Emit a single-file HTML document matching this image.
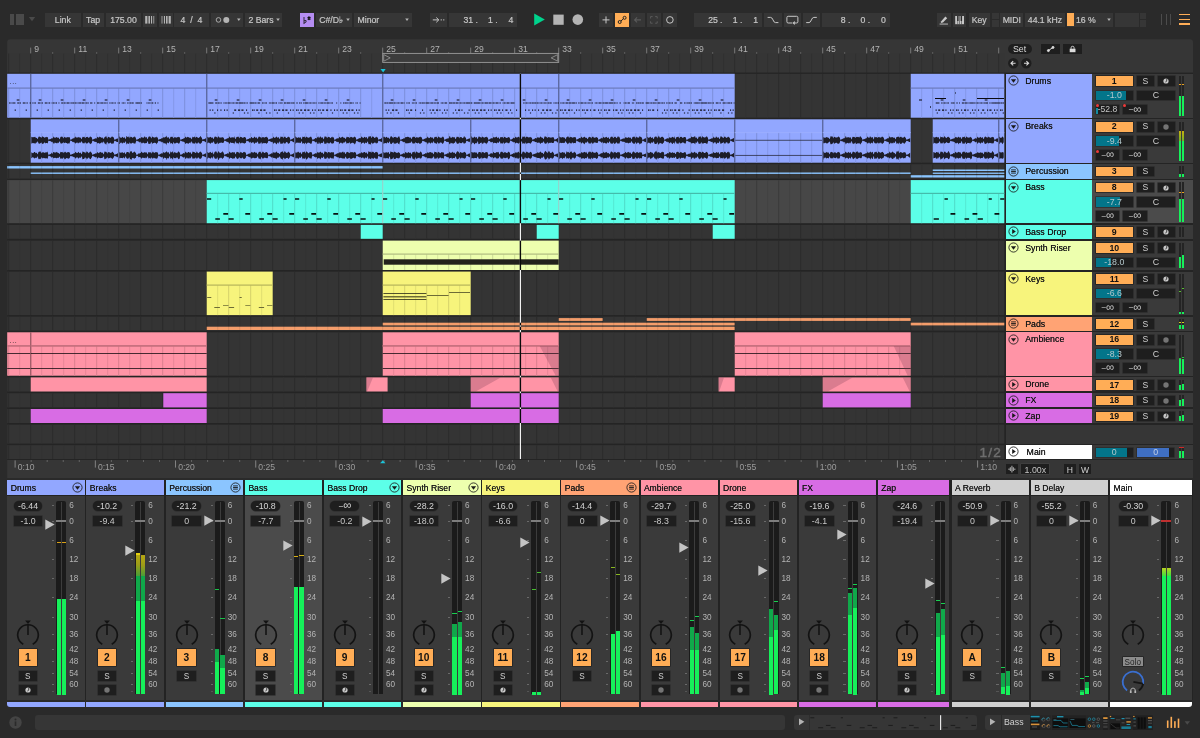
<!DOCTYPE html><html lang="en"><head><meta charset="utf-8"><title>Arrangement</title><style>
html,body{margin:0;padding:0;background:#2a2a2a;}
body{width:1200px;height:738px;position:relative;overflow:hidden;will-change:transform;font-family:"Liberation Sans",sans-serif;font-size:8.7px;color:#c8c8c8;-webkit-font-smoothing:antialiased;}
.a{position:absolute;box-sizing:border-box;}
.t{text-align:center;color:#c8c8c8;white-space:nowrap;overflow:hidden;-webkit-text-stroke:0.2px #c8c8c8;}
.t .s{top:1.2px;}
.num{font-family:"Liberation Sans",sans-serif;letter-spacing:0.3px;}
.s{position:relative;top:0.7px;}
svg{overflow:visible;display:block;}
svg text{font-family:"Liberation Sans",sans-serif;}
</style></head><body>
<div class="a" style="left:10px;top:14px;width:4px;height:10.75px;background:#4a4a4a;"></div>
<div class="a" style="left:16px;top:14px;width:8px;height:10.75px;background:#4a4a4a;"></div>
<svg class="a" style="left:28px;top:16px" width="8" height="6" viewBox="0 0 8 6"><path d="M0.8 1 L7.2 1 L4 5.2 Z" fill="#4a4a4a"/></svg>
<div class="a t" style="left:45px;top:12.75px;width:35.6px;height:13.75px;background:#363636;line-height:13.75px;"><span class="s">Link</span></div>
<div class="a t" style="left:82.5px;top:12.75px;width:21.25px;height:13.75px;background:#363636;line-height:13.75px;"><span class="s">Tap</span></div>
<div class="a t" style="left:106px;top:12.75px;width:35px;height:13.75px;background:#363636;line-height:13.75px;"><span class="s">175.00</span></div>
<div class="a t" style="left:142.75px;top:12.75px;width:13.85px;height:13.75px;background:#363636;line-height:13.75px;"></div>
<svg class="a" style="left:142.75px;top:12.75px" width="14" height="13.75" viewBox="0 0 14 13.75"><g fill="#b4b4b4"><rect x="2.2" y="3" width="2.2" height="7.6"/><rect x="5.4" y="3" width="1.6" height="7.6"/><rect x="8" y="3" width="1.1" height="7.6"/><rect x="10.4" y="3" width="0.8" height="7.6"/></g></svg>
<div class="a t" style="left:158.5px;top:12.75px;width:14px;height:13.75px;background:#363636;line-height:13.75px;"></div>
<svg class="a" style="left:158.5px;top:12.75px" width="14" height="13.75" viewBox="0 0 14 13.75"><g fill="#b4b4b4"><rect x="2.6" y="3" width="0.8" height="7.6"/><rect x="4.9" y="3" width="1.1" height="7.6"/><rect x="7" y="3" width="1.6" height="7.6"/><rect x="9.6" y="3" width="2.2" height="7.6"/></g></svg>
<div class="a t" style="left:174px;top:12.75px;width:34.75px;height:13.75px;background:#363636;line-height:13.75px;"><span class="s">4&nbsp; /&nbsp; 4</span></div>
<div class="a t" style="left:211px;top:12.75px;width:32px;height:13.75px;background:#363636;line-height:13.75px;"></div>
<svg class="a" style="left:211px;top:12.75px" width="32" height="13.75" viewBox="0 0 32 13.75"><circle cx="7.5" cy="6.9" r="2.3" fill="none" stroke="#b4b4b4" stroke-width="0.9"/><circle cx="15.3" cy="6.9" r="3" fill="#b4b4b4"/><path d="M26 5.5 L29.6 5.5 L27.8 8.1 Z" fill="#b4b4b4"/></svg>
<div class="a t" style="left:245px;top:12.75px;width:37.25px;height:13.75px;background:#363636;line-height:13.75px;text-align:left;padding-left:3.5px;box-sizing:border-box;"><span class="s">2 Bars</span></div>
<svg class="a" style="left:274px;top:12.75px" width="8" height="13.75" viewBox="0 0 8 13.75"><path d="M2.2 5.5 L5.8 5.5 L4 8.1 Z" fill="#b4b4b4"/></svg>
<div class="a" style="left:300px;top:12.5px;width:14px;height:14.25px;background:#b58df2;"></div>
<svg class="a" style="left:300px;top:12.5px" width="14" height="14.25" viewBox="0 0 14 14.25"><g fill="#111"><path d="M3.6 4 L3.6 11.2 L6.4 9 Q7.2 7.4 5.6 7 L4.4 7.4 L4.4 4 Z M4.4 8.2 L5.4 7.8 Q6 8.2 5.4 9 L4.4 9.8 Z"/><rect x="7.4" y="4" width="3.2" height="0.9"/><rect x="7.4" y="5.6" width="3.2" height="0.9"/><rect x="8" y="3.4" width="0.8" height="3.7"/><rect x="9.3" y="3.4" width="0.8" height="3.7"/></g></svg>
<div class="a t" style="left:316.25px;top:12.75px;width:35.75px;height:13.75px;background:#363636;line-height:13.75px;text-align:left;padding-left:3px;box-sizing:border-box;"><span class="s">C#/D&#9837;</span></div>
<svg class="a" style="left:344px;top:12.75px" width="8" height="13.75" viewBox="0 0 8 13.75"><path d="M2.2 5.5 L5.8 5.5 L4 8.1 Z" fill="#b4b4b4"/></svg>
<div class="a t" style="left:354px;top:12.75px;width:58.25px;height:13.75px;background:#363636;line-height:13.75px;text-align:left;padding-left:3.5px;box-sizing:border-box;"><span class="s">Minor</span></div>
<svg class="a" style="left:402.5px;top:12.75px" width="8" height="13.75" viewBox="0 0 8 13.75"><path d="M2.2 5.5 L5.8 5.5 L4 8.1 Z" fill="#b4b4b4"/></svg>
<div class="a t" style="left:430px;top:12.75px;width:17.2px;height:13.75px;background:#363636;line-height:13.75px;"></div>
<svg class="a" style="left:430px;top:12.75px" width="17.2" height="13.75" viewBox="0 0 17.2 13.75"><g stroke="#c8c8c8" stroke-width="1" fill="none"><path d="M2.8 6.9 L8.6 6.9 M6.3 4.5 L8.8 6.9 L6.3 9.3"/><path d="M10.6 6.9 L12 6.9 M13 6.9 L14.4 6.9" stroke-width="0.9"/></g></svg>
<div class="a t" style="left:449px;top:12.75px;width:68.3px;height:13.75px;background:#363636;line-height:13.75px;"></div>
<div class="a" style="left:453.1px;top:13.25px;width:20px;height:13.75px;line-height:13.75px;text-align:right;color:#c8c8c8;-webkit-text-stroke:0.2px #c8c8c8;"><span class="s">31</span></div>
<div class="a" style="left:472.9px;top:13.25px;width:20px;height:13.75px;line-height:13.75px;text-align:right;color:#c8c8c8;-webkit-text-stroke:0.2px #c8c8c8;"><span class="s">1</span></div>
<div class="a" style="left:493.3px;top:13.25px;width:20px;height:13.75px;line-height:13.75px;text-align:right;color:#c8c8c8;-webkit-text-stroke:0.2px #c8c8c8;"><span class="s">4</span></div>
<div class="a" style="left:475.4px;top:13.25px;width:4px;height:13.75px;line-height:13.75px;text-align:left;color:#c8c8c8;-webkit-text-stroke:0.2px #c8c8c8;"><span class="s">.</span></div>
<div class="a" style="left:495.2px;top:13.25px;width:4px;height:13.75px;line-height:13.75px;text-align:left;color:#c8c8c8;-webkit-text-stroke:0.2px #c8c8c8;"><span class="s">.</span></div>
<svg class="a" style="left:532px;top:12px" width="50" height="16" viewBox="0 0 50 16"><path d="M2.2 1.6 L12.8 7.6 L2.2 13.6 Z" fill="#00d38d"/><rect x="21.3" y="2.6" width="10.4" height="10.2" fill="#b4b4b4"/><circle cx="45.8" cy="7.6" r="5.3" fill="#b4b4b4"/></svg>
<div class="a t" style="left:599px;top:12.75px;width:14px;height:13.75px;background:#363636;line-height:13.75px;"></div>
<svg class="a" style="left:599px;top:12.75px" width="14" height="13.75" viewBox="0 0 14 13.75"><path d="M7 3.4 L7 10.4 M3.5 6.9 L10.5 6.9" stroke="#c8c8c8" stroke-width="1" fill="none"/></svg>
<div class="a t" style="left:615px;top:12.75px;width:14px;height:13.75px;background:#ffad56;line-height:13.75px;"></div>
<svg class="a" style="left:615px;top:12.75px" width="14" height="13.75" viewBox="0 0 14 13.75"><g stroke="#222" stroke-width="1" fill="none"><circle cx="4.7" cy="9" r="1.5"/><circle cx="9.6" cy="4.8" r="1.5"/><path d="M5.9 8 L8.4 5.8"/></g></svg>
<div class="a t" style="left:631.3px;top:12.75px;width:13.7px;height:13.75px;background:#363636;line-height:13.75px;"></div>
<svg class="a" style="left:631.3px;top:12.75px" width="13.7" height="13.75" viewBox="0 0 13.7 13.75"><path d="M3.6 6.9 L10 6.9 M6.1 4.4 L3.6 6.9 L6.1 9.4" stroke="#5a5a5a" stroke-width="1.1" fill="none"/></svg>
<div class="a t" style="left:646.9px;top:12.75px;width:13.8px;height:13.75px;background:#363636;line-height:13.75px;"></div>
<svg class="a" style="left:646.9px;top:12.75px" width="13.8" height="13.75" viewBox="0 0 13.8 13.75"><path d="M3.6 5.5 L3.6 3.6 L5.6 3.6 M8.2 3.6 L10.2 3.6 L10.2 5.5 M10.2 8.3 L10.2 10.2 L8.2 10.2 M5.6 10.2 L3.6 10.2 L3.6 8.3" stroke="#5a5a5a" stroke-width="1" fill="none"/></svg>
<div class="a t" style="left:662.9px;top:12.75px;width:13.9px;height:13.75px;background:#363636;line-height:13.75px;"></div>
<svg class="a" style="left:662.9px;top:12.75px" width="13.9" height="13.75" viewBox="0 0 13.9 13.75"><circle cx="6.9" cy="6.9" r="3.3" fill="none" stroke="#c8c8c8" stroke-width="1"/></svg>
<div class="a t" style="left:694px;top:12.75px;width:68px;height:13.75px;background:#363636;line-height:13.75px;"></div>
<div class="a" style="left:697.8px;top:13.25px;width:20px;height:13.75px;line-height:13.75px;text-align:right;color:#c8c8c8;-webkit-text-stroke:0.2px #c8c8c8;"><span class="s">25</span></div>
<div class="a" style="left:717.6px;top:13.25px;width:20px;height:13.75px;line-height:13.75px;text-align:right;color:#c8c8c8;-webkit-text-stroke:0.2px #c8c8c8;"><span class="s">1</span></div>
<div class="a" style="left:738px;top:13.25px;width:20px;height:13.75px;line-height:13.75px;text-align:right;color:#c8c8c8;-webkit-text-stroke:0.2px #c8c8c8;"><span class="s">1</span></div>
<div class="a" style="left:720.1px;top:13.25px;width:4px;height:13.75px;line-height:13.75px;text-align:left;color:#c8c8c8;-webkit-text-stroke:0.2px #c8c8c8;"><span class="s">.</span></div>
<div class="a" style="left:739.9px;top:13.25px;width:4px;height:13.75px;line-height:13.75px;text-align:left;color:#c8c8c8;-webkit-text-stroke:0.2px #c8c8c8;"><span class="s">.</span></div>
<div class="a t" style="left:764px;top:12.75px;width:17.9px;height:13.75px;background:#363636;line-height:13.75px;"></div>
<svg class="a" style="left:764px;top:12.75px" width="18" height="13.75" viewBox="0 0 18 13.75"><path d="M3.6 4.4 L6.6 4.4 Q8 4.4 9 6.9 Q10 9.6 11.4 9.6 L14.4 9.6" stroke="#c8c8c8" stroke-width="1" fill="none"/></svg>
<div class="a t" style="left:783.8px;top:12.75px;width:17.2px;height:13.75px;background:#363636;line-height:13.75px;"></div>
<svg class="a" style="left:783.8px;top:12.75px" width="17.2" height="13.75" viewBox="0 0 17.2 13.75"><path d="M8.2 10 L4.2 10 Q2.9 10 2.9 8.7 L2.9 4.6 Q2.9 3.3 4.2 3.3 L12.6 3.3 Q13.9 3.3 13.9 4.6 L13.9 8.7 Q13.9 10 12.6 10 L10.5 10" stroke="#c8c8c8" stroke-width="1" fill="none"/><path d="M10.8 8 L8.4 10 L10.8 12 Z" fill="#c8c8c8"/></svg>
<div class="a t" style="left:802.7px;top:12.75px;width:17.1px;height:13.75px;background:#363636;line-height:13.75px;"></div>
<svg class="a" style="left:802.7px;top:12.75px" width="17.1" height="13.75" viewBox="0 0 17.1 13.75"><path d="M3.2 9.6 L6 9.6 Q7.4 9.6 8.4 6.9 Q9.4 4.4 10.8 4.4 L13.8 4.4" stroke="#c8c8c8" stroke-width="1" fill="none"/></svg>
<div class="a t" style="left:821.7px;top:12.75px;width:68.1px;height:13.75px;background:#363636;line-height:13.75px;"></div>
<div class="a" style="left:825.6px;top:13.25px;width:20px;height:13.75px;line-height:13.75px;text-align:right;color:#c8c8c8;-webkit-text-stroke:0.2px #c8c8c8;"><span class="s">8</span></div>
<div class="a" style="left:845.4px;top:13.25px;width:20px;height:13.75px;line-height:13.75px;text-align:right;color:#c8c8c8;-webkit-text-stroke:0.2px #c8c8c8;"><span class="s">0</span></div>
<div class="a" style="left:865.8px;top:13.25px;width:20px;height:13.75px;line-height:13.75px;text-align:right;color:#c8c8c8;-webkit-text-stroke:0.2px #c8c8c8;"><span class="s">0</span></div>
<div class="a" style="left:847.9px;top:13.25px;width:4px;height:13.75px;line-height:13.75px;text-align:left;color:#c8c8c8;-webkit-text-stroke:0.2px #c8c8c8;"><span class="s">.</span></div>
<div class="a" style="left:867.7px;top:13.25px;width:4px;height:13.75px;line-height:13.75px;text-align:left;color:#c8c8c8;-webkit-text-stroke:0.2px #c8c8c8;"><span class="s">.</span></div>
<div class="a t" style="left:937px;top:12.75px;width:13.7px;height:13.75px;background:#363636;line-height:13.75px;"></div>
<svg class="a" style="left:937px;top:12.75px" width="13.7" height="13.75" viewBox="0 0 13.7 13.75"><path d="M4.2 8.2 L8.4 3.6 L10.2 5.2 L6 9.6 L3.8 9.9 Z" fill="#c8c8c8"/><rect x="2.6" y="10.6" width="8.4" height="0.9" fill="#c8c8c8"/></svg>
<div class="a t" style="left:953px;top:12.75px;width:13.2px;height:13.75px;background:#363636;line-height:13.75px;"></div>
<svg class="a" style="left:953px;top:12.75px" width="13.2" height="13.75" viewBox="0 0 13.2 13.75"><rect x="2.2" y="3" width="8.8" height="8.2" fill="#c8c8c8"/><g fill="#2a2a2a"><rect x="4.1" y="3" width="1.5" height="5"/><rect x="7.6" y="3" width="1.5" height="5"/><rect x="4.6" y="8" width="0.5" height="3.2"/><rect x="6.4" y="3" width="0.5" height="8.2"/><rect x="8.1" y="8" width="0.5" height="3.2"/></g></svg>
<div class="a t" style="left:968.6px;top:12.75px;width:21.2px;height:13.75px;background:#363636;line-height:13.75px;"><span class="s">Key</span></div>
<div class="a" style="left:991.5px;top:12.75px;width:7px;height:6.5px;background:#363636;"></div>
<div class="a" style="left:991.5px;top:20px;width:7px;height:6.5px;background:#363636;"></div>
<div class="a t" style="left:1000.3px;top:12.75px;width:23px;height:13.75px;background:#363636;line-height:13.75px;"><span class="s">MIDI</span></div>
<div class="a t" style="left:1025px;top:12.75px;width:39.9px;height:13.75px;background:#363636;line-height:13.75px;"><span class="s">44.1 kHz</span></div>
<div class="a t" style="left:1066.9px;top:12.75px;width:46.5px;height:13.75px;background:#363636;line-height:13.75px;text-align:left;padding-left:9px;box-sizing:border-box;"><span class="s">16 %</span></div>
<div class="a" style="left:1067.3px;top:13.2px;width:6.4px;height:12.8px;background:#ffad56;"></div>
<svg class="a" style="left:1104.5px;top:12.75px" width="8" height="13.75" viewBox="0 0 8 13.75"><path d="M2.2 5.5 L5.8 5.5 L4 8.1 Z" fill="#b4b4b4"/></svg>
<div class="a t" style="left:1115px;top:12.75px;width:23.5px;height:13.75px;background:#363636;line-height:13.75px;"></div>
<div class="a" style="left:1140px;top:12.75px;width:6.3px;height:6.5px;background:#363636;"></div>
<div class="a" style="left:1140px;top:20px;width:6.3px;height:6.5px;background:#363636;"></div>
<div class="a" style="left:1160.8px;top:13.75px;width:1px;height:11px;background:#4c4c4c;"></div>
<div class="a" style="left:1165.7px;top:13.75px;width:1px;height:11px;background:#4c4c4c;"></div>
<div class="a" style="left:1170.2px;top:13.75px;width:1px;height:11px;background:#4c4c4c;"></div>
<div class="a" style="left:1179px;top:13.7px;width:11px;height:1.6px;background:#ffad56;"></div>
<div class="a" style="left:1179px;top:18.6px;width:11px;height:1.6px;background:#ffad56;"></div>
<div class="a" style="left:1179px;top:23.4px;width:11px;height:1.6px;background:#ffad56;"></div>
<svg class="a" style="left:0;top:0" width="1200" height="738" viewBox="0 0 1200 738" shape-rendering="auto"><path d="M7.2 478 V42.2 Q7.2 39.2 10.2 39.2 H1190 Q1193 39.2 1193 42.2 V478 Z" fill="#363636"/><rect x="7.2" y="53.5" width="997.1" height="20" fill="#353535"/><path d="M8.7 53.6V73.8M30.7 53.6V73.8M52.7 53.6V73.8M74.7 53.6V73.8M96.7 53.6V73.8M118.7 53.6V73.8M140.7 53.6V73.8M162.7 53.6V73.8M184.7 53.6V73.8M206.7 53.6V73.8M228.7 53.6V73.8M250.7 53.6V73.8M272.7 53.6V73.8M294.7 53.6V73.8M316.7 53.6V73.8M338.7 53.6V73.8M360.7 53.6V73.8M382.7 53.6V73.8M404.7 53.6V73.8M426.7 53.6V73.8M448.7 53.6V73.8M470.7 53.6V73.8M492.7 53.6V73.8M514.7 53.6V73.8M536.7 53.6V73.8M558.7 53.6V73.8M580.7 53.6V73.8M602.7 53.6V73.8M624.7 53.6V73.8M646.7 53.6V73.8M668.7 53.6V73.8M690.7 53.6V73.8M712.7 53.6V73.8M734.7 53.6V73.8M756.7 53.6V73.8M778.7 53.6V73.8M800.7 53.6V73.8M822.7 53.6V73.8M844.7 53.6V73.8M866.7 53.6V73.8M888.7 53.6V73.8M910.7 53.6V73.8M932.7 53.6V73.8M954.7 53.6V73.8M976.7 53.6V73.8M998.7 53.6V73.8" stroke="#2c2c2c" stroke-width="1" fill="none"/><path d="M19.7 53.6V73.8M41.7 53.6V73.8M63.7 53.6V73.8M85.7 53.6V73.8M107.7 53.6V73.8M129.7 53.6V73.8M151.7 53.6V73.8M173.7 53.6V73.8M195.7 53.6V73.8M217.7 53.6V73.8M239.7 53.6V73.8M261.7 53.6V73.8M283.7 53.6V73.8M305.7 53.6V73.8M327.7 53.6V73.8M349.7 53.6V73.8M371.7 53.6V73.8M393.7 53.6V73.8M415.7 53.6V73.8M437.7 53.6V73.8M459.7 53.6V73.8M481.7 53.6V73.8M503.7 53.6V73.8M525.7 53.6V73.8M547.7 53.6V73.8M569.7 53.6V73.8M591.7 53.6V73.8M613.7 53.6V73.8M635.7 53.6V73.8M657.7 53.6V73.8M679.7 53.6V73.8M701.7 53.6V73.8M723.7 53.6V73.8M745.7 53.6V73.8M767.7 53.6V73.8M789.7 53.6V73.8M811.7 53.6V73.8M833.7 53.6V73.8M855.7 53.6V73.8M877.7 53.6V73.8M899.7 53.6V73.8M921.7 53.6V73.8M943.7 53.6V73.8M965.7 53.6V73.8M987.7 53.6V73.8" stroke="#303030" stroke-width="0.9" fill="none"/><rect x="7.2" y="72.6" width="1185.8" height="387.4" fill="#242424"/><rect x="7.2" y="73.8" width="997.1" height="43.9" fill="#343434"/><path d="M8.7 73.8V117.7M30.7 73.8V117.7M52.7 73.8V117.7M74.7 73.8V117.7M96.7 73.8V117.7M118.7 73.8V117.7M140.7 73.8V117.7M162.7 73.8V117.7M184.7 73.8V117.7M206.7 73.8V117.7M228.7 73.8V117.7M250.7 73.8V117.7M272.7 73.8V117.7M294.7 73.8V117.7M316.7 73.8V117.7M338.7 73.8V117.7M360.7 73.8V117.7M382.7 73.8V117.7M404.7 73.8V117.7M426.7 73.8V117.7M448.7 73.8V117.7M470.7 73.8V117.7M492.7 73.8V117.7M514.7 73.8V117.7M536.7 73.8V117.7M558.7 73.8V117.7M580.7 73.8V117.7M602.7 73.8V117.7M624.7 73.8V117.7M646.7 73.8V117.7M668.7 73.8V117.7M690.7 73.8V117.7M712.7 73.8V117.7M734.7 73.8V117.7M756.7 73.8V117.7M778.7 73.8V117.7M800.7 73.8V117.7M822.7 73.8V117.7M844.7 73.8V117.7M866.7 73.8V117.7M888.7 73.8V117.7M910.7 73.8V117.7M932.7 73.8V117.7M954.7 73.8V117.7M976.7 73.8V117.7M998.7 73.8V117.7" stroke="#2c2c2c" stroke-width="1" fill="none"/><path d="M19.7 73.8V117.7M41.7 73.8V117.7M63.7 73.8V117.7M85.7 73.8V117.7M107.7 73.8V117.7M129.7 73.8V117.7M151.7 73.8V117.7M173.7 73.8V117.7M195.7 73.8V117.7M217.7 73.8V117.7M239.7 73.8V117.7M261.7 73.8V117.7M283.7 73.8V117.7M305.7 73.8V117.7M327.7 73.8V117.7M349.7 73.8V117.7M371.7 73.8V117.7M393.7 73.8V117.7M415.7 73.8V117.7M437.7 73.8V117.7M459.7 73.8V117.7M481.7 73.8V117.7M503.7 73.8V117.7M525.7 73.8V117.7M547.7 73.8V117.7M569.7 73.8V117.7M591.7 73.8V117.7M613.7 73.8V117.7M635.7 73.8V117.7M657.7 73.8V117.7M679.7 73.8V117.7M701.7 73.8V117.7M723.7 73.8V117.7M745.7 73.8V117.7M767.7 73.8V117.7M789.7 73.8V117.7M811.7 73.8V117.7M833.7 73.8V117.7M855.7 73.8V117.7M877.7 73.8V117.7M899.7 73.8V117.7M921.7 73.8V117.7M943.7 73.8V117.7M965.7 73.8V117.7M987.7 73.8V117.7" stroke="#323232" stroke-width="0.9" fill="none"/><rect x="7.2" y="119.3" width="997.1" height="43.4" fill="#343434"/><path d="M8.7 119.3V162.7M30.7 119.3V162.7M52.7 119.3V162.7M74.7 119.3V162.7M96.7 119.3V162.7M118.7 119.3V162.7M140.7 119.3V162.7M162.7 119.3V162.7M184.7 119.3V162.7M206.7 119.3V162.7M228.7 119.3V162.7M250.7 119.3V162.7M272.7 119.3V162.7M294.7 119.3V162.7M316.7 119.3V162.7M338.7 119.3V162.7M360.7 119.3V162.7M382.7 119.3V162.7M404.7 119.3V162.7M426.7 119.3V162.7M448.7 119.3V162.7M470.7 119.3V162.7M492.7 119.3V162.7M514.7 119.3V162.7M536.7 119.3V162.7M558.7 119.3V162.7M580.7 119.3V162.7M602.7 119.3V162.7M624.7 119.3V162.7M646.7 119.3V162.7M668.7 119.3V162.7M690.7 119.3V162.7M712.7 119.3V162.7M734.7 119.3V162.7M756.7 119.3V162.7M778.7 119.3V162.7M800.7 119.3V162.7M822.7 119.3V162.7M844.7 119.3V162.7M866.7 119.3V162.7M888.7 119.3V162.7M910.7 119.3V162.7M932.7 119.3V162.7M954.7 119.3V162.7M976.7 119.3V162.7M998.7 119.3V162.7" stroke="#2c2c2c" stroke-width="1" fill="none"/><path d="M19.7 119.3V162.7M41.7 119.3V162.7M63.7 119.3V162.7M85.7 119.3V162.7M107.7 119.3V162.7M129.7 119.3V162.7M151.7 119.3V162.7M173.7 119.3V162.7M195.7 119.3V162.7M217.7 119.3V162.7M239.7 119.3V162.7M261.7 119.3V162.7M283.7 119.3V162.7M305.7 119.3V162.7M327.7 119.3V162.7M349.7 119.3V162.7M371.7 119.3V162.7M393.7 119.3V162.7M415.7 119.3V162.7M437.7 119.3V162.7M459.7 119.3V162.7M481.7 119.3V162.7M503.7 119.3V162.7M525.7 119.3V162.7M547.7 119.3V162.7M569.7 119.3V162.7M591.7 119.3V162.7M613.7 119.3V162.7M635.7 119.3V162.7M657.7 119.3V162.7M679.7 119.3V162.7M701.7 119.3V162.7M723.7 119.3V162.7M745.7 119.3V162.7M767.7 119.3V162.7M789.7 119.3V162.7M811.7 119.3V162.7M833.7 119.3V162.7M855.7 119.3V162.7M877.7 119.3V162.7M899.7 119.3V162.7M921.7 119.3V162.7M943.7 119.3V162.7M965.7 119.3V162.7M987.7 119.3V162.7" stroke="#323232" stroke-width="0.9" fill="none"/><rect x="7.2" y="164.2" width="997.1" height="14.4" fill="#343434"/><path d="M8.7 164.2V178.6M30.7 164.2V178.6M52.7 164.2V178.6M74.7 164.2V178.6M96.7 164.2V178.6M118.7 164.2V178.6M140.7 164.2V178.6M162.7 164.2V178.6M184.7 164.2V178.6M206.7 164.2V178.6M228.7 164.2V178.6M250.7 164.2V178.6M272.7 164.2V178.6M294.7 164.2V178.6M316.7 164.2V178.6M338.7 164.2V178.6M360.7 164.2V178.6M382.7 164.2V178.6M404.7 164.2V178.6M426.7 164.2V178.6M448.7 164.2V178.6M470.7 164.2V178.6M492.7 164.2V178.6M514.7 164.2V178.6M536.7 164.2V178.6M558.7 164.2V178.6M580.7 164.2V178.6M602.7 164.2V178.6M624.7 164.2V178.6M646.7 164.2V178.6M668.7 164.2V178.6M690.7 164.2V178.6M712.7 164.2V178.6M734.7 164.2V178.6M756.7 164.2V178.6M778.7 164.2V178.6M800.7 164.2V178.6M822.7 164.2V178.6M844.7 164.2V178.6M866.7 164.2V178.6M888.7 164.2V178.6M910.7 164.2V178.6M932.7 164.2V178.6M954.7 164.2V178.6M976.7 164.2V178.6M998.7 164.2V178.6" stroke="#2c2c2c" stroke-width="1" fill="none"/><path d="M19.7 164.2V178.6M41.7 164.2V178.6M63.7 164.2V178.6M85.7 164.2V178.6M107.7 164.2V178.6M129.7 164.2V178.6M151.7 164.2V178.6M173.7 164.2V178.6M195.7 164.2V178.6M217.7 164.2V178.6M239.7 164.2V178.6M261.7 164.2V178.6M283.7 164.2V178.6M305.7 164.2V178.6M327.7 164.2V178.6M349.7 164.2V178.6M371.7 164.2V178.6M393.7 164.2V178.6M415.7 164.2V178.6M437.7 164.2V178.6M459.7 164.2V178.6M481.7 164.2V178.6M503.7 164.2V178.6M525.7 164.2V178.6M547.7 164.2V178.6M569.7 164.2V178.6M591.7 164.2V178.6M613.7 164.2V178.6M635.7 164.2V178.6M657.7 164.2V178.6M679.7 164.2V178.6M701.7 164.2V178.6M723.7 164.2V178.6M745.7 164.2V178.6M767.7 164.2V178.6M789.7 164.2V178.6M811.7 164.2V178.6M833.7 164.2V178.6M855.7 164.2V178.6M877.7 164.2V178.6M899.7 164.2V178.6M921.7 164.2V178.6M943.7 164.2V178.6M965.7 164.2V178.6M987.7 164.2V178.6" stroke="#323232" stroke-width="0.9" fill="none"/><rect x="7.2" y="180.1" width="997.1" height="43.1" fill="#474747"/><path d="M8.7 180.1V223.2M30.7 180.1V223.2M52.7 180.1V223.2M74.7 180.1V223.2M96.7 180.1V223.2M118.7 180.1V223.2M140.7 180.1V223.2M162.7 180.1V223.2M184.7 180.1V223.2M206.7 180.1V223.2M228.7 180.1V223.2M250.7 180.1V223.2M272.7 180.1V223.2M294.7 180.1V223.2M316.7 180.1V223.2M338.7 180.1V223.2M360.7 180.1V223.2M382.7 180.1V223.2M404.7 180.1V223.2M426.7 180.1V223.2M448.7 180.1V223.2M470.7 180.1V223.2M492.7 180.1V223.2M514.7 180.1V223.2M536.7 180.1V223.2M558.7 180.1V223.2M580.7 180.1V223.2M602.7 180.1V223.2M624.7 180.1V223.2M646.7 180.1V223.2M668.7 180.1V223.2M690.7 180.1V223.2M712.7 180.1V223.2M734.7 180.1V223.2M756.7 180.1V223.2M778.7 180.1V223.2M800.7 180.1V223.2M822.7 180.1V223.2M844.7 180.1V223.2M866.7 180.1V223.2M888.7 180.1V223.2M910.7 180.1V223.2M932.7 180.1V223.2M954.7 180.1V223.2M976.7 180.1V223.2M998.7 180.1V223.2" stroke="#3b3b3b" stroke-width="1" fill="none"/><path d="M19.7 180.1V223.2M41.7 180.1V223.2M63.7 180.1V223.2M85.7 180.1V223.2M107.7 180.1V223.2M129.7 180.1V223.2M151.7 180.1V223.2M173.7 180.1V223.2M195.7 180.1V223.2M217.7 180.1V223.2M239.7 180.1V223.2M261.7 180.1V223.2M283.7 180.1V223.2M305.7 180.1V223.2M327.7 180.1V223.2M349.7 180.1V223.2M371.7 180.1V223.2M393.7 180.1V223.2M415.7 180.1V223.2M437.7 180.1V223.2M459.7 180.1V223.2M481.7 180.1V223.2M503.7 180.1V223.2M525.7 180.1V223.2M547.7 180.1V223.2M569.7 180.1V223.2M591.7 180.1V223.2M613.7 180.1V223.2M635.7 180.1V223.2M657.7 180.1V223.2M679.7 180.1V223.2M701.7 180.1V223.2M723.7 180.1V223.2M745.7 180.1V223.2M767.7 180.1V223.2M789.7 180.1V223.2M811.7 180.1V223.2M833.7 180.1V223.2M855.7 180.1V223.2M877.7 180.1V223.2M899.7 180.1V223.2M921.7 180.1V223.2M943.7 180.1V223.2M965.7 180.1V223.2M987.7 180.1V223.2" stroke="#414141" stroke-width="0.9" fill="none"/><rect x="7.2" y="224.9" width="997.1" height="13.9" fill="#343434"/><path d="M8.7 224.9V238.8M30.7 224.9V238.8M52.7 224.9V238.8M74.7 224.9V238.8M96.7 224.9V238.8M118.7 224.9V238.8M140.7 224.9V238.8M162.7 224.9V238.8M184.7 224.9V238.8M206.7 224.9V238.8M228.7 224.9V238.8M250.7 224.9V238.8M272.7 224.9V238.8M294.7 224.9V238.8M316.7 224.9V238.8M338.7 224.9V238.8M360.7 224.9V238.8M382.7 224.9V238.8M404.7 224.9V238.8M426.7 224.9V238.8M448.7 224.9V238.8M470.7 224.9V238.8M492.7 224.9V238.8M514.7 224.9V238.8M536.7 224.9V238.8M558.7 224.9V238.8M580.7 224.9V238.8M602.7 224.9V238.8M624.7 224.9V238.8M646.7 224.9V238.8M668.7 224.9V238.8M690.7 224.9V238.8M712.7 224.9V238.8M734.7 224.9V238.8M756.7 224.9V238.8M778.7 224.9V238.8M800.7 224.9V238.8M822.7 224.9V238.8M844.7 224.9V238.8M866.7 224.9V238.8M888.7 224.9V238.8M910.7 224.9V238.8M932.7 224.9V238.8M954.7 224.9V238.8M976.7 224.9V238.8M998.7 224.9V238.8" stroke="#2c2c2c" stroke-width="1" fill="none"/><path d="M19.7 224.9V238.8M41.7 224.9V238.8M63.7 224.9V238.8M85.7 224.9V238.8M107.7 224.9V238.8M129.7 224.9V238.8M151.7 224.9V238.8M173.7 224.9V238.8M195.7 224.9V238.8M217.7 224.9V238.8M239.7 224.9V238.8M261.7 224.9V238.8M283.7 224.9V238.8M305.7 224.9V238.8M327.7 224.9V238.8M349.7 224.9V238.8M371.7 224.9V238.8M393.7 224.9V238.8M415.7 224.9V238.8M437.7 224.9V238.8M459.7 224.9V238.8M481.7 224.9V238.8M503.7 224.9V238.8M525.7 224.9V238.8M547.7 224.9V238.8M569.7 224.9V238.8M591.7 224.9V238.8M613.7 224.9V238.8M635.7 224.9V238.8M657.7 224.9V238.8M679.7 224.9V238.8M701.7 224.9V238.8M723.7 224.9V238.8M745.7 224.9V238.8M767.7 224.9V238.8M789.7 224.9V238.8M811.7 224.9V238.8M833.7 224.9V238.8M855.7 224.9V238.8M877.7 224.9V238.8M899.7 224.9V238.8M921.7 224.9V238.8M943.7 224.9V238.8M965.7 224.9V238.8M987.7 224.9V238.8" stroke="#323232" stroke-width="0.9" fill="none"/><rect x="7.2" y="240.6" width="997.1" height="29.4" fill="#343434"/><path d="M8.7 240.6V270M30.7 240.6V270M52.7 240.6V270M74.7 240.6V270M96.7 240.6V270M118.7 240.6V270M140.7 240.6V270M162.7 240.6V270M184.7 240.6V270M206.7 240.6V270M228.7 240.6V270M250.7 240.6V270M272.7 240.6V270M294.7 240.6V270M316.7 240.6V270M338.7 240.6V270M360.7 240.6V270M382.7 240.6V270M404.7 240.6V270M426.7 240.6V270M448.7 240.6V270M470.7 240.6V270M492.7 240.6V270M514.7 240.6V270M536.7 240.6V270M558.7 240.6V270M580.7 240.6V270M602.7 240.6V270M624.7 240.6V270M646.7 240.6V270M668.7 240.6V270M690.7 240.6V270M712.7 240.6V270M734.7 240.6V270M756.7 240.6V270M778.7 240.6V270M800.7 240.6V270M822.7 240.6V270M844.7 240.6V270M866.7 240.6V270M888.7 240.6V270M910.7 240.6V270M932.7 240.6V270M954.7 240.6V270M976.7 240.6V270M998.7 240.6V270" stroke="#2c2c2c" stroke-width="1" fill="none"/><path d="M19.7 240.6V270M41.7 240.6V270M63.7 240.6V270M85.7 240.6V270M107.7 240.6V270M129.7 240.6V270M151.7 240.6V270M173.7 240.6V270M195.7 240.6V270M217.7 240.6V270M239.7 240.6V270M261.7 240.6V270M283.7 240.6V270M305.7 240.6V270M327.7 240.6V270M349.7 240.6V270M371.7 240.6V270M393.7 240.6V270M415.7 240.6V270M437.7 240.6V270M459.7 240.6V270M481.7 240.6V270M503.7 240.6V270M525.7 240.6V270M547.7 240.6V270M569.7 240.6V270M591.7 240.6V270M613.7 240.6V270M635.7 240.6V270M657.7 240.6V270M679.7 240.6V270M701.7 240.6V270M723.7 240.6V270M745.7 240.6V270M767.7 240.6V270M789.7 240.6V270M811.7 240.6V270M833.7 240.6V270M855.7 240.6V270M877.7 240.6V270M899.7 240.6V270M921.7 240.6V270M943.7 240.6V270M965.7 240.6V270M987.7 240.6V270" stroke="#323232" stroke-width="0.9" fill="none"/><rect x="7.2" y="271.6" width="997.1" height="43.5" fill="#343434"/><path d="M8.7 271.6V315.1M30.7 271.6V315.1M52.7 271.6V315.1M74.7 271.6V315.1M96.7 271.6V315.1M118.7 271.6V315.1M140.7 271.6V315.1M162.7 271.6V315.1M184.7 271.6V315.1M206.7 271.6V315.1M228.7 271.6V315.1M250.7 271.6V315.1M272.7 271.6V315.1M294.7 271.6V315.1M316.7 271.6V315.1M338.7 271.6V315.1M360.7 271.6V315.1M382.7 271.6V315.1M404.7 271.6V315.1M426.7 271.6V315.1M448.7 271.6V315.1M470.7 271.6V315.1M492.7 271.6V315.1M514.7 271.6V315.1M536.7 271.6V315.1M558.7 271.6V315.1M580.7 271.6V315.1M602.7 271.6V315.1M624.7 271.6V315.1M646.7 271.6V315.1M668.7 271.6V315.1M690.7 271.6V315.1M712.7 271.6V315.1M734.7 271.6V315.1M756.7 271.6V315.1M778.7 271.6V315.1M800.7 271.6V315.1M822.7 271.6V315.1M844.7 271.6V315.1M866.7 271.6V315.1M888.7 271.6V315.1M910.7 271.6V315.1M932.7 271.6V315.1M954.7 271.6V315.1M976.7 271.6V315.1M998.7 271.6V315.1" stroke="#2c2c2c" stroke-width="1" fill="none"/><path d="M19.7 271.6V315.1M41.7 271.6V315.1M63.7 271.6V315.1M85.7 271.6V315.1M107.7 271.6V315.1M129.7 271.6V315.1M151.7 271.6V315.1M173.7 271.6V315.1M195.7 271.6V315.1M217.7 271.6V315.1M239.7 271.6V315.1M261.7 271.6V315.1M283.7 271.6V315.1M305.7 271.6V315.1M327.7 271.6V315.1M349.7 271.6V315.1M371.7 271.6V315.1M393.7 271.6V315.1M415.7 271.6V315.1M437.7 271.6V315.1M459.7 271.6V315.1M481.7 271.6V315.1M503.7 271.6V315.1M525.7 271.6V315.1M547.7 271.6V315.1M569.7 271.6V315.1M591.7 271.6V315.1M613.7 271.6V315.1M635.7 271.6V315.1M657.7 271.6V315.1M679.7 271.6V315.1M701.7 271.6V315.1M723.7 271.6V315.1M745.7 271.6V315.1M767.7 271.6V315.1M789.7 271.6V315.1M811.7 271.6V315.1M833.7 271.6V315.1M855.7 271.6V315.1M877.7 271.6V315.1M899.7 271.6V315.1M921.7 271.6V315.1M943.7 271.6V315.1M965.7 271.6V315.1M987.7 271.6V315.1" stroke="#323232" stroke-width="0.9" fill="none"/><rect x="7.2" y="316.6" width="997.1" height="14" fill="#343434"/><path d="M8.7 316.6V330.6M30.7 316.6V330.6M52.7 316.6V330.6M74.7 316.6V330.6M96.7 316.6V330.6M118.7 316.6V330.6M140.7 316.6V330.6M162.7 316.6V330.6M184.7 316.6V330.6M206.7 316.6V330.6M228.7 316.6V330.6M250.7 316.6V330.6M272.7 316.6V330.6M294.7 316.6V330.6M316.7 316.6V330.6M338.7 316.6V330.6M360.7 316.6V330.6M382.7 316.6V330.6M404.7 316.6V330.6M426.7 316.6V330.6M448.7 316.6V330.6M470.7 316.6V330.6M492.7 316.6V330.6M514.7 316.6V330.6M536.7 316.6V330.6M558.7 316.6V330.6M580.7 316.6V330.6M602.7 316.6V330.6M624.7 316.6V330.6M646.7 316.6V330.6M668.7 316.6V330.6M690.7 316.6V330.6M712.7 316.6V330.6M734.7 316.6V330.6M756.7 316.6V330.6M778.7 316.6V330.6M800.7 316.6V330.6M822.7 316.6V330.6M844.7 316.6V330.6M866.7 316.6V330.6M888.7 316.6V330.6M910.7 316.6V330.6M932.7 316.6V330.6M954.7 316.6V330.6M976.7 316.6V330.6M998.7 316.6V330.6" stroke="#2c2c2c" stroke-width="1" fill="none"/><path d="M19.7 316.6V330.6M41.7 316.6V330.6M63.7 316.6V330.6M85.7 316.6V330.6M107.7 316.6V330.6M129.7 316.6V330.6M151.7 316.6V330.6M173.7 316.6V330.6M195.7 316.6V330.6M217.7 316.6V330.6M239.7 316.6V330.6M261.7 316.6V330.6M283.7 316.6V330.6M305.7 316.6V330.6M327.7 316.6V330.6M349.7 316.6V330.6M371.7 316.6V330.6M393.7 316.6V330.6M415.7 316.6V330.6M437.7 316.6V330.6M459.7 316.6V330.6M481.7 316.6V330.6M503.7 316.6V330.6M525.7 316.6V330.6M547.7 316.6V330.6M569.7 316.6V330.6M591.7 316.6V330.6M613.7 316.6V330.6M635.7 316.6V330.6M657.7 316.6V330.6M679.7 316.6V330.6M701.7 316.6V330.6M723.7 316.6V330.6M745.7 316.6V330.6M767.7 316.6V330.6M789.7 316.6V330.6M811.7 316.6V330.6M833.7 316.6V330.6M855.7 316.6V330.6M877.7 316.6V330.6M899.7 316.6V330.6M921.7 316.6V330.6M943.7 316.6V330.6M965.7 316.6V330.6M987.7 316.6V330.6" stroke="#323232" stroke-width="0.9" fill="none"/><rect x="7.2" y="332.3" width="997.1" height="43.4" fill="#343434"/><path d="M8.7 332.3V375.7M30.7 332.3V375.7M52.7 332.3V375.7M74.7 332.3V375.7M96.7 332.3V375.7M118.7 332.3V375.7M140.7 332.3V375.7M162.7 332.3V375.7M184.7 332.3V375.7M206.7 332.3V375.7M228.7 332.3V375.7M250.7 332.3V375.7M272.7 332.3V375.7M294.7 332.3V375.7M316.7 332.3V375.7M338.7 332.3V375.7M360.7 332.3V375.7M382.7 332.3V375.7M404.7 332.3V375.7M426.7 332.3V375.7M448.7 332.3V375.7M470.7 332.3V375.7M492.7 332.3V375.7M514.7 332.3V375.7M536.7 332.3V375.7M558.7 332.3V375.7M580.7 332.3V375.7M602.7 332.3V375.7M624.7 332.3V375.7M646.7 332.3V375.7M668.7 332.3V375.7M690.7 332.3V375.7M712.7 332.3V375.7M734.7 332.3V375.7M756.7 332.3V375.7M778.7 332.3V375.7M800.7 332.3V375.7M822.7 332.3V375.7M844.7 332.3V375.7M866.7 332.3V375.7M888.7 332.3V375.7M910.7 332.3V375.7M932.7 332.3V375.7M954.7 332.3V375.7M976.7 332.3V375.7M998.7 332.3V375.7" stroke="#2c2c2c" stroke-width="1" fill="none"/><path d="M19.7 332.3V375.7M41.7 332.3V375.7M63.7 332.3V375.7M85.7 332.3V375.7M107.7 332.3V375.7M129.7 332.3V375.7M151.7 332.3V375.7M173.7 332.3V375.7M195.7 332.3V375.7M217.7 332.3V375.7M239.7 332.3V375.7M261.7 332.3V375.7M283.7 332.3V375.7M305.7 332.3V375.7M327.7 332.3V375.7M349.7 332.3V375.7M371.7 332.3V375.7M393.7 332.3V375.7M415.7 332.3V375.7M437.7 332.3V375.7M459.7 332.3V375.7M481.7 332.3V375.7M503.7 332.3V375.7M525.7 332.3V375.7M547.7 332.3V375.7M569.7 332.3V375.7M591.7 332.3V375.7M613.7 332.3V375.7M635.7 332.3V375.7M657.7 332.3V375.7M679.7 332.3V375.7M701.7 332.3V375.7M723.7 332.3V375.7M745.7 332.3V375.7M767.7 332.3V375.7M789.7 332.3V375.7M811.7 332.3V375.7M833.7 332.3V375.7M855.7 332.3V375.7M877.7 332.3V375.7M899.7 332.3V375.7M921.7 332.3V375.7M943.7 332.3V375.7M965.7 332.3V375.7M987.7 332.3V375.7" stroke="#323232" stroke-width="0.9" fill="none"/><rect x="7.2" y="377.4" width="997.1" height="14.1" fill="#343434"/><path d="M8.7 377.4V391.5M30.7 377.4V391.5M52.7 377.4V391.5M74.7 377.4V391.5M96.7 377.4V391.5M118.7 377.4V391.5M140.7 377.4V391.5M162.7 377.4V391.5M184.7 377.4V391.5M206.7 377.4V391.5M228.7 377.4V391.5M250.7 377.4V391.5M272.7 377.4V391.5M294.7 377.4V391.5M316.7 377.4V391.5M338.7 377.4V391.5M360.7 377.4V391.5M382.7 377.4V391.5M404.7 377.4V391.5M426.7 377.4V391.5M448.7 377.4V391.5M470.7 377.4V391.5M492.7 377.4V391.5M514.7 377.4V391.5M536.7 377.4V391.5M558.7 377.4V391.5M580.7 377.4V391.5M602.7 377.4V391.5M624.7 377.4V391.5M646.7 377.4V391.5M668.7 377.4V391.5M690.7 377.4V391.5M712.7 377.4V391.5M734.7 377.4V391.5M756.7 377.4V391.5M778.7 377.4V391.5M800.7 377.4V391.5M822.7 377.4V391.5M844.7 377.4V391.5M866.7 377.4V391.5M888.7 377.4V391.5M910.7 377.4V391.5M932.7 377.4V391.5M954.7 377.4V391.5M976.7 377.4V391.5M998.7 377.4V391.5" stroke="#2c2c2c" stroke-width="1" fill="none"/><path d="M19.7 377.4V391.5M41.7 377.4V391.5M63.7 377.4V391.5M85.7 377.4V391.5M107.7 377.4V391.5M129.7 377.4V391.5M151.7 377.4V391.5M173.7 377.4V391.5M195.7 377.4V391.5M217.7 377.4V391.5M239.7 377.4V391.5M261.7 377.4V391.5M283.7 377.4V391.5M305.7 377.4V391.5M327.7 377.4V391.5M349.7 377.4V391.5M371.7 377.4V391.5M393.7 377.4V391.5M415.7 377.4V391.5M437.7 377.4V391.5M459.7 377.4V391.5M481.7 377.4V391.5M503.7 377.4V391.5M525.7 377.4V391.5M547.7 377.4V391.5M569.7 377.4V391.5M591.7 377.4V391.5M613.7 377.4V391.5M635.7 377.4V391.5M657.7 377.4V391.5M679.7 377.4V391.5M701.7 377.4V391.5M723.7 377.4V391.5M745.7 377.4V391.5M767.7 377.4V391.5M789.7 377.4V391.5M811.7 377.4V391.5M833.7 377.4V391.5M855.7 377.4V391.5M877.7 377.4V391.5M899.7 377.4V391.5M921.7 377.4V391.5M943.7 377.4V391.5M965.7 377.4V391.5M987.7 377.4V391.5" stroke="#323232" stroke-width="0.9" fill="none"/><rect x="7.2" y="393.2" width="997.1" height="14.2" fill="#343434"/><path d="M8.7 393.2V407.4M30.7 393.2V407.4M52.7 393.2V407.4M74.7 393.2V407.4M96.7 393.2V407.4M118.7 393.2V407.4M140.7 393.2V407.4M162.7 393.2V407.4M184.7 393.2V407.4M206.7 393.2V407.4M228.7 393.2V407.4M250.7 393.2V407.4M272.7 393.2V407.4M294.7 393.2V407.4M316.7 393.2V407.4M338.7 393.2V407.4M360.7 393.2V407.4M382.7 393.2V407.4M404.7 393.2V407.4M426.7 393.2V407.4M448.7 393.2V407.4M470.7 393.2V407.4M492.7 393.2V407.4M514.7 393.2V407.4M536.7 393.2V407.4M558.7 393.2V407.4M580.7 393.2V407.4M602.7 393.2V407.4M624.7 393.2V407.4M646.7 393.2V407.4M668.7 393.2V407.4M690.7 393.2V407.4M712.7 393.2V407.4M734.7 393.2V407.4M756.7 393.2V407.4M778.7 393.2V407.4M800.7 393.2V407.4M822.7 393.2V407.4M844.7 393.2V407.4M866.7 393.2V407.4M888.7 393.2V407.4M910.7 393.2V407.4M932.7 393.2V407.4M954.7 393.2V407.4M976.7 393.2V407.4M998.7 393.2V407.4" stroke="#2c2c2c" stroke-width="1" fill="none"/><path d="M19.7 393.2V407.4M41.7 393.2V407.4M63.7 393.2V407.4M85.7 393.2V407.4M107.7 393.2V407.4M129.7 393.2V407.4M151.7 393.2V407.4M173.7 393.2V407.4M195.7 393.2V407.4M217.7 393.2V407.4M239.7 393.2V407.4M261.7 393.2V407.4M283.7 393.2V407.4M305.7 393.2V407.4M327.7 393.2V407.4M349.7 393.2V407.4M371.7 393.2V407.4M393.7 393.2V407.4M415.7 393.2V407.4M437.7 393.2V407.4M459.7 393.2V407.4M481.7 393.2V407.4M503.7 393.2V407.4M525.7 393.2V407.4M547.7 393.2V407.4M569.7 393.2V407.4M591.7 393.2V407.4M613.7 393.2V407.4M635.7 393.2V407.4M657.7 393.2V407.4M679.7 393.2V407.4M701.7 393.2V407.4M723.7 393.2V407.4M745.7 393.2V407.4M767.7 393.2V407.4M789.7 393.2V407.4M811.7 393.2V407.4M833.7 393.2V407.4M855.7 393.2V407.4M877.7 393.2V407.4M899.7 393.2V407.4M921.7 393.2V407.4M943.7 393.2V407.4M965.7 393.2V407.4M987.7 393.2V407.4" stroke="#323232" stroke-width="0.9" fill="none"/><rect x="7.2" y="409" width="997.1" height="14" fill="#343434"/><path d="M8.7 409V423M30.7 409V423M52.7 409V423M74.7 409V423M96.7 409V423M118.7 409V423M140.7 409V423M162.7 409V423M184.7 409V423M206.7 409V423M228.7 409V423M250.7 409V423M272.7 409V423M294.7 409V423M316.7 409V423M338.7 409V423M360.7 409V423M382.7 409V423M404.7 409V423M426.7 409V423M448.7 409V423M470.7 409V423M492.7 409V423M514.7 409V423M536.7 409V423M558.7 409V423M580.7 409V423M602.7 409V423M624.7 409V423M646.7 409V423M668.7 409V423M690.7 409V423M712.7 409V423M734.7 409V423M756.7 409V423M778.7 409V423M800.7 409V423M822.7 409V423M844.7 409V423M866.7 409V423M888.7 409V423M910.7 409V423M932.7 409V423M954.7 409V423M976.7 409V423M998.7 409V423" stroke="#2c2c2c" stroke-width="1" fill="none"/><path d="M19.7 409V423M41.7 409V423M63.7 409V423M85.7 409V423M107.7 409V423M129.7 409V423M151.7 409V423M173.7 409V423M195.7 409V423M217.7 409V423M239.7 409V423M261.7 409V423M283.7 409V423M305.7 409V423M327.7 409V423M349.7 409V423M371.7 409V423M393.7 409V423M415.7 409V423M437.7 409V423M459.7 409V423M481.7 409V423M503.7 409V423M525.7 409V423M547.7 409V423M569.7 409V423M591.7 409V423M613.7 409V423M635.7 409V423M657.7 409V423M679.7 409V423M701.7 409V423M723.7 409V423M745.7 409V423M767.7 409V423M789.7 409V423M811.7 409V423M833.7 409V423M855.7 409V423M877.7 409V423M899.7 409V423M921.7 409V423M943.7 409V423M965.7 409V423M987.7 409V423" stroke="#323232" stroke-width="0.9" fill="none"/><rect x="7.2" y="424.6" width="997.1" height="19" fill="#343434"/><path d="M8.7 424.6V443.6M30.7 424.6V443.6M52.7 424.6V443.6M74.7 424.6V443.6M96.7 424.6V443.6M118.7 424.6V443.6M140.7 424.6V443.6M162.7 424.6V443.6M184.7 424.6V443.6M206.7 424.6V443.6M228.7 424.6V443.6M250.7 424.6V443.6M272.7 424.6V443.6M294.7 424.6V443.6M316.7 424.6V443.6M338.7 424.6V443.6M360.7 424.6V443.6M382.7 424.6V443.6M404.7 424.6V443.6M426.7 424.6V443.6M448.7 424.6V443.6M470.7 424.6V443.6M492.7 424.6V443.6M514.7 424.6V443.6M536.7 424.6V443.6M558.7 424.6V443.6M580.7 424.6V443.6M602.7 424.6V443.6M624.7 424.6V443.6M646.7 424.6V443.6M668.7 424.6V443.6M690.7 424.6V443.6M712.7 424.6V443.6M734.7 424.6V443.6M756.7 424.6V443.6M778.7 424.6V443.6M800.7 424.6V443.6M822.7 424.6V443.6M844.7 424.6V443.6M866.7 424.6V443.6M888.7 424.6V443.6M910.7 424.6V443.6M932.7 424.6V443.6M954.7 424.6V443.6M976.7 424.6V443.6M998.7 424.6V443.6" stroke="#2c2c2c" stroke-width="1" fill="none"/><path d="M19.7 424.6V443.6M41.7 424.6V443.6M63.7 424.6V443.6M85.7 424.6V443.6M107.7 424.6V443.6M129.7 424.6V443.6M151.7 424.6V443.6M173.7 424.6V443.6M195.7 424.6V443.6M217.7 424.6V443.6M239.7 424.6V443.6M261.7 424.6V443.6M283.7 424.6V443.6M305.7 424.6V443.6M327.7 424.6V443.6M349.7 424.6V443.6M371.7 424.6V443.6M393.7 424.6V443.6M415.7 424.6V443.6M437.7 424.6V443.6M459.7 424.6V443.6M481.7 424.6V443.6M503.7 424.6V443.6M525.7 424.6V443.6M547.7 424.6V443.6M569.7 424.6V443.6M591.7 424.6V443.6M613.7 424.6V443.6M635.7 424.6V443.6M657.7 424.6V443.6M679.7 424.6V443.6M701.7 424.6V443.6M723.7 424.6V443.6M745.7 424.6V443.6M767.7 424.6V443.6M789.7 424.6V443.6M811.7 424.6V443.6M833.7 424.6V443.6M855.7 424.6V443.6M877.7 424.6V443.6M899.7 424.6V443.6M921.7 424.6V443.6M943.7 424.6V443.6M965.7 424.6V443.6M987.7 424.6V443.6" stroke="#323232" stroke-width="0.9" fill="none"/><rect x="7.2" y="445.1" width="997.1" height="13.9" fill="#343434"/><path d="M8.7 445.1V459M30.7 445.1V459M52.7 445.1V459M74.7 445.1V459M96.7 445.1V459M118.7 445.1V459M140.7 445.1V459M162.7 445.1V459M184.7 445.1V459M206.7 445.1V459M228.7 445.1V459M250.7 445.1V459M272.7 445.1V459M294.7 445.1V459M316.7 445.1V459M338.7 445.1V459M360.7 445.1V459M382.7 445.1V459M404.7 445.1V459M426.7 445.1V459M448.7 445.1V459M470.7 445.1V459M492.7 445.1V459M514.7 445.1V459M536.7 445.1V459M558.7 445.1V459M580.7 445.1V459M602.7 445.1V459M624.7 445.1V459M646.7 445.1V459M668.7 445.1V459M690.7 445.1V459M712.7 445.1V459M734.7 445.1V459M756.7 445.1V459M778.7 445.1V459M800.7 445.1V459M822.7 445.1V459M844.7 445.1V459M866.7 445.1V459M888.7 445.1V459M910.7 445.1V459M932.7 445.1V459M954.7 445.1V459M976.7 445.1V459M998.7 445.1V459" stroke="#2c2c2c" stroke-width="1" fill="none"/><path d="M19.7 445.1V459M41.7 445.1V459M63.7 445.1V459M85.7 445.1V459M107.7 445.1V459M129.7 445.1V459M151.7 445.1V459M173.7 445.1V459M195.7 445.1V459M217.7 445.1V459M239.7 445.1V459M261.7 445.1V459M283.7 445.1V459M305.7 445.1V459M327.7 445.1V459M349.7 445.1V459M371.7 445.1V459M393.7 445.1V459M415.7 445.1V459M437.7 445.1V459M459.7 445.1V459M481.7 445.1V459M503.7 445.1V459M525.7 445.1V459M547.7 445.1V459M569.7 445.1V459M591.7 445.1V459M613.7 445.1V459M635.7 445.1V459M657.7 445.1V459M679.7 445.1V459M701.7 445.1V459M723.7 445.1V459M745.7 445.1V459M767.7 445.1V459M789.7 445.1V459M811.7 445.1V459M833.7 445.1V459M855.7 445.1V459M877.7 445.1V459M899.7 445.1V459M921.7 445.1V459M943.7 445.1V459M965.7 445.1V459M987.7 445.1V459" stroke="#323232" stroke-width="0.9" fill="none"/><path d="M30.7 47.6V53.4M52.7 52.4V53.6M74.7 47.6V53.4M96.7 52.4V53.6M118.7 47.6V53.4M140.7 52.4V53.6M162.7 47.6V53.4M184.7 52.4V53.6M206.7 47.6V53.4M228.7 52.4V53.6M250.7 47.6V53.4M272.7 52.4V53.6M294.7 47.6V53.4M316.7 52.4V53.6M338.7 47.6V53.4M360.7 52.4V53.6M382.7 47.6V53.4M404.7 52.4V53.6M426.7 47.6V53.4M448.7 52.4V53.6M470.7 47.6V53.4M492.7 52.4V53.6M514.7 47.6V53.4M536.7 52.4V53.6M558.7 47.6V53.4M580.7 52.4V53.6M602.7 47.6V53.4M624.7 52.4V53.6M646.7 47.6V53.4M668.7 52.4V53.6M690.7 47.6V53.4M712.7 52.4V53.6M734.7 47.6V53.4M756.7 52.4V53.6M778.7 47.6V53.4M800.7 52.4V53.6M822.7 47.6V53.4M844.7 52.4V53.6M866.7 47.6V53.4M888.7 52.4V53.6M910.7 47.6V53.4M932.7 52.4V53.6M954.7 47.6V53.4M976.7 52.4V53.6M998.7 47.6V53.4" stroke="#808080" stroke-width="0.9" fill="none"/><g font-size="8.6" fill="#b2b2b2"><text x="34.3" y="51.8">9</text><text x="78.3" y="51.8">11</text><text x="122.3" y="51.8">13</text><text x="166.3" y="51.8">15</text><text x="210.3" y="51.8">17</text><text x="254.3" y="51.8">19</text><text x="298.3" y="51.8">21</text><text x="342.3" y="51.8">23</text><text x="386.3" y="51.8">25</text><text x="430.3" y="51.8">27</text><text x="474.3" y="51.8">29</text><text x="518.3" y="51.8">31</text><text x="562.3" y="51.8">33</text><text x="606.3" y="51.8">35</text><text x="650.3" y="51.8">37</text><text x="694.3" y="51.8">39</text><text x="738.3" y="51.8">41</text><text x="782.3" y="51.8">43</text><text x="826.3" y="51.8">45</text><text x="870.3" y="51.8">47</text><text x="914.3" y="51.8">49</text><text x="958.3" y="51.8">51</text></g><rect x="382.7" y="53.4" width="176" height="9" fill="#3c3c3c" stroke="#9a9a9a" stroke-width="0.9"/><path d="M383.7 54.6 L390.2 57.9 L383.7 61.2 Z" fill="none" stroke="#9a9a9a" stroke-width="0.8"/><path d="M557.7 54.6 L551.2 57.9 L557.7 61.2 Z" fill="none" stroke="#9a9a9a" stroke-width="0.8"/><path d="M380.5 69 L385.7 69 L383.1 72.4 Z" fill="#19c5dc"/><path d="M380.1 463.2 L385.5 463.2 L382.8 460.2 Z" fill="#19c5dc"/><rect x="7.2" y="73.8" width="23.5" height="43.9" fill="#92a7ff"/><path d="M8.7 88.2V117.7" stroke="#7d8fdb" stroke-width="1" fill="none"/><path d="M19.7 88.2V117.7" stroke="#8396e5" stroke-width="0.9" fill="none"/><rect x="7.2" y="87.5" width="23.5" height="1.2" fill="#6c7bbc"/><rect x="30.7" y="73.8" width="176" height="43.9" fill="#92a7ff"/><path d="M52.7 88.2V117.7M74.7 88.2V117.7M96.7 88.2V117.7M118.7 88.2V117.7M140.7 88.2V117.7M162.7 88.2V117.7M184.7 88.2V117.7" stroke="#7d8fdb" stroke-width="1" fill="none"/><path d="M41.7 88.2V117.7M63.7 88.2V117.7M85.7 88.2V117.7M107.7 88.2V117.7M129.7 88.2V117.7M151.7 88.2V117.7M173.7 88.2V117.7M195.7 88.2V117.7" stroke="#8396e5" stroke-width="0.9" fill="none"/><rect x="30.7" y="87.5" width="176" height="1.2" fill="#6c7bbc"/><rect x="30.1" y="73.8" width="1.3" height="43.9" fill="#5a679e"/><rect x="206.7" y="73.8" width="176" height="43.9" fill="#92a7ff"/><path d="M228.7 88.2V117.7M250.7 88.2V117.7M272.7 88.2V117.7M294.7 88.2V117.7M316.7 88.2V117.7M338.7 88.2V117.7M360.7 88.2V117.7" stroke="#7d8fdb" stroke-width="1" fill="none"/><path d="M217.7 88.2V117.7M239.7 88.2V117.7M261.7 88.2V117.7M283.7 88.2V117.7M305.7 88.2V117.7M327.7 88.2V117.7M349.7 88.2V117.7M371.7 88.2V117.7" stroke="#8396e5" stroke-width="0.9" fill="none"/><rect x="206.7" y="87.5" width="176" height="1.2" fill="#6c7bbc"/><rect x="206.1" y="73.8" width="1.3" height="43.9" fill="#5a679e"/><rect x="382.7" y="73.8" width="176" height="43.9" fill="#92a7ff"/><path d="M404.7 88.2V117.7M426.7 88.2V117.7M448.7 88.2V117.7M470.7 88.2V117.7M492.7 88.2V117.7M514.7 88.2V117.7M536.7 88.2V117.7" stroke="#7d8fdb" stroke-width="1" fill="none"/><path d="M393.7 88.2V117.7M415.7 88.2V117.7M437.7 88.2V117.7M459.7 88.2V117.7M481.7 88.2V117.7M503.7 88.2V117.7M525.7 88.2V117.7M547.7 88.2V117.7" stroke="#8396e5" stroke-width="0.9" fill="none"/><rect x="382.7" y="87.5" width="176" height="1.2" fill="#6c7bbc"/><rect x="382.1" y="73.8" width="1.3" height="43.9" fill="#5a679e"/><rect x="558.7" y="73.8" width="176" height="43.9" fill="#92a7ff"/><path d="M580.7 88.2V117.7M602.7 88.2V117.7M624.7 88.2V117.7M646.7 88.2V117.7M668.7 88.2V117.7M690.7 88.2V117.7M712.7 88.2V117.7" stroke="#7d8fdb" stroke-width="1" fill="none"/><path d="M569.7 88.2V117.7M591.7 88.2V117.7M613.7 88.2V117.7M635.7 88.2V117.7M657.7 88.2V117.7M679.7 88.2V117.7M701.7 88.2V117.7M723.7 88.2V117.7" stroke="#8396e5" stroke-width="0.9" fill="none"/><rect x="558.7" y="87.5" width="176" height="1.2" fill="#6c7bbc"/><rect x="558.1" y="73.8" width="1.3" height="43.9" fill="#5a679e"/><rect x="910.7" y="73.8" width="93.6" height="43.9" fill="#92a7ff"/><path d="M932.7 88.2V117.7M954.7 88.2V117.7M976.7 88.2V117.7M998.7 88.2V117.7" stroke="#7d8fdb" stroke-width="1" fill="none"/><path d="M921.7 88.2V117.7M943.7 88.2V117.7M965.7 88.2V117.7M987.7 88.2V117.7" stroke="#8396e5" stroke-width="0.9" fill="none"/><rect x="910.7" y="87.5" width="93.6" height="1.2" fill="#6c7bbc"/><path d="M16.7 99.4h2.7v1.2h-2.7zM9 102.5h0.9v1h-0.9zM10.38 102.5h0.9v1h-0.9zM11.75 102.5h0.9v1h-0.9zM13.12 102.5h1.3v1h-1.3zM14.5 102.5h0.9v1h-0.9zM17.25 102.5h1.3v1h-1.3zM18.62 102.5h0.9v1h-0.9zM20 102.5h0.9v1h-0.9zM22.75 102.5h1.3v1h-1.3zM24.12 102.5h0.9v1h-0.9zM25.5 102.5h0.9v1h-0.9zM26.88 102.5h0.9v1h-0.9zM29.62 102.5h1.3v1h-1.3zM14.7 109.5h1.1v1.2h-1.1zM25.7 109.5h1.1v1.2h-1.1z" fill="#0b0b12"/><path d="M38.7 99.4h2.7v1.2h-2.7zM32.38 102.5h0.9v1h-0.9zM33.75 102.5h0.9v1h-0.9zM35.12 102.5h0.9v1h-0.9zM37.88 102.5h1.3v1h-1.3zM39.25 102.5h0.9v1h-0.9zM40.62 102.5h0.9v1h-0.9zM42 102.5h0.9v1h-0.9zM44.75 102.5h1.3v1h-1.3zM46.12 102.5h0.9v1h-0.9zM47.5 102.5h0.9v1h-0.9zM48.88 102.5h1.3v1h-1.3zM51.62 102.5h0.9v1h-0.9zM36.7 109.5h1.1v1.2h-1.1zM47.7 109.5h1.1v1.2h-1.1zM60.7 99.4h2.7v1.2h-2.7zM53 102.5h0.9v1h-0.9zM54.38 102.5h0.9v1h-0.9zM55.75 102.5h1.3v1h-1.3zM58.5 102.5h0.9v1h-0.9zM61.25 102.5h1.3v1h-1.3zM62.62 102.5h0.9v1h-0.9zM64 102.5h0.9v1h-0.9zM65.38 102.5h0.9v1h-0.9zM66.75 102.5h1.3v1h-1.3zM68.12 102.5h0.9v1h-0.9zM69.5 102.5h0.9v1h-0.9zM70.88 102.5h0.9v1h-0.9zM72.25 102.5h1.3v1h-1.3zM73.62 102.5h0.9v1h-0.9zM58.7 109.5h1.1v1.2h-1.1zM69.7 109.5h1.1v1.2h-1.1zM82.7 99.4h2.7v1.2h-2.7zM75 102.5h0.9v1h-0.9zM76.38 102.5h0.9v1h-0.9zM77.75 102.5h0.9v1h-0.9zM79.12 102.5h1.3v1h-1.3zM80.5 102.5h0.9v1h-0.9zM81.88 102.5h1.3v1h-1.3zM83.25 102.5h0.9v1h-0.9zM84.62 102.5h0.9v1h-0.9zM86 102.5h0.9v1h-0.9zM87.38 102.5h1.3v1h-1.3zM90.12 102.5h1.3v1h-1.3zM91.5 102.5h0.9v1h-0.9zM94.25 102.5h0.9v1h-0.9zM80.7 109.5h1.1v1.2h-1.1zM91.7 109.5h1.1v1.2h-1.1zM104.7 99.4h2.7v1.2h-2.7zM97 102.5h1.3v1h-1.3zM98.38 102.5h0.9v1h-0.9zM99.75 102.5h0.9v1h-0.9zM101.12 102.5h1.3v1h-1.3zM102.5 102.5h0.9v1h-0.9zM103.88 102.5h0.9v1h-0.9zM105.25 102.5h0.9v1h-0.9zM106.62 102.5h0.9v1h-0.9zM109.38 102.5h0.9v1h-0.9zM110.75 102.5h0.9v1h-0.9zM112.12 102.5h0.9v1h-0.9zM113.5 102.5h0.9v1h-0.9zM114.88 102.5h0.9v1h-0.9zM117.62 102.5h0.9v1h-0.9zM102.7 109.5h1.1v1.2h-1.1zM113.7 109.5h1.1v1.2h-1.1zM126.7 99.4h2.7v1.2h-2.7zM119 102.5h0.9v1h-0.9zM121.75 102.5h0.9v1h-0.9zM123.12 102.5h0.9v1h-0.9zM124.5 102.5h0.9v1h-0.9zM127.25 102.5h0.9v1h-0.9zM128.62 102.5h0.9v1h-0.9zM130 102.5h0.9v1h-0.9zM131.38 102.5h1.3v1h-1.3zM132.75 102.5h0.9v1h-0.9zM135.5 102.5h1.3v1h-1.3zM136.88 102.5h1.3v1h-1.3zM138.25 102.5h1.3v1h-1.3zM139.62 102.5h0.9v1h-0.9zM124.7 109.5h1.1v1.2h-1.1zM135.7 109.5h1.1v1.2h-1.1zM148.7 99.4h2.7v1.2h-2.7zM141 102.5h0.9v1h-0.9zM146.5 102.5h0.9v1h-0.9zM147.88 102.5h0.9v1h-0.9zM149.25 102.5h0.9v1h-0.9zM150.62 102.5h0.9v1h-0.9zM152 102.5h1.3v1h-1.3zM154.75 102.5h1.3v1h-1.3zM157.5 102.5h0.9v1h-0.9zM146.7 109.5h1.1v1.2h-1.1zM157.7 109.5h1.1v1.2h-1.1z" fill="#0b0b12"/><path d="M214.7 99.4h2.7v1.2h-2.7zM208.38 102.5h1.3v1h-1.3zM209.75 102.5h1.3v1h-1.3zM211.12 102.5h1.3v1h-1.3zM212.5 102.5h0.9v1h-0.9zM215.25 102.5h1.3v1h-1.3zM216.62 102.5h0.9v1h-0.9zM218 102.5h0.9v1h-0.9zM219.38 102.5h0.9v1h-0.9zM220.75 102.5h0.9v1h-0.9zM223.5 102.5h0.9v1h-0.9zM224.88 102.5h0.9v1h-0.9zM226.25 102.5h0.9v1h-0.9zM227.62 102.5h1.3v1h-1.3zM209.6 109.5h1.1v1.2h-1.1zM212.2 109.5h1.1v1.2h-1.1zM217 109.5h1.1v1.2h-1.1zM220.4 109.5h1.1v1.2h-1.1zM224 109.5h1.1v1.2h-1.1zM226.6 109.5h1.1v1.2h-1.1zM214.3 112.6h1.2v1h-1.2zM236.7 99.4h2.7v1.2h-2.7zM229 102.5h0.9v1h-0.9zM230.38 102.5h0.9v1h-0.9zM231.75 102.5h0.9v1h-0.9zM233.12 102.5h0.9v1h-0.9zM234.5 102.5h0.9v1h-0.9zM235.88 102.5h1.3v1h-1.3zM237.25 102.5h0.9v1h-0.9zM238.62 102.5h1.3v1h-1.3zM240 102.5h1.3v1h-1.3zM241.38 102.5h1.3v1h-1.3zM242.75 102.5h0.9v1h-0.9zM244.12 102.5h0.9v1h-0.9zM245.5 102.5h0.9v1h-0.9zM246.88 102.5h0.9v1h-0.9zM249.62 102.5h1.3v1h-1.3zM234.2 109.5h1.1v1.2h-1.1zM235.1 109.5h1.1v1.2h-1.1zM238 109.5h1.1v1.2h-1.1zM239 109.5h1.1v1.2h-1.1zM241.4 109.5h1.1v1.2h-1.1zM242.4 109.5h1.1v1.2h-1.1zM246 109.5h1.1v1.2h-1.1zM232.7 112.6h1.2v1h-1.2zM243.9 112.6h1.2v1h-1.2zM247.3 112.6h1.2v1h-1.2zM258.7 99.4h2.7v1.2h-2.7zM251 102.5h1.3v1h-1.3zM252.38 102.5h1.3v1h-1.3zM253.75 102.5h0.9v1h-0.9zM255.12 102.5h0.9v1h-0.9zM256.5 102.5h0.9v1h-0.9zM257.88 102.5h1.3v1h-1.3zM259.25 102.5h0.9v1h-0.9zM262 102.5h0.9v1h-0.9zM263.38 102.5h0.9v1h-0.9zM264.75 102.5h0.9v1h-0.9zM266.12 102.5h0.9v1h-0.9zM268.88 102.5h0.9v1h-0.9zM270.25 102.5h0.9v1h-0.9zM271.62 102.5h1.3v1h-1.3zM252 109.5h1.1v1.2h-1.1zM253.6 109.5h1.1v1.2h-1.1zM256.2 109.5h1.1v1.2h-1.1zM257.1 109.5h1.1v1.2h-1.1zM260 109.5h1.1v1.2h-1.1zM261 109.5h1.1v1.2h-1.1zM263.4 109.5h1.1v1.2h-1.1zM264.4 109.5h1.1v1.2h-1.1zM258.3 112.6h1.2v1h-1.2zM265.9 112.6h1.2v1h-1.2zM269.3 112.6h1.2v1h-1.2zM280.7 99.4h2.7v1.2h-2.7zM273 102.5h0.9v1h-0.9zM274.38 102.5h0.9v1h-0.9zM275.75 102.5h1.3v1h-1.3zM278.5 102.5h0.9v1h-0.9zM279.88 102.5h0.9v1h-0.9zM281.25 102.5h1.3v1h-1.3zM284 102.5h1.3v1h-1.3zM285.38 102.5h0.9v1h-0.9zM286.75 102.5h1.3v1h-1.3zM288.12 102.5h1.3v1h-1.3zM289.5 102.5h0.9v1h-0.9zM290.88 102.5h0.9v1h-0.9zM292.25 102.5h1.3v1h-1.3zM293.62 102.5h0.9v1h-0.9zM274 109.5h1.1v1.2h-1.1zM275.6 109.5h1.1v1.2h-1.1zM278.2 109.5h1.1v1.2h-1.1zM279.1 109.5h1.1v1.2h-1.1zM282 109.5h1.1v1.2h-1.1zM283 109.5h1.1v1.2h-1.1zM285.4 109.5h1.1v1.2h-1.1zM286.4 109.5h1.1v1.2h-1.1zM290 109.5h1.1v1.2h-1.1zM292.6 109.5h1.1v1.2h-1.1zM276.7 112.6h1.2v1h-1.2zM287.9 112.6h1.2v1h-1.2zM302.7 99.4h2.7v1.2h-2.7zM296.38 102.5h1.3v1h-1.3zM299.12 102.5h0.9v1h-0.9zM300.5 102.5h1.3v1h-1.3zM303.25 102.5h0.9v1h-0.9zM304.62 102.5h1.3v1h-1.3zM306 102.5h1.3v1h-1.3zM307.38 102.5h0.9v1h-0.9zM308.75 102.5h0.9v1h-0.9zM310.12 102.5h0.9v1h-0.9zM311.5 102.5h0.9v1h-0.9zM312.88 102.5h0.9v1h-0.9zM314.25 102.5h0.9v1h-0.9zM315.62 102.5h0.9v1h-0.9zM296 109.5h1.1v1.2h-1.1zM297.6 109.5h1.1v1.2h-1.1zM300.2 109.5h1.1v1.2h-1.1zM301.1 109.5h1.1v1.2h-1.1zM304 109.5h1.1v1.2h-1.1zM305 109.5h1.1v1.2h-1.1zM307.4 109.5h1.1v1.2h-1.1zM308.4 109.5h1.1v1.2h-1.1zM312 109.5h1.1v1.2h-1.1zM314.6 109.5h1.1v1.2h-1.1zM298.7 112.6h1.2v1h-1.2zM302.3 112.6h1.2v1h-1.2zM309.9 112.6h1.2v1h-1.2zM313.3 112.6h1.2v1h-1.2zM324.7 99.4h2.7v1.2h-2.7zM318.38 102.5h0.9v1h-0.9zM319.75 102.5h0.9v1h-0.9zM321.12 102.5h1.3v1h-1.3zM322.5 102.5h0.9v1h-0.9zM323.88 102.5h0.9v1h-0.9zM325.25 102.5h0.9v1h-0.9zM326.62 102.5h1.3v1h-1.3zM328 102.5h0.9v1h-0.9zM329.38 102.5h0.9v1h-0.9zM330.75 102.5h0.9v1h-0.9zM332.12 102.5h0.9v1h-0.9zM336.25 102.5h0.9v1h-0.9zM318 109.5h1.1v1.2h-1.1zM319.6 109.5h1.1v1.2h-1.1zM322.2 109.5h1.1v1.2h-1.1zM323.1 109.5h1.1v1.2h-1.1zM326 109.5h1.1v1.2h-1.1zM327 109.5h1.1v1.2h-1.1zM330.4 109.5h1.1v1.2h-1.1zM334 109.5h1.1v1.2h-1.1zM336.6 109.5h1.1v1.2h-1.1zM320.7 112.6h1.2v1h-1.2zM331.9 112.6h1.2v1h-1.2zM346.7 99.4h2.7v1.2h-2.7zM340.38 102.5h0.9v1h-0.9zM343.12 102.5h0.9v1h-0.9zM344.5 102.5h1.3v1h-1.3zM345.88 102.5h0.9v1h-0.9zM347.25 102.5h0.9v1h-0.9zM348.62 102.5h0.9v1h-0.9zM350 102.5h1.3v1h-1.3zM351.38 102.5h0.9v1h-0.9zM352.75 102.5h0.9v1h-0.9zM355.5 102.5h0.9v1h-0.9zM356.88 102.5h0.9v1h-0.9zM359.62 102.5h0.9v1h-0.9zM340 109.5h1.1v1.2h-1.1zM341.6 109.5h1.1v1.2h-1.1zM344.2 109.5h1.1v1.2h-1.1zM345.1 109.5h1.1v1.2h-1.1zM348 109.5h1.1v1.2h-1.1zM349 109.5h1.1v1.2h-1.1zM351.4 109.5h1.1v1.2h-1.1zM352.4 109.5h1.1v1.2h-1.1zM356 109.5h1.1v1.2h-1.1zM358.6 109.5h1.1v1.2h-1.1zM342.7 112.6h1.2v1h-1.2zM346.3 112.6h1.2v1h-1.2zM353.9 112.6h1.2v1h-1.2zM357.3 112.6h1.2v1h-1.2z" fill="#0b0b12"/><path d="M390.7 99.4h2.7v1.2h-2.7zM384.38 102.5h1.3v1h-1.3zM385.75 102.5h0.9v1h-0.9zM387.12 102.5h0.9v1h-0.9zM388.5 102.5h1.3v1h-1.3zM389.88 102.5h1.3v1h-1.3zM391.25 102.5h1.3v1h-1.3zM392.62 102.5h0.9v1h-0.9zM394 102.5h0.9v1h-0.9zM395.38 102.5h0.9v1h-0.9zM396.75 102.5h0.9v1h-0.9zM398.12 102.5h0.9v1h-0.9zM399.5 102.5h0.9v1h-0.9zM400.88 102.5h1.3v1h-1.3zM402.25 102.5h0.9v1h-0.9zM403.62 102.5h0.9v1h-0.9zM385.6 109.5h1.1v1.2h-1.1zM388.2 109.5h1.1v1.2h-1.1zM392 109.5h1.1v1.2h-1.1zM393 109.5h1.1v1.2h-1.1zM395.4 109.5h1.1v1.2h-1.1zM396.4 109.5h1.1v1.2h-1.1zM386.7 112.6h1.2v1h-1.2zM390.3 112.6h1.2v1h-1.2zM397.9 112.6h1.2v1h-1.2zM412.7 99.4h2.7v1.2h-2.7zM406.38 102.5h0.9v1h-0.9zM407.75 102.5h0.9v1h-0.9zM409.12 102.5h0.9v1h-0.9zM411.88 102.5h0.9v1h-0.9zM413.25 102.5h0.9v1h-0.9zM414.62 102.5h0.9v1h-0.9zM416 102.5h0.9v1h-0.9zM418.75 102.5h0.9v1h-0.9zM420.12 102.5h0.9v1h-0.9zM421.5 102.5h1.3v1h-1.3zM422.88 102.5h0.9v1h-0.9zM424.25 102.5h0.9v1h-0.9zM425.62 102.5h1.3v1h-1.3zM406 109.5h1.1v1.2h-1.1zM407.6 109.5h1.1v1.2h-1.1zM410.2 109.5h1.1v1.2h-1.1zM411.1 109.5h1.1v1.2h-1.1zM415 109.5h1.1v1.2h-1.1zM422 109.5h1.1v1.2h-1.1zM408.7 112.6h1.2v1h-1.2zM419.9 112.6h1.2v1h-1.2zM423.3 112.6h1.2v1h-1.2zM434.7 99.4h2.7v1.2h-2.7zM427 102.5h1.3v1h-1.3zM428.38 102.5h0.9v1h-0.9zM429.75 102.5h0.9v1h-0.9zM431.12 102.5h1.3v1h-1.3zM432.5 102.5h0.9v1h-0.9zM433.88 102.5h0.9v1h-0.9zM435.25 102.5h0.9v1h-0.9zM436.62 102.5h1.3v1h-1.3zM438 102.5h0.9v1h-0.9zM440.75 102.5h0.9v1h-0.9zM442.12 102.5h0.9v1h-0.9zM443.5 102.5h0.9v1h-0.9zM444.88 102.5h1.3v1h-1.3zM446.25 102.5h0.9v1h-0.9zM429.6 109.5h1.1v1.2h-1.1zM432.2 109.5h1.1v1.2h-1.1zM433.1 109.5h1.1v1.2h-1.1zM436 109.5h1.1v1.2h-1.1zM437 109.5h1.1v1.2h-1.1zM439.4 109.5h1.1v1.2h-1.1zM444 109.5h1.1v1.2h-1.1zM446.6 109.5h1.1v1.2h-1.1zM430.7 112.6h1.2v1h-1.2zM434.3 112.6h1.2v1h-1.2zM441.9 112.6h1.2v1h-1.2zM445.3 112.6h1.2v1h-1.2zM456.7 99.4h2.7v1.2h-2.7zM449 102.5h1.3v1h-1.3zM450.38 102.5h1.3v1h-1.3zM451.75 102.5h0.9v1h-0.9zM453.12 102.5h1.3v1h-1.3zM454.5 102.5h0.9v1h-0.9zM455.88 102.5h1.3v1h-1.3zM457.25 102.5h0.9v1h-0.9zM458.62 102.5h0.9v1h-0.9zM460 102.5h0.9v1h-0.9zM461.38 102.5h0.9v1h-0.9zM462.75 102.5h0.9v1h-0.9zM464.12 102.5h0.9v1h-0.9zM465.5 102.5h1.3v1h-1.3zM466.88 102.5h1.3v1h-1.3zM468.25 102.5h1.3v1h-1.3zM469.62 102.5h0.9v1h-0.9zM455.1 109.5h1.1v1.2h-1.1zM458 109.5h1.1v1.2h-1.1zM459 109.5h1.1v1.2h-1.1zM461.4 109.5h1.1v1.2h-1.1zM468.6 109.5h1.1v1.2h-1.1zM452.7 112.6h1.2v1h-1.2zM456.3 112.6h1.2v1h-1.2zM463.9 112.6h1.2v1h-1.2zM467.3 112.6h1.2v1h-1.2zM478.7 99.4h2.7v1.2h-2.7zM471 102.5h1.3v1h-1.3zM473.75 102.5h1.3v1h-1.3zM475.12 102.5h1.3v1h-1.3zM476.5 102.5h1.3v1h-1.3zM477.88 102.5h1.3v1h-1.3zM479.25 102.5h0.9v1h-0.9zM480.62 102.5h0.9v1h-0.9zM482 102.5h0.9v1h-0.9zM483.38 102.5h0.9v1h-0.9zM484.75 102.5h1.3v1h-1.3zM486.12 102.5h1.3v1h-1.3zM487.5 102.5h0.9v1h-0.9zM488.88 102.5h1.3v1h-1.3zM490.25 102.5h0.9v1h-0.9zM491.62 102.5h0.9v1h-0.9zM472 109.5h1.1v1.2h-1.1zM473.6 109.5h1.1v1.2h-1.1zM476.2 109.5h1.1v1.2h-1.1zM477.1 109.5h1.1v1.2h-1.1zM480 109.5h1.1v1.2h-1.1zM481 109.5h1.1v1.2h-1.1zM483.4 109.5h1.1v1.2h-1.1zM484.4 109.5h1.1v1.2h-1.1zM488 109.5h1.1v1.2h-1.1zM490.6 109.5h1.1v1.2h-1.1zM474.7 112.6h1.2v1h-1.2zM478.3 112.6h1.2v1h-1.2zM485.9 112.6h1.2v1h-1.2zM500.7 99.4h2.7v1.2h-2.7zM493 102.5h0.9v1h-0.9zM494.38 102.5h0.9v1h-0.9zM495.75 102.5h1.3v1h-1.3zM497.12 102.5h0.9v1h-0.9zM498.5 102.5h0.9v1h-0.9zM499.88 102.5h0.9v1h-0.9zM502.62 102.5h0.9v1h-0.9zM504 102.5h0.9v1h-0.9zM505.38 102.5h0.9v1h-0.9zM506.75 102.5h1.3v1h-1.3zM508.12 102.5h0.9v1h-0.9zM509.5 102.5h0.9v1h-0.9zM510.88 102.5h1.3v1h-1.3zM512.25 102.5h1.3v1h-1.3zM513.62 102.5h0.9v1h-0.9zM494 109.5h1.1v1.2h-1.1zM495.6 109.5h1.1v1.2h-1.1zM498.2 109.5h1.1v1.2h-1.1zM499.1 109.5h1.1v1.2h-1.1zM502 109.5h1.1v1.2h-1.1zM505.4 109.5h1.1v1.2h-1.1zM506.4 109.5h1.1v1.2h-1.1zM510 109.5h1.1v1.2h-1.1zM496.7 112.6h1.2v1h-1.2zM500.3 112.6h1.2v1h-1.2zM507.9 112.6h1.2v1h-1.2zM511.3 112.6h1.2v1h-1.2zM516 109.5h1.1v1.2h-1.1z" fill="#0b0b12"/><path d="M522.7 99.4h2.7v1.2h-2.7zM523.25 102.5h0.9v1h-0.9zM524.62 102.5h0.9v1h-0.9zM526 102.5h0.9v1h-0.9zM527.38 102.5h0.9v1h-0.9zM528.75 102.5h0.9v1h-0.9zM530.12 102.5h0.9v1h-0.9zM531.5 102.5h1.3v1h-1.3zM532.88 102.5h0.9v1h-0.9zM534.25 102.5h1.3v1h-1.3zM535.62 102.5h0.9v1h-0.9zM525 109.5h1.1v1.2h-1.1zM528.4 109.5h1.1v1.2h-1.1zM532 109.5h1.1v1.2h-1.1zM534.6 109.5h1.1v1.2h-1.1zM529.9 112.6h1.2v1h-1.2zM544.7 99.4h2.7v1.2h-2.7zM537 102.5h0.9v1h-0.9zM538.38 102.5h0.9v1h-0.9zM539.75 102.5h0.9v1h-0.9zM541.12 102.5h0.9v1h-0.9zM542.5 102.5h0.9v1h-0.9zM543.88 102.5h0.9v1h-0.9zM545.25 102.5h0.9v1h-0.9zM546.62 102.5h0.9v1h-0.9zM548 102.5h0.9v1h-0.9zM549.38 102.5h1.3v1h-1.3zM550.75 102.5h0.9v1h-0.9zM553.5 102.5h0.9v1h-0.9zM554.88 102.5h0.9v1h-0.9zM556.25 102.5h0.9v1h-0.9zM557.62 102.5h1.3v1h-1.3zM538 109.5h1.1v1.2h-1.1zM542.2 109.5h1.1v1.2h-1.1zM543.1 109.5h1.1v1.2h-1.1zM546 109.5h1.1v1.2h-1.1zM547 109.5h1.1v1.2h-1.1zM549.4 109.5h1.1v1.2h-1.1zM550.4 109.5h1.1v1.2h-1.1zM556.6 109.5h1.1v1.2h-1.1zM540.7 112.6h1.2v1h-1.2zM544.3 112.6h1.2v1h-1.2zM551.9 112.6h1.2v1h-1.2zM555.3 112.6h1.2v1h-1.2zM566.7 99.4h2.7v1.2h-2.7zM560.38 102.5h0.9v1h-0.9zM561.75 102.5h0.9v1h-0.9zM563.12 102.5h0.9v1h-0.9zM564.5 102.5h0.9v1h-0.9zM565.88 102.5h1.3v1h-1.3zM567.25 102.5h0.9v1h-0.9zM568.62 102.5h1.3v1h-1.3zM570 102.5h0.9v1h-0.9zM571.38 102.5h1.3v1h-1.3zM572.75 102.5h1.3v1h-1.3zM574.12 102.5h0.9v1h-0.9zM575.5 102.5h1.3v1h-1.3zM578.25 102.5h0.9v1h-0.9zM579.62 102.5h0.9v1h-0.9zM560 109.5h1.1v1.2h-1.1zM561.6 109.5h1.1v1.2h-1.1zM564.2 109.5h1.1v1.2h-1.1zM565.1 109.5h1.1v1.2h-1.1zM568 109.5h1.1v1.2h-1.1zM569 109.5h1.1v1.2h-1.1zM571.4 109.5h1.1v1.2h-1.1zM576 109.5h1.1v1.2h-1.1zM578.6 109.5h1.1v1.2h-1.1zM562.7 112.6h1.2v1h-1.2zM566.3 112.6h1.2v1h-1.2zM573.9 112.6h1.2v1h-1.2zM588.7 99.4h2.7v1.2h-2.7zM581 102.5h1.3v1h-1.3zM582.38 102.5h0.9v1h-0.9zM583.75 102.5h0.9v1h-0.9zM585.12 102.5h0.9v1h-0.9zM586.5 102.5h0.9v1h-0.9zM587.88 102.5h0.9v1h-0.9zM589.25 102.5h0.9v1h-0.9zM590.62 102.5h0.9v1h-0.9zM592 102.5h0.9v1h-0.9zM594.75 102.5h0.9v1h-0.9zM596.12 102.5h0.9v1h-0.9zM597.5 102.5h0.9v1h-0.9zM598.88 102.5h1.3v1h-1.3zM600.25 102.5h0.9v1h-0.9zM601.62 102.5h0.9v1h-0.9zM582 109.5h1.1v1.2h-1.1zM583.6 109.5h1.1v1.2h-1.1zM586.2 109.5h1.1v1.2h-1.1zM587.1 109.5h1.1v1.2h-1.1zM590 109.5h1.1v1.2h-1.1zM593.4 109.5h1.1v1.2h-1.1zM594.4 109.5h1.1v1.2h-1.1zM598 109.5h1.1v1.2h-1.1zM600.6 109.5h1.1v1.2h-1.1zM584.7 112.6h1.2v1h-1.2zM599.3 112.6h1.2v1h-1.2zM610.7 99.4h2.7v1.2h-2.7zM603 102.5h0.9v1h-0.9zM604.38 102.5h1.3v1h-1.3zM605.75 102.5h1.3v1h-1.3zM607.12 102.5h0.9v1h-0.9zM608.5 102.5h1.3v1h-1.3zM609.88 102.5h1.3v1h-1.3zM611.25 102.5h1.3v1h-1.3zM612.62 102.5h0.9v1h-0.9zM614 102.5h0.9v1h-0.9zM615.38 102.5h0.9v1h-0.9zM616.75 102.5h0.9v1h-0.9zM619.5 102.5h1.3v1h-1.3zM623.62 102.5h0.9v1h-0.9zM604 109.5h1.1v1.2h-1.1zM605.6 109.5h1.1v1.2h-1.1zM608.2 109.5h1.1v1.2h-1.1zM609.1 109.5h1.1v1.2h-1.1zM613 109.5h1.1v1.2h-1.1zM615.4 109.5h1.1v1.2h-1.1zM616.4 109.5h1.1v1.2h-1.1zM620 109.5h1.1v1.2h-1.1zM622.6 109.5h1.1v1.2h-1.1zM606.7 112.6h1.2v1h-1.2zM617.9 112.6h1.2v1h-1.2zM621.3 112.6h1.2v1h-1.2zM632.7 99.4h2.7v1.2h-2.7zM625 102.5h0.9v1h-0.9zM626.38 102.5h0.9v1h-0.9zM627.75 102.5h1.3v1h-1.3zM629.12 102.5h0.9v1h-0.9zM631.88 102.5h0.9v1h-0.9zM633.25 102.5h0.9v1h-0.9zM636 102.5h0.9v1h-0.9zM637.38 102.5h1.3v1h-1.3zM638.75 102.5h0.9v1h-0.9zM640.12 102.5h0.9v1h-0.9zM641.5 102.5h1.3v1h-1.3zM642.88 102.5h0.9v1h-0.9zM645.62 102.5h1.3v1h-1.3zM626 109.5h1.1v1.2h-1.1zM627.6 109.5h1.1v1.2h-1.1zM630.2 109.5h1.1v1.2h-1.1zM631.1 109.5h1.1v1.2h-1.1zM634 109.5h1.1v1.2h-1.1zM635 109.5h1.1v1.2h-1.1zM637.4 109.5h1.1v1.2h-1.1zM638.4 109.5h1.1v1.2h-1.1zM642 109.5h1.1v1.2h-1.1zM628.7 112.6h1.2v1h-1.2zM632.3 112.6h1.2v1h-1.2zM639.9 112.6h1.2v1h-1.2zM654.7 99.4h2.7v1.2h-2.7zM647 102.5h1.3v1h-1.3zM648.38 102.5h0.9v1h-0.9zM649.75 102.5h0.9v1h-0.9zM651.12 102.5h0.9v1h-0.9zM652.5 102.5h1.3v1h-1.3zM653.88 102.5h0.9v1h-0.9zM655.25 102.5h0.9v1h-0.9zM656.62 102.5h0.9v1h-0.9zM658 102.5h1.3v1h-1.3zM659.38 102.5h0.9v1h-0.9zM660.75 102.5h0.9v1h-0.9zM662.12 102.5h0.9v1h-0.9zM663.5 102.5h1.3v1h-1.3zM666.25 102.5h0.9v1h-0.9zM667.62 102.5h0.9v1h-0.9zM648 109.5h1.1v1.2h-1.1zM649.6 109.5h1.1v1.2h-1.1zM652.2 109.5h1.1v1.2h-1.1zM653.1 109.5h1.1v1.2h-1.1zM657 109.5h1.1v1.2h-1.1zM664 109.5h1.1v1.2h-1.1zM666.6 109.5h1.1v1.2h-1.1zM661.9 112.6h1.2v1h-1.2zM665.3 112.6h1.2v1h-1.2zM676.7 99.4h2.7v1.2h-2.7zM669 102.5h0.9v1h-0.9zM670.38 102.5h0.9v1h-0.9zM671.75 102.5h1.3v1h-1.3zM674.5 102.5h1.3v1h-1.3zM675.88 102.5h0.9v1h-0.9zM680 102.5h1.3v1h-1.3zM681.38 102.5h0.9v1h-0.9zM684.12 102.5h0.9v1h-0.9zM685.5 102.5h0.9v1h-0.9zM686.88 102.5h0.9v1h-0.9zM688.25 102.5h1.3v1h-1.3zM689.62 102.5h0.9v1h-0.9zM670 109.5h1.1v1.2h-1.1zM671.6 109.5h1.1v1.2h-1.1zM674.2 109.5h1.1v1.2h-1.1zM675.1 109.5h1.1v1.2h-1.1zM678 109.5h1.1v1.2h-1.1zM679 109.5h1.1v1.2h-1.1zM682.4 109.5h1.1v1.2h-1.1zM688.6 109.5h1.1v1.2h-1.1zM672.7 112.6h1.2v1h-1.2zM676.3 112.6h1.2v1h-1.2zM683.9 112.6h1.2v1h-1.2zM687.3 112.6h1.2v1h-1.2zM698.7 99.4h2.7v1.2h-2.7zM691 102.5h0.9v1h-0.9zM693.75 102.5h0.9v1h-0.9zM695.12 102.5h1.3v1h-1.3zM696.5 102.5h1.3v1h-1.3zM697.88 102.5h0.9v1h-0.9zM699.25 102.5h0.9v1h-0.9zM700.62 102.5h1.3v1h-1.3zM702 102.5h1.3v1h-1.3zM703.38 102.5h1.3v1h-1.3zM704.75 102.5h1.3v1h-1.3zM706.12 102.5h0.9v1h-0.9zM707.5 102.5h1.3v1h-1.3zM708.88 102.5h0.9v1h-0.9zM710.25 102.5h0.9v1h-0.9zM711.62 102.5h0.9v1h-0.9zM692 109.5h1.1v1.2h-1.1zM693.6 109.5h1.1v1.2h-1.1zM696.2 109.5h1.1v1.2h-1.1zM697.1 109.5h1.1v1.2h-1.1zM700 109.5h1.1v1.2h-1.1zM701 109.5h1.1v1.2h-1.1zM703.4 109.5h1.1v1.2h-1.1zM704.4 109.5h1.1v1.2h-1.1zM708 109.5h1.1v1.2h-1.1zM710.6 109.5h1.1v1.2h-1.1zM694.7 112.6h1.2v1h-1.2zM698.3 112.6h1.2v1h-1.2zM705.9 112.6h1.2v1h-1.2zM709.3 112.6h1.2v1h-1.2zM720.7 99.4h2.7v1.2h-2.7zM713 102.5h0.9v1h-0.9zM715.75 102.5h1.3v1h-1.3zM717.12 102.5h0.9v1h-0.9zM718.5 102.5h0.9v1h-0.9zM719.88 102.5h0.9v1h-0.9zM722.62 102.5h1.3v1h-1.3zM724 102.5h0.9v1h-0.9zM725.38 102.5h0.9v1h-0.9zM726.75 102.5h0.9v1h-0.9zM728.12 102.5h1.3v1h-1.3zM729.5 102.5h0.9v1h-0.9zM730.88 102.5h1.3v1h-1.3zM733.62 102.5h0.9v1h-0.9zM714 109.5h1.1v1.2h-1.1zM715.6 109.5h1.1v1.2h-1.1zM718.2 109.5h1.1v1.2h-1.1zM719.1 109.5h1.1v1.2h-1.1zM722 109.5h1.1v1.2h-1.1zM723 109.5h1.1v1.2h-1.1zM730 109.5h1.1v1.2h-1.1zM732.6 109.5h1.1v1.2h-1.1zM720.3 112.6h1.2v1h-1.2zM727.9 112.6h1.2v1h-1.2zM731.3 112.6h1.2v1h-1.2z" fill="#0b0b12"/><path d="M940.7 99.4h2.7v1.2h-2.7zM935.75 102.5h1.3v1h-1.3zM937.12 102.5h1.3v1h-1.3zM938.5 102.5h0.9v1h-0.9zM941.25 102.5h0.9v1h-0.9zM942.62 102.5h0.9v1h-0.9zM944 102.5h0.9v1h-0.9zM945.38 102.5h0.9v1h-0.9zM946.75 102.5h0.9v1h-0.9zM948.12 102.5h0.9v1h-0.9zM950.88 102.5h0.9v1h-0.9zM952.25 102.5h1.3v1h-1.3zM953.62 102.5h0.9v1h-0.9zM935.6 109.5h1.1v1.2h-1.1zM938.2 109.5h1.1v1.2h-1.1zM939.1 109.5h1.1v1.2h-1.1zM942 109.5h1.1v1.2h-1.1zM943 109.5h1.1v1.2h-1.1zM945.4 109.5h1.1v1.2h-1.1zM950 109.5h1.1v1.2h-1.1zM952.6 109.5h1.1v1.2h-1.1zM936.7 112.6h1.2v1h-1.2zM947.9 112.6h1.2v1h-1.2zM951.3 112.6h1.2v1h-1.2zM962.7 99.4h2.7v1.2h-2.7zM956.38 102.5h1.3v1h-1.3zM959.12 102.5h0.9v1h-0.9zM961.88 102.5h1.3v1h-1.3zM963.25 102.5h0.9v1h-0.9zM964.62 102.5h1.3v1h-1.3zM966 102.5h0.9v1h-0.9zM967.38 102.5h0.9v1h-0.9zM968.75 102.5h0.9v1h-0.9zM970.12 102.5h1.3v1h-1.3zM971.5 102.5h1.3v1h-1.3zM972.88 102.5h0.9v1h-0.9zM974.25 102.5h0.9v1h-0.9zM975.62 102.5h0.9v1h-0.9zM956 109.5h1.1v1.2h-1.1zM957.6 109.5h1.1v1.2h-1.1zM961.1 109.5h1.1v1.2h-1.1zM964 109.5h1.1v1.2h-1.1zM965 109.5h1.1v1.2h-1.1zM967.4 109.5h1.1v1.2h-1.1zM972 109.5h1.1v1.2h-1.1zM974.6 109.5h1.1v1.2h-1.1zM958.7 112.6h1.2v1h-1.2zM962.3 112.6h1.2v1h-1.2zM969.9 112.6h1.2v1h-1.2zM973.3 112.6h1.2v1h-1.2zM984.7 99.4h2.7v1.2h-2.7zM977 102.5h0.9v1h-0.9zM978.38 102.5h0.9v1h-0.9zM979.75 102.5h0.9v1h-0.9zM981.12 102.5h0.9v1h-0.9zM982.5 102.5h0.9v1h-0.9zM983.88 102.5h0.9v1h-0.9zM985.25 102.5h1.3v1h-1.3zM986.62 102.5h1.3v1h-1.3zM989.38 102.5h0.9v1h-0.9zM990.75 102.5h0.9v1h-0.9zM992.12 102.5h1.3v1h-1.3zM993.5 102.5h1.3v1h-1.3zM994.88 102.5h1.3v1h-1.3zM996.25 102.5h1.3v1h-1.3zM997.62 102.5h1.3v1h-1.3zM978 109.5h1.1v1.2h-1.1zM982.2 109.5h1.1v1.2h-1.1zM983.1 109.5h1.1v1.2h-1.1zM987 109.5h1.1v1.2h-1.1zM989.4 109.5h1.1v1.2h-1.1zM990.4 109.5h1.1v1.2h-1.1zM994 109.5h1.1v1.2h-1.1zM996.6 109.5h1.1v1.2h-1.1zM980.7 112.6h1.2v1h-1.2zM984.3 112.6h1.2v1h-1.2zM991.9 112.6h1.2v1h-1.2zM995.3 112.6h1.2v1h-1.2zM999 102.5h0.9v1h-0.9zM1000.38 102.5h1.3v1h-1.3zM1001.75 102.5h0.9v1h-0.9zM1003.12 102.5h0.9v1h-0.9zM1000 109.5h1.1v1.2h-1.1zM1001.6 109.5h1.1v1.2h-1.1zM1002.7 112.6h1.2v1h-1.2z" fill="#0b0b12"/><path d="M935 98h11v0.9h-11zM977 98h27v0.9h-27zM955 92.6h1v1h-1zM919 99.5h3v1.1h-3zM930 106.3h0.9v1.4h-0.9z" fill="#0b0b12"/><text x="9.6" y="84.3" font-size="7" fill="#222" letter-spacing="0.6">...</text><rect x="30.7" y="119.3" width="88" height="43.4" fill="#92a7ff"/><path d="M52.7 132.5V162.7M74.7 132.5V162.7M96.7 132.5V162.7" stroke="#7d8fdb" stroke-width="1" fill="none"/><path d="M41.7 132.5V162.7M63.7 132.5V162.7M85.7 132.5V162.7M107.7 132.5V162.7" stroke="#8396e5" stroke-width="0.9" fill="none"/><rect x="30.7" y="132.2" width="88" height="0.9" fill="#9cafff"/><path d="M31.3 137.25L31.85 136.8L32.4 137.3L32.95 137.31L33.5 137.16L34.05 136.73L34.6 137.21L35.15 136.87L35.7 137.75L36.25 138.02L36.8 137.71L37.35 139L37.9 138.87L38.45 136.7L39 136.79L39.55 136.61L40.1 137.08L40.65 137.02L41.2 138.37L41.75 137.02L42.3 136.6L42.85 136.57L43.4 137.07L43.95 137.3L44.5 137.69L45.05 137.61L45.6 137.13L46.15 136.82L46.7 137.32L47.25 137.07L47.8 137.35L48.35 139.71L48.9 139.62L49.45 139.27L50 139.19L50.55 138.96L51.1 138.76L51.65 138.22L52.2 138L52.75 138.81L53.3 136.96L53.85 136.52L54.4 137.38L54.95 137.94L55.5 137.72L56.05 136.94L56.6 137.33L57.15 137.19L57.7 137.91L58.25 137.56L58.8 137.69L59.35 138.91L59.9 139.22L60.45 136.84L61 136.9L61.55 136.47L62.1 136.71L62.65 136.75L63.2 138.47L63.75 137.64L64.3 136.75L64.85 137.35L65.4 137.5L65.95 137.5L66.5 137.49L67.05 137.62L67.6 137.02L68.15 137.32L68.7 137.32L69.25 136.88L69.8 137.48L70.35 139.8L70.9 139.7L71.45 139.36L72 139.24L72.55 138.4L73.1 138.27L73.65 138.54L74.2 136.97L74.75 138.5L75.3 137.08L75.85 136.56L76.4 137.69L76.95 137.52L77.5 137.71L78.05 136.83L78.6 137.4L79.15 137.08L79.7 137.76L80.25 137.75L80.8 137.52L81.35 139.13L81.9 138.85L82.45 137.1L83 136.67L83.55 137.21L84.1 136.55L84.65 137.37L85.2 138.36L85.75 137.51L86.3 136.88L86.85 137.09L87.4 136.74L87.95 137.37L88.5 137.85L89.05 138.03L89.6 136.93L90.15 136.41L90.7 136.8L91.25 136.91L91.8 137.42L92.35 139.66L92.9 139.54L93.45 139.28L94 138.97L94.55 138.81L95.1 138.49L95.65 138.13L96.2 138.27L96.75 138.63L97.3 136.64L97.85 137.12L98.4 137.5L98.95 137.66L99.5 136.38L100.05 137.06L100.6 137.2L101.15 137.28L101.7 138.02L102.25 138.13L102.8 137.09L103.35 138.85L103.9 138.93L104.45 137.2L105 136.97L105.55 136.65L106.1 135.63L106.65 137.37L107.2 138.64L107.75 137.6L108.3 136.84L108.85 137L109.4 137.37L109.95 137.7L110.5 137.75L111.05 137.55L111.6 136.79L112.15 136.26L112.7 136.88L113.25 136.95L113.8 137.69L114.35 139.69L114.9 139.55L115.45 139.39L116 138.96L116.55 138.77L117.1 138.64L117.65 138.4L118.2 138.01L118.2 142.21L117.65 141.9L117.1 141.96L116.55 141.82L116 141.53L115.45 141.1L114.9 140.92L114.35 140.77L113.8 142.99L113.25 143.65L112.7 143.23L112.15 144.02L111.6 143.88L111.05 142.8L110.5 142.81L109.95 142.73L109.4 143.44L108.85 143.25L108.3 143.81L107.75 142.54L107.2 141.84L106.65 142.93L106.1 145.11L105.55 143.82L105 143.64L104.45 143.22L103.9 141.46L103.35 141.68L102.8 143.52L102.25 142.03L101.7 142.3L101.15 143.09L100.6 143.32L100.05 143.14L99.5 143.93L98.95 142.7L98.4 143.13L97.85 142.98L97.3 143.76L96.75 141.7L96.2 142.22L95.65 142.07L95.1 141.67L94.55 141.7L94 141.6L93.45 141.01L92.9 140.86L92.35 140.67L91.8 142.88L91.25 143.5L90.7 143.79L90.15 144.21L89.6 143.19L89.05 142.44L88.5 142.35L87.95 142.81L87.4 143.5L86.85 143.15L86.3 143.74L85.75 142.69L85.2 142.2L84.65 142.64L84.1 143.75L83.55 143.08L83 143.57L82.45 143L81.9 141.35L81.35 141.39L80.8 142.69L80.25 142.56L79.7 142.28L79.15 142.89L78.6 142.72L78.05 143.83L77.5 142.52L76.95 142.54L76.4 142.8L75.85 143.39L75.3 143.5L74.75 141.79L74.2 143.16L73.65 141.73L73.1 142.24L72.55 142.01L72 141.26L71.45 140.97L70.9 140.63L70.35 140.6L69.8 142.54L69.25 143.75L68.7 143.33L68.15 143.38L67.6 143.75L67.05 143.13L66.5 143.12L65.95 142.95L65.4 142.57L64.85 142.64L64.3 143.23L63.75 142.73L63.2 141.97L62.65 143.24L62.1 143.31L61.55 143.67L61 143.16L60.45 143.44L59.9 141.24L59.35 141.64L58.8 142.6L58.25 143.21L57.7 142.45L57.15 143.5L56.6 143.19L56.05 142.98L55.5 143.05L54.95 142.31L54.4 143.44L53.85 143.62L53.3 143.53L52.75 141.47L52.2 142.45L51.65 142.09L51.1 141.6L50.55 141.3L50 141.09L49.45 141L48.9 140.72L48.35 140.68L47.8 143.23L47.25 143.23L46.7 143.1L46.15 143.09L45.6 143.49L45.05 142.64L44.5 142.37L43.95 143.32L43.4 143.49L42.85 143.82L42.3 144.03L41.75 143.14L41.2 142.21L40.65 143.25L40.1 143.35L39.55 143.8L39 143.72L38.45 143.31L37.9 141.51L37.35 141.52L36.8 142.9L36.25 142.14L35.7 142.89L35.15 143.98L34.6 143.3L34.05 143.34L33.5 143.07L32.95 143.47L32.4 142.73L31.85 143.53L31.3 143.39 Z" fill="#1d1d28"/><path d="M31.3 152.46L31.85 152.49L32.4 153.08L32.95 153.32L33.5 152.91L34.05 151.9L34.6 152.04L35.15 152.28L35.7 153.18L36.25 152.94L36.8 152.59L37.35 154.01L37.9 154.23L38.45 151.74L39 151.98L39.55 151.53L40.1 151.51L40.65 151.59L41.2 153.55L41.75 152.45L42.3 152.57L42.85 152.13L43.4 152.11L43.95 153.1L44.5 152.77L45.05 152.44L45.6 152.4L46.15 152.22L46.7 152.53L47.25 151.5L47.8 152.55L48.35 154.72L48.9 154.74L49.45 154.55L50 154.2L50.55 154.12L51.1 153.79L51.65 152.6L52.2 153.27L52.75 153.92L53.3 152.02L53.85 151.9L54.4 152.54L54.95 152.61L55.5 152.39L56.05 152.56L56.6 151.78L57.15 152.52L57.7 152.54L58.25 153.17L58.8 152.76L59.35 153.95L59.9 153.66L60.45 151.72L61 152.04L61.55 152.23L62.1 151.64L62.65 152.13L63.2 153.36L63.75 152.31L64.3 152.49L64.85 151.72L65.4 151.87L65.95 152.45L66.5 152.63L67.05 152.72L67.6 151.88L68.15 152.37L68.7 151.89L69.25 152.14L69.8 152.8L70.35 154.76L70.9 154.71L71.45 154.41L72 154.11L72.55 154.09L73.1 153.81L73.65 153.56L74.2 152.94L74.75 153.61L75.3 151.8L75.85 152.21L76.4 152.78L76.95 152.98L77.5 153L78.05 152.15L78.6 151.81L79.15 152.72L79.7 153.13L80.25 152.66L80.8 152.43L81.35 153.95L81.9 154.25L82.45 151.48L83 151.4L83.55 151.91L84.1 151.91L84.65 152.26L85.2 153.39L85.75 152.23L86.3 152.56L86.85 150.94L87.4 151.95L87.95 152.32L88.5 153.32L89.05 153.12L89.6 152.04L90.15 151.8L90.7 151.51L91.25 152.38L91.8 152.97L92.35 154.85L92.9 154.66L93.45 154.32L94 153.99L94.55 154.06L95.1 153.51L95.65 153.49L96.2 152.83L96.75 153.89L97.3 151.75L97.85 152.6L98.4 153L98.95 153.25L99.5 152.34L100.05 152.27L100.6 151.74L101.15 152.82L101.7 152.5L102.25 152.78L102.8 152.61L103.35 153.96L103.9 154.29L104.45 151.57L105 151.84L105.55 151.75L106.1 151.79L106.65 152.34L107.2 153.7L107.75 152.62L108.3 152.2L108.85 152.01L109.4 152.36L109.95 152.76L110.5 152.99L111.05 152.41L111.6 152.8L112.15 151.68L112.7 151.69L113.25 152.8L113.8 152.98L114.35 154.86L114.9 154.49L115.45 154.46L116 154.08L116.55 153.95L117.1 153.76L117.65 153.22L118.2 152.91L118.2 157.4L117.65 157.37L117.1 156.68L116.55 156.77L116 156.47L115.45 156.21L114.9 156.09L114.35 155.74L113.8 157.86L113.25 157.62L112.7 158.65L112.15 158.98L111.6 157.64L111.05 158.4L110.5 157.33L109.95 157.88L109.4 158.03L108.85 158.6L108.3 158.32L107.75 157.92L107.2 156.85L106.65 158.15L106.1 158.41L105.55 158.83L105 159.27L104.45 159.15L103.9 156.36L103.35 156.78L102.8 157.73L102.25 157.79L101.7 158L101.15 158.05L100.6 158.37L100.05 157.91L99.5 157.99L98.95 157.32L98.4 157.52L97.85 158.3L97.3 158.81L96.75 156.57L96.2 157.55L95.65 157.35L95.1 157.28L94.55 156.67L94 156.48L93.45 156.27L92.9 155.9L92.35 155.73L91.8 157.55L91.25 157.91L90.7 159.3L90.15 159.04L89.6 158.78L89.05 157.55L88.5 157.46L87.95 158.28L87.4 158.53L86.85 159.79L86.3 157.9L85.75 158.34L85.2 156.93L84.65 158.02L84.1 159.06L83.55 159.07L83 159.12L82.45 159.49L81.9 156.26L81.35 156.74L80.8 157.87L80.25 157.64L79.7 157.51L79.15 157.63L78.6 158.54L78.05 158.57L77.5 157.37L76.95 157.33L76.4 157.61L75.85 158.6L75.3 158.62L74.75 157.12L74.2 157.42L73.65 157.01L73.1 156.83L72.55 156.43L72 156.33L71.45 156.17L70.9 155.96L70.35 155.89L69.8 157.78L69.25 158.24L68.7 159.07L68.15 158.27L67.6 158.54L67.05 158L66.5 157.9L65.95 158.42L65.4 158.93L64.85 159.38L64.3 158.48L63.75 157.96L63.2 157.3L62.65 158.73L62.1 158.78L61.55 158.36L61 158.65L60.45 158.73L59.9 157.05L59.35 156.6L58.8 158.17L58.25 157.39L57.7 157.94L57.15 157.68L56.6 158.44L56.05 157.97L55.5 157.8L54.95 157.94L54.4 157.68L53.85 158.35L53.3 158.33L52.75 156.65L52.2 157.55L51.65 157.69L51.1 156.63L50.55 156.55L50 156.27L49.45 155.96L48.9 155.87L48.35 155.84L47.8 158.29L47.25 158.69L46.7 158.46L46.15 157.96L45.6 158.57L45.05 158.17L44.5 158.19L43.95 157.82L43.4 158.11L42.85 158.72L42.3 157.72L41.75 158.29L41.2 156.79L40.65 159.25L40.1 158.93L39.55 159.32L39 158.41L38.45 159.38L37.9 156.4L37.35 156.6L36.8 158.24L36.25 157.38L35.7 157.65L35.15 158L34.6 158.54L34.05 158.3L33.5 157.54L32.95 157.25L32.4 157.3L31.85 157.92L31.3 158.32 Z" fill="#1d1d28"/><rect x="118.7" y="119.3" width="88" height="43.4" fill="#92a7ff"/><path d="M140.7 132.5V162.7M162.7 132.5V162.7M184.7 132.5V162.7" stroke="#7d8fdb" stroke-width="1" fill="none"/><path d="M129.7 132.5V162.7M151.7 132.5V162.7M173.7 132.5V162.7M195.7 132.5V162.7" stroke="#8396e5" stroke-width="0.9" fill="none"/><rect x="118.1" y="119.3" width="1.3" height="43.4" fill="#5a679e"/><rect x="118.7" y="132.2" width="88" height="0.9" fill="#9cafff"/><path d="M119.3 136.78L119.85 136.58L120.4 137.8L120.95 137.71L121.5 137.92L122.05 136.72L122.6 137.06L123.15 137.58L123.7 138.1L124.25 137.62L124.8 137.34L125.35 138.65L125.9 139.01L126.45 135.73L127 136.48L127.55 137.32L128.1 136.6L128.65 136.87L129.2 138.47L129.75 136.47L130.3 137.46L130.85 136.45L131.4 136.95L131.95 137.36L132.5 137.63L133.05 137.73L133.6 136.81L134.15 137.36L134.7 136.28L135.25 136.97L135.8 137.91L136.35 139.66L136.9 139.7L137.45 139.49L138 139.09L138.55 138.92L139.1 138.49L139.65 137.97L140.2 137.68L140.75 138.83L141.3 137.28L141.85 137.07L142.4 137.4L142.95 137.81L143.5 137.7L144.05 137.28L144.6 136.32L145.15 136.85L145.7 137.66L146.25 137.39L146.8 136.76L147.35 139.06L147.9 138.98L148.45 136.46L149 137.1L149.55 136.33L150.1 136.59L150.65 136.94L151.2 138.53L151.75 137.63L152.3 136.72L152.85 136.42L153.4 137.46L153.95 137.25L154.5 137.78L155.05 137.33L155.6 137.27L156.15 137.39L156.7 136.38L157.25 137.37L157.8 137.88L158.35 139.76L158.9 139.65L159.45 139.26L160 138.92L160.55 138.89L161.1 138.69L161.65 138.29L162.2 137.78L162.75 138.55L163.3 137.38L163.85 136.92L164.4 137.4L164.95 137.52L165.5 136.51L166.05 137.43L166.6 135.56L167.15 137.12L167.7 138.09L168.25 137.41L168.8 136.94L169.35 138.85L169.9 139.11L170.45 136.83L171 136.93L171.55 136.81L172.1 136.63L172.65 136.71L173.2 138.51L173.75 137.78L174.3 137.39L174.85 136.91L175.4 137.49L175.95 137.3L176.5 137.84L177.05 137.47L177.6 137.02L178.15 137.16L178.7 136.84L179.25 136.92L179.8 137.52L180.35 139.72L180.9 139.7L181.45 139.45L182 138.97L182.55 138.99L183.1 138.79L183.65 138.42L184.2 137.81L184.75 138.51L185.3 136.78L185.85 136.81L186.4 137.73L186.95 137.49L187.5 136.65L188.05 137.07L188.6 137.14L189.15 137.58L189.7 137.65L190.25 138.14L190.8 137.14L191.35 138.98L191.9 139.14L192.45 136.49L193 137.33L193.55 137.17L194.1 136.63L194.65 136.51L195.2 138.2L195.75 137.03L196.3 137.03L196.85 136.71L197.4 137.29L197.95 137.98L198.5 138L199.05 137.41L199.6 137.23L200.15 136.81L200.7 135.83L201.25 137.36L201.8 137.65L202.35 139.73L202.9 139.37L203.45 139.26L204 139.2L204.55 138.99L205.1 138.79L205.65 138.23L206.2 138.27L206.2 141.89L205.65 142.22L205.1 141.7L204.55 141.28L204 141.32L203.45 141.09L202.9 141L202.35 140.63L201.8 142.68L201.25 142.85L200.7 144.16L200.15 143.23L199.6 143.42L199.05 143.38L198.5 142.21L197.95 142.4L197.4 143.52L196.85 144.01L196.3 142.93L195.75 143.29L195.2 142.04L194.65 143.89L194.1 143.39L193.55 143.55L193 143.25L192.45 143.54L191.9 141.38L191.35 141.49L190.8 143.65L190.25 142.03L189.7 143.04L189.15 142.75L188.6 143.65L188.05 143.68L187.5 143.33L186.95 143.25L186.4 142.99L185.85 143.66L185.3 144.01L184.75 142.03L184.2 142.41L183.65 141.8L183.1 141.46L182.55 141.47L182 141.54L181.45 140.93L180.9 140.68L180.35 140.62L179.8 142.59L179.25 143.53L178.7 143.63L178.15 143.27L177.6 142.92L177.05 142.56L176.5 142.73L175.95 143.29L175.4 143.15L174.85 143.82L174.3 143.34L173.75 142.81L173.2 141.86L172.65 144.15L172.1 143.9L171.55 143.09L171 143.02L170.45 144L169.9 141.38L169.35 141.63L168.8 143.23L168.25 143.14L167.7 142.53L167.15 142.82L166.6 145.46L166.05 142.86L165.5 144.08L164.95 143.27L164.4 143.24L163.85 143.62L163.3 142.71L162.75 141.86L162.2 142.39L161.65 142.34L161.1 141.56L160.55 141.5L160 141.3L159.45 141.22L158.9 140.69L158.35 140.67L157.8 142.86L157.25 142.65L156.7 144.59L156.15 143.19L155.6 142.79L155.05 143.13L154.5 142.5L153.95 142.91L153.4 143.12L152.85 143.45L152.3 143.85L151.75 142.51L151.2 141.67L150.65 143.21L150.1 144.04L149.55 143.89L149 143.48L148.45 144.16L147.9 141.51L147.35 141.26L146.8 143.18L146.25 142.98L145.7 142.9L145.15 143.49L144.6 143.56L144.05 143.09L143.5 142.87L142.95 142.62L142.4 143.14L141.85 143.5L141.3 143L140.75 141.43L140.2 142.38L139.65 142.55L139.1 141.82L138.55 141.54L138 141.41L137.45 140.99L136.9 140.75L136.35 140.71L135.8 142.22L135.25 143.85L134.7 143.86L134.15 143.2L133.6 143.42L133.05 142.4L132.5 143.08L131.95 142.77L131.4 143.75L130.85 143.52L130.3 143.31L129.75 143.47L129.2 142.03L128.65 143.9L128.1 143.97L127.55 143.24L127 143.56L126.45 144.76L125.9 141.22L125.35 141.73L124.8 142.97L124.25 142.7L123.7 142.42L123.15 142.66L122.6 143.25L122.05 143.65L121.5 142.2L120.95 143.05L120.4 142.44L119.85 144L119.3 144.09 Z" fill="#1d1d28"/><path d="M119.3 152.44L119.85 152.34L120.4 152.68L120.95 152.67L121.5 152.59L122.05 152.4L122.6 152.19L123.15 152.71L123.7 153.26L124.25 152.73L124.8 152.07L125.35 154.21L125.9 154.11L126.45 152.29L127 152.03L127.55 152.04L128.1 151.94L128.65 152.14L129.2 153.64L129.75 152.49L130.3 151.22L130.85 151.55L131.4 150.93L131.95 152.07L132.5 152.95L133.05 152.91L133.6 151.92L134.15 151.65L134.7 151.59L135.25 152.85L135.8 152.43L136.35 154.68L136.9 154.79L137.45 154.53L138 154.14L138.55 153.29L139.1 153.61L139.65 153.42L140.2 152.97L140.75 153.29L141.3 151.59L141.85 152.08L142.4 152.68L142.95 152.66L143.5 152.99L144.05 151.93L144.6 152.41L145.15 151.93L145.7 152.85L146.25 153.01L146.8 151.7L147.35 154.22L147.9 154.05L148.45 152.02L149 152.1L149.55 152.43L150.1 152.43L150.65 151.95L151.2 153.66L151.75 152.72L152.3 152.47L152.85 151.51L153.4 152.08L153.95 152.93L154.5 152.63L155.05 152.62L155.6 151.97L156.15 152.41L156.7 151.89L157.25 152.18L157.8 152.67L158.35 154.76L158.9 154.79L159.45 154.43L160 154.17L160.55 153.75L161.1 153.64L161.65 153.32L162.2 152.82L162.75 154.01L163.3 152.16L163.85 152.04L164.4 152.95L164.95 152.58L165.5 152.34L166.05 152.32L166.6 150.94L167.15 152.11L167.7 152.63L168.25 152.56L168.8 151.89L169.35 153.94L169.9 154.29L170.45 151.11L171 152.47L171.55 152.26L172.1 151.95L172.65 150.94L173.2 153.74L173.75 152.61L174.3 152.16L174.85 152.23L175.4 152.64L175.95 152.41L176.5 153.12L177.05 153.17L177.6 152.61L178.15 151.53L178.7 151.49L179.25 152L179.8 152.82L180.35 154.83L180.9 154.75L181.45 154.39L182 154.31L182.55 153.72L183.1 153.4L183.65 152.94L184.2 152.81L184.75 153.92L185.3 151.74L185.85 151.85L186.4 152.59L186.95 153.2L187.5 152.63L188.05 152.11L188.6 152.07L189.15 152L189.7 152.93L190.25 152.8L190.8 152.04L191.35 154.03L191.9 154.18L192.45 151.66L193 151.62L193.55 152.04L194.1 151.88L194.65 152.25L195.2 152.99L195.75 152.9L196.3 152.57L196.85 151.34L197.4 152.36L197.95 153.03L198.5 153.33L199.05 152.84L199.6 151.93L200.15 151.77L200.7 151.47L201.25 152.52L201.8 152.8L202.35 154.82L202.9 154.82L203.45 154.46L204 154.23L204.55 153.99L205.1 153.54L205.65 153.48L206.2 153.2L206.2 157.66L205.65 156.86L205.1 157.17L204.55 156.6L204 156.29L203.45 156.26L202.9 155.84L202.35 155.71L201.8 157.56L201.25 158.19L200.7 159.11L200.15 158.59L199.6 158.89L199.05 157.82L198.5 157.47L197.95 157.38L197.4 158.3L196.85 159.21L196.3 157.72L195.75 157.64L195.2 157.44L194.65 158.14L194.1 158.98L193.55 158.27L193 158.83L192.45 158.45L191.9 156.58L191.35 156.59L190.8 158.73L190.25 157.82L189.7 157.4L189.15 159.05L188.6 158.1L188.05 158.64L187.5 158.3L186.95 157.18L186.4 158.23L185.85 158.41L185.3 159.33L184.75 156.49L184.2 157.52L183.65 157.57L183.1 157.44L182.55 157.05L182 156.38L181.45 156.28L180.9 155.89L180.35 155.83L179.8 158.01L179.25 158.88L178.7 159.25L178.15 158.71L177.6 157.77L177.05 157.28L176.5 157.46L175.95 158.42L175.4 158L174.85 158.34L174.3 158.04L173.75 158.16L173.2 156.65L172.65 159.77L172.1 158.87L171.55 158.1L171 158.36L170.45 159L169.9 156.23L169.35 156.59L168.8 158.43L168.25 158.35L167.7 158.11L167.15 158.57L166.6 160.3L166.05 157.87L165.5 158.14L164.95 157.83L164.4 157.51L163.85 158.76L163.3 158.69L162.75 156.49L162.2 157.54L161.65 157.36L161.1 157.16L160.55 156.66L160 156.5L159.45 156.26L158.9 155.83L158.35 155.78L157.8 157.55L157.25 158.6L156.7 158.87L156.15 158.42L155.6 158.42L155.05 158.15L154.5 158.26L153.95 157.57L153.4 158.34L152.85 158.53L152.3 158.47L151.75 157.95L151.2 157.08L150.65 159.13L150.1 157.8L149.55 158.08L149 158.38L148.45 158.61L147.9 156.62L147.35 156.32L146.8 158.57L146.25 157.4L145.7 157.39L145.15 158.39L144.6 157.85L144.05 158.25L143.5 157.75L142.95 157.85L142.4 157.54L141.85 158.72L141.3 158.6L140.75 157.06L140.2 157.84L139.65 157.1L139.1 157.02L138.55 157.56L138 156.37L137.45 156.11L136.9 155.84L136.35 155.94L135.8 158L135.25 158.01L134.7 158.47L134.15 158.77L133.6 158.33L133.05 157.63L132.5 157.91L131.95 158.26L131.4 159.97L130.85 159.36L130.3 159.22L129.75 158.17L129.2 157.09L128.65 158.31L128.1 158.75L127.55 159L127 158.09L126.45 158.5L125.9 156.62L125.35 156.42L124.8 158.7L124.25 157.9L123.7 157.08L123.15 158.02L122.6 158.19L122.05 157.93L121.5 158.04L120.95 157.64L120.4 157.88L119.85 158.43L119.3 157.73 Z" fill="#1d1d28"/><rect x="206.7" y="119.3" width="88" height="43.4" fill="#92a7ff"/><path d="M228.7 132.5V162.7M250.7 132.5V162.7M272.7 132.5V162.7" stroke="#7d8fdb" stroke-width="1" fill="none"/><path d="M217.7 132.5V162.7M239.7 132.5V162.7M261.7 132.5V162.7M283.7 132.5V162.7" stroke="#8396e5" stroke-width="0.9" fill="none"/><rect x="206.1" y="119.3" width="1.3" height="43.4" fill="#5a679e"/><rect x="206.7" y="132.2" width="88" height="0.9" fill="#9cafff"/><path d="M207.3 137.25L207.85 136.79L208.4 137.46L208.95 137.83L209.5 137.22L210.05 137.29L210.6 136.67L211.15 137.31L211.7 138.07L212.25 137.61L212.8 137.39L213.35 138.93L213.9 138.87L214.45 136.75L215 136.78L215.55 136.42L216.1 136.88L216.65 136.71L217.2 138.42L217.75 137L218.3 136.47L218.85 136.38L219.4 137.58L219.95 137.7L220.5 137.51L221.05 137.55L221.6 137.59L222.15 137.35L222.7 137.32L223.25 137.45L223.8 137.92L224.35 139.69L224.9 139.57L225.45 139.26L226 139.23L226.55 138.85L227.1 138.29L227.65 138.39L228.2 137.82L228.75 138.46L229.3 136.5L229.85 136.78L230.4 137.83L230.95 137.89L231.5 137.22L232.05 137.39L232.6 137.15L233.15 137.23L233.7 137.46L234.25 138.09L234.8 135.93L235.35 139L235.9 139.11L236.45 136.63L237 137.31L237.55 136.57L238.1 137.23L238.65 136.32L239.2 138.57L239.75 137.51L240.3 136.98L240.85 136.65L241.4 136.96L241.95 137.45L242.5 137.89L243.05 137.29L243.6 137.68L244.15 137.01L244.7 137.04L245.25 137.54L245.8 137.51L246.35 139.67L246.9 139.67L247.45 139.25L248 138.99L248.55 139.02L249.1 138.42L249.65 138.13L250.2 138.01L250.75 138.82L251.3 136.98L251.85 136.98L252.4 137.93L252.95 138.16L253.5 137.91L254.05 137.04L254.6 136.45L255.15 137.47L255.7 137.69L256.25 137.84L256.8 136.89L257.35 139.03L257.9 138.6L258.45 136.98L259 136.43L259.55 136.72L260.1 137.08L260.65 137.13L261.2 138.44L261.75 137.25L262.3 137.24L262.85 137.22L263.4 137.25L263.95 137.33L264.5 137.81L265.05 137.36L265.6 137.01L266.15 137.17L266.7 136.39L267.25 137.6L267.8 137.64L268.35 139.67L268.9 139.57L269.45 139.24L270 139L270.55 138.69L271.1 138.5L271.65 138.5L272.2 137.63L272.75 138.77L273.3 136.58L273.85 137.29L274.4 137.81L274.95 137.93L275.5 137.38L276.05 136.64L276.6 136.42L277.15 137.41L277.7 137.86L278.25 137.54L278.8 136.95L279.35 138.86L279.9 138.99L280.45 136.98L281 136.37L281.55 136.9L282.1 137.1L282.65 136.38L283.2 138.61L283.75 137.13L284.3 136.63L284.85 136.76L285.4 136.87L285.95 138.02L286.5 138.09L287.05 138.07L287.6 137.1L288.15 136.64L288.7 136.68L289.25 137.35L289.8 137.59L290.35 139.68L290.9 139.72L291.45 139.33L292 138.92L292.55 138.83L293.1 138.39L293.65 138.02L294.2 137.82L294.2 142.24L293.65 142.22L293.1 142.08L292.55 141.52L292 141.36L291.45 141.11L290.9 140.64L290.35 140.67L289.8 143.06L289.25 143.36L288.7 143.38L288.15 143.93L287.6 142.86L287.05 142.06L286.5 142.12L285.95 142.43L285.4 143.52L284.85 143.76L284.3 143.33L283.75 143.25L283.2 141.9L282.65 144.36L282.1 142.93L281.55 143.85L281 143.99L280.45 143.66L279.9 141.59L279.35 141.7L278.8 143.91L278.25 142.55L277.7 142.58L277.15 143.34L276.6 144.2L276.05 144.22L275.5 143.07L274.95 142.55L274.4 142.83L273.85 143.25L273.3 144.09L272.75 141.49L272.2 142.47L271.65 141.81L271.1 142.14L270.55 141.55L270 141.35L269.45 141.08L268.9 140.91L268.35 140.68L267.8 142.74L267.25 142.88L266.7 144.04L266.15 143.15L265.6 143.1L265.05 143.13L264.5 142.95L263.95 143.4L263.4 142.84L262.85 143.6L262.3 143.59L261.75 143.42L261.2 141.75L260.65 142.96L260.1 143.7L259.55 143.55L259 143.8L258.45 143.75L257.9 141.8L257.35 141.41L256.8 143.03L256.25 142.44L255.7 142.48L255.15 142.93L254.6 143.72L254.05 143.7L253.5 142.2L252.95 142.35L252.4 142.35L251.85 143.21L251.3 142.95L250.75 141.45L250.2 142.53L249.65 142.57L249.1 142.15L248.55 141.28L248 141.3L247.45 141.08L246.9 140.79L246.35 140.75L245.8 143.04L245.25 143.11L244.7 143.81L244.15 143.34L243.6 142.99L243.05 143.53L242.5 142.75L241.95 142.56L241.4 143.01L240.85 143.73L240.3 143.04L239.75 142.68L239.2 141.81L238.65 144.52L238.1 142.89L237.55 143.51L237 142.75L236.45 143.83L235.9 141.41L235.35 141.39L234.8 144.48L234.25 142.47L233.7 143.31L233.15 143.22L232.6 142.8L232.05 142.98L231.5 143.04L230.95 142.5L230.4 142.32L229.85 143.17L229.3 144.2L228.75 141.92L228.2 142.72L227.65 142.09L227.1 141.82L226.55 141.74L226 141.26L225.45 141.06L224.9 140.82L224.35 140.7L223.8 142.34L223.25 142.88L222.7 143.01L222.15 142.76L221.6 142.6L221.05 142.78L220.5 142.85L219.95 142.84L219.4 143.12L218.85 143.64L218.3 143.82L217.75 143.43L217.2 142.03L216.65 143.88L216.1 143.47L215.55 144.14L215 143.79L214.45 143.58L213.9 141.41L213.35 141.43L212.8 143.02L212.25 142.47L211.7 142.41L211.15 143.12L210.6 143.67L210.05 143.38L209.5 143.07L208.95 142.58L208.4 142.57L207.85 143.49L207.3 142.86 Z" fill="#1d1d28"/><path d="M207.3 151.68L207.85 152.43L208.4 152.72L208.95 152.93L209.5 152.55L210.05 151.72L210.6 152.01L211.15 152.85L211.7 152.91L212.25 153.21L212.8 151.26L213.35 154.25L213.9 154.27L214.45 152.28L215 151.78L215.55 151.55L216.1 151.31L216.65 152.07L217.2 153.55L217.75 152.62L218.3 151.14L218.85 151.45L219.4 152.64L219.95 152.4L220.5 153.1L221.05 153.09L221.6 152.05L222.15 152.16L222.7 151.04L223.25 152.32L223.8 153.16L224.35 154.71L224.9 154.7L225.45 154.25L226 154.08L226.55 154.02L227.1 153.57L227.65 153.27L228.2 153.42L228.75 153.72L229.3 151.76L229.85 151.73L230.4 152.77L230.95 152.87L231.5 152.69L232.05 152.36L232.6 152.19L233.15 151.98L233.7 152.65L234.25 152.27L234.8 152.28L235.35 153.94L235.9 154.23L236.45 151.8L237 152.28L237.55 151.73L238.1 152.18L238.65 152.34L239.2 153.74L239.75 152.57L240.3 152.54L240.85 151.77L241.4 152.2L241.95 152.91L242.5 153.02L243.05 152.44L243.6 152.01L244.15 151.77L244.7 152.17L245.25 152.36L245.8 152.94L246.35 154.88L246.9 154.75L247.45 154.43L248 154.09L248.55 153.69L249.1 153.39L249.65 153.64L250.2 152.53L250.75 154L251.3 151.65L251.85 152.24L252.4 152.25L252.95 152.65L253.5 152.78L254.05 152.09L254.6 151.82L255.15 152.74L255.7 152.61L256.25 152.81L256.8 152.52L257.35 154.19L257.9 154.24L258.45 152.43L259 151.92L259.55 151.81L260.1 151.65L260.65 151.66L261.2 153.73L261.75 152.88L262.3 152.35L262.85 151.57L263.4 151.92L263.95 152.81L264.5 153.01L265.05 152.85L265.6 152.29L266.15 152.28L266.7 152L267.25 152.54L267.8 153.01L268.35 154.88L268.9 154.77L269.45 154.41L270 154.14L270.55 154.07L271.1 153.43L271.65 153.39L272.2 152.26L272.75 154.02L273.3 152.35L273.85 152.14L274.4 152.68L274.95 152.62L275.5 152.68L276.05 151.73L276.6 151.61L277.15 152.86L277.7 152.72L278.25 153.17L278.8 152.75L279.35 154.07L279.9 154.1L280.45 152.38L281 151.94L281.55 151.86L282.1 151.92L282.65 150.77L283.2 153.36L283.75 152.47L284.3 152.28L284.85 150.83L285.4 151.91L285.95 152.61L286.5 152.94L287.05 152.83L287.6 152.73L288.15 151.5L288.7 151.9L289.25 152.6L289.8 152.92L290.35 154.81L290.9 154.75L291.45 154.38L292 154.32L292.55 153.98L293.1 153.78L293.65 153.17L294.2 153.01L294.2 157.43L293.65 157.29L293.1 156.96L292.55 156.73L292 156.39L291.45 156.35L290.9 155.83L290.35 155.74L289.8 157.62L289.25 157.76L288.7 158.91L288.15 158.87L287.6 157.8L287.05 157.88L286.5 158.01L285.95 157.98L285.4 158.93L284.85 159.23L284.3 158.23L283.75 158.04L283.2 157.45L282.65 160.24L282.1 158.4L281.55 159.12L281 158.87L280.45 158.05L279.9 156.57L279.35 156.49L278.8 158.04L278.25 157.26L277.7 157.93L277.15 157.51L276.6 158.9L276.05 159.22L275.5 158.27L274.95 157.87L274.4 158.24L273.85 158.09L273.3 158.08L272.75 156.54L272.2 158.5L271.65 157.35L271.1 157.37L270.55 156.38L270 156.38L269.45 156.21L268.9 155.84L268.35 155.67L267.8 157.93L267.25 158.17L266.7 158.28L266.15 158L265.6 158.07L265.05 157.38L264.5 157.65L263.95 157.64L263.4 158.43L262.85 159.07L262.3 157.91L261.75 157.48L261.2 156.83L260.65 159.33L260.1 159.37L259.55 158.4L259 158.66L258.45 158.25L257.9 156.22L257.35 156.56L256.8 157.77L256.25 157.91L255.7 158.26L255.15 157.95L254.6 158.27L254.05 158.21L253.5 157.83L252.95 157.61L252.4 158.22L251.85 158.09L251.3 159.17L250.75 156.59L250.2 158.45L249.65 157.01L249.1 157.02L248.55 156.77L248 156.59L247.45 156.09L246.9 155.92L246.35 155.75L245.8 157.74L245.25 158.34L244.7 158.83L244.15 158.88L243.6 158.94L243.05 157.97L242.5 157.48L241.95 157.81L241.4 158.58L240.85 158.6L240.3 157.95L239.75 157.69L239.2 156.98L238.65 158.17L238.1 158.86L237.55 159.21L237 158.27L236.45 158.48L235.9 156.43L235.35 156.69L234.8 158.18L234.25 158.41L233.7 157.88L233.15 158.99L232.6 158.73L232.05 158.35L231.5 157.95L230.95 157.93L230.4 157.6L229.85 158.86L229.3 158.71L228.75 157.06L228.2 157.43L227.65 157.36L227.1 157.01L226.55 156.57L226 156.62L225.45 156.36L224.9 155.85L224.35 155.83L223.8 157.73L223.25 157.85L222.7 159.05L222.15 158.41L221.6 158.08L221.05 157.55L220.5 157.79L219.95 158.6L219.4 157.69L218.85 159.71L218.3 160.03L217.75 158.36L217.2 157.08L216.65 158.6L216.1 158.92L215.55 158.76L215 158.6L214.45 158.15L213.9 156.42L213.35 156.23L212.8 159.05L212.25 157.62L211.7 157.52L211.15 157.57L210.6 158.79L210.05 158.48L209.5 158.07L208.95 157.67L208.4 157.52L207.85 158.58L207.3 158.82 Z" fill="#1d1d28"/><rect x="294.7" y="119.3" width="88" height="43.4" fill="#92a7ff"/><path d="M316.7 132.5V162.7M338.7 132.5V162.7M360.7 132.5V162.7" stroke="#7d8fdb" stroke-width="1" fill="none"/><path d="M305.7 132.5V162.7M327.7 132.5V162.7M349.7 132.5V162.7M371.7 132.5V162.7" stroke="#8396e5" stroke-width="0.9" fill="none"/><rect x="294.1" y="119.3" width="1.3" height="43.4" fill="#5a679e"/><rect x="294.7" y="132.2" width="88" height="0.9" fill="#9cafff"/><path d="M295.3 136.35L295.85 136.77L296.4 137.47L296.95 137.55L297.5 137.91L298.05 137.5L298.6 137.28L299.15 137.39L299.7 137.86L300.25 137.49L300.8 137.15L301.35 139.04L301.9 139.13L302.45 136.42L303 137.07L303.55 136.93L304.1 136.39L304.65 136.63L305.2 138.06L305.75 137.13L306.3 136.91L306.85 136.51L307.4 137.58L307.95 137.48L308.5 137.8L309.05 137.78L309.6 137.37L310.15 136.84L310.7 136.71L311.25 136.82L311.8 137.97L312.35 139.8L312.9 139.55L313.45 139.4L314 139.25L314.55 138.95L315.1 138.32L315.65 138.09L316.2 137.95L316.75 138.78L317.3 137.26L317.85 136.83L318.4 136.43L318.95 138.22L319.5 137.58L320.05 136.52L320.6 136.57L321.15 137.73L321.7 137.51L322.25 137.5L322.8 137.29L323.35 138.93L323.9 139.14L324.45 136.83L325 136.36L325.55 136.72L326.1 136.38L326.65 137.33L327.2 138.18L327.75 137.28L328.3 137.1L328.85 136.7L329.4 136.95L329.95 137.75L330.5 138.16L331.05 137.55L331.6 137.27L332.15 136.55L332.7 137.41L333.25 137.36L333.8 137.45L334.35 139.71L334.9 139.67L335.45 139.24L336 139.25L336.55 138.53L337.1 138.32L337.65 138.39L338.2 138.11L338.75 138.79L339.3 136.67L339.85 137.05L340.4 137.73L340.95 137.89L341.5 137.34L342.05 136.75L342.6 136.65L343.15 137.36L343.7 137.81L344.25 138.11L344.8 137.48L345.35 139.09L345.9 138.84L346.45 137.13L347 136.46L347.55 137.28L348.1 136.88L348.65 136.97L349.2 138.31L349.75 137.5L350.3 136.65L350.85 137.4L351.4 136.8L351.95 137.22L352.5 137.48L353.05 137.68L353.6 137.33L354.15 137.1L354.7 136.43L355.25 137.08L355.8 137.71L356.35 139.65L356.9 139.4L357.45 139.32L358 138.99L358.55 138.6L359.1 138.39L359.65 138.11L360.2 137.98L360.75 138.59L361.3 136.39L361.85 136.87L362.4 137.23L362.95 137.93L363.5 137.92L364.05 136.98L364.6 136.73L365.15 137.3L365.7 137.77L366.25 137.37L366.8 137.05L367.35 138.85L367.9 138.69L368.45 136.56L369 136.48L369.55 136.54L370.1 136.35L370.65 135.95L371.2 138.25L371.75 137.4L372.3 136.59L372.85 136.57L373.4 136.72L373.95 137.32L374.5 138.04L375.05 138.06L375.6 137.35L376.15 136.47L376.7 137.32L377.25 137.23L377.8 137.78L378.35 139.73L378.9 139.62L379.45 139.34L380 139.07L380.55 138.89L381.1 138.66L381.65 137.96L382.2 137.62L382.2 142.5L381.65 142.12L381.1 141.65L380.55 141.46L380 141.48L379.45 141.06L378.9 140.73L378.35 140.67L377.8 142.68L377.25 143.18L376.7 142.74L376.15 143.9L375.6 142.77L375.05 142.43L374.5 142.38L373.95 143.05L373.4 143.23L372.85 143.9L372.3 143.37L371.75 143.04L371.2 142.33L370.65 144.93L370.1 144.08L369.55 143.97L369 144.41L368.45 143.79L367.9 141.68L367.35 141.41L366.8 142.98L366.25 143.26L365.7 142.45L365.15 142.83L364.6 144.17L364.05 143.1L363.5 142.38L362.95 142.66L362.4 142.83L361.85 143.57L361.3 143.97L360.75 141.92L360.2 142.11L359.65 142.35L359.1 142.19L358.55 141.91L358 141.4L357.45 141.19L356.9 141.05L356.35 140.7L355.8 142.48L355.25 143.71L354.7 144.38L354.15 143.53L353.6 143.27L353.05 142.78L352.5 142.76L351.95 142.82L351.4 143.29L350.85 143.25L350.3 144L349.75 142.82L349.2 142.05L348.65 143.58L348.1 143.05L347.55 143L347 143.65L346.45 143.45L345.9 141.36L345.35 141.46L344.8 142.79L344.25 142.18L343.7 142.29L343.15 143.24L342.6 143.35L342.05 143.79L341.5 142.86L340.95 142.61L340.4 142.7L339.85 143.61L339.3 144.1L338.75 141.76L338.2 142.11L337.65 141.84L337.1 142.26L336.55 141.75L336 141.16L335.45 141.02L334.9 140.69L334.35 140.68L333.8 143.34L333.25 143.15L332.7 143.2L332.15 144.01L331.6 143.15L331.05 143.22L330.5 142L329.95 142.77L329.4 143.4L328.85 143.65L328.3 142.94L327.75 142.99L327.2 142.49L326.65 142.65L326.1 144.33L325.55 143.45L325 143.79L324.45 144.05L323.9 141.31L323.35 141.46L322.8 143.36L322.25 142.69L321.7 143.09L321.15 142.69L320.6 143.41L320.05 144.43L319.5 143.1L318.95 142.03L318.4 143.95L317.85 143.95L317.3 143.48L316.75 141.59L316.2 142.51L315.65 142.15L315.1 142.21L314.55 141.37L314 141.19L313.45 140.9L312.9 140.82L312.35 140.64L311.8 142.65L311.25 144L310.7 143.73L310.15 143.39L309.6 142.89L309.05 142.73L308.5 142.41L307.95 142.95L307.4 142.46L306.85 144.16L306.3 143.38L305.75 143.08L305.2 142.38L304.65 143.76L304.1 144.37L303.55 143.07L303 143L302.45 144.22L301.9 141.39L301.35 141.29L300.8 143.36L300.25 142.81L299.7 142.59L299.15 143.19L298.6 142.85L298.05 142.58L297.5 142.72L296.95 142.54L296.4 142.83L295.85 143.19L295.3 144.3 Z" fill="#1d1d28"/><path d="M295.3 152.41L295.85 152.41L296.4 152.38L296.95 152.74L297.5 152.3L298.05 151.59L298.6 152.1L299.15 152.6L299.7 153.08L300.25 152.58L300.8 152.35L301.35 154.07L301.9 154.15L302.45 151.46L303 152.44L303.55 151.63L304.1 152.2L304.65 151.1L305.2 153.5L305.75 152.5L306.3 151.59L306.85 151.43L307.4 152.17L307.95 152.8L308.5 153.32L309.05 153.19L309.6 151.99L310.15 152.3L310.7 151.95L311.25 151.93L311.8 152.79L312.35 154.82L312.9 154.8L313.45 154.47L314 153.88L314.55 153.7L315.1 153.69L315.65 153.09L316.2 153.3L316.75 153.69L317.3 151.81L317.85 152.52L318.4 152.54L318.95 152.73L319.5 152.58L320.05 151.65L320.6 151.75L321.15 152.23L321.7 153.03L322.25 152.96L322.8 152.37L323.35 154.14L323.9 153.97L324.45 151.61L325 151.5L325.55 151.79L326.1 152.03L326.65 152L327.2 153.59L327.75 152.48L328.3 152.12L328.85 151.91L329.4 151.89L329.95 153.01L330.5 152.58L331.05 152.58L331.6 151.98L332.15 152.41L332.7 152.27L333.25 151.97L333.8 152.49L334.35 154.88L334.9 154.72L335.45 154.5L336 154.02L336.55 153.69L337.1 153.5L337.65 153.23L338.2 152.74L338.75 153.57L339.3 152.31L339.85 152.55L340.4 152.25L340.95 152.87L341.5 152.57L342.05 152.24L342.6 151.66L343.15 151.6L343.7 152.63L344.25 152.56L344.8 151.91L345.35 153.94L345.9 154.02L346.45 152.12L347 152.21L347.55 151.78L348.1 152.15L348.65 152.47L349.2 153.16L349.75 152.86L350.3 152.48L350.85 151.69L351.4 151.89L351.95 152.43L352.5 152.02L353.05 152.6L353.6 152.73L354.15 151.69L354.7 152.21L355.25 152.18L355.8 152.71L356.35 154.78L356.9 154.72L357.45 154.45L358 154.32L358.55 153.87L359.1 153.65L359.65 153.19L360.2 152.83L360.75 153.72L361.3 152.23L361.85 152.23L362.4 152.82L362.95 153.27L363.5 152.31L364.05 151.99L364.6 152L365.15 152.14L365.7 153.24L366.25 152.64L366.8 152.34L367.35 154.02L367.9 154.3L368.45 151.05L369 151.86L369.55 151.76L370.1 152.14L370.65 151.48L371.2 153.26L371.75 151.44L372.3 152.22L372.85 151.44L373.4 152.05L373.95 152.54L374.5 153.24L375.05 152.59L375.6 151.93L376.15 152.21L376.7 151.71L377.25 152.15L377.8 152.77L378.35 154.82L378.9 154.72L379.45 154.22L380 154L380.55 153.8L381.1 153.5L381.65 153.48L382.2 152.77L382.2 157.52L381.65 156.97L381.1 157.24L380.55 156.89L380 156.76L379.45 156.5L378.9 155.93L378.35 155.74L377.8 158.15L377.25 158.92L376.7 159.14L376.15 158.24L375.6 158.73L375.05 158.34L374.5 157.49L373.95 157.93L373.4 158.93L372.85 158.69L372.3 158.03L371.75 158.66L371.2 157.39L370.65 159.2L370.1 158.88L369.55 158.32L369 158.41L368.45 159.47L367.9 156.26L367.35 156.53L366.8 158.53L366.25 157.66L365.7 157.14L365.15 158.09L364.6 158.54L364.05 158.68L363.5 157.92L362.95 157.05L362.4 157.71L361.85 158.22L361.3 158.04L360.75 156.71L360.2 157.44L359.65 157.53L359.1 156.96L358.55 156.93L358 156.22L357.45 156.17L356.9 155.94L356.35 155.77L355.8 158.14L355.25 158.24L354.7 158.34L354.15 158.43L353.6 157.57L353.05 157.88L352.5 158.35L351.95 158.19L351.4 159.09L350.85 159.16L350.3 158.49L349.75 157.66L349.2 157.71L348.65 158.41L348.1 157.99L347.55 159.24L347 158.14L346.45 158.83L345.9 156.67L345.35 156.74L344.8 158.67L344.25 158.43L343.7 158.04L343.15 158.96L342.6 158.49L342.05 157.91L341.5 158.25L340.95 157.48L340.4 157.98L339.85 158.15L339.3 158.15L338.75 156.99L338.2 157.7L337.65 157.34L337.1 157.28L336.55 156.7L336 156.56L335.45 156.18L334.9 155.86L334.35 155.69L333.8 157.74L333.25 159.04L332.7 158.78L332.15 157.8L331.6 158.8L331.05 157.72L330.5 157.66L329.95 157.54L329.4 159.11L328.85 158.55L328.3 158.56L327.75 157.93L327.2 156.76L326.65 158.37L326.1 158.79L325.55 158.74L325 158.83L324.45 158.82L323.9 156.78L323.35 156.57L322.8 157.91L322.25 157.94L321.7 157.26L321.15 158.07L320.6 159L320.05 159.46L319.5 157.99L318.95 157.81L318.4 158.14L317.85 158.14L317.3 159.26L316.75 156.97L316.2 157.05L315.65 157.68L315.1 156.72L314.55 157.04L314 156.54L313.45 156.11L312.9 155.82L312.35 155.81L311.8 157.6L311.25 159.12L310.7 158.3L310.15 158.46L309.6 158.28L309.05 157.59L308.5 157.28L307.95 157.75L307.4 158.75L306.85 159.39L306.3 159.48L305.75 158.48L305.2 157.17L304.65 159.1L304.1 158.65L303.55 158.66L303 157.8L302.45 159.41L301.9 156.39L301.35 156.44L300.8 157.87L300.25 158.11L299.7 157.2L299.15 158.08L298.6 158.74L298.05 158.74L297.5 158.35L296.95 157.55L296.4 158.42L295.85 158.27L295.3 158.27 Z" fill="#1d1d28"/><rect x="382.7" y="119.3" width="88" height="43.4" fill="#92a7ff"/><path d="M404.7 132.5V162.7M426.7 132.5V162.7M448.7 132.5V162.7" stroke="#7d8fdb" stroke-width="1" fill="none"/><path d="M393.7 132.5V162.7M415.7 132.5V162.7M437.7 132.5V162.7M459.7 132.5V162.7" stroke="#8396e5" stroke-width="0.9" fill="none"/><rect x="382.1" y="119.3" width="1.3" height="43.4" fill="#5a679e"/><rect x="382.7" y="132.2" width="88" height="0.9" fill="#9cafff"/><path d="M383.3 136.37L383.85 137.3L384.4 136.57L384.95 137.55L385.5 137.69L386.05 136.92L386.6 136.74L387.15 137.34L387.7 138.04L388.25 137.67L388.8 137.47L389.35 139.08L389.9 138.57L390.45 136.51L391 136.39L391.55 135.98L392.1 137.23L392.65 137.3L393.2 138.17L393.75 137.27L394.3 136.91L394.85 137.07L395.4 136.8L395.95 137.59L396.5 137.19L397.05 137.93L397.6 137.64L398.15 136.56L398.7 136.84L399.25 136.14L399.8 137.94L400.35 139.78L400.9 139.68L401.45 139.47L402 139.07L402.55 138.92L403.1 138.76L403.65 138.31L404.2 137.97L404.75 138.75L405.3 137.11L405.85 137.16L406.4 136.94L406.95 137.33L407.5 136.47L408.05 137.35L408.6 136.67L409.15 137.37L409.7 137.8L410.25 137.49L410.8 137.4L411.35 139.05L411.9 138.85L412.45 136.77L413 137.24L413.55 136.42L414.1 137.12L414.65 136.58L415.2 138.09L415.75 137.72L416.3 137.19L416.85 137.33L417.4 137.64L417.95 136.91L418.5 137.77L419.05 137.49L419.6 136.82L420.15 137.31L420.7 136.45L421.25 136.91L421.8 137.75L422.35 139.55L422.9 139.56L423.45 139.38L424 138.96L424.55 138.66L425.1 138.77L425.65 138.2L426.2 137.65L426.75 138.48L427.3 136.96L427.85 136.4L428.4 137.68L428.95 138.23L429.5 137.9L430.05 137.48L430.6 136.77L431.15 137.44L431.7 137.45L432.25 138L432.8 137.01L433.35 138.84L433.9 139.15L434.45 136.85L435 137.15L435.55 136.83L436.1 136.88L436.65 136.49L437.2 138.52L437.75 137.66L438.3 136.57L438.85 136.74L439.4 136.91L439.95 137.97L440.5 137.5L441.05 137.94L441.6 137.43L442.15 137.14L442.7 136.53L443.25 136.83L443.8 137.58L444.35 139.79L444.9 139.7L445.45 139.23L446 138.91L446.55 138.66L447.1 138.51L447.65 138.52L448.2 138.22L448.75 138.51L449.3 136.74L449.85 135.68L450.4 137.24L450.95 138.19L451.5 137.49L452.05 137.46L452.6 136.82L453.15 136.94L453.7 137.43L454.25 137.49L454.8 137.06L455.35 138.92L455.9 139.05L456.45 137.34L457 136.46L457.55 137.01L458.1 136.7L458.65 136.88L459.2 138.43L459.75 137.23L460.3 137.11L460.85 137.31L461.4 137.09L461.95 137.74L462.5 138.22L463.05 137.98L463.6 137.14L464.15 135.7L464.7 137.29L465.25 137.21L465.8 137.78L466.35 139.72L466.9 139.54L467.45 139.27L468 139.04L468.55 138.8L469.1 138.62L469.65 138.5L470.2 137.63L470.2 143L469.65 141.75L469.1 141.82L468.55 141.77L468 141.47L467.45 141.11L466.9 140.93L466.35 140.63L465.8 142.73L465.25 143.25L464.7 142.92L464.15 144.17L463.6 143.16L463.05 142.2L462.5 142.15L461.95 142.9L461.4 143.37L460.85 143.2L460.3 143.06L459.75 142.95L459.2 142.16L458.65 143.76L458.1 143.54L457.55 143.76L457 143.78L456.45 142.72L455.9 141.2L455.35 141.44L454.8 143.12L454.25 142.84L453.7 143.27L453.15 143.9L452.6 143.21L452.05 143.32L451.5 143.14L450.95 142.38L450.4 143.47L449.85 144.3L449.3 144.01L448.75 141.76L448.2 142.3L447.65 141.8L447.1 141.92L446.55 141.93L446 141.35L445.45 141.11L444.9 140.69L444.35 140.59L443.8 142.45L443.25 143.19L442.7 143.92L442.15 143.45L441.6 142.71L441.05 142.62L440.5 142.55L439.95 142.51L439.4 143.39L438.85 143.58L438.3 143.45L437.75 142.51L437.2 142.1L436.65 144L436.1 143.77L435.55 143.25L435 143.03L434.45 143.13L433.9 141.3L433.35 141.45L432.8 143.49L432.25 142.43L431.7 142.57L431.15 142.65L430.6 143.98L430.05 142.65L429.5 142.83L428.95 142.14L428.4 142.94L427.85 144.44L427.3 143.15L426.75 142.02L426.2 142.75L425.65 142.35L425.1 141.82L424.55 141.52L424 141.49L423.45 141.1L422.9 140.9L422.35 140.81L421.8 142.77L421.25 143.06L420.7 143.88L420.15 143.25L419.6 144.07L419.05 143.18L418.5 142.57L417.95 143.41L417.4 143.13L416.85 142.89L416.3 142.92L415.75 142.31L415.2 142.58L414.65 143.44L414.1 143.58L413.55 143.65L413 142.99L412.45 143.71L411.9 141.44L411.35 141.41L410.8 142.95L410.25 142.58L409.7 142.82L409.15 143.29L408.6 143.21L408.05 142.88L407.5 143.57L406.95 142.94L406.4 143.52L405.85 143.61L405.3 142.95L404.75 141.7L404.2 142.24L403.65 142.34L403.1 141.67L402.55 141.48L402 141.34L401.45 140.83L400.9 140.77L400.35 140.58L399.8 142.34L399.25 144.49L398.7 143.7L398.15 143.63L397.6 142.83L397.05 142.43L396.5 143.59L395.95 142.99L395.4 143.95L394.85 143.52L394.3 143.7L393.75 143.24L393.2 141.97L392.65 142.67L392.1 143.28L391.55 144.27L391 143.64L390.45 144.03L389.9 141.91L389.35 141.22L388.8 143.28L388.25 142.98L387.7 142.1L387.15 142.85L386.6 143.56L386.05 143.3L385.5 142.98L384.95 142.97L384.4 143.47L383.85 143.29L383.3 144.29 Z" fill="#1d1d28"/><path d="M383.3 152.08L383.85 152.5L384.4 152.49L384.95 153.28L385.5 152.23L386.05 152.47L386.6 152.26L387.15 152.52L387.7 152.63L388.25 152L388.8 152.26L389.35 153.97L389.9 153.95L390.45 151.48L391 151.56L391.55 151.94L392.1 152.06L392.65 152.05L393.2 153.29L393.75 152.07L394.3 151.85L394.85 151.83L395.4 152.02L395.95 152.82L396.5 152.77L397.05 152.89L397.6 152.66L398.15 152.36L398.7 152.36L399.25 152.75L399.8 152.98L400.35 154.76L400.9 154.78L401.45 154.37L402 154.22L402.55 153.73L403.1 153.76L403.65 153.1L404.2 153.42L404.75 153.67L405.3 152.03L405.85 152.26L406.4 152.51L406.95 153.21L407.5 152.93L408.05 152.12L408.6 152.34L409.15 152.45L409.7 152.89L410.25 152.94L410.8 152.22L411.35 154.29L411.9 154.16L412.45 152.1L413 152.17L413.55 151.99L414.1 151.4L414.65 151.69L415.2 153.72L415.75 152.33L416.3 151.74L416.85 151.52L417.4 152.25L417.95 152.66L418.5 152.63L419.05 153.11L419.6 152.64L420.15 151.85L420.7 151.59L421.25 151.98L421.8 152.9L422.35 154.87L422.9 154.64L423.45 154.43L424 154.08L424.55 153.97L425.1 153.76L425.65 153.04L426.2 152.88L426.75 153.68L427.3 152.35L427.85 152.42L428.4 152.66L428.95 152.78L429.5 152.23L430.05 151.91L430.6 152.13L431.15 151.99L431.7 152.88L432.25 153.24L432.8 152.3L433.35 154.15L433.9 153.97L434.45 151.51L435 151.91L435.55 152.03L436.1 152.34L436.65 152.36L437.2 153.65L437.75 152.28L438.3 151.82L438.85 152.28L439.4 152.38L439.95 152.93L440.5 153.21L441.05 152.6L441.6 152.05L442.15 152.51L442.7 152.18L443.25 152.13L443.8 152.73L444.35 154.78L444.9 154.73L445.45 154.37L446 154.2L446.55 153.88L447.1 153.54L447.65 153.48L448.2 152.87L448.75 153.9L449.3 151.53L449.85 152.61L450.4 152.69L450.95 152.83L451.5 152.95L452.05 151.59L452.6 152.32L453.15 152.36L453.7 152.96L454.25 152.72L454.8 152.55L455.35 154.08L455.9 154.06L456.45 152.32L457 151.71L457.55 150.96L458.1 151.89L458.65 151.6L459.2 153.66L459.75 152.75L460.3 151.97L460.85 152.19L461.4 152.39L461.95 153.09L462.5 152.68L463.05 152.46L463.6 152.49L464.15 151.82L464.7 151.95L465.25 152.52L465.8 152.8L466.35 154.83L466.9 154.78L467.45 154.54L468 154.25L468.55 153.76L469.1 153.38L469.65 153.39L470.2 153.38L470.2 157.46L469.65 157.15L469.1 157.06L468.55 156.8L468 156.29L467.45 156.06L466.9 155.81L466.35 155.71L465.8 157.67L465.25 158.35L464.7 158.68L464.15 158.53L463.6 158.11L463.05 158.5L462.5 157.89L461.95 157.23L461.4 158.29L460.85 158.05L460.3 159.08L459.75 157.73L459.2 157.09L458.65 159.35L458.1 158.41L457.55 159.44L457 158.92L456.45 158.54L455.9 156.53L455.35 156.38L454.8 158.12L454.25 158.22L453.7 157.95L453.15 158L452.6 158.34L452.05 159.37L451.5 157.56L450.95 157.97L450.4 157.94L449.85 157.93L449.3 159.29L448.75 156.68L448.2 157.76L447.65 156.97L447.1 157.27L446.55 156.63L446 156.56L445.45 156.09L444.9 155.83L444.35 155.82L443.8 158.25L443.25 158.82L442.7 158.07L442.15 158.26L441.6 158.61L441.05 157.66L440.5 157.59L439.95 157.39L439.4 158.1L438.85 158.66L438.3 158.48L437.75 158.34L437.2 156.71L436.65 158.47L436.1 158.43L435.55 158.62L435 158.64L434.45 158.74L433.9 156.61L433.35 156.49L432.8 158.41L432.25 157.58L431.7 158.07L431.15 158.97L430.6 158.23L430.05 158.19L429.5 158.15L428.95 158.02L428.4 158.32L427.85 158.57L427.3 158.28L426.75 157.11L426.2 157.57L425.65 157.52L425.1 156.94L424.55 156.55L424 156.66L423.45 156.1L422.9 155.94L422.35 155.75L421.8 157.57L421.25 158.16L420.7 158.5L420.15 158.41L419.6 158.15L419.05 157.25L418.5 158.23L417.95 157.87L417.4 158.38L416.85 158.73L416.3 158.85L415.75 158.35L415.2 156.75L414.65 159.4L414.1 159.76L413.55 159.09L413 158.62L412.45 158.86L411.9 156.33L411.35 156.35L410.8 158.63L410.25 157.67L409.7 157.42L409.15 158.17L408.6 157.9L408.05 158.69L407.5 157.64L406.95 157.62L406.4 158.24L405.85 158.37L405.3 158.92L404.75 157L404.2 157.06L403.65 157.81L403.1 156.82L402.55 156.75L402 156.54L401.45 156.26L400.9 155.79L400.35 155.88L399.8 157.56L399.25 158.22L398.7 158.59L398.15 158.3L397.6 158.15L397.05 157.9L396.5 157.85L395.95 158.15L395.4 159.04L394.85 158.96L394.3 158.98L393.75 158.6L393.2 157.05L392.65 158.93L392.1 158.41L391.55 159.14L391 159.23L390.45 159.44L389.9 156.63L389.35 156.6L388.8 158.25L388.25 159.04L387.7 157.99L387.15 158.33L386.6 158.16L386.05 157.96L385.5 158.67L384.95 157.43L384.4 158.5L383.85 157.96L383.3 158.6 Z" fill="#1d1d28"/><rect x="470.7" y="119.3" width="88" height="43.4" fill="#92a7ff"/><path d="M492.7 132.5V162.7M514.7 132.5V162.7M536.7 132.5V162.7" stroke="#7d8fdb" stroke-width="1" fill="none"/><path d="M481.7 132.5V162.7M503.7 132.5V162.7M525.7 132.5V162.7M547.7 132.5V162.7" stroke="#8396e5" stroke-width="0.9" fill="none"/><rect x="470.1" y="119.3" width="1.3" height="43.4" fill="#5a679e"/><rect x="470.7" y="132.2" width="88" height="0.9" fill="#9cafff"/><path d="M471.3 136.46L471.85 136.55L472.4 137.7L472.95 137.66L473.5 137.67L474.05 137.12L474.6 136.42L475.15 137.2L475.7 137.77L476.25 137.35L476.8 136.92L477.35 138.84L477.9 139.07L478.45 136.56L479 136.83L479.55 136.53L480.1 137.26L480.65 137.11L481.2 138.37L481.75 136.95L482.3 136.56L482.85 137.06L483.4 137.07L483.95 137.96L484.5 137.48L485.05 137.34L485.6 136.97L486.15 137.25L486.7 136.42L487.25 137.53L487.8 137.55L488.35 139.71L488.9 139.63L489.45 139.34L490 139.2L490.55 138.41L491.1 138.33L491.65 138.14L492.2 138.19L492.75 138.54L493.3 137.32L493.85 136.68L494.4 137.4L494.95 137.52L495.5 137.26L496.05 137.03L496.6 136.53L497.15 137.61L497.7 138.16L498.25 137.6L498.8 137.27L499.35 139.05L499.9 138.85L500.45 137.01L501 136.89L501.55 137.29L502.1 137.28L502.65 136.69L503.2 138.4L503.75 137.41L504.3 136.79L504.85 137.12L505.4 137.32L505.95 137.63L506.5 137.88L507.05 137.83L507.6 137.67L508.15 136.97L508.7 137.17L509.25 137.19L509.8 138.08L510.35 139.73L510.9 139.54L511.45 139.4L512 138.89L512.55 138.7L513.1 138.34L513.65 137.43L514.2 138L514.75 138.47L515.3 136.5L515.85 137.31L516.4 137.5L516.95 137.56L517.5 137.57L518.05 136.75L518.6 136.63L519.15 137.35L519.7 137.55L520.25 138.05L520.8 137.54L521.35 139.14L521.9 138.87L522.45 136.54L523 136.83L523.55 136.82L524.1 136.72L524.65 136.3L525.2 138.56L525.75 137.09L526.3 136.7L526.85 136.82L527.4 136.84L527.95 137.18L528.5 137.5L529.05 137.37L529.6 137.18L530.15 137.43L530.7 136.69L531.25 137.73L531.8 137.43L532.35 139.75L532.9 139.55L533.45 139.3L534 139.2L534.55 138.69L535.1 138.25L535.65 138.12L536.2 138.05L536.75 138.73L537.3 137.2L537.85 137.31L538.4 137.33L538.95 137.93L539.5 137.84L540.05 136.64L540.6 136.61L541.15 137.23L541.7 137.51L542.25 137.94L542.8 137.5L543.35 138.91L543.9 138.99L544.45 136.49L545 136.61L545.55 136.57L546.1 136.74L546.65 137.08L547.2 138.17L547.75 137.6L548.3 137L548.85 137.31L549.4 137.28L549.95 137.59L550.5 137.81L551.05 137.35L551.6 137.63L552.15 137.36L552.7 137.26L553.25 137.32L553.8 137.58L554.35 139.52L554.9 139.59L555.45 139.41L556 139.02L556.55 138.93L557.1 138.57L557.65 138.06L558.2 137.96L558.2 142.22L557.65 142.65L557.1 141.78L556.55 141.35L556 141.5L555.45 140.95L554.9 140.83L554.35 140.93L553.8 143.1L553.25 142.76L552.7 143.06L552.15 143.12L551.6 142.53L551.05 142.72L550.5 142.85L549.95 143.07L549.4 142.83L548.85 142.8L548.3 143.88L547.75 142.52L547.2 142.04L546.65 143.29L546.1 143.85L545.55 143.84L545 143.45L544.45 143.37L543.9 141.47L543.35 141.45L542.8 143.06L542.25 142.4L541.7 142.95L541.15 142.83L540.6 144.1L540.05 143.51L539.5 142.77L538.95 142.22L538.4 142.84L537.85 143.1L537.3 142.77L536.75 141.8L536.2 142.58L535.65 142.1L535.1 142.07L534.55 141.51L534 141.24L533.45 141.17L532.9 140.88L532.35 140.71L531.8 142.56L531.25 142.37L530.7 144.16L530.15 143.08L529.6 143.02L529.05 143.45L528.5 142.85L527.95 142.94L527.4 143.19L526.85 143.9L526.3 143.35L525.75 143.39L525.2 142.03L524.65 143.63L524.1 143.77L523.55 143.15L523 143.36L522.45 143.96L521.9 141.46L521.35 141.29L520.8 142.69L520.25 142.58L519.7 142.76L519.15 142.77L518.6 143.75L518.05 143.5L517.5 142.92L516.95 142.75L516.4 142.79L515.85 143.12L515.3 143.84L514.75 142.07L514.2 142.19L513.65 142.59L513.1 141.85L512.55 141.81L512 141.4L511.45 141.01L510.9 140.8L510.35 140.61L509.8 142.01L509.25 143.29L508.7 143.1L508.15 143.4L507.6 142.9L507.05 142.22L506.5 142.4L505.95 142.7L505.4 142.83L504.85 143.15L504.3 144.1L503.75 143L503.2 141.88L502.65 143.69L502.1 143.54L501.55 143.29L501 143.58L500.45 143.47L499.9 141.59L499.35 141.31L498.8 143.34L498.25 142.48L497.7 142.47L497.15 142.45L496.6 143.82L496.05 142.92L495.5 143.11L494.95 142.73L494.4 142.87L493.85 143.23L493.3 143.32L492.75 141.74L492.2 142.11L491.65 142.17L491.1 142.21L490.55 142.13L490 141.28L489.45 140.93L488.9 140.83L488.35 140.74L487.8 142.62L487.25 142.76L486.7 144.41L486.15 143.01L485.6 143.43L485.05 142.7L484.5 142.7L483.95 142.34L483.4 143.48L482.85 143.3L482.3 144.24L481.75 142.97L481.2 142.24L480.65 142.93L480.1 142.96L479.55 144.09L479 144.04L478.45 144.19L477.9 141.33L477.35 141.65L476.8 143.86L476.25 142.72L475.7 142.94L475.15 143.48L474.6 144.53L474.05 143.63L473.5 142.67L472.95 142.86L472.4 142.59L471.85 144.15L471.3 144.27 Z" fill="#1d1d28"/><path d="M471.3 152.04L471.85 152.12L472.4 152.25L472.95 152.77L473.5 152.49L474.05 152.29L474.6 152.19L475.15 152.56L475.7 152.62L476.25 152.82L476.8 152.29L477.35 154.04L477.9 154.2L478.45 152.27L479 151.94L479.55 152.1L480.1 151.93L480.65 152.23L481.2 153.7L481.75 152.17L482.3 152.08L482.85 152.23L483.4 152.35L483.95 152.4L484.5 153.16L485.05 152.52L485.6 152.19L486.15 152.25L486.7 152.11L487.25 152.12L487.8 153.06L488.35 154.82L488.9 154.74L489.45 154.45L490 154.01L490.55 153.36L491.1 153.69L491.65 153.09L492.2 153.13L492.75 153.89L493.3 151.68L493.85 152.14L494.4 153.03L494.95 153.03L495.5 152.98L496.05 152.33L496.6 152.15L497.15 152.06L497.7 152.51L498.25 151.85L498.8 152.47L499.35 154.19L499.9 154.18L500.45 152.29L501 151.78L501.55 151.65L502.1 151.85L502.65 151.98L503.2 153.31L503.75 152.74L504.3 152.51L504.85 152.05L505.4 152.05L505.95 152.92L506.5 152.7L507.05 153.15L507.6 152.8L508.15 151.47L508.7 152.09L509.25 152.23L509.8 152.56L510.35 154.89L510.9 154.67L511.45 154.42L512 154.05L512.55 153.91L513.1 153.44L513.65 153.21L514.2 152.75L514.75 153.87L515.3 152.44L515.85 152.37L516.4 152.25L516.95 153.16L517.5 152.33L518.05 151.99L518.6 151.57L519.15 152.77L519.7 152.72L520.25 152.93L520.8 151.94L521.35 153.94L521.9 154.2L522.45 152.04L523 151.55L523.55 151.66L524.1 151.72L524.65 152.39L525.2 153.45L525.75 152.66L526.3 152.02L526.85 151.62L527.4 151.89L527.95 152.45L528.5 152.71L529.05 152.76L529.6 152.74L530.15 151.83L530.7 152.12L531.25 152.18L531.8 153.01L532.35 154.76L532.9 154.78L533.45 154.24L534 153.86L534.55 153.94L535.1 153.75L535.65 153.57L536.2 152.92L536.75 153.59L537.3 152.24L537.85 152.41L538.4 152.86L538.95 152.73L539.5 152.44L540.05 151.73L540.6 151.57L541.15 152.58L541.7 152.78L542.25 153.05L542.8 152.72L543.35 154.27L543.9 153.64L544.45 152.01L545 151.51L545.55 150.65L546.1 151.77L546.65 151.92L547.2 153.25L547.75 152.61L548.3 151.9L548.85 150.67L549.4 151.4L549.95 152.54L550.5 152.88L551.05 152.92L551.6 152.67L552.15 151.47L552.7 152.06L553.25 152.44L553.8 153.19L554.35 154.89L554.9 154.64L555.45 154.37L556 154.2L556.55 153.87L557.1 153.56L557.65 153.65L558.2 153.02L558.2 157.82L557.65 157.18L557.1 157.1L556.55 156.6L556 156.45L555.45 156.35L554.9 155.96L554.35 155.67L553.8 157.24L553.25 158.05L552.7 158.26L552.15 159L551.6 158.26L551.05 157.45L550.5 158.03L549.95 158.21L549.4 159.08L548.85 159.78L548.3 158.34L547.75 157.81L547.2 157.32L546.65 158.93L546.1 159.23L545.55 159.46L545 159.4L544.45 158.22L543.9 156.73L543.35 156.31L542.8 157.91L542.25 157.42L541.7 157.5L541.15 158.09L540.6 158.64L540.05 158.92L539.5 158.11L538.95 158.02L538.4 157.89L537.85 157.97L537.3 157.92L536.75 157.16L536.2 157.67L535.65 157.19L535.1 156.76L534.55 156.84L534 156.94L533.45 156.21L532.9 155.87L532.35 155.87L531.8 157.4L531.25 158.27L530.7 158.33L530.15 159.25L529.6 158.19L529.05 158L528.5 157.58L527.95 157.91L527.4 158.45L526.85 158.53L526.3 158.11L525.75 158.31L525.2 157.06L524.65 157.8L524.1 159.35L523.55 159.14L523 159.2L522.45 159.04L521.9 156.47L521.35 156.84L520.8 158.49L520.25 157.95L519.7 157.64L519.15 157.64L518.6 158.61L518.05 158.95L517.5 158.38L516.95 157.16L516.4 158.44L515.85 157.93L515.3 158.4L514.75 156.59L514.2 158.08L513.65 157.47L513.1 157.03L512.55 156.89L512 156.54L511.45 156.15L510.9 155.95L510.35 155.65L509.8 158.15L509.25 158.47L508.7 158.89L508.15 159.39L507.6 157.45L507.05 157.49L506.5 157.66L505.95 157.99L505.4 158.31L504.85 158.2L504.3 157.68L503.75 157.91L503.2 157.23L502.65 158.86L502.1 158.84L501.55 158.47L501 158.79L500.45 158.05L499.9 156.47L499.35 156.41L498.8 158.26L498.25 158.27L497.7 158.46L497.15 158.59L496.6 158.47L496.05 158.23L495.5 157.37L494.95 157.37L494.4 157.55L493.85 158.09L493.3 158.6L492.75 156.72L492.2 157.53L491.65 157.65L491.1 156.7L490.55 157.36L490 156.49L489.45 156.05L488.9 155.83L488.35 155.84L487.8 157.37L487.25 158.77L486.7 158.77L486.15 158.26L485.6 158.13L485.05 157.67L484.5 157.75L483.95 157.88L483.4 158.14L482.85 158.26L482.3 158.49L481.75 158.51L481.2 157.03L480.65 158.51L480.1 158.51L479.55 158.79L479 159.11L478.45 158.01L477.9 156.55L477.35 156.74L476.8 158.29L476.25 158.15L475.7 158.12L475.15 158.12L474.6 158.2L474.05 157.86L473.5 158.5L472.95 158.19L472.4 157.98L471.85 158.22L471.3 158.59 Z" fill="#1d1d28"/><rect x="558.7" y="119.3" width="88" height="43.4" fill="#92a7ff"/><path d="M580.7 132.5V162.7M602.7 132.5V162.7M624.7 132.5V162.7" stroke="#7d8fdb" stroke-width="1" fill="none"/><path d="M569.7 132.5V162.7M591.7 132.5V162.7M613.7 132.5V162.7M635.7 132.5V162.7" stroke="#8396e5" stroke-width="0.9" fill="none"/><rect x="558.1" y="119.3" width="1.3" height="43.4" fill="#5a679e"/><rect x="558.7" y="132.2" width="88" height="0.9" fill="#9cafff"/><path d="M559.3 136.64L559.85 136.56L560.4 137.29L560.95 137.49L561.5 137.41L562.05 137.24L562.6 137.12L563.15 137.45L563.7 137.25L564.25 138.07L564.8 137.28L565.35 139.03L565.9 139.16L566.45 137.04L567 137.25L567.55 136.49L568.1 136.35L568.65 136.97L569.2 138.34L569.75 137.04L570.3 136.87L570.85 137.33L571.4 136.94L571.95 137.56L572.5 137.6L573.05 137.91L573.6 137.12L574.15 137.1L574.7 137.33L575.25 137.35L575.8 137.32L576.35 139.73L576.9 139.46L577.45 139.31L578 138.95L578.55 138.66L579.1 137.92L579.65 138.2L580.2 137.49L580.75 138.84L581.3 136.59L581.85 136.9L582.4 137.94L582.95 137.55L583.5 137.25L584.05 137.24L584.6 136.51L585.15 137.28L585.7 138.12L586.25 137.7L586.8 137.68L587.35 138.99L587.9 138.96L588.45 137.17L589 137.15L589.55 136.72L590.1 137.02L590.65 137.33L591.2 138.6L591.75 137.52L592.3 136.83L592.85 136.86L593.4 136.75L593.95 137.88L594.5 137.58L595.05 138L595.6 137.34L596.15 137.32L596.7 137.07L597.25 137.67L597.8 137.72L598.35 139.74L598.9 139.63L599.45 139.14L600 138.93L600.55 138.58L601.1 138.39L601.65 137.68L602.2 137.66L602.75 138.77L603.3 137.03L603.85 136.85L604.4 137.87L604.95 137.81L605.5 137.2L606.05 136.91L606.6 136.75L607.15 137.72L607.7 137.93L608.25 137.36L608.8 137.48L609.35 139.01L609.9 138.98L610.45 137.22L611 136.84L611.55 136.82L612.1 136.54L612.65 137.06L613.2 138.14L613.75 137.65L614.3 137.04L614.85 136.65L615.4 136.83L615.95 137.52L616.5 138.17L617.05 137.67L617.6 136.87L618.15 135.97L618.7 137.33L619.25 136.85L619.8 137.96L620.35 139.77L620.9 139.71L621.45 139.34L622 139.01L622.55 138.66L623.1 138.51L623.65 138.54L624.2 138.29L624.75 138.7L625.3 136.93L625.85 137.5L626.4 137.39L626.95 137.66L627.5 137.97L628.05 137.27L628.6 137.18L629.15 137.4L629.7 137.73L630.25 137.7L630.8 137.58L631.35 139.04L631.9 139.19L632.45 136.86L633 137.3L633.55 136.57L634.1 136.88L634.65 136.3L635.2 138.65L635.75 137.31L636.3 137.23L636.85 136.58L637.4 137.36L637.95 138L638.5 137.54L639.05 137.62L639.6 136.1L640.15 136.8L640.7 136.78L641.25 137.55L641.8 137.3L642.35 139.78L642.9 139.69L643.45 139.44L644 138.98L644.55 138.66L645.1 138.29L645.65 138.52L646.2 137.69L646.2 142.72L645.65 141.94L645.1 142.12L644.55 141.63L644 141.6L643.45 140.98L642.9 140.78L642.35 140.68L641.8 143.24L641.25 143.21L640.7 144.02L640.15 143.14L639.6 144.81L639.05 142.92L638.5 142.86L637.95 142.43L637.4 142.68L636.85 143.89L636.3 143.61L635.75 142.84L635.2 141.73L634.65 144.35L634.1 143.44L633.55 143.93L633 142.74L632.45 143.15L631.9 141.34L631.35 141.37L630.8 143.06L630.25 142.52L629.7 142.68L629.15 143.02L628.6 143.16L628.05 143.43L627.5 142.39L626.95 142.93L626.4 142.77L625.85 142.54L625.3 143.01L624.75 141.86L624.2 142L623.65 141.81L623.1 141.7L622.55 141.74L622 141.47L621.45 141.14L620.9 140.66L620.35 140.68L619.8 142.62L619.25 143.78L618.7 143.36L618.15 143.8L617.6 143.69L617.05 142.76L616.5 142.18L615.95 142.64L615.4 143.42L614.85 143.91L614.3 143.64L613.75 142.72L613.2 142.56L612.65 143.75L612.1 143.8L611.55 143.76L611 143.13L610.45 143.5L609.9 141.38L609.35 141.47L608.8 142.7L608.25 143.36L607.7 142.32L607.15 142.49L606.6 143.48L606.05 143.67L605.5 143.2L604.95 142.85L604.4 142.83L603.85 143.13L603.3 143.28L602.75 141.46L602.2 142.84L601.65 143.08L601.1 141.9L600.55 141.78L600 141.59L599.45 141.31L598.9 140.74L598.35 140.67L597.8 142.99L597.25 142.87L596.7 142.95L596.15 142.66L595.6 142.67L595.05 142.25L594.5 142.45L593.95 142.5L593.4 143.28L592.85 143.98L592.3 143.29L591.75 142.94L591.2 142L590.65 143.47L590.1 143.77L589.55 143.17L589 143.69L588.45 142.89L587.9 141.38L587.35 141.39L586.8 142.4L586.25 142.67L585.7 142.25L585.15 143L584.6 144.41L584.05 143.57L583.5 143.47L582.95 142.77L582.4 142.32L581.85 143.34L581.3 143.69L580.75 141.45L580.2 142.76L579.65 142.27L579.1 142.27L578.55 141.76L578 141.55L577.45 141.15L576.9 140.86L576.35 140.62L575.8 143.51L575.25 142.72L574.7 143.03L574.15 143.09L573.6 143.5L573.05 142.68L572.5 142.5L571.95 142.61L571.4 143.69L570.85 143.1L570.3 143.57L569.75 143.02L569.2 142.15L568.65 143.18L568.1 143.99L567.55 144.21L567 142.83L566.45 143.09L565.9 141.16L565.35 141.25L564.8 143.21L564.25 142.49L563.7 143.36L563.15 142.68L562.6 142.89L562.05 142.84L561.5 143.19L560.95 142.87L560.4 142.83L559.85 143.36L559.3 143.24 Z" fill="#1d1d28"/><path d="M559.3 152.5L559.85 151.76L560.4 152.93L560.95 152.84L561.5 152.84L562.05 152.31L562.6 151.92L563.15 152.55L563.7 152.54L564.25 152.84L564.8 152.27L565.35 154.28L565.9 154.26L566.45 151.6L567 151.55L567.55 152.43L568.1 151.77L568.65 152.3L569.2 152.63L569.75 152.91L570.3 151.81L570.85 151.66L571.4 151.37L571.95 152.57L572.5 153.03L573.05 153.16L573.6 152.56L574.15 151.53L574.7 152.17L575.25 152.47L575.8 152.95L576.35 154.76L576.9 154.81L577.45 154.19L578 154.31L578.55 153.82L579.1 153.64L579.65 153.14L580.2 153.28L580.75 153.78L581.3 152.13L581.85 151.91L582.4 152.67L582.95 152.7L583.5 152.41L584.05 151.77L584.6 151.97L585.15 152.2L585.7 152.61L586.25 153.11L586.8 151.43L587.35 154.04L587.9 154.04L588.45 151.42L589 152.44L589.55 151.6L590.1 151.49L590.65 151.88L591.2 152.74L591.75 152.4L592.3 151.69L592.85 151.65L593.4 152.49L593.95 152.74L594.5 152.78L595.05 152.82L595.6 152.64L596.15 151.82L596.7 152.12L597.25 152.81L597.8 152.57L598.35 154.83L598.9 154.74L599.45 154.45L600 154.1L600.55 153.68L601.1 152.97L601.65 153.48L602.2 152.71L602.75 153.58L603.3 151.56L603.85 152.57L604.4 152.63L604.95 152.69L605.5 152.25L606.05 152.46L606.6 151.67L607.15 152.78L607.7 153.24L608.25 153.13L608.8 152.66L609.35 154.02L609.9 154.14L610.45 152.41L611 151.61L611.55 151.48L612.1 152.01L612.65 152.15L613.2 153.6L613.75 152.49L614.3 151.84L614.85 152.43L615.4 151.84L615.95 152.93L616.5 153L617.05 152.42L617.6 152.34L618.15 151.66L618.7 152.52L619.25 152.12L619.8 152.8L620.35 154.78L620.9 154.7L621.45 154.45L622 154.34L622.55 154.06L623.1 153.69L623.65 153.48L624.2 153.1L624.75 153.14L625.3 151.68L625.85 152.26L626.4 152.94L626.95 152.86L627.5 152.35L628.05 152.33L628.6 151.78L629.15 152.78L629.7 152.52L630.25 152.49L630.8 152.76L631.35 154.03L631.9 154L632.45 152.24L633 151.67L633.55 151.57L634.1 151.82L634.65 152.39L635.2 153.29L635.75 152.91L636.3 152.31L636.85 152.18L637.4 151.83L637.95 152.77L638.5 152.83L639.05 153.07L639.6 151.94L640.15 152.39L640.7 152.24L641.25 152.48L641.8 152.4L642.35 154.66L642.9 154.76L643.45 154.58L644 154.24L644.55 153.9L645.1 153.88L645.65 153.51L646.2 153.3L646.2 157.24L645.65 157.12L645.1 156.8L644.55 156.9L644 156.32L643.45 155.92L642.9 155.89L642.35 155.9L641.8 158.56L641.25 158.34L640.7 158.37L640.15 157.93L639.6 159.06L639.05 157.61L638.5 157.73L637.95 158.03L637.4 158.69L636.85 158.54L636.3 158.4L635.75 157.43L635.2 157.11L634.65 158.5L634.1 159.07L633.55 158.72L633 159.11L632.45 158.79L631.9 156.61L631.35 156.66L630.8 157.96L630.25 157.93L629.7 158.34L629.15 157.79L628.6 158.7L628.05 157.88L627.5 158.49L626.95 157.52L626.4 157.34L625.85 158.04L625.3 159.18L624.75 157.62L624.2 157.47L623.65 156.94L623.1 156.69L622.55 156.62L622 156.39L621.45 156.03L620.9 155.87L620.35 155.84L619.8 157.66L619.25 158.84L618.7 158.24L618.15 159.32L617.6 158.08L617.05 158.44L616.5 157.3L615.95 157.5L615.4 159.21L614.85 158.54L614.3 159.01L613.75 158.15L613.2 156.95L612.65 158.55L612.1 158.45L611.55 159.63L611 158.73L610.45 158.43L609.9 156.44L609.35 156.48L608.8 158.05L608.25 157.31L607.7 157.06L607.15 157.91L606.6 158.52L606.05 157.73L605.5 157.97L604.95 158.01L604.4 158.15L603.85 157.93L603.3 159.01L602.75 156.78L602.2 158.01L601.65 157.09L601.1 157.69L600.55 156.7L600 156.32L599.45 156.23L598.9 155.93L598.35 155.71L597.8 158.34L597.25 158.15L596.7 158.63L596.15 158.93L595.6 157.64L595.05 158.01L594.5 157.93L593.95 157.56L593.4 157.94L592.85 158.88L592.3 158.6L591.75 158.29L591.2 157.53L590.65 158.96L590.1 159.58L589.55 158.47L589 158.23L588.45 159.33L587.9 156.45L587.35 156.66L586.8 158.63L586.25 157.75L585.7 158.18L585.15 157.98L584.6 158.68L584.05 158.94L583.5 157.9L582.95 158.27L582.4 158.28L581.85 159.11L581.3 158.57L580.75 156.89L580.2 157.54L579.65 157.68L579.1 156.73L578.55 156.92L578 156.19L577.45 156.41L576.9 155.85L576.35 155.82L575.8 157.4L575.25 157.94L574.7 158.43L574.15 158.73L573.6 157.83L573.05 157.41L572.5 157.67L571.95 158.09L571.4 159.53L570.85 159.41L570.3 159.15L569.75 157.66L569.2 157.66L568.65 158.73L568.1 158.53L567.55 158.02L567 158.62L566.45 158.63L565.9 156.4L565.35 156.19L564.8 158.78L564.25 157.4L563.7 158.2L563.15 157.72L562.6 159.13L562.05 158.46L561.5 157.86L560.95 157.94L560.4 157.69L559.85 159.34L559.3 158.3 Z" fill="#1d1d28"/><rect x="646.7" y="119.3" width="88" height="43.4" fill="#92a7ff"/><path d="M668.7 132.5V162.7M690.7 132.5V162.7M712.7 132.5V162.7" stroke="#7d8fdb" stroke-width="1" fill="none"/><path d="M657.7 132.5V162.7M679.7 132.5V162.7M701.7 132.5V162.7M723.7 132.5V162.7" stroke="#8396e5" stroke-width="0.9" fill="none"/><rect x="646.1" y="119.3" width="1.3" height="43.4" fill="#5a679e"/><rect x="646.7" y="132.2" width="88" height="0.9" fill="#9cafff"/><path d="M647.3 137.14L647.85 136.85L648.4 137.87L648.95 138.04L649.5 137.2L650.05 137.33L650.6 136.62L651.15 137.71L651.7 138.06L652.25 137.81L652.8 137.12L653.35 139.1L653.9 138.94L654.45 137.07L655 136.73L655.55 136.52L656.1 136.65L656.65 136.52L657.2 138.45L657.75 137.32L658.3 136.71L658.85 135.4L659.4 136.91L659.95 137.81L660.5 137.72L661.05 137.34L661.6 136.87L662.15 136.99L662.7 136.39L663.25 137.68L663.8 137.44L664.35 139.76L664.9 139.71L665.45 139.35L666 139.11L666.55 138.58L667.1 138.72L667.65 138.11L668.2 138.22L668.75 138.73L669.3 137.22L669.85 137.27L670.4 137.97L670.95 137.61L671.5 137.63L672.05 136.9L672.6 136.74L673.15 137.23L673.7 137.49L674.25 137.96L674.8 135.96L675.35 139.13L675.9 138.85L676.45 137.11L677 137.1L677.55 136.92L678.1 136.5L678.65 136.88L679.2 138.49L679.75 137.78L680.3 136.74L680.85 137.05L681.4 136.86L681.95 137.19L682.5 137.96L683.05 137.6L683.6 137.56L684.15 137.09L684.7 136.92L685.25 136.95L685.8 137.44L686.35 139.76L686.9 139.65L687.45 139.49L688 139.25L688.55 138.63L689.1 138.3L689.65 138.39L690.2 137.91L690.75 138.46L691.3 136.37L691.85 137.1L692.4 137.33L692.95 136.98L693.5 137.3L694.05 136.6L694.6 136.62L695.15 136.21L695.7 137.9L696.25 137.69L696.8 137.28L697.35 138.94L697.9 139.04L698.45 137.26L699 136.33L699.55 136.96L700.1 136.54L700.65 136.16L701.2 138.43L701.75 137.33L702.3 135.7L702.85 137.2L703.4 136.91L703.95 137.62L704.5 137.47L705.05 137.62L705.6 137.36L706.15 136.43L706.7 136.45L707.25 136.77L707.8 137.71L708.35 139.74L708.9 139.58L709.45 139.45L710 139.08L710.55 138.94L711.1 138.43L711.65 138.49L712.2 138.01L712.75 138.87L713.3 137.22L713.85 136.51L714.4 137.82L714.95 138.19L715.5 137.81L716.05 136.34L716.6 136.97L717.15 137.39L717.7 137.76L718.25 137.81L718.8 137.01L719.35 138.89L719.9 139.05L720.45 136.51L721 136.31L721.55 136.53L722.1 137.29L722.65 137.24L723.2 138.28L723.75 137.82L724.3 136.6L724.85 136.85L725.4 136.81L725.95 137.87L726.5 137.78L727.05 138.01L727.6 136.84L728.15 137.17L728.7 136.53L729.25 137.44L729.8 137.98L730.35 139.73L730.9 139.59L731.45 139.22L732 138.99L732.55 138.81L733.1 138.32L733.65 138.36L734.2 138.11L734.2 142.21L733.65 141.83L733.1 142.18L732.55 141.64L732 141.27L731.45 141.17L730.9 140.85L730.35 140.61L729.8 142.69L729.25 143.21L728.7 143.45L728.15 143.57L727.6 143.6L727.05 142.12L726.5 142.46L725.95 142.34L725.4 143.66L724.85 143.29L724.3 143.63L723.75 142.5L723.2 141.97L722.65 142.94L722.1 143.12L721.55 143.47L721 143.55L720.45 143.88L719.9 141.28L719.35 141.38L718.8 143.19L718.25 142.64L717.7 142.85L717.15 142.65L716.6 143.83L716.05 144.15L715.5 142.23L714.95 142.36L714.4 142.32L713.85 143.6L713.3 143.3L712.75 141.61L712.2 142.63L711.65 141.73L711.1 142.02L710.55 141.48L710 141.25L709.45 140.95L708.9 140.88L708.35 140.59L707.8 142.36L707.25 144.06L706.7 143.45L706.15 143.87L705.6 143.11L705.05 143.04L704.5 142.89L703.95 143.1L703.4 143.78L702.85 142.95L702.3 144.1L701.75 142.92L701.2 141.82L700.65 143.87L700.1 143.59L699.55 143.77L699 143.97L698.45 143.34L697.9 141.34L697.35 141.58L696.8 142.68L696.25 142.78L695.7 142.35L695.15 144.58L694.6 143.6L694.05 143.27L693.5 142.91L692.95 143.09L692.4 143.21L691.85 143.18L691.3 143.71L690.75 141.76L690.2 142.71L689.65 141.92L689.1 141.87L688.55 141.78L688 141.22L687.45 141L686.9 140.68L686.35 140.66L685.8 143.12L685.25 143.66L684.7 143.42L684.15 143.1L683.6 142.56L683.05 142.76L682.5 142.34L681.95 142.8L681.4 143.16L680.85 143.16L680.3 143.56L679.75 142.9L679.2 141.94L678.65 143.35L678.1 144.17L677.55 143.21L677 143.66L676.45 143.25L675.9 141.61L675.35 141.34L674.8 144.55L674.25 142.51L673.7 142.83L673.15 143.04L672.6 144.05L672.05 143.97L671.5 142.66L670.95 142.59L670.4 142.19L669.85 142.96L669.3 143.52L668.75 141.8L668.2 142.43L667.65 142.36L667.1 141.49L666.55 141.99L666 141.16L665.45 141.01L664.9 140.76L664.35 140.59L663.8 142.88L663.25 142.4L662.7 143.92L662.15 143.66L661.6 143.45L661.05 143.41L660.5 142.99L659.95 142.85L659.4 143.6L658.85 144.86L658.3 144.14L657.75 142.98L657.2 142.01L656.65 143.89L656.1 143.75L655.55 144.07L655 144.1L654.45 143.4L653.9 141.55L653.35 141.41L652.8 143.09L652.25 142.4L651.7 142.17L651.15 142.69L650.6 143.64L650.05 143.43L649.5 143.04L648.95 142.49L648.4 142.71L647.85 143.36L647.3 143.69 Z" fill="#1d1d28"/><path d="M647.3 151.96L647.85 152.4L648.4 152.79L648.95 153.29L649.5 152.8L650.05 152.22L650.6 151.68L651.15 152.23L651.7 152.56L652.25 153.14L652.8 152.37L653.35 154.18L653.9 154.05L654.45 152.24L655 152.18L655.55 151.49L656.1 150.56L656.65 151.78L657.2 153.17L657.75 152.07L658.3 152.01L658.85 152.43L659.4 152.52L659.95 152.8L660.5 153.33L661.05 152.38L661.6 152.28L662.15 151.6L662.7 152.21L663.25 151.93L663.8 152.13L664.35 154.88L664.9 154.73L665.45 154.39L666 154.29L666.55 154.11L667.1 153.4L667.65 153.12L668.2 152.96L668.75 153.68L669.3 151.76L669.85 152.18L670.4 152.32L670.95 153.12L671.5 153.07L672.05 152.25L672.6 152.2L673.15 152.88L673.7 152.73L674.25 152.78L674.8 152.71L675.35 154.05L675.9 153.95L676.45 152.06L677 152.05L677.55 151.78L678.1 151.73L678.65 152.28L679.2 153.22L679.75 152.67L680.3 151.82L680.85 152.5L681.4 152.27L681.95 152.75L682.5 152.93L683.05 152.95L683.6 152.72L684.15 152.52L684.7 151.95L685.25 151.95L685.8 152.91L686.35 154.86L686.9 154.53L687.45 154.47L688 154.33L688.55 153.76L689.1 153.67L689.65 153.64L690.2 153.11L690.75 153.92L691.3 151.57L691.85 152.41L692.4 152.42L692.95 153.1L693.5 152.72L694.05 152.13L694.6 151.77L695.15 151.98L695.7 153.26L696.25 153.24L696.8 152.49L697.35 154.25L697.9 154.04L698.45 151.81L699 152.17L699.55 151.44L700.1 151.99L700.65 151.78L701.2 152.97L701.75 152.62L702.3 151.87L702.85 151.74L703.4 151.89L703.95 152.88L704.5 152.89L705.05 152.99L705.6 152.56L706.15 151.91L706.7 151.86L707.25 152.47L707.8 152.7L708.35 154.79L708.9 154.79L709.45 154.57L710 154L710.55 153.91L711.1 153.86L711.65 153.51L712.2 153.3L712.75 153.8L713.3 151.75L713.85 152.55L714.4 152.89L714.95 152.85L715.5 152.98L716.05 152.39L716.6 151.97L717.15 152.59L717.7 152.76L718.25 152.68L718.8 151.82L719.35 154.18L719.9 154L720.45 152.05L721 152.42L721.55 152.11L722.1 152.07L722.65 152.12L723.2 153.3L723.75 152.19L724.3 152.32L724.85 151.61L725.4 151.92L725.95 152.74L726.5 153.29L727.05 152.51L727.6 151.64L728.15 152.49L728.7 151.58L729.25 151.95L729.8 153.15L730.35 154.76L730.9 154.69L731.45 154.49L732 154.04L732.55 154.11L733.1 153.49L733.65 153.08L734.2 152.84L734.2 157.42L733.65 157.29L733.1 157.17L732.55 156.61L732 156.64L731.45 156.05L730.9 155.95L730.35 155.77L729.8 157.62L729.25 158.74L728.7 158.89L728.15 157.74L727.6 159.45L727.05 158.31L726.5 157.12L725.95 157.63L725.4 158.34L724.85 158.71L724.3 158.54L723.75 158.34L723.2 157.24L722.65 158.19L722.1 158.45L721.55 158.05L721 158.25L720.45 158.41L719.9 156.57L719.35 156.46L718.8 158.33L718.25 157.81L717.7 158.03L717.15 158.08L716.6 158.51L716.05 157.95L715.5 157.82L714.95 157.44L714.4 157.45L713.85 158.22L713.3 158.32L712.75 156.79L712.2 157.49L711.65 157.11L711.1 156.56L710.55 156.75L710 156.71L709.45 156.08L708.9 155.8L708.35 155.74L707.8 157.77L707.25 158.42L706.7 158.92L706.15 158.36L705.6 158.12L705.05 157.78L704.5 157.51L703.95 157.51L703.4 158.74L702.85 159.02L702.3 158.46L701.75 157.61L701.2 157.52L700.65 158.46L700.1 158.8L699.55 159.43L699 158.23L698.45 158.53L697.9 156.38L697.35 156.4L696.8 157.93L696.25 157.42L695.7 157.51L695.15 158.45L694.6 158.38L694.05 158.93L693.5 157.54L692.95 157.61L692.4 157.83L691.85 158.42L691.3 159.57L690.75 156.51L690.2 157.36L689.65 157.03L689.1 156.71L688.55 157L688 156.27L687.45 156.22L686.9 156.09L686.35 155.78L685.8 157.39L685.25 158.82L684.7 158.9L684.15 157.93L683.6 157.51L683.05 157.96L682.5 157.96L681.95 157.58L681.4 158.11L680.85 158.16L680.3 158.95L679.75 158.16L679.2 157.26L678.65 158.3L678.1 159.05L677.55 159.09L677 158.98L676.45 158.85L675.9 156.73L675.35 156.69L674.8 157.71L674.25 158.07L673.7 157.49L673.15 157.4L672.6 158.04L672.05 157.92L671.5 157.42L670.95 157.29L670.4 157.87L669.85 158.37L669.3 158.92L668.75 156.72L668.2 157.98L667.65 157.65L667.1 157.42L666.55 156.63L666 156.19L665.45 156.09L664.9 155.82L664.35 155.77L663.8 158.85L663.25 158.5L662.7 158.13L662.15 158.88L661.6 158L661.05 158.04L660.5 157.47L659.95 157.91L659.4 157.99L658.85 157.76L658.3 158.95L657.75 158.71L657.2 157.43L656.65 159.14L656.1 159.73L655.55 158.76L655 158.24L654.45 158.59L653.9 156.7L653.35 156.38L652.8 158.12L652.25 157.37L651.7 158.17L651.15 158.61L650.6 159.24L650.05 158.06L649.5 157.58L648.95 157.12L648.4 158.07L647.85 158.35L647.3 158.99 Z" fill="#1d1d28"/><rect x="734.7" y="119.3" width="88" height="43.4" fill="#92a7ff"/><path d="M756.7 132.5V162.7M778.7 132.5V162.7M800.7 132.5V162.7" stroke="#7d8fdb" stroke-width="1" fill="none"/><path d="M745.7 132.5V162.7M767.7 132.5V162.7M789.7 132.5V162.7M811.7 132.5V162.7" stroke="#8396e5" stroke-width="0.9" fill="none"/><rect x="734.1" y="119.3" width="1.3" height="43.4" fill="#5a679e"/><rect x="734.7" y="132.2" width="88" height="0.9" fill="#9cafff"/><rect x="735.3" y="139.85" width="87.2" height="0.7" fill="#1d1d28"/><rect x="735.3" y="154.95" width="87.2" height="0.7" fill="#1d1d28"/><rect x="822.7" y="119.3" width="88" height="43.4" fill="#92a7ff"/><path d="M844.7 132.5V162.7M866.7 132.5V162.7M888.7 132.5V162.7" stroke="#7d8fdb" stroke-width="1" fill="none"/><path d="M833.7 132.5V162.7M855.7 132.5V162.7M877.7 132.5V162.7M899.7 132.5V162.7" stroke="#8396e5" stroke-width="0.9" fill="none"/><rect x="822.1" y="119.3" width="1.3" height="43.4" fill="#5a679e"/><rect x="822.7" y="132.2" width="88" height="0.9" fill="#9cafff"/><path d="M823.3 137.11L823.85 137.43L824.4 137.5L824.95 137.89L825.5 137.83L826.05 136.96L826.6 137.23L827.15 137.19L827.7 137.41L828.25 137.79L828.8 137.67L829.35 139.07L829.9 138.87L830.45 136.82L831 135.78L831.55 136.75L832.1 136.54L832.65 136.54L833.2 138.42L833.75 137.23L834.3 136.88L834.85 136.64L835.4 137.56L835.95 137.38L836.5 137.52L837.05 137.5L837.6 137.3L838.15 136.63L838.7 136.42L839.25 137.05L839.8 137.71L840.35 139.78L840.9 139.69L841.45 139.26L842 139.21L842.55 138.66L843.1 138.66L843.65 138.14L844.2 137.84L844.75 138.6L845.3 137.17L845.85 135.69L846.4 137.41L846.95 137.76L847.5 137.24L848.05 137.27L848.6 137.27L849.15 137.17L849.7 137.73L850.25 137.73L850.8 136.89L851.35 139.2L851.9 139.21L852.45 136.83L853 137.04L853.55 136.69L854.1 137.13L854.65 136.83L855.2 138.31L855.75 137.2L856.3 136.78L856.85 137.14L857.4 136.8L857.95 137.31L858.5 136.85L859.05 137.87L859.6 137.07L860.15 135.98L860.7 136.72L861.25 137.48L861.8 137.76L862.35 139.73L862.9 139.56L863.45 139.33L864 139.23L864.55 139L865.1 138.78L865.65 138.4L866.2 137.98L866.75 138.55L867.3 136.36L867.85 137.35L868.4 137.14L868.95 138.17L869.5 137.41L870.05 136.04L870.6 136.93L871.15 137.61L871.7 137.42L872.25 137.45L872.8 136.83L873.35 139.18L873.9 139.14L874.45 136.51L875 137.12L875.55 137.21L876.1 137.2L876.65 136.96L877.2 138.06L877.75 137.44L878.3 136.88L878.85 137.26L879.4 137.44L879.95 136.65L880.5 137.7L881.05 137.82L881.6 136.86L882.15 136.93L882.7 136.38L883.25 137.22L883.8 138L884.35 139.75L884.9 139.71L885.45 139.41L886 139.13L886.55 139.01L887.1 138.29L887.65 138.54L888.2 137.78L888.75 138.77L889.3 136.5L889.85 136.51L890.4 137.49L890.95 137.59L891.5 137.36L892.05 136.95L892.6 137.15L893.15 137.17L893.7 137.91L894.25 137.7L894.8 137.5L895.35 139.16L895.9 139.11L896.45 136.95L897 137.02L897.55 136.76L898.1 136.92L898.65 136.31L899.2 137.9L899.75 136.93L900.3 136.73L900.85 136.9L901.4 136.8L901.95 137.82L902.5 137.58L903.05 138.01L903.6 137.24L904.15 137.05L904.7 136.41L905.25 137.61L905.8 138L906.35 139.69L906.9 139.56L907.45 139.48L908 139.03L908.55 138.99L909.1 138.55L909.65 138.48L910.2 138.23L910.2 142.32L909.65 141.99L909.1 142.08L908.55 141.52L908 141.22L907.45 140.97L906.9 140.93L906.35 140.75L905.8 142.34L905.25 142.6L904.7 144.29L904.15 142.96L903.6 143.58L903.05 142.59L902.5 142.82L901.95 142.66L901.4 144.1L900.85 143.95L900.3 143.86L899.75 143.13L899.2 142.21L898.65 144.48L898.1 143.07L897.55 143.26L897 143.8L896.45 143.75L895.9 141.3L895.35 141.3L894.8 142.86L894.25 143.04L893.7 142.3L893.15 143.53L892.6 142.8L892.05 143.67L891.5 143.16L890.95 142.56L890.4 142.99L889.85 144.16L889.3 143.96L888.75 141.7L888.2 142.56L887.65 141.75L887.1 141.87L886.55 141.53L886 141.25L885.45 140.95L884.9 140.64L884.35 140.71L883.8 142.65L883.25 143.03L882.7 143.83L882.15 143.87L881.6 143.54L881.05 142.49L880.5 142.58L879.95 143.65L879.4 142.72L878.85 142.86L878.3 143.82L877.75 143.12L877.2 142.28L876.65 143.5L876.1 143.45L875.55 143.5L875 142.93L874.45 143.37L873.9 141.25L873.35 141.2L872.8 143.87L872.25 142.85L871.7 143.11L871.15 142.56L870.6 143.76L870.05 143.85L869.5 143.08L868.95 142.25L868.4 143.16L867.85 143.29L867.3 143.79L866.75 142.06L866.2 142.61L865.65 142.03L865.1 141.69L864.55 141.27L864 141.31L863.45 141.02L862.9 140.87L862.35 140.73L861.8 142.51L861.25 143.12L860.7 144.01L860.15 144.49L859.6 143.57L859.05 142.84L858.5 143.43L857.95 143.39L857.4 143.13L856.85 143.72L856.3 144.01L855.75 143.39L855.2 142.21L854.65 143.79L854.1 143.35L853.55 144.21L853 143.16L852.45 143.66L851.9 141.14L851.35 141.33L850.8 143.81L850.25 142.37L849.7 142.74L849.15 143.6L848.6 143.53L848.05 142.8L847.5 143.04L846.95 142.77L846.4 143.41L845.85 144.46L845.3 143.01L844.75 141.67L844.2 142.59L843.65 142.21L843.1 141.55L842.55 141.52L842 141.22L841.45 141.28L840.9 140.75L840.35 140.64L839.8 142.39L839.25 143.58L838.7 143.49L838.15 143.99L837.6 143.48L837.05 143.16L836.5 142.6L835.95 143.32L835.4 142.65L834.85 143.58L834.3 143.83L833.75 143.1L833.2 141.98L832.65 143.71L832.1 143.84L831.55 144.09L831 144.57L830.45 143.88L829.9 141.65L829.35 141.5L828.8 142.65L828.25 142.36L827.7 143.13L827.15 143.41L826.6 143.38L826.05 143.02L825.5 142.84L824.95 142.75L824.4 143.13L823.85 143.35L823.3 143.33 Z" fill="#1d1d28"/><path d="M823.3 151.06L823.85 152.34L824.4 152.77L824.95 153.09L825.5 152.65L826.05 152.49L826.6 151.81L827.15 152.76L827.7 152.2L828.25 152.64L828.8 152.14L829.35 154.31L829.9 154.06L830.45 152.12L831 152.35L831.55 151.86L832.1 152.2L832.65 152.28L833.2 153.51L833.75 152.49L834.3 152.55L834.85 152.32L835.4 152.31L835.95 152.97L836.5 153.25L837.05 153.06L837.6 151.97L838.15 152.28L838.7 151.81L839.25 152.38L839.8 152.43L840.35 154.87L840.9 154.81L841.45 154.43L842 154.09L842.55 153.88L843.1 153.47L843.65 153.38L844.2 153.1L844.75 153.76L845.3 151.81L845.85 151.85L846.4 152.61L846.95 152.94L847.5 152.84L848.05 152.38L848.6 151.73L849.15 152.5L849.7 153L850.25 152.48L850.8 152.11L851.35 153.96L851.9 153.96L852.45 152.33L853 151.48L853.55 151.87L854.1 152.35L854.65 152.04L855.2 153.5L855.75 152.34L856.3 151.76L856.85 151.7L857.4 151.08L857.95 152.49L858.5 152.59L859.05 152.72L859.6 152.56L860.15 152.43L860.7 152.05L861.25 152.46L861.8 152.76L862.35 154.82L862.9 154.67L863.45 154.37L864 154.12L864.55 154.1L865.1 153.49L865.65 153.47L866.2 152.98L866.75 153.56L867.3 152.39L867.85 151.59L868.4 152.87L868.95 153.05L869.5 152.35L870.05 152.3L870.6 151.47L871.15 151.98L871.7 153.07L872.25 151.77L872.8 152.05L873.35 154.03L873.9 154.21L874.45 151.92L875 152.3L875.55 151.94L876.1 151.54L876.65 152.02L877.2 153.23L877.75 152.88L878.3 151.7L878.85 151.44L879.4 152.22L879.95 152.47L880.5 152.7L881.05 152.66L881.6 151.88L882.15 151.99L882.7 151.84L883.25 152.83L883.8 153.11L884.35 154.81L884.9 154.7L885.45 154.4L886 154.07L886.55 154.06L887.1 153.47L887.65 153.24L888.2 152.9L888.75 153.73L889.3 151.22L889.85 152.48L890.4 152.6L890.95 153.07L891.5 152.52L892.05 151.89L892.6 151.6L893.15 152L893.7 152.85L894.25 153.2L894.8 152.76L895.35 154.29L895.9 154.23L896.45 151.58L897 151.51L897.55 151.66L898.1 150.46L898.65 151.58L899.2 153.34L899.75 152.49L900.3 152.37L900.85 152.05L901.4 152.59L901.95 152.45L902.5 153.01L903.05 152.68L903.6 152.26L904.15 152.2L904.7 152.3L905.25 152.25L905.8 153.19L906.35 154.79L906.9 154.69L907.45 154.4L908 154.15L908.55 153.98L909.1 153.56L909.65 153.06L910.2 152.7L910.2 157.8L909.65 157.82L909.1 156.98L908.55 156.67L908 156.29L907.45 156.07L906.9 155.95L906.35 155.74L905.8 157.22L905.25 158.25L904.7 158L904.15 158.21L903.6 158.62L903.05 157.99L902.5 157.61L901.95 157.83L901.4 158.08L900.85 158.83L900.3 158.28L899.75 158.14L899.2 157.06L898.65 159.01L898.1 160.15L897.55 158.46L897 159.15L896.45 159.24L895.9 156.4L895.35 156.46L894.8 157.98L894.25 157.51L893.7 157.73L893.15 158.96L892.6 158.91L892.05 158.64L891.5 158.17L890.95 157.32L890.4 157.75L889.85 157.7L889.3 158.8L888.75 157.03L888.2 157.86L887.65 157.41L887.1 157.23L886.55 156.45L886 156.66L885.45 156.18L884.9 155.93L884.35 155.79L883.8 157.35L883.25 157.98L882.7 158.33L882.15 158.21L881.6 159.17L881.05 158.28L880.5 157.99L879.95 158.39L879.4 158.74L878.85 159.2L878.3 158.42L877.75 157.44L877.2 157.27L876.65 158.39L876.1 158.78L875.55 158.39L875 158.58L874.45 159.14L873.9 156.23L873.35 156.62L872.8 158.99L872.25 159.08L871.7 157.35L871.15 158.59L870.6 159.68L870.05 158.02L869.5 158.59L868.95 157.46L868.4 157.92L867.85 158.5L867.3 158.44L866.75 157.19L866.2 157.65L865.65 156.97L865.1 157.36L864.55 156.35L864 156.62L863.45 156.14L862.9 156L862.35 155.76L861.8 157.58L861.25 158.22L860.7 158.14L860.15 158.02L859.6 157.63L859.05 157.64L858.5 158.24L857.95 158.36L857.4 159.26L856.85 158.71L856.3 158.73L855.75 158.08L855.2 156.94L854.65 158.13L854.1 158.18L853.55 158.89L853 159.34L852.45 158.11L851.9 156.79L851.35 156.77L850.8 158.69L850.25 158.31L849.7 157.77L849.15 157.81L848.6 159.29L848.05 158.39L847.5 158.12L846.95 157.59L846.4 157.92L845.85 158.29L845.3 158.85L844.75 156.96L844.2 157.27L843.65 156.99L843.1 157.32L842.55 156.52L842 156.59L841.45 156.06L840.9 155.81L840.35 155.68L839.8 158L839.25 158.42L838.7 158.6L838.15 158.42L837.6 158.66L837.05 157.5L836.5 157.17L835.95 157.96L835.4 158.37L834.85 158.09L834.3 157.86L833.75 157.87L833.2 157.26L832.65 158.24L832.1 158.46L831.55 158.56L831 157.84L830.45 158.53L829.9 156.69L829.35 156.22L828.8 158.67L828.25 157.88L827.7 158.03L827.15 157.92L826.6 158.56L826.05 158.24L825.5 157.57L824.95 157.22L824.4 158.15L823.85 157.98L823.3 160.13 Z" fill="#1d1d28"/><rect x="932.7" y="119.3" width="66" height="43.4" fill="#92a7ff"/><path d="M954.7 132.5V162.7M976.7 132.5V162.7" stroke="#7d8fdb" stroke-width="1" fill="none"/><path d="M943.7 132.5V162.7M965.7 132.5V162.7M987.7 132.5V162.7" stroke="#8396e5" stroke-width="0.9" fill="none"/><rect x="932.7" y="132.2" width="66" height="0.9" fill="#9cafff"/><path d="M933.3 136.4L933.85 137.28L934.4 137.52L934.95 137.44L935.5 137.19L936.05 136.98L936.6 136.7L937.15 137.3L937.7 137.57L938.25 137.36L938.8 137.31L939.35 138.89L939.9 139.15L940.45 136.35L941 137.1L941.55 137.17L942.1 136.7L942.65 137.34L943.2 138.13L943.75 136.93L944.3 136.48L944.85 136.37L945.4 137.5L945.95 137.56L946.5 138.19L947.05 137.62L947.6 136.87L948.15 137.28L948.7 136.53L949.25 137.69L949.8 137.75L950.35 139.71L950.9 139.54L951.45 139.24L952 138.99L952.55 138.85L953.1 138.74L953.65 138.48L954.2 137.82L954.75 138.7L955.3 136.75L955.85 137.35L956.4 137.26L956.95 137.54L957.5 137.78L958.05 137.32L958.6 136.48L959.15 137.4L959.7 137.51L960.25 137.38L960.8 136.98L961.35 139L961.9 138.85L962.45 137.04L963 136.72L963.55 137.33L964.1 136.8L964.65 136.41L965.2 138.31L965.75 137.63L966.3 136.77L966.85 136.51L967.4 137.27L967.95 137.64L968.5 137.6L969.05 137.77L969.6 137.42L970.15 136.8L970.7 137.37L971.25 137.42L971.8 137.88L972.35 139.73L972.9 139.65L973.45 139.4L974 139.1L974.55 138.92L975.1 137.8L975.65 138.54L976.2 138.22L976.75 138.91L977.3 136.51L977.85 137.14L978.4 137.45L978.95 138.12L979.5 137.55L980.05 137.2L980.6 136.74L981.15 137.75L981.7 137.82L982.25 137.68L982.8 136.79L983.35 138.98L983.9 138.91L984.45 136.91L985 136.76L985.55 136.57L986.1 136.94L986.65 137.31L987.2 138.18L987.75 136.96L988.3 136.58L988.85 137.28L989.4 137.28L989.95 137.38L990.5 137.65L991.05 137.7L991.6 137.05L992.15 137.32L992.7 136.76L993.25 137.32L993.8 137.36L994.35 139.73L994.9 139.58L995.45 139.41L996 139.12L996.55 138.6L997.1 138.39L997.65 138.52L998.2 137.68L998.2 143.04L997.65 141.63L997.1 141.89L996.55 141.76L996 141.15L995.45 141.04L994.9 140.75L994.35 140.66L993.8 142.81L993.25 143.48L992.7 143.34L992.15 143.39L991.6 143.49L991.05 142.86L990.5 143L989.95 143.35L989.4 142.79L988.85 143.35L988.3 143.5L987.75 143.06L987.2 142.33L986.65 143.5L986.1 143.42L985.55 144.08L985 143.68L984.45 143.53L983.9 141.35L983.35 141.6L982.8 143.12L982.25 142.81L981.7 142.29L981.15 142.97L980.6 143.91L980.05 142.81L979.5 142.99L978.95 142.03L978.4 142.65L977.85 143.43L977.3 143.78L976.75 141.31L976.2 142.27L975.65 142.04L975.1 142.51L974.55 141.33L974 141.27L973.45 141.02L972.9 140.71L972.35 140.71L971.8 142.31L971.25 142.6L970.7 142.64L970.15 143.63L969.6 143.31L969.05 142.63L968.5 143.07L967.95 143.05L967.4 142.77L966.85 143.98L966.3 143.99L965.75 142.76L965.2 142.02L964.65 143.45L964.1 143.94L963.55 143.43L963 143.5L962.45 143.7L961.9 141.35L961.35 141.32L960.8 143.55L960.25 142.75L959.7 142.98L959.15 143.34L958.6 144.38L958.05 143.2L957.5 142.82L956.95 142.86L956.4 143.38L955.85 143.32L955.3 143.19L954.75 141.9L954.2 142.34L953.65 141.69L953.1 141.45L952.55 141.42L952 141.3L951.45 141.2L950.9 140.94L950.35 140.66L949.8 142.82L949.25 142.68L948.7 143.33L948.15 142.97L947.6 143.09L947.05 142.43L946.5 142.06L945.95 142.68L945.4 142.98L944.85 143.6L944.3 143.49L943.75 143.14L943.2 142.01L942.65 142.99L942.1 143.7L941.55 143.18L941 143.27L940.45 143.47L939.9 141.35L939.35 141.44L938.8 143.04L938.25 142.78L937.7 143.15L937.15 143.47L936.6 143.56L936.05 143.51L935.5 143.33L934.95 143.22L934.4 142.81L933.85 142.93L933.3 144.37 Z" fill="#1d1d28"/><path d="M933.3 152.1L933.85 152.21L934.4 152.22L934.95 152.92L935.5 152.97L936.05 152.2L936.6 151.88L937.15 151.98L937.7 152.62L938.25 153.24L938.8 151.41L939.35 154.03L939.9 154.06L940.45 151.65L941 151.51L941.55 151.73L942.1 151.91L942.65 151.72L943.2 153.7L943.75 152.83L944.3 151.55L944.85 151.84L945.4 151.84L945.95 152.76L946.5 152.92L947.05 152.52L947.6 152.68L948.15 151.83L948.7 150.73L949.25 152.17L949.8 153.2L950.35 154.76L950.9 154.71L951.45 154.35L952 154.09L952.55 154.08L953.1 153.56L953.65 153.05L954.2 152.74L954.75 153.83L955.3 151.72L955.85 151.94L956.4 152.52L956.95 153.2L957.5 152.49L958.05 152.11L958.6 151.84L959.15 152.64L959.7 151.83L960.25 152.96L960.8 152.05L961.35 154.32L961.9 154.02L962.45 151.87L963 152.15L963.55 151.5L964.1 151.77L964.65 151.49L965.2 153.24L965.75 152.31L966.3 152.08L966.85 152.49L967.4 152.64L967.95 152.71L968.5 152.62L969.05 152.78L969.6 152.13L970.15 152.14L970.7 151.36L971.25 152.06L971.8 152.42L972.35 154.71L972.9 154.62L973.45 154.46L974 154.04L974.55 153.91L975.1 153.44L975.65 153.45L976.2 153.08L976.75 153.58L977.3 152.3L977.85 152.33L978.4 152.81L978.95 152.65L979.5 153.06L980.05 152.15L980.6 152.5L981.15 152.59L981.7 152.82L982.25 153.17L982.8 152.28L983.35 154.2L983.9 154.11L984.45 151.5L985 152.19L985.55 152L986.1 151.6L986.65 152.24L987.2 153.33L987.75 151.69L988.3 151.73L988.85 151.93L989.4 152.62L989.95 152.5L990.5 153.11L991.05 152.8L991.6 152.65L992.15 151.78L992.7 150.75L993.25 152.33L993.8 152.61L994.35 154.82L994.9 154.7L995.45 154.37L996 154.31L996.55 153.87L997.1 153.58L997.65 153.19L998.2 153.4L998.2 157.24L997.65 157.54L997.1 157.25L996.55 156.78L996 156.36L995.45 156.18L994.9 155.91L994.35 155.85L993.8 158.11L993.25 158.04L992.7 159.55L992.15 158.76L991.6 157.61L991.05 157.91L990.5 157.5L989.95 158.26L989.4 157.87L988.85 158.72L988.3 158.84L987.75 158.43L987.2 157.45L986.65 158.36L986.1 158.88L985.55 158.69L985 158.35L984.45 158.57L983.9 156.41L983.35 156.43L982.8 158.27L982.25 157.75L981.7 157.88L981.15 157.88L980.6 158.44L980.05 158.49L979.5 157.54L978.95 157.64L978.4 157.83L977.85 157.84L977.3 158.32L976.75 157.1L976.2 157.54L975.65 157.05L975.1 156.94L974.55 156.5L974 156.69L973.45 156.22L972.9 155.89L972.35 155.86L971.8 158.13L971.25 158.9L970.7 159.49L970.15 158.21L969.6 158.06L969.05 157.76L968.5 157.98L967.95 157.54L967.4 158.09L966.85 158.14L966.3 158.88L965.75 158.05L965.2 157.29L964.65 159.34L964.1 158.87L963.55 159.01L963 158.21L962.45 158.76L961.9 156.54L961.35 156.33L960.8 158.86L960.25 157.59L959.7 158.37L959.15 157.86L958.6 158.9L958.05 158.06L957.5 158.22L956.95 157.23L956.4 158.24L955.85 159.07L955.3 158.56L954.75 156.73L954.2 157.92L953.65 157.49L953.1 156.83L952.55 156.44L952 156.5L951.45 156.38L950.9 155.82L950.35 155.76L949.8 157.63L949.25 158.83L948.7 159.19L948.15 158.89L947.6 157.7L947.05 158.36L946.5 157.87L945.95 158.12L945.4 158.26L944.85 158.74L944.3 159.61L943.75 157.51L943.2 156.93L942.65 158.5L942.1 158.5L941.55 158.72L941 159.47L940.45 159.46L939.9 156.65L939.35 156.75L938.8 158.63L938.25 157.36L937.7 157.83L937.15 158.9L936.6 158.49L936.05 158.66L935.5 157.37L934.95 157.93L934.4 158.04L933.85 157.94L933.3 158.72 Z" fill="#1d1d28"/><rect x="998.7" y="119.3" width="5.6" height="43.4" fill="#92a7ff"/><rect x="998.1" y="119.3" width="1.3" height="43.4" fill="#5a679e"/><rect x="998.7" y="132.2" width="5.6" height="0.9" fill="#9cafff"/><path d="M999.3 136.52L999.85 137.02L1000.4 137.84L1000.95 138.06L1001.5 137.65L1002.05 136.78L1002.6 136.54L1003.15 137.55L1003.7 137.5L1003.7 142.58L1003.15 142.77L1002.6 144.14L1002.05 143.47L1001.5 142.54L1000.95 142.29L1000.4 142.5L999.85 143.49L999.3 144.37 Z" fill="#1d1d28"/><path d="M999.3 151.9L999.85 151.72L1000.4 152.36L1000.95 152.82L1001.5 152.56L1002.05 151.94L1002.6 152.32L1003.15 152.24L1003.7 152.86L1003.7 157.47L1003.15 158.55L1002.6 158.41L1002.05 159.09L1001.5 158.31L1000.95 157.94L1000.4 158.5L999.85 159.05L999.3 158.21 Z" fill="#1d1d28"/><rect x="7.2" y="166.1" width="375.5" height="2.4" fill="#8bc5ff"/><rect x="30.7" y="172.5" width="880" height="1.4" fill="#8bc5ff"/><rect x="910.7" y="175.2" width="93.6" height="2.3" fill="#8bc5ff"/><rect x="932.7" y="169.5" width="71.6" height="1.5" fill="#8bc5ff"/><rect x="932.7" y="172.6" width="71.6" height="1.3" fill="#8bc5ff"/><path d="M8.7 165.8V177.8M30.7 165.8V177.8M52.7 165.8V177.8M74.7 165.8V177.8M96.7 165.8V177.8M118.7 165.8V177.8M140.7 165.8V177.8M162.7 165.8V177.8M184.7 165.8V177.8M206.7 165.8V177.8M228.7 165.8V177.8M250.7 165.8V177.8M272.7 165.8V177.8M294.7 165.8V177.8M316.7 165.8V177.8M338.7 165.8V177.8M360.7 165.8V177.8M382.7 165.8V177.8M404.7 165.8V177.8M426.7 165.8V177.8M448.7 165.8V177.8M470.7 165.8V177.8M492.7 165.8V177.8M514.7 165.8V177.8M536.7 165.8V177.8M558.7 165.8V177.8M580.7 165.8V177.8M602.7 165.8V177.8M624.7 165.8V177.8M646.7 165.8V177.8M668.7 165.8V177.8M690.7 165.8V177.8M712.7 165.8V177.8M734.7 165.8V177.8M756.7 165.8V177.8M778.7 165.8V177.8M800.7 165.8V177.8M822.7 165.8V177.8M844.7 165.8V177.8M866.7 165.8V177.8M888.7 165.8V177.8M910.7 165.8V177.8M932.7 165.8V177.8M954.7 165.8V177.8M976.7 165.8V177.8M998.7 165.8V177.8" stroke="#2b2b2b" stroke-width="1" fill="none" opacity="0.16"/><path d="M19.7 165.8V177.8M41.7 165.8V177.8M63.7 165.8V177.8M85.7 165.8V177.8M107.7 165.8V177.8M129.7 165.8V177.8M151.7 165.8V177.8M173.7 165.8V177.8M195.7 165.8V177.8M217.7 165.8V177.8M239.7 165.8V177.8M261.7 165.8V177.8M283.7 165.8V177.8M305.7 165.8V177.8M327.7 165.8V177.8M349.7 165.8V177.8M371.7 165.8V177.8M393.7 165.8V177.8M415.7 165.8V177.8M437.7 165.8V177.8M459.7 165.8V177.8M481.7 165.8V177.8M503.7 165.8V177.8M525.7 165.8V177.8M547.7 165.8V177.8M569.7 165.8V177.8M591.7 165.8V177.8M613.7 165.8V177.8M635.7 165.8V177.8M657.7 165.8V177.8M679.7 165.8V177.8M701.7 165.8V177.8M723.7 165.8V177.8M745.7 165.8V177.8M767.7 165.8V177.8M789.7 165.8V177.8M811.7 165.8V177.8M833.7 165.8V177.8M855.7 165.8V177.8M877.7 165.8V177.8M899.7 165.8V177.8M921.7 165.8V177.8M943.7 165.8V177.8M965.7 165.8V177.8M987.7 165.8V177.8" stroke="#2f2f2f" stroke-width="0.9" fill="none" opacity="0.16"/><rect x="206.7" y="180.1" width="176" height="43.1" fill="#5cffe8"/><path d="M228.7 193.5V223.2M250.7 193.5V223.2M272.7 193.5V223.2M294.7 193.5V223.2M316.7 193.5V223.2M338.7 193.5V223.2M360.7 193.5V223.2" stroke="#4fdbc7" stroke-width="1" fill="none"/><path d="M217.7 193.5V223.2M239.7 193.5V223.2M261.7 193.5V223.2M283.7 193.5V223.2M305.7 193.5V223.2M327.7 193.5V223.2M349.7 193.5V223.2M371.7 193.5V223.2" stroke="#52e5d0" stroke-width="0.9" fill="none"/><rect x="206.7" y="192.8" width="176" height="1.2" fill="#44bcab"/><rect x="382.7" y="180.1" width="176" height="43.1" fill="#5cffe8"/><path d="M404.7 193.5V223.2M426.7 193.5V223.2M448.7 193.5V223.2M470.7 193.5V223.2M492.7 193.5V223.2M514.7 193.5V223.2M536.7 193.5V223.2" stroke="#4fdbc7" stroke-width="1" fill="none"/><path d="M393.7 193.5V223.2M415.7 193.5V223.2M437.7 193.5V223.2M459.7 193.5V223.2M481.7 193.5V223.2M503.7 193.5V223.2M525.7 193.5V223.2M547.7 193.5V223.2" stroke="#52e5d0" stroke-width="0.9" fill="none"/><rect x="382.7" y="192.8" width="176" height="1.2" fill="#44bcab"/><rect x="382.2" y="180.1" width="1.1" height="43.1" fill="#9ed6cf"/><rect x="558.7" y="180.1" width="176" height="43.1" fill="#5cffe8"/><path d="M580.7 193.5V223.2M602.7 193.5V223.2M624.7 193.5V223.2M646.7 193.5V223.2M668.7 193.5V223.2M690.7 193.5V223.2M712.7 193.5V223.2" stroke="#4fdbc7" stroke-width="1" fill="none"/><path d="M569.7 193.5V223.2M591.7 193.5V223.2M613.7 193.5V223.2M635.7 193.5V223.2M657.7 193.5V223.2M679.7 193.5V223.2M701.7 193.5V223.2M723.7 193.5V223.2" stroke="#52e5d0" stroke-width="0.9" fill="none"/><rect x="558.7" y="192.8" width="176" height="1.2" fill="#44bcab"/><rect x="558.2" y="180.1" width="1.1" height="43.1" fill="#9ed6cf"/><rect x="910.7" y="180.1" width="93.6" height="43.1" fill="#5cffe8"/><path d="M932.7 193.5V223.2M954.7 193.5V223.2M976.7 193.5V223.2M998.7 193.5V223.2" stroke="#4fdbc7" stroke-width="1" fill="none"/><path d="M921.7 193.5V223.2M943.7 193.5V223.2M965.7 193.5V223.2M987.7 193.5V223.2" stroke="#52e5d0" stroke-width="0.9" fill="none"/><rect x="910.7" y="192.8" width="93.6" height="1.2" fill="#44bcab"/><path d="M207 198.2h4.2v1.6h-4.2zM239.3 198.2h3.4v1.6h-3.4zM283.5 198.2h3.1v1.6h-3.1zM295 198.2h4.2v1.6h-4.2zM327.3 198.2h3.4v1.6h-3.4zM371.5 198.2h3.1v1.6h-3.1zM383 198.2h4.2v1.6h-4.2zM415.3 198.2h3.4v1.6h-3.4zM459.5 198.2h3.1v1.6h-3.1zM471 198.2h4.2v1.6h-4.2zM503.3 198.2h3.4v1.6h-3.4zM547.5 198.2h3.1v1.6h-3.1zM559 198.2h4.2v1.6h-4.2zM591.3 198.2h3.4v1.6h-3.4zM635.5 198.2h3.1v1.6h-3.1zM647 198.2h4.2v1.6h-4.2zM679.3 198.2h3.4v1.6h-3.4zM723.5 198.2h3.1v1.6h-3.1zM223.3 213.1h4.8v1.6h-4.8zM245.3 213.1h4.8v1.6h-4.8zM267.3 213.1h4.8v1.6h-4.8zM289.3 213.1h4.8v1.6h-4.8zM311.3 213.1h4.8v1.6h-4.8zM333.3 213.1h4.8v1.6h-4.8zM355.3 213.1h4.8v1.6h-4.8zM377.3 213.1h4.8v1.6h-4.8zM399.3 213.1h4.8v1.6h-4.8zM421.3 213.1h4.8v1.6h-4.8zM443.3 213.1h4.8v1.6h-4.8zM465.3 213.1h4.8v1.6h-4.8zM487.3 213.1h4.8v1.6h-4.8zM509.3 213.1h4.8v1.6h-4.8zM531.3 213.1h4.8v1.6h-4.8zM553.3 213.1h4.8v1.6h-4.8zM575.3 213.1h4.8v1.6h-4.8zM597.3 213.1h4.8v1.6h-4.8zM619.3 213.1h4.8v1.6h-4.8zM641.3 213.1h4.8v1.6h-4.8zM663.3 213.1h4.8v1.6h-4.8zM685.3 213.1h4.8v1.6h-4.8zM707.3 213.1h4.8v1.6h-4.8zM729.3 213.1h4.8v1.6h-4.8zM215.3 218.2h4.6v1.6h-4.6zM228.5 218.2h5.2v1.6h-5.2zM259.3 218.2h4.6v1.6h-4.6zM272.5 218.2h5.2v1.6h-5.2zM303.3 218.2h4.6v1.6h-4.6zM316.5 218.2h5.2v1.6h-5.2zM347.3 218.2h4.6v1.6h-4.6zM360.5 218.2h5.2v1.6h-5.2zM391.3 218.2h4.6v1.6h-4.6zM404.5 218.2h5.2v1.6h-5.2zM435.3 218.2h4.6v1.6h-4.6zM448.5 218.2h5.2v1.6h-5.2zM479.3 218.2h4.6v1.6h-4.6zM492.5 218.2h5.2v1.6h-5.2zM523.3 218.2h4.6v1.6h-4.6zM536.5 218.2h5.2v1.6h-5.2zM567.3 218.2h4.6v1.6h-4.6zM580.5 218.2h5.2v1.6h-5.2zM611.3 218.2h4.6v1.6h-4.6zM624.5 218.2h5.2v1.6h-5.2zM655.3 218.2h4.6v1.6h-4.6zM668.5 218.2h5.2v1.6h-5.2zM699.3 218.2h4.6v1.6h-4.6zM712.5 218.2h5.2v1.6h-5.2z" fill="#081210"/><path d="M944.5 198.2h3.4v1.6h-3.4zM988.7 198.2h3.1v1.6h-3.1zM1000.2 198.2h4.1v1.6h-4.1zM950.5 213.1h4.8v1.6h-4.8zM972.5 213.1h4.8v1.6h-4.8zM994.5 213.1h4.8v1.6h-4.8zM933.7 218.2h5.2v1.6h-5.2zM964.5 218.2h4.6v1.6h-4.6zM977.7 218.2h5.2v1.6h-5.2z" fill="#081210"/><rect x="360.7" y="224.9" width="22" height="13.9" fill="#5cffe8"/><rect x="536.7" y="224.9" width="22" height="13.9" fill="#5cffe8"/><rect x="712.7" y="224.9" width="22" height="13.9" fill="#5cffe8"/><rect x="382.7" y="240.6" width="176" height="29.4" fill="#edffae"/><path d="M404.7 254.2V270M426.7 254.2V270M448.7 254.2V270M470.7 254.2V270M492.7 254.2V270M514.7 254.2V270M536.7 254.2V270" stroke="#cbdb95" stroke-width="1" fill="none"/><path d="M393.7 254.2V270M415.7 254.2V270M437.7 254.2V270M459.7 254.2V270M481.7 254.2V270M503.7 254.2V270M525.7 254.2V270M547.7 254.2V270" stroke="#d5e59c" stroke-width="0.9" fill="none"/><rect x="382.7" y="253.5" width="176" height="1.2" fill="#afbc80"/><rect x="383.7" y="259.3" width="175" height="5.4" fill="#22221c"/><rect x="206.7" y="271.6" width="66" height="43.5" fill="#f7f47c"/><path d="M228.7 285.2V315.1M250.7 285.2V315.1" stroke="#d4d16a" stroke-width="1" fill="none"/><path d="M217.7 285.2V315.1M239.7 285.2V315.1M261.7 285.2V315.1" stroke="#dedb6f" stroke-width="0.9" fill="none"/><rect x="206.7" y="284.5" width="66" height="1.2" fill="#b6b45b"/><path d="M207.2 297.1h4.1v0.8h-4.1zM239.5 297.1h2.2v0.8h-2.2zM223 304.9h5.5v0.8h-5.5zM245.3 304.9h5.1v0.8h-5.1zM267 304.9h5.5v0.8h-5.5zM214.3 307.1h5.6v0.8h-5.6zM228.8 307.1h5.3v0.8h-5.3zM258.8 307.1h5.3v0.8h-5.3z" fill="#6e6c36"/><rect x="382.7" y="271.6" width="88" height="43.5" fill="#f7f47c"/><path d="M404.7 285.2V315.1M426.7 285.2V315.1M448.7 285.2V315.1" stroke="#d4d16a" stroke-width="1" fill="none"/><path d="M393.7 285.2V315.1M415.7 285.2V315.1M437.7 285.2V315.1M459.7 285.2V315.1" stroke="#dedb6f" stroke-width="0.9" fill="none"/><rect x="382.7" y="284.5" width="88" height="1.2" fill="#b6b45b"/><path d="M383.4 293h43v0.8h-43zM383.4 298.9h43v0.8h-43z" fill="#1c1c10"/><path d="M383.4 296h43v1.5h-43zM427 295.1h21.6v0.9h-21.6zM449 292.1h21v0.9h-21z" fill="#6e6c36"/><rect x="206.7" y="326.7" width="528" height="3.3" fill="#f49d6b"/><rect x="382.7" y="322.7" width="352" height="2.7" fill="#f49d6b"/><rect x="558.7" y="318.1" width="44" height="2.8" fill="#f49d6b"/><rect x="646.7" y="318.1" width="264" height="2.8" fill="#f49d6b"/><rect x="910.7" y="322.7" width="93.6" height="2.7" fill="#f49d6b"/><path d="M8.7 317.5V330.2M30.7 317.5V330.2M52.7 317.5V330.2M74.7 317.5V330.2M96.7 317.5V330.2M118.7 317.5V330.2M140.7 317.5V330.2M162.7 317.5V330.2M184.7 317.5V330.2M206.7 317.5V330.2M228.7 317.5V330.2M250.7 317.5V330.2M272.7 317.5V330.2M294.7 317.5V330.2M316.7 317.5V330.2M338.7 317.5V330.2M360.7 317.5V330.2M382.7 317.5V330.2M404.7 317.5V330.2M426.7 317.5V330.2M448.7 317.5V330.2M470.7 317.5V330.2M492.7 317.5V330.2M514.7 317.5V330.2M536.7 317.5V330.2M558.7 317.5V330.2M580.7 317.5V330.2M602.7 317.5V330.2M624.7 317.5V330.2M646.7 317.5V330.2M668.7 317.5V330.2M690.7 317.5V330.2M712.7 317.5V330.2M734.7 317.5V330.2M756.7 317.5V330.2M778.7 317.5V330.2M800.7 317.5V330.2M822.7 317.5V330.2M844.7 317.5V330.2M866.7 317.5V330.2M888.7 317.5V330.2M910.7 317.5V330.2M932.7 317.5V330.2M954.7 317.5V330.2M976.7 317.5V330.2M998.7 317.5V330.2" stroke="#2b2b2b" stroke-width="1" fill="none" opacity="0.13"/><path d="M19.7 317.5V330.2M41.7 317.5V330.2M63.7 317.5V330.2M85.7 317.5V330.2M107.7 317.5V330.2M129.7 317.5V330.2M151.7 317.5V330.2M173.7 317.5V330.2M195.7 317.5V330.2M217.7 317.5V330.2M239.7 317.5V330.2M261.7 317.5V330.2M283.7 317.5V330.2M305.7 317.5V330.2M327.7 317.5V330.2M349.7 317.5V330.2M371.7 317.5V330.2M393.7 317.5V330.2M415.7 317.5V330.2M437.7 317.5V330.2M459.7 317.5V330.2M481.7 317.5V330.2M503.7 317.5V330.2M525.7 317.5V330.2M547.7 317.5V330.2M569.7 317.5V330.2M591.7 317.5V330.2M613.7 317.5V330.2M635.7 317.5V330.2M657.7 317.5V330.2M679.7 317.5V330.2M701.7 317.5V330.2M723.7 317.5V330.2M745.7 317.5V330.2M767.7 317.5V330.2M789.7 317.5V330.2M811.7 317.5V330.2M833.7 317.5V330.2M855.7 317.5V330.2M877.7 317.5V330.2M899.7 317.5V330.2M921.7 317.5V330.2M943.7 317.5V330.2M965.7 317.5V330.2M987.7 317.5V330.2" stroke="#2f2f2f" stroke-width="0.9" fill="none" opacity="0.13"/><rect x="7.2" y="332.3" width="23.5" height="43.4" fill="#ff94a6"/><path d="M8.7 345.9V375.7" stroke="#db7f8e" stroke-width="1" fill="none"/><path d="M19.7 345.9V375.7" stroke="#e58595" stroke-width="0.9" fill="none"/><rect x="7.2" y="345.2" width="23.5" height="1.2" fill="#bc6d7a"/><rect x="7.2" y="345.2" width="23.5" height="1.4" fill="#c8707f"/><rect x="7.2" y="353.1" width="23.5" height="0.8" fill="#181014"/><rect x="7.2" y="368.1" width="23.5" height="0.8" fill="#181014"/><rect x="30.7" y="332.3" width="176" height="43.4" fill="#ff94a6"/><path d="M52.7 345.9V375.7M74.7 345.9V375.7M96.7 345.9V375.7M118.7 345.9V375.7M140.7 345.9V375.7M162.7 345.9V375.7M184.7 345.9V375.7" stroke="#db7f8e" stroke-width="1" fill="none"/><path d="M41.7 345.9V375.7M63.7 345.9V375.7M85.7 345.9V375.7M107.7 345.9V375.7M129.7 345.9V375.7M151.7 345.9V375.7M173.7 345.9V375.7M195.7 345.9V375.7" stroke="#e58595" stroke-width="0.9" fill="none"/><rect x="30.7" y="345.2" width="176" height="1.2" fill="#bc6d7a"/><rect x="30.1" y="332.3" width="1.3" height="43.4" fill="#9e5b66"/><rect x="30.7" y="345.2" width="176" height="1.4" fill="#c8707f"/><rect x="30.7" y="353.1" width="176" height="0.8" fill="#181014"/><rect x="30.7" y="368.1" width="176" height="0.8" fill="#181014"/><rect x="382.7" y="332.3" width="176" height="43.4" fill="#ff94a6"/><path d="M404.7 345.9V375.7M426.7 345.9V375.7M448.7 345.9V375.7M470.7 345.9V375.7M492.7 345.9V375.7M514.7 345.9V375.7M536.7 345.9V375.7" stroke="#db7f8e" stroke-width="1" fill="none"/><path d="M393.7 345.9V375.7M415.7 345.9V375.7M437.7 345.9V375.7M459.7 345.9V375.7M481.7 345.9V375.7M503.7 345.9V375.7M525.7 345.9V375.7M547.7 345.9V375.7" stroke="#e58595" stroke-width="0.9" fill="none"/><rect x="382.7" y="345.2" width="176" height="1.2" fill="#bc6d7a"/><rect x="382.7" y="345.2" width="176" height="1.4" fill="#c8707f"/><rect x="382.7" y="353.1" width="176" height="0.8" fill="#181014"/><rect x="382.7" y="368.1" width="176" height="0.8" fill="#181014"/><rect x="734.7" y="332.3" width="176" height="43.4" fill="#ff94a6"/><path d="M756.7 345.9V375.7M778.7 345.9V375.7M800.7 345.9V375.7M822.7 345.9V375.7M844.7 345.9V375.7M866.7 345.9V375.7M888.7 345.9V375.7" stroke="#db7f8e" stroke-width="1" fill="none"/><path d="M745.7 345.9V375.7M767.7 345.9V375.7M789.7 345.9V375.7M811.7 345.9V375.7M833.7 345.9V375.7M855.7 345.9V375.7M877.7 345.9V375.7M899.7 345.9V375.7" stroke="#e58595" stroke-width="0.9" fill="none"/><rect x="734.7" y="345.2" width="176" height="1.2" fill="#bc6d7a"/><rect x="734.7" y="345.2" width="176" height="1.4" fill="#c8707f"/><rect x="734.7" y="353.1" width="176" height="0.8" fill="#181014"/><rect x="734.7" y="368.1" width="176" height="0.8" fill="#181014"/><path d="M539.7 346L558.7 346L558.7 375.7L555.7 375.7 Z" fill="rgba(120,60,80,0.27)"/><path d="M893.7 346L910.7 346L910.7 375.7L907.7 375.7 Z" fill="rgba(120,60,80,0.27)"/><text x="9.6" y="342.8" font-size="7" fill="#222" letter-spacing="0.6">...</text><rect x="30.7" y="377.4" width="176" height="14.1" fill="#ff94a6"/><rect x="366.4" y="377.4" width="21.2" height="14.1" fill="#ff94a6"/><path d="M366.4 377.4L373 377.4L367.2 391.5L366.4 391.5 Z" fill="rgba(120,60,80,0.27)"/><rect x="470.7" y="377.4" width="88" height="14.1" fill="#ff94a6"/><path d="M470.7 377.4L500.7 377.4L475.7 391.5L470.7 391.5 Z" fill="rgba(120,60,80,0.27)"/><path d="M550.7 377.4L558.7 377.4L558.7 391.5L557.7 391.5 Z" fill="rgba(120,60,80,0.27)"/><rect x="718.6" y="377.4" width="16.1" height="14.1" fill="#ff94a6"/><path d="M718.6 377.4L724 377.4L719.2 391.5L718.6 391.5 Z" fill="rgba(120,60,80,0.27)"/><rect x="822.7" y="377.4" width="88" height="14.1" fill="#ff94a6"/><path d="M822.7 377.4L852.7 377.4L827.7 391.5L822.7 391.5 Z" fill="rgba(120,60,80,0.27)"/><path d="M902.7 377.4L910.7 377.4L910.7 391.5L909.7 391.5 Z" fill="rgba(120,60,80,0.27)"/><rect x="163.3" y="393.2" width="43.4" height="14.2" fill="#d86ce4"/><rect x="470.7" y="393.2" width="88" height="14.2" fill="#d86ce4"/><rect x="822.7" y="393.2" width="88" height="14.2" fill="#d86ce4"/><rect x="30.7" y="409" width="176" height="14" fill="#d86ce4"/><rect x="382.7" y="409" width="176" height="14" fill="#d86ce4"/><g font-size="8.6" fill="#9c9c9c"><text x="17.72" y="470.1">0:10</text><text x="97.92" y="470.1">0:15</text><text x="178.13" y="470.1">0:20</text><text x="258.34" y="470.1">0:25</text><text x="338.55" y="470.1">0:30</text><text x="418.76" y="470.1">0:35</text><text x="498.97" y="470.1">0:40</text><text x="579.18" y="470.1">0:45</text><text x="659.38" y="470.1">0:50</text><text x="739.59" y="470.1">0:55</text><text x="819.8" y="470.1">1:00</text><text x="900.01" y="470.1">1:05</text><text x="980.22" y="470.1">1:10</text></g><path d="M15.12 460.4V467.6M31.16 460.4V461.6M47.2 460.4V461.6M63.24 460.4V461.6M79.28 460.4V461.6M95.33 460.4V467.6M111.37 460.4V461.6M127.41 460.4V461.6M143.45 460.4V461.6M159.49 460.4V461.6M175.53 460.4V467.6M191.57 460.4V461.6M207.62 460.4V461.6M223.66 460.4V461.6M239.7 460.4V461.6M255.74 460.4V467.6M271.78 460.4V461.6M287.82 460.4V461.6M303.87 460.4V461.6M319.91 460.4V461.6M335.95 460.4V467.6M351.99 460.4V461.6M368.03 460.4V461.6M384.07 460.4V461.6M400.12 460.4V461.6M416.16 460.4V467.6M432.2 460.4V461.6M448.24 460.4V461.6M464.28 460.4V461.6M480.33 460.4V461.6M496.37 460.4V467.6M512.41 460.4V461.6M528.45 460.4V461.6M544.49 460.4V461.6M560.53 460.4V461.6M576.58 460.4V467.6M592.62 460.4V461.6M608.66 460.4V461.6M624.7 460.4V461.6M640.74 460.4V461.6M656.78 460.4V467.6M672.83 460.4V461.6M688.87 460.4V461.6M704.91 460.4V461.6M720.95 460.4V461.6M736.99 460.4V467.6M753.03 460.4V461.6M769.08 460.4V461.6M785.12 460.4V461.6M801.16 460.4V461.6M817.2 460.4V467.6M833.24 460.4V461.6M849.28 460.4V461.6M865.33 460.4V461.6M881.37 460.4V461.6M897.41 460.4V467.6M913.45 460.4V461.6M929.49 460.4V461.6M945.53 460.4V461.6M961.58 460.4V461.6M977.62 460.4V467.6M993.66 460.4V461.6" stroke="#8c8c8c" stroke-width="0.9" fill="none"/><text x="979.4" y="457" font-size="13.6" letter-spacing="1.3" fill="#6e6e6e" stroke="#6e6e6e" stroke-width="0.45">1/2</text><rect x="519.85" y="73.8" width="1.15" height="385.2" fill="#f2f2f2"/><rect x="519.7" y="73.8" width="1.4" height="43.9" fill="#0a0a0a"/><rect x="519.7" y="119.3" width="1.4" height="43.4" fill="#0a0a0a"/><rect x="519.7" y="172.5" width="1.4" height="1.4" fill="#0a0a0a"/><rect x="519.7" y="180.1" width="1.4" height="43.1" fill="#0a0a0a"/><rect x="519.7" y="240.6" width="1.4" height="29.4" fill="#0a0a0a"/><rect x="519.7" y="322.7" width="1.4" height="2.7" fill="#0a0a0a"/><rect x="519.7" y="326.7" width="1.4" height="3.3" fill="#0a0a0a"/><rect x="519.7" y="332.3" width="1.4" height="43.4" fill="#0a0a0a"/><rect x="519.7" y="377.4" width="1.4" height="14.1" fill="#0a0a0a"/><rect x="519.7" y="393.2" width="1.4" height="14.2" fill="#0a0a0a"/><rect x="519.7" y="409" width="1.4" height="14" fill="#0a0a0a"/></svg>
<div class="a" style="left:1005.8px;top:73.8px;width:187px;height:43.9px;background:#3a3a3a;"></div>
<div class="a" style="left:1005.8px;top:73.8px;width:85.9px;height:43.9px;background:#92a7ff;"></div>
<svg class="a" style="left:1008.2px;top:75.2px" width="11" height="11" viewBox="0 0 11 11"><circle cx="5.5" cy="5.5" r="4.6" fill="none" stroke="#1a1a1a" stroke-width="0.85"/><path d="M2.9 4.2 L8.1 4.2 L5.5 7.8 Z" fill="#1a1a1a"/></svg>
<div class="a" style="left:1025.2px;top:75.2px;width:64px;height:11px;line-height:11px;color:#1a1a1a;font-size:8.8px;white-space:nowrap;text-shadow:0 0 0.3px #1a1a1a;"><span class="s">Drums</span></div>
<div class="a" style="left:1095.8px;top:76.3px;width:37px;height:9.8px;background:#ffad56;line-height:9.8px;text-align:center;color:#111;font-weight:bold;font-size:8.8px;box-shadow:0 0 0 0.6px #1a1a1a;"><span class="s">1</span></div>
<div class="a" style="left:1137px;top:76.3px;width:16.7px;height:9.8px;background:#1e1e1e;line-height:9.8px;text-align:center;color:#d0d0d0;font-size:8.6px;box-shadow:0 0 0 0.6px #262626;"><span class="s">S</span></div>
<div class="a" style="left:1157.9px;top:76.3px;width:16.8px;height:9.8px;background:#1e1e1e;box-shadow:0 0 0 0.6px #262626;"></div>
<svg class="a" style="left:1162.3px;top:77.2px" width="8" height="8" viewBox="-4 -4 8 8"><circle cx="0" cy="0" r="2.6" fill="#c8c8c8"/><path d="M-0.5 1.3 Q1 0.4 0.9 -2.4" stroke="#1e1e1e" stroke-width="0.8" fill="none"/></svg>
<div class="a" style="left:1095.8px;top:90.7px;width:37px;height:9.6px;background:#1e1e1e;box-shadow:0 0 0 0.6px #262626;"></div>
<div class="a" style="left:1095.8px;top:90.7px;width:30.4px;height:9.6px;background:#03758a;"></div>
<div class="a" style="left:1095.8px;top:90.7px;width:37px;height:9.6px;line-height:9.6px;text-align:center;color:#b4c8cc;font-size:8.8px;"><span class="s">-1.0</span></div>
<div class="a" style="left:1137px;top:90.7px;width:37.7px;height:9.6px;background:#1e1e1e;line-height:9.6px;text-align:center;color:#d0d0d0;font-size:8.8px;box-shadow:0 0 0 0.6px #262626;"><span class="s">C</span></div>
<div class="a" style="left:1095.8px;top:104.7px;width:23.4px;height:9.6px;background:#1e1e1e;line-height:9.6px;text-align:center;color:#c4c4c4;font-size:8.6px;box-shadow:0 0 0 0.6px #262626;"><span class="s">-52.8</span></div>
<div class="a" style="left:1095.7px;top:104.3px;width:3.2px;height:3.2px;background:#ee3a3a;border-radius:50%;"></div>
<div class="a" style="left:1096.2px;top:108.3px;width:1.8px;height:6px;background:#148aa0;"></div>
<div class="a" style="left:1122.8px;top:104.7px;width:24.2px;height:9.6px;background:#1e1e1e;line-height:9.6px;text-align:center;color:#c4c4c4;font-size:8.6px;box-shadow:0 0 0 0.6px #262626;"><span class="s">−<span style="font-size:11.5px;line-height:0;position:relative;top:0.5px">∞</span></span></div>
<div class="a" style="left:1122.7px;top:104.3px;width:3.2px;height:3.2px;background:#ee3a3a;border-radius:50%;"></div>
<div class="a" style="left:1178.5px;top:76px;width:2.3px;height:40.1px;background:#242424;"></div>
<div class="a" style="left:1181.6px;top:76px;width:2.3px;height:40.1px;background:#242424;"></div>
<div class="a" style="left:1178.5px;top:96px;width:2.3px;height:20.1px;background:#16f05a;"></div>
<div class="a" style="left:1181.6px;top:96px;width:2.3px;height:20.1px;background:#16f05a;"></div>
<div class="a" style="left:1178.5px;top:84.4px;width:2.3px;height:0.9px;background:#e8a020;"></div>
<div class="a" style="left:1181.6px;top:84.4px;width:2.3px;height:0.9px;background:#e8a020;"></div>
<div class="a" style="left:1005.8px;top:119.3px;width:187px;height:43.4px;background:#3a3a3a;"></div>
<div class="a" style="left:1005.8px;top:119.3px;width:85.9px;height:43.4px;background:#92a7ff;"></div>
<svg class="a" style="left:1008.2px;top:120.7px" width="11" height="11" viewBox="0 0 11 11"><circle cx="5.5" cy="5.5" r="4.6" fill="none" stroke="#1a1a1a" stroke-width="0.85"/><path d="M2.9 4.2 L8.1 4.2 L5.5 7.8 Z" fill="#1a1a1a"/></svg>
<div class="a" style="left:1025.2px;top:120.7px;width:64px;height:11px;line-height:11px;color:#1a1a1a;font-size:8.8px;white-space:nowrap;text-shadow:0 0 0.3px #1a1a1a;"><span class="s">Breaks</span></div>
<div class="a" style="left:1095.8px;top:121.8px;width:37px;height:9.8px;background:#ffad56;line-height:9.8px;text-align:center;color:#111;font-weight:bold;font-size:8.8px;box-shadow:0 0 0 0.6px #1a1a1a;"><span class="s">2</span></div>
<div class="a" style="left:1137px;top:121.8px;width:16.7px;height:9.8px;background:#1e1e1e;line-height:9.8px;text-align:center;color:#d0d0d0;font-size:8.6px;box-shadow:0 0 0 0.6px #262626;"><span class="s">S</span></div>
<div class="a" style="left:1157.9px;top:121.8px;width:16.8px;height:9.8px;background:#1e1e1e;box-shadow:0 0 0 0.6px #262626;"></div>
<svg class="a" style="left:1162.3px;top:122.7px" width="8" height="8" viewBox="-4 -4 8 8"><circle cx="0" cy="0" r="2.7" fill="#747474"/></svg>
<div class="a" style="left:1095.8px;top:136.2px;width:37px;height:9.6px;background:#1e1e1e;box-shadow:0 0 0 0.6px #262626;"></div>
<div class="a" style="left:1095.8px;top:136.2px;width:23.5px;height:9.6px;background:#03758a;"></div>
<div class="a" style="left:1095.8px;top:136.2px;width:37px;height:9.6px;line-height:9.6px;text-align:center;color:#b4c8cc;font-size:8.8px;"><span class="s">-9.4</span></div>
<div class="a" style="left:1137px;top:136.2px;width:37.7px;height:9.6px;background:#1e1e1e;line-height:9.6px;text-align:center;color:#d0d0d0;font-size:8.8px;box-shadow:0 0 0 0.6px #262626;"><span class="s">C</span></div>
<div class="a" style="left:1095.8px;top:150.2px;width:23.4px;height:9.6px;background:#1e1e1e;line-height:9.6px;text-align:center;color:#c4c4c4;font-size:8.6px;box-shadow:0 0 0 0.6px #262626;"><span class="s">−<span style="font-size:11.5px;line-height:0;position:relative;top:0.5px">∞</span></span></div>
<div class="a" style="left:1095.7px;top:149.8px;width:3.2px;height:3.2px;background:#ee3a3a;border-radius:50%;"></div>
<div class="a" style="left:1122.8px;top:150.2px;width:24.2px;height:9.6px;background:#1e1e1e;line-height:9.6px;text-align:center;color:#c4c4c4;font-size:8.6px;box-shadow:0 0 0 0.6px #262626;"><span class="s">−<span style="font-size:11.5px;line-height:0;position:relative;top:0.5px">∞</span></span></div>
<div class="a" style="left:1178.5px;top:121.5px;width:2.3px;height:39.6px;background:#242424;"></div>
<div class="a" style="left:1181.6px;top:121.5px;width:2.3px;height:39.6px;background:#242424;"></div>
<div class="a" style="left:1178.5px;top:130.8px;width:2.3px;height:10.3px;background:linear-gradient(#c9b010,#6fb326);"></div>
<div class="a" style="left:1178.5px;top:141px;width:2.3px;height:20.1px;background:#16f05a;"></div>
<div class="a" style="left:1181.6px;top:130.8px;width:2.3px;height:10.3px;background:linear-gradient(#c9b010,#6fb326);"></div>
<div class="a" style="left:1181.6px;top:141px;width:2.3px;height:20.1px;background:#16f05a;"></div>
<div class="a" style="left:1005.8px;top:164.2px;width:187px;height:14.4px;background:#3a3a3a;"></div>
<div class="a" style="left:1005.8px;top:164.2px;width:85.9px;height:14.4px;background:#8bc5ff;"></div>
<svg class="a" style="left:1008.2px;top:165.6px" width="11" height="11" viewBox="0 0 11 11"><circle cx="5.5" cy="5.5" r="4.6" fill="none" stroke="#1a1a1a" stroke-width="0.85"/><path d="M3.1 3.9H7.9M3.1 5.5H7.9M3.1 7.1H7.9" stroke="#1a1a1a" stroke-width="0.9"/></svg>
<div class="a" style="left:1025.2px;top:165.6px;width:64px;height:11px;line-height:11px;color:#1a1a1a;font-size:8.8px;white-space:nowrap;text-shadow:0 0 0.3px #1a1a1a;"><span class="s">Percussion</span></div>
<div class="a" style="left:1095.8px;top:166.7px;width:37px;height:9.8px;background:#ffad56;line-height:9.8px;text-align:center;color:#111;font-weight:bold;font-size:8.8px;box-shadow:0 0 0 0.6px #1a1a1a;"><span class="s">3</span></div>
<div class="a" style="left:1137px;top:166.7px;width:16.7px;height:9.8px;background:#1e1e1e;line-height:9.8px;text-align:center;color:#d0d0d0;font-size:8.6px;box-shadow:0 0 0 0.6px #262626;"><span class="s">S</span></div>
<div class="a" style="left:1178.5px;top:166.4px;width:2.3px;height:10.6px;background:#242424;"></div>
<div class="a" style="left:1181.6px;top:166.4px;width:2.3px;height:10.6px;background:#242424;"></div>
<div class="a" style="left:1178.5px;top:173.6px;width:2.3px;height:3.4px;background:#16f05a;"></div>
<div class="a" style="left:1181.6px;top:173.6px;width:2.3px;height:3.4px;background:#16f05a;"></div>
<div class="a" style="left:1005.8px;top:180.1px;width:187px;height:43.1px;background:#4b4b4b;"></div>
<div class="a" style="left:1005.8px;top:180.1px;width:85.9px;height:43.1px;background:#5cffe8;"></div>
<svg class="a" style="left:1008.2px;top:181.5px" width="11" height="11" viewBox="0 0 11 11"><circle cx="5.5" cy="5.5" r="4.6" fill="none" stroke="#1a1a1a" stroke-width="0.85"/><path d="M2.9 4.2 L8.1 4.2 L5.5 7.8 Z" fill="#1a1a1a"/></svg>
<div class="a" style="left:1025.2px;top:181.5px;width:64px;height:11px;line-height:11px;color:#1a1a1a;font-size:8.8px;white-space:nowrap;text-shadow:0 0 0.3px #1a1a1a;"><span class="s">Bass</span></div>
<div class="a" style="left:1095.8px;top:182.6px;width:37px;height:9.8px;background:#ffad56;line-height:9.8px;text-align:center;color:#111;font-weight:bold;font-size:8.8px;box-shadow:0 0 0 0.6px #1a1a1a;"><span class="s">8</span></div>
<div class="a" style="left:1137px;top:182.6px;width:16.7px;height:9.8px;background:#1e1e1e;line-height:9.8px;text-align:center;color:#d0d0d0;font-size:8.6px;box-shadow:0 0 0 0.6px #262626;"><span class="s">S</span></div>
<div class="a" style="left:1157.9px;top:182.6px;width:16.8px;height:9.8px;background:#1e1e1e;box-shadow:0 0 0 0.6px #262626;"></div>
<svg class="a" style="left:1162.3px;top:183.5px" width="8" height="8" viewBox="-4 -4 8 8"><circle cx="0" cy="0" r="2.6" fill="#c8c8c8"/><path d="M-0.5 1.3 Q1 0.4 0.9 -2.4" stroke="#1e1e1e" stroke-width="0.8" fill="none"/></svg>
<div class="a" style="left:1095.8px;top:197px;width:37px;height:9.6px;background:#1e1e1e;box-shadow:0 0 0 0.6px #262626;"></div>
<div class="a" style="left:1095.8px;top:197px;width:24.4px;height:9.6px;background:#03758a;"></div>
<div class="a" style="left:1095.8px;top:197px;width:37px;height:9.6px;line-height:9.6px;text-align:center;color:#b4c8cc;font-size:8.8px;"><span class="s">-7.7</span></div>
<div class="a" style="left:1137px;top:197px;width:37.7px;height:9.6px;background:#1e1e1e;line-height:9.6px;text-align:center;color:#d0d0d0;font-size:8.8px;box-shadow:0 0 0 0.6px #262626;"><span class="s">C</span></div>
<div class="a" style="left:1095.8px;top:211px;width:23.4px;height:9.6px;background:#1e1e1e;line-height:9.6px;text-align:center;color:#c4c4c4;font-size:8.6px;box-shadow:0 0 0 0.6px #262626;"><span class="s">−<span style="font-size:11.5px;line-height:0;position:relative;top:0.5px">∞</span></span></div>
<div class="a" style="left:1122.8px;top:211px;width:24.2px;height:9.6px;background:#1e1e1e;line-height:9.6px;text-align:center;color:#c4c4c4;font-size:8.6px;box-shadow:0 0 0 0.6px #262626;"><span class="s">−<span style="font-size:11.5px;line-height:0;position:relative;top:0.5px">∞</span></span></div>
<div class="a" style="left:1178.5px;top:182.3px;width:2.3px;height:39.3px;background:#242424;"></div>
<div class="a" style="left:1181.6px;top:182.3px;width:2.3px;height:39.3px;background:#242424;"></div>
<div class="a" style="left:1178.5px;top:199.4px;width:2.3px;height:22.2px;background:#16f05a;"></div>
<div class="a" style="left:1181.6px;top:199.4px;width:2.3px;height:22.2px;background:#16f05a;"></div>
<div class="a" style="left:1178.5px;top:192px;width:2.3px;height:0.9px;background:#e8a020;"></div>
<div class="a" style="left:1181.6px;top:192px;width:2.3px;height:0.9px;background:#e8a020;"></div>
<div class="a" style="left:1005.8px;top:224.9px;width:187px;height:13.9px;background:#3a3a3a;"></div>
<div class="a" style="left:1005.8px;top:224.9px;width:85.9px;height:13.9px;background:#5cffe8;"></div>
<svg class="a" style="left:1008.2px;top:226.3px" width="11" height="11" viewBox="0 0 11 11"><circle cx="5.5" cy="5.5" r="4.6" fill="none" stroke="#1a1a1a" stroke-width="0.85"/><path d="M4.2 2.9 L4.2 8.1 L7.8 5.5 Z" fill="#1a1a1a"/></svg>
<div class="a" style="left:1025.2px;top:226.3px;width:64px;height:11px;line-height:11px;color:#1a1a1a;font-size:8.8px;white-space:nowrap;text-shadow:0 0 0.3px #1a1a1a;"><span class="s">Bass Drop</span></div>
<div class="a" style="left:1095.8px;top:227.4px;width:37px;height:9.8px;background:#ffad56;line-height:9.8px;text-align:center;color:#111;font-weight:bold;font-size:8.8px;box-shadow:0 0 0 0.6px #1a1a1a;"><span class="s">9</span></div>
<div class="a" style="left:1137px;top:227.4px;width:16.7px;height:9.8px;background:#1e1e1e;line-height:9.8px;text-align:center;color:#d0d0d0;font-size:8.6px;box-shadow:0 0 0 0.6px #262626;"><span class="s">S</span></div>
<div class="a" style="left:1157.9px;top:227.4px;width:16.8px;height:9.8px;background:#1e1e1e;box-shadow:0 0 0 0.6px #262626;"></div>
<svg class="a" style="left:1162.3px;top:228.3px" width="8" height="8" viewBox="-4 -4 8 8"><circle cx="0" cy="0" r="2.6" fill="#c8c8c8"/><path d="M-0.5 1.3 Q1 0.4 0.9 -2.4" stroke="#1e1e1e" stroke-width="0.8" fill="none"/></svg>
<div class="a" style="left:1178.5px;top:227.1px;width:2.3px;height:10.1px;background:#242424;"></div>
<div class="a" style="left:1181.6px;top:227.1px;width:2.3px;height:10.1px;background:#242424;"></div>
<div class="a" style="left:1005.8px;top:240.6px;width:187px;height:29.4px;background:#3a3a3a;"></div>
<div class="a" style="left:1005.8px;top:240.6px;width:85.9px;height:29.4px;background:#edffae;"></div>
<svg class="a" style="left:1008.2px;top:242px" width="11" height="11" viewBox="0 0 11 11"><circle cx="5.5" cy="5.5" r="4.6" fill="none" stroke="#1a1a1a" stroke-width="0.85"/><path d="M2.9 4.2 L8.1 4.2 L5.5 7.8 Z" fill="#1a1a1a"/></svg>
<div class="a" style="left:1025.2px;top:242px;width:64px;height:11px;line-height:11px;color:#1a1a1a;font-size:8.8px;white-space:nowrap;text-shadow:0 0 0.3px #1a1a1a;"><span class="s">Synth Riser</span></div>
<div class="a" style="left:1095.8px;top:243.1px;width:37px;height:9.8px;background:#ffad56;line-height:9.8px;text-align:center;color:#111;font-weight:bold;font-size:8.8px;box-shadow:0 0 0 0.6px #1a1a1a;"><span class="s">10</span></div>
<div class="a" style="left:1137px;top:243.1px;width:16.7px;height:9.8px;background:#1e1e1e;line-height:9.8px;text-align:center;color:#d0d0d0;font-size:8.6px;box-shadow:0 0 0 0.6px #262626;"><span class="s">S</span></div>
<div class="a" style="left:1157.9px;top:243.1px;width:16.8px;height:9.8px;background:#1e1e1e;box-shadow:0 0 0 0.6px #262626;"></div>
<svg class="a" style="left:1162.3px;top:244px" width="8" height="8" viewBox="-4 -4 8 8"><circle cx="0" cy="0" r="2.6" fill="#c8c8c8"/><path d="M-0.5 1.3 Q1 0.4 0.9 -2.4" stroke="#1e1e1e" stroke-width="0.8" fill="none"/></svg>
<div class="a" style="left:1095.8px;top:257.5px;width:37px;height:9.6px;background:#1e1e1e;box-shadow:0 0 0 0.6px #262626;"></div>
<div class="a" style="left:1095.8px;top:257.5px;width:15px;height:9.6px;background:#03758a;"></div>
<div class="a" style="left:1095.8px;top:257.5px;width:37px;height:9.6px;line-height:9.6px;text-align:center;color:#b4c8cc;font-size:8.8px;"><span class="s">-18.0</span></div>
<div class="a" style="left:1137px;top:257.5px;width:37.7px;height:9.6px;background:#1e1e1e;line-height:9.6px;text-align:center;color:#d0d0d0;font-size:8.8px;box-shadow:0 0 0 0.6px #262626;"><span class="s">C</span></div>
<div class="a" style="left:1178.5px;top:242.8px;width:2.3px;height:25.6px;background:#242424;"></div>
<div class="a" style="left:1181.6px;top:242.8px;width:2.3px;height:25.6px;background:#242424;"></div>
<div class="a" style="left:1178.5px;top:256.6px;width:2.3px;height:11.8px;background:#16f05a;"></div>
<div class="a" style="left:1181.6px;top:255.4px;width:2.3px;height:13px;background:#16f05a;"></div>
<div class="a" style="left:1005.8px;top:271.6px;width:187px;height:43.5px;background:#3a3a3a;"></div>
<div class="a" style="left:1005.8px;top:271.6px;width:85.9px;height:43.5px;background:#f7f47c;"></div>
<svg class="a" style="left:1008.2px;top:273px" width="11" height="11" viewBox="0 0 11 11"><circle cx="5.5" cy="5.5" r="4.6" fill="none" stroke="#1a1a1a" stroke-width="0.85"/><path d="M2.9 4.2 L8.1 4.2 L5.5 7.8 Z" fill="#1a1a1a"/></svg>
<div class="a" style="left:1025.2px;top:273px;width:64px;height:11px;line-height:11px;color:#1a1a1a;font-size:8.8px;white-space:nowrap;text-shadow:0 0 0.3px #1a1a1a;"><span class="s">Keys</span></div>
<div class="a" style="left:1095.8px;top:274.1px;width:37px;height:9.8px;background:#ffad56;line-height:9.8px;text-align:center;color:#111;font-weight:bold;font-size:8.8px;box-shadow:0 0 0 0.6px #1a1a1a;"><span class="s">11</span></div>
<div class="a" style="left:1137px;top:274.1px;width:16.7px;height:9.8px;background:#1e1e1e;line-height:9.8px;text-align:center;color:#d0d0d0;font-size:8.6px;box-shadow:0 0 0 0.6px #262626;"><span class="s">S</span></div>
<div class="a" style="left:1157.9px;top:274.1px;width:16.8px;height:9.8px;background:#1e1e1e;box-shadow:0 0 0 0.6px #262626;"></div>
<svg class="a" style="left:1162.3px;top:275px" width="8" height="8" viewBox="-4 -4 8 8"><circle cx="0" cy="0" r="2.6" fill="#c8c8c8"/><path d="M-0.5 1.3 Q1 0.4 0.9 -2.4" stroke="#1e1e1e" stroke-width="0.8" fill="none"/></svg>
<div class="a" style="left:1095.8px;top:288.5px;width:37px;height:9.6px;background:#1e1e1e;box-shadow:0 0 0 0.6px #262626;"></div>
<div class="a" style="left:1095.8px;top:288.5px;width:25.2px;height:9.6px;background:#03758a;"></div>
<div class="a" style="left:1095.8px;top:288.5px;width:37px;height:9.6px;line-height:9.6px;text-align:center;color:#b4c8cc;font-size:8.8px;"><span class="s">-6.6</span></div>
<div class="a" style="left:1137px;top:288.5px;width:37.7px;height:9.6px;background:#1e1e1e;line-height:9.6px;text-align:center;color:#d0d0d0;font-size:8.8px;box-shadow:0 0 0 0.6px #262626;"><span class="s">C</span></div>
<div class="a" style="left:1095.8px;top:302.5px;width:23.4px;height:9.6px;background:#1e1e1e;line-height:9.6px;text-align:center;color:#c4c4c4;font-size:8.6px;box-shadow:0 0 0 0.6px #262626;"><span class="s">−<span style="font-size:11.5px;line-height:0;position:relative;top:0.5px">∞</span></span></div>
<div class="a" style="left:1122.8px;top:302.5px;width:24.2px;height:9.6px;background:#1e1e1e;line-height:9.6px;text-align:center;color:#c4c4c4;font-size:8.6px;box-shadow:0 0 0 0.6px #262626;"><span class="s">−<span style="font-size:11.5px;line-height:0;position:relative;top:0.5px">∞</span></span></div>
<div class="a" style="left:1178.5px;top:273.8px;width:2.3px;height:39.7px;background:#242424;"></div>
<div class="a" style="left:1181.6px;top:273.8px;width:2.3px;height:39.7px;background:#242424;"></div>
<div class="a" style="left:1178.5px;top:312px;width:2.3px;height:1.5px;background:#16f05a;"></div>
<div class="a" style="left:1181.6px;top:312px;width:2.3px;height:1.5px;background:#16f05a;"></div>
<div class="a" style="left:1178.5px;top:291.4px;width:2.3px;height:0.9px;background:#58c030;"></div>
<div class="a" style="left:1181.6px;top:288.2px;width:2.3px;height:0.9px;background:#58c030;"></div>
<div class="a" style="left:1005.8px;top:316.6px;width:187px;height:14px;background:#3a3a3a;"></div>
<div class="a" style="left:1005.8px;top:316.6px;width:85.9px;height:14px;background:#ffa374;"></div>
<svg class="a" style="left:1008.2px;top:318px" width="11" height="11" viewBox="0 0 11 11"><circle cx="5.5" cy="5.5" r="4.6" fill="none" stroke="#1a1a1a" stroke-width="0.85"/><path d="M3.1 3.9H7.9M3.1 5.5H7.9M3.1 7.1H7.9" stroke="#1a1a1a" stroke-width="0.9"/></svg>
<div class="a" style="left:1025.2px;top:318px;width:64px;height:11px;line-height:11px;color:#1a1a1a;font-size:8.8px;white-space:nowrap;text-shadow:0 0 0.3px #1a1a1a;"><span class="s">Pads</span></div>
<div class="a" style="left:1095.8px;top:319.1px;width:37px;height:9.8px;background:#ffad56;line-height:9.8px;text-align:center;color:#111;font-weight:bold;font-size:8.8px;box-shadow:0 0 0 0.6px #1a1a1a;"><span class="s">12</span></div>
<div class="a" style="left:1137px;top:319.1px;width:16.7px;height:9.8px;background:#1e1e1e;line-height:9.8px;text-align:center;color:#d0d0d0;font-size:8.6px;box-shadow:0 0 0 0.6px #262626;"><span class="s">S</span></div>
<div class="a" style="left:1178.5px;top:318.8px;width:2.3px;height:10.2px;background:#242424;"></div>
<div class="a" style="left:1181.6px;top:318.8px;width:2.3px;height:10.2px;background:#242424;"></div>
<div class="a" style="left:1178.5px;top:325.4px;width:2.3px;height:3.6px;background:#16f05a;"></div>
<div class="a" style="left:1181.6px;top:325.4px;width:2.3px;height:3.6px;background:#16f05a;"></div>
<div class="a" style="left:1178.5px;top:321.8px;width:2.3px;height:0.9px;background:#d8d020;"></div>
<div class="a" style="left:1181.6px;top:321.8px;width:2.3px;height:0.9px;background:#d8d020;"></div>
<div class="a" style="left:1005.8px;top:332.3px;width:187px;height:43.4px;background:#3a3a3a;"></div>
<div class="a" style="left:1005.8px;top:332.3px;width:85.9px;height:43.4px;background:#ff94a6;"></div>
<svg class="a" style="left:1008.2px;top:333.7px" width="11" height="11" viewBox="0 0 11 11"><circle cx="5.5" cy="5.5" r="4.6" fill="none" stroke="#1a1a1a" stroke-width="0.85"/><path d="M2.9 4.2 L8.1 4.2 L5.5 7.8 Z" fill="#1a1a1a"/></svg>
<div class="a" style="left:1025.2px;top:333.7px;width:64px;height:11px;line-height:11px;color:#1a1a1a;font-size:8.8px;white-space:nowrap;text-shadow:0 0 0.3px #1a1a1a;"><span class="s">Ambience</span></div>
<div class="a" style="left:1095.8px;top:334.8px;width:37px;height:9.8px;background:#ffad56;line-height:9.8px;text-align:center;color:#111;font-weight:bold;font-size:8.8px;box-shadow:0 0 0 0.6px #1a1a1a;"><span class="s">16</span></div>
<div class="a" style="left:1137px;top:334.8px;width:16.7px;height:9.8px;background:#1e1e1e;line-height:9.8px;text-align:center;color:#d0d0d0;font-size:8.6px;box-shadow:0 0 0 0.6px #262626;"><span class="s">S</span></div>
<div class="a" style="left:1157.9px;top:334.8px;width:16.8px;height:9.8px;background:#1e1e1e;box-shadow:0 0 0 0.6px #262626;"></div>
<svg class="a" style="left:1162.3px;top:335.7px" width="8" height="8" viewBox="-4 -4 8 8"><circle cx="0" cy="0" r="2.7" fill="#747474"/></svg>
<div class="a" style="left:1095.8px;top:349.2px;width:37px;height:9.6px;background:#1e1e1e;box-shadow:0 0 0 0.6px #262626;"></div>
<div class="a" style="left:1095.8px;top:349.2px;width:23.5px;height:9.6px;background:#03758a;"></div>
<div class="a" style="left:1095.8px;top:349.2px;width:37px;height:9.6px;line-height:9.6px;text-align:center;color:#b4c8cc;font-size:8.8px;"><span class="s">-8.3</span></div>
<div class="a" style="left:1137px;top:349.2px;width:37.7px;height:9.6px;background:#1e1e1e;line-height:9.6px;text-align:center;color:#d0d0d0;font-size:8.8px;box-shadow:0 0 0 0.6px #262626;"><span class="s">C</span></div>
<div class="a" style="left:1095.8px;top:363.2px;width:23.4px;height:9.6px;background:#1e1e1e;line-height:9.6px;text-align:center;color:#c4c4c4;font-size:8.6px;box-shadow:0 0 0 0.6px #262626;"><span class="s">−<span style="font-size:11.5px;line-height:0;position:relative;top:0.5px">∞</span></span></div>
<div class="a" style="left:1122.8px;top:363.2px;width:24.2px;height:9.6px;background:#1e1e1e;line-height:9.6px;text-align:center;color:#c4c4c4;font-size:8.6px;box-shadow:0 0 0 0.6px #262626;"><span class="s">−<span style="font-size:11.5px;line-height:0;position:relative;top:0.5px">∞</span></span></div>
<div class="a" style="left:1178.5px;top:334.5px;width:2.3px;height:39.6px;background:#242424;"></div>
<div class="a" style="left:1181.6px;top:334.5px;width:2.3px;height:39.6px;background:#242424;"></div>
<div class="a" style="left:1178.5px;top:357.6px;width:2.3px;height:16.5px;background:#16f05a;"></div>
<div class="a" style="left:1181.6px;top:359px;width:2.3px;height:15.1px;background:#16f05a;"></div>
<div class="a" style="left:1178.5px;top:358px;width:2.3px;height:0.9px;background:#30c040;"></div>
<div class="a" style="left:1181.6px;top:356.6px;width:2.3px;height:0.9px;background:#30c040;"></div>
<div class="a" style="left:1005.8px;top:377.4px;width:187px;height:14.1px;background:#3a3a3a;"></div>
<div class="a" style="left:1005.8px;top:377.4px;width:85.9px;height:14.1px;background:#ff94a6;"></div>
<svg class="a" style="left:1008.2px;top:378.8px" width="11" height="11" viewBox="0 0 11 11"><circle cx="5.5" cy="5.5" r="4.6" fill="none" stroke="#1a1a1a" stroke-width="0.85"/><path d="M4.2 2.9 L4.2 8.1 L7.8 5.5 Z" fill="#1a1a1a"/></svg>
<div class="a" style="left:1025.2px;top:378.8px;width:64px;height:11px;line-height:11px;color:#1a1a1a;font-size:8.8px;white-space:nowrap;text-shadow:0 0 0.3px #1a1a1a;"><span class="s">Drone</span></div>
<div class="a" style="left:1095.8px;top:379.9px;width:37px;height:9.8px;background:#ffad56;line-height:9.8px;text-align:center;color:#111;font-weight:bold;font-size:8.8px;box-shadow:0 0 0 0.6px #1a1a1a;"><span class="s">17</span></div>
<div class="a" style="left:1137px;top:379.9px;width:16.7px;height:9.8px;background:#1e1e1e;line-height:9.8px;text-align:center;color:#d0d0d0;font-size:8.6px;box-shadow:0 0 0 0.6px #262626;"><span class="s">S</span></div>
<div class="a" style="left:1157.9px;top:379.9px;width:16.8px;height:9.8px;background:#1e1e1e;box-shadow:0 0 0 0.6px #262626;"></div>
<svg class="a" style="left:1162.3px;top:380.8px" width="8" height="8" viewBox="-4 -4 8 8"><circle cx="0" cy="0" r="2.7" fill="#747474"/></svg>
<div class="a" style="left:1178.5px;top:379.6px;width:2.3px;height:10.3px;background:#242424;"></div>
<div class="a" style="left:1181.6px;top:379.6px;width:2.3px;height:10.3px;background:#242424;"></div>
<div class="a" style="left:1178.5px;top:384.6px;width:2.3px;height:5.3px;background:#16f05a;"></div>
<div class="a" style="left:1181.6px;top:383.6px;width:2.3px;height:6.3px;background:#16f05a;"></div>
<div class="a" style="left:1005.8px;top:393.2px;width:187px;height:14.2px;background:#3a3a3a;"></div>
<div class="a" style="left:1005.8px;top:393.2px;width:85.9px;height:14.2px;background:#d86ce4;"></div>
<svg class="a" style="left:1008.2px;top:394.6px" width="11" height="11" viewBox="0 0 11 11"><circle cx="5.5" cy="5.5" r="4.6" fill="none" stroke="#1a1a1a" stroke-width="0.85"/><path d="M4.2 2.9 L4.2 8.1 L7.8 5.5 Z" fill="#1a1a1a"/></svg>
<div class="a" style="left:1025.2px;top:394.6px;width:64px;height:11px;line-height:11px;color:#1a1a1a;font-size:8.8px;white-space:nowrap;text-shadow:0 0 0.3px #1a1a1a;"><span class="s">FX</span></div>
<div class="a" style="left:1095.8px;top:395.7px;width:37px;height:9.8px;background:#ffad56;line-height:9.8px;text-align:center;color:#111;font-weight:bold;font-size:8.8px;box-shadow:0 0 0 0.6px #1a1a1a;"><span class="s">18</span></div>
<div class="a" style="left:1137px;top:395.7px;width:16.7px;height:9.8px;background:#1e1e1e;line-height:9.8px;text-align:center;color:#d0d0d0;font-size:8.6px;box-shadow:0 0 0 0.6px #262626;"><span class="s">S</span></div>
<div class="a" style="left:1157.9px;top:395.7px;width:16.8px;height:9.8px;background:#1e1e1e;box-shadow:0 0 0 0.6px #262626;"></div>
<svg class="a" style="left:1162.3px;top:396.6px" width="8" height="8" viewBox="-4 -4 8 8"><circle cx="0" cy="0" r="2.7" fill="#747474"/></svg>
<div class="a" style="left:1178.5px;top:395.4px;width:2.3px;height:10.4px;background:#242424;"></div>
<div class="a" style="left:1181.6px;top:395.4px;width:2.3px;height:10.4px;background:#242424;"></div>
<div class="a" style="left:1178.5px;top:399.6px;width:2.3px;height:6.2px;background:#16f05a;"></div>
<div class="a" style="left:1181.6px;top:398.6px;width:2.3px;height:7.2px;background:#16f05a;"></div>
<div class="a" style="left:1005.8px;top:409px;width:187px;height:14px;background:#3a3a3a;"></div>
<div class="a" style="left:1005.8px;top:409px;width:85.9px;height:14px;background:#d86ce4;"></div>
<svg class="a" style="left:1008.2px;top:410.4px" width="11" height="11" viewBox="0 0 11 11"><circle cx="5.5" cy="5.5" r="4.6" fill="none" stroke="#1a1a1a" stroke-width="0.85"/><path d="M4.2 2.9 L4.2 8.1 L7.8 5.5 Z" fill="#1a1a1a"/></svg>
<div class="a" style="left:1025.2px;top:410.4px;width:64px;height:11px;line-height:11px;color:#1a1a1a;font-size:8.8px;white-space:nowrap;text-shadow:0 0 0.3px #1a1a1a;"><span class="s">Zap</span></div>
<div class="a" style="left:1095.8px;top:411.5px;width:37px;height:9.8px;background:#ffad56;line-height:9.8px;text-align:center;color:#111;font-weight:bold;font-size:8.8px;box-shadow:0 0 0 0.6px #1a1a1a;"><span class="s">19</span></div>
<div class="a" style="left:1137px;top:411.5px;width:16.7px;height:9.8px;background:#1e1e1e;line-height:9.8px;text-align:center;color:#d0d0d0;font-size:8.6px;box-shadow:0 0 0 0.6px #262626;"><span class="s">S</span></div>
<div class="a" style="left:1157.9px;top:411.5px;width:16.8px;height:9.8px;background:#1e1e1e;box-shadow:0 0 0 0.6px #262626;"></div>
<svg class="a" style="left:1162.3px;top:412.4px" width="8" height="8" viewBox="-4 -4 8 8"><circle cx="0" cy="0" r="2.6" fill="#c8c8c8"/><path d="M-0.5 1.3 Q1 0.4 0.9 -2.4" stroke="#1e1e1e" stroke-width="0.8" fill="none"/></svg>
<div class="a" style="left:1178.5px;top:411.2px;width:2.3px;height:10.2px;background:#242424;"></div>
<div class="a" style="left:1181.6px;top:411.2px;width:2.3px;height:10.2px;background:#242424;"></div>
<div class="a" style="left:1178.5px;top:415.6px;width:2.3px;height:5.8px;background:#16f05a;"></div>
<div class="a" style="left:1181.6px;top:414.6px;width:2.3px;height:6.8px;background:#16f05a;"></div>
<div class="a" style="left:1005.8px;top:424.6px;width:187px;height:19px;background:#363636;"></div>
<div class="a" style="left:1005.8px;top:445.1px;width:187px;height:13.9px;background:#3a3a3a;"></div>
<div class="a" style="left:1005.8px;top:445.1px;width:85.9px;height:13.9px;background:#fff;"></div>
<svg class="a" style="left:1008.2px;top:446.3px" width="11" height="11" viewBox="0 0 11 11"><circle cx="5.5" cy="5.5" r="4.6" fill="none" stroke="#1a1a1a" stroke-width="0.85"/><path d="M4.2 2.9 L4.2 8.1 L7.8 5.5 Z" fill="#1a1a1a"/></svg>
<div class="a" style="left:1026.6px;top:446.1px;width:60px;height:11px;line-height:11px;color:#1a1a1a;font-size:8.8px;text-shadow:0 0 0.3px #1a1a1a;"><span class="s">Main</span></div>
<div class="a" style="left:1095.6px;top:447.5px;width:37.4px;height:9.6px;background:#1e1e1e;box-shadow:0 0 0 0.6px #262626;"></div>
<div class="a" style="left:1095.6px;top:447.5px;width:31.2px;height:9.6px;background:#03758a;"></div>
<div class="a" style="left:1095.6px;top:447.5px;width:37.4px;height:9.6px;line-height:9.6px;text-align:center;color:#b4c8cc;font-size:8.8px;"><span class="s">0</span></div>
<div class="a" style="left:1136.8px;top:447.5px;width:37.7px;height:9.6px;background:#1e1e1e;box-shadow:0 0 0 0.6px #262626;"></div>
<div class="a" style="left:1136.8px;top:447.5px;width:32px;height:9.6px;background:#3f6fc2;"></div>
<div class="a" style="left:1136.8px;top:447.5px;width:37.7px;height:9.6px;line-height:9.6px;text-align:center;color:#c4d0e4;font-size:8.8px;"><span class="s">0</span></div>
<div class="a" style="left:1178.5px;top:446.6px;width:2.3px;height:11px;background:#242424;"></div>
<div class="a" style="left:1181.6px;top:446.6px;width:2.3px;height:11px;background:#242424;"></div>
<div class="a" style="left:1178.5px;top:450.6px;width:2.3px;height:7px;background:#16f05a;"></div>
<div class="a" style="left:1181.6px;top:450.6px;width:2.3px;height:7px;background:#16f05a;"></div>
<div class="a" style="left:1178.5px;top:446.6px;width:5.4px;height:1.3px;background:#d02828;"></div>
<div class="a" style="left:1007.5px;top:43.9px;width:24px;height:10px;background:#1e1e1e;border-radius:5px;line-height:8.4px;text-align:center;color:#dcdcdc;font-size:8.8px;"><span class="s">Set</span></div>
<div class="a" style="left:1040.8px;top:43.9px;width:19.2px;height:10px;background:#1e1e1e;"></div>
<svg class="a" style="left:1040.8px;top:43.9px" width="19.2" height="10" viewBox="0 0 19.2 10"><g stroke="#dcdcdc" fill="#dcdcdc"><circle cx="7.4" cy="6.6" r="1"/><circle cx="12" cy="3.4" r="1"/><path d="M7.4 6.6 L12 3.4" stroke-width="1"/></g></svg>
<div class="a" style="left:1063.2px;top:43.9px;width:19.2px;height:10px;background:#1e1e1e;"></div>
<svg class="a" style="left:1063.2px;top:43.9px" width="19.2" height="10" viewBox="0 0 19.2 10"><rect x="6.7" y="4.7" width="5.8" height="3.5" fill="#dcdcdc"/><path d="M8.1 4.8 V3.7 Q8.1 2.3 9.6 2.3 Q11.1 2.3 11.1 3.7 V4.8" stroke="#dcdcdc" stroke-width="0.9" fill="none"/></svg>
<svg class="a" style="left:1007.8px;top:58.3px" width="10.6" height="10.6" viewBox="0 0 10.6 10.6"><circle cx="5.3" cy="5.3" r="5.2" fill="#1e1e1e"/><path d="M7.6 5.3H3.2M5.2 3.2L3 5.3L5.2 7.4" stroke="#dcdcdc" stroke-width="1.1" fill="none"/></svg>
<svg class="a" style="left:1020.9px;top:58.3px" width="10.6" height="10.6" viewBox="0 0 10.6 10.6"><circle cx="5.3" cy="5.3" r="5.2" fill="#1e1e1e"/><path d="M3 5.3H7.4M5.4 3.2L7.6 5.3L5.4 7.4" stroke="#dcdcdc" stroke-width="1.1" fill="none"/></svg>
<div class="a" style="left:1006.2px;top:464.2px;width:11.8px;height:10.3px;background:#1e1e1e;"></div>
<svg class="a" style="left:1006.2px;top:464.2px" width="11.8" height="10.3" viewBox="0 0 11.8 10.3"><path d="M3 4.4V5.9M4.4 3.2V7.1M5.9 1.8V8.5M7.4 3.2V7.1M8.8 4.4V5.9" stroke="#9a9a9a" stroke-width="1.2"/></svg>
<div class="a" style="left:1021.2px;top:464.2px;width:28.3px;height:10.3px;background:#1e1e1e;box-shadow:0 0 0 0.6px #444;line-height:10.3px;text-align:center;color:#c4c4c4;font-size:8.8px;"><span class="s">1.00x</span></div>
<div class="a" style="left:1063.8px;top:464.2px;width:12px;height:10.3px;background:#1e1e1e;line-height:10.3px;text-align:center;color:#d0d0d0;font-size:8.6px;"><span class="s">H</span></div>
<div class="a" style="left:1078.8px;top:464.2px;width:12.5px;height:10.3px;background:#1e1e1e;line-height:10.3px;text-align:center;color:#d0d0d0;font-size:8.6px;"><span class="s">W</span></div>
<div class="a" style="left:7.2px;top:479.6px;width:1185.4px;height:220.6px;background:#232323;"></div>
<div class="a" style="left:7.3px;top:480.4px;width:77.9px;height:14.5px;background:#92a7ff;line-height:14.5px;color:#1a1a1a;font-size:8.6px;padding-left:3.4px;box-sizing:border-box;white-space:nowrap;text-shadow:0 0 0.3px #1a1a1a;"><span class="s">Drums</span></div>
<svg class="a" style="left:72.2px;top:482.2px" width="11" height="11" viewBox="0 0 11 11"><circle cx="5.5" cy="5.5" r="4.6" fill="none" stroke="#1a1a1a" stroke-width="0.85"/><path d="M2.9 4.2 L8.1 4.2 L5.5 7.8 Z" fill="#1a1a1a"/></svg>
<div class="a" style="left:7.3px;top:495.6px;width:77.9px;height:204.2px;background:#3a3a3a;"></div>
<div class="a" style="left:7.3px;top:701.8px;width:77.9px;height:5.2px;background:#92a7ff;border-radius:0 0 0 3px;"></div>
<div class="a" style="left:13.6px;top:500.9px;width:28.9px;height:10.2px;background:#1e1e1e;border-radius:5.2px;line-height:9.2px;text-align:center;color:#d4d4d4;font-size:8.8px;box-shadow:0 0 0 0.5px #2a2a2a;"><span class="s">-6.44</span></div>
<div class="a" style="left:13.6px;top:515.8px;width:28.9px;height:10.4px;background:#1e1e1e;line-height:10.4px;text-align:center;color:#c8c8c8;font-size:8.8px;box-shadow:0 0 0 0.6px #2a2a2a;"><span class="s">-1.0</span></div>
<div class="a" style="left:56.2px;top:500.9px;width:10px;height:193.6px;background:#1b1b1b;border-radius:2px 2px 0 0;"></div>
<div class="a" style="left:60.9px;top:501.5px;width:0.8px;height:193px;background:#3c3c3c;"></div>
<div class="a" style="left:52px;top:505.1px;width:2.2px;height:0.8px;background:#6a6a6a;"></div>
<div class="a" style="left:52px;top:520.5px;width:2.2px;height:0.8px;background:#6a6a6a;"></div>
<div class="a" style="left:52px;top:539.8px;width:2.2px;height:0.8px;background:#6a6a6a;"></div>
<div class="a" style="left:52px;top:558.9px;width:2.2px;height:0.8px;background:#6a6a6a;"></div>
<div class="a" style="left:52px;top:577.9px;width:2.2px;height:0.8px;background:#6a6a6a;"></div>
<div class="a" style="left:52px;top:597.1px;width:2.2px;height:0.8px;background:#6a6a6a;"></div>
<div class="a" style="left:52px;top:617.3px;width:2.2px;height:0.8px;background:#6a6a6a;"></div>
<div class="a" style="left:52px;top:634.1px;width:2.2px;height:0.8px;background:#6a6a6a;"></div>
<div class="a" style="left:52px;top:649.1px;width:2.2px;height:0.8px;background:#6a6a6a;"></div>
<div class="a" style="left:52px;top:661.4px;width:2.2px;height:0.8px;background:#6a6a6a;"></div>
<div class="a" style="left:52px;top:672.9px;width:2.2px;height:0.8px;background:#6a6a6a;"></div>
<div class="a" style="left:52px;top:683.9px;width:2.2px;height:0.8px;background:#6a6a6a;"></div>
<div class="a" style="left:52px;top:691.1px;width:2.2px;height:0.8px;background:#555;"></div>
<div class="a" style="left:56.2px;top:520.2px;width:10px;height:1.35px;background:#7e7e7e;"></div>
<div class="a" style="left:56.5px;top:599px;width:4.3px;height:95.5px;background:#16f05a;"></div>
<div class="a" style="left:61.7px;top:599px;width:4.3px;height:95.5px;background:#16f05a;"></div>
<div class="a" style="left:56.5px;top:541.6px;width:4.3px;height:1px;background:#d8a018;"></div>
<div class="a" style="left:61.7px;top:542.2px;width:4.3px;height:1px;background:#d8a018;"></div>
<div class="a" style="left:69.2px;top:500.5px;width:14px;height:10px;line-height:10px;color:#b4b4b4;font-size:8.2px;"><span class="s">6</span></div>
<div class="a" style="left:69.2px;top:515.9px;width:14px;height:10px;line-height:10px;color:#b4b4b4;font-size:8.2px;"><span class="s">0</span></div>
<div class="a" style="left:69.2px;top:535.2px;width:14px;height:10px;line-height:10px;color:#b4b4b4;font-size:8.2px;"><span class="s">6</span></div>
<div class="a" style="left:69.2px;top:554.3px;width:14px;height:10px;line-height:10px;color:#b4b4b4;font-size:8.2px;"><span class="s">12</span></div>
<div class="a" style="left:69.2px;top:573.3px;width:14px;height:10px;line-height:10px;color:#b4b4b4;font-size:8.2px;"><span class="s">18</span></div>
<div class="a" style="left:69.2px;top:592.5px;width:14px;height:10px;line-height:10px;color:#b4b4b4;font-size:8.2px;"><span class="s">24</span></div>
<div class="a" style="left:69.2px;top:612.7px;width:14px;height:10px;line-height:10px;color:#b4b4b4;font-size:8.2px;"><span class="s">30</span></div>
<div class="a" style="left:69.2px;top:629.5px;width:14px;height:10px;line-height:10px;color:#b4b4b4;font-size:8.2px;"><span class="s">36</span></div>
<div class="a" style="left:69.2px;top:644.5px;width:14px;height:10px;line-height:10px;color:#b4b4b4;font-size:8.2px;"><span class="s">42</span></div>
<div class="a" style="left:69.2px;top:656.8px;width:14px;height:10px;line-height:10px;color:#b4b4b4;font-size:8.2px;"><span class="s">48</span></div>
<div class="a" style="left:69.2px;top:668.3px;width:14px;height:10px;line-height:10px;color:#b4b4b4;font-size:8.2px;"><span class="s">54</span></div>
<div class="a" style="left:69.2px;top:679.3px;width:14px;height:10px;line-height:10px;color:#b4b4b4;font-size:8.2px;"><span class="s">60</span></div>
<svg class="a" style="left:45.4px;top:518.9px" width="10" height="11.2" viewBox="0 0 10 11.2"><path d="M0.3 0.5 L9.6 5.6 L0.3 10.7 Z" fill="#c4c4c4"/></svg>
<svg class="a" style="left:15.9px;top:620px" width="24" height="28" viewBox="0 0 24 28"><path d="M7.3 24.2 A10.3 10.3 0 1 1 16.7 24.2" fill="none" stroke="#131313" stroke-width="1.7"/><path d="M12 15 V4.4" stroke="#131313" stroke-width="1.6"/><path d="M9.1 0.5 H14.9 L12 3.9 Z" fill="#131313"/></svg>
<div class="a" style="left:18.7px;top:648.8px;width:18.3px;height:17.4px;background:#ffad56;line-height:17.4px;text-align:center;color:#111;font-weight:bold;font-size:10.2px;box-shadow:0 0 0 0.6px #1c1c1c;"><span class="s">1</span></div>
<div class="a" style="left:18.7px;top:671.3px;width:18.3px;height:9.4px;background:#1e1e1e;line-height:9.4px;text-align:center;color:#d0d0d0;font-size:8.2px;box-shadow:0 0 0 0.6px #2a2a2a;"><span class="s">S</span></div>
<div class="a" style="left:18.7px;top:685.2px;width:18.3px;height:9.6px;background:#1e1e1e;box-shadow:0 0 0 0.6px #2a2a2a;"></div>
<svg class="a" style="left:23.9px;top:686px" width="8" height="8" viewBox="-4 -4 8 8"><circle cx="0" cy="0" r="2.6" fill="#c8c8c8"/><path d="M-0.5 1.3 Q1 0.4 0.9 -2.4" stroke="#1e1e1e" stroke-width="0.8" fill="none"/></svg>
<div class="a" style="left:86.4px;top:480.4px;width:77.8px;height:14.5px;background:#92a7ff;line-height:14.5px;color:#1a1a1a;font-size:8.6px;padding-left:3.4px;box-sizing:border-box;white-space:nowrap;text-shadow:0 0 0.3px #1a1a1a;"><span class="s">Breaks</span></div>
<div class="a" style="left:86.4px;top:495.6px;width:77.8px;height:204.2px;background:#3a3a3a;"></div>
<div class="a" style="left:86.4px;top:701.8px;width:77.8px;height:5.2px;background:#92a7ff;"></div>
<div class="a" style="left:92.7px;top:500.9px;width:28.9px;height:10.2px;background:#1e1e1e;border-radius:5.2px;line-height:9.2px;text-align:center;color:#d4d4d4;font-size:8.8px;box-shadow:0 0 0 0.5px #2a2a2a;"><span class="s">-10.2</span></div>
<div class="a" style="left:92.7px;top:515.8px;width:28.9px;height:10.4px;background:#1e1e1e;line-height:10.4px;text-align:center;color:#c8c8c8;font-size:8.8px;box-shadow:0 0 0 0.6px #2a2a2a;"><span class="s">-9.4</span></div>
<div class="a" style="left:135.3px;top:500.9px;width:10px;height:193.6px;background:#1b1b1b;border-radius:2px 2px 0 0;"></div>
<div class="a" style="left:140px;top:501.5px;width:0.8px;height:193px;background:#3c3c3c;"></div>
<div class="a" style="left:131.1px;top:505.1px;width:2.2px;height:0.8px;background:#6a6a6a;"></div>
<div class="a" style="left:131.1px;top:520.5px;width:2.2px;height:0.8px;background:#6a6a6a;"></div>
<div class="a" style="left:131.1px;top:539.8px;width:2.2px;height:0.8px;background:#6a6a6a;"></div>
<div class="a" style="left:131.1px;top:558.9px;width:2.2px;height:0.8px;background:#6a6a6a;"></div>
<div class="a" style="left:131.1px;top:577.9px;width:2.2px;height:0.8px;background:#6a6a6a;"></div>
<div class="a" style="left:131.1px;top:597.1px;width:2.2px;height:0.8px;background:#6a6a6a;"></div>
<div class="a" style="left:131.1px;top:617.3px;width:2.2px;height:0.8px;background:#6a6a6a;"></div>
<div class="a" style="left:131.1px;top:634.1px;width:2.2px;height:0.8px;background:#6a6a6a;"></div>
<div class="a" style="left:131.1px;top:649.1px;width:2.2px;height:0.8px;background:#6a6a6a;"></div>
<div class="a" style="left:131.1px;top:661.4px;width:2.2px;height:0.8px;background:#6a6a6a;"></div>
<div class="a" style="left:131.1px;top:672.9px;width:2.2px;height:0.8px;background:#6a6a6a;"></div>
<div class="a" style="left:131.1px;top:683.9px;width:2.2px;height:0.8px;background:#6a6a6a;"></div>
<div class="a" style="left:131.1px;top:691.1px;width:2.2px;height:0.8px;background:#555;"></div>
<div class="a" style="left:135.3px;top:520.2px;width:10px;height:1.35px;background:#7e7e7e;"></div>
<div class="a" style="left:135.6px;top:553.4px;width:4.3px;height:22.8px;background:linear-gradient(#b8a812 0%,#9c9c18 50%,#4a9e38 100%);"></div>
<div class="a" style="left:135.6px;top:553.4px;width:4.3px;height:1.3px;background:#e8d010;"></div>
<div class="a" style="left:135.6px;top:576px;width:4.3px;height:25.6px;background:#10a84a;"></div>
<div class="a" style="left:135.6px;top:601.4px;width:4.3px;height:93.1px;background:#16f05a;"></div>
<div class="a" style="left:140.8px;top:555px;width:4.3px;height:21.2px;background:linear-gradient(#b8a812 0%,#9c9c18 50%,#4a9e38 100%);"></div>
<div class="a" style="left:140.8px;top:555px;width:4.3px;height:1.3px;background:#b0a018;"></div>
<div class="a" style="left:140.8px;top:576px;width:4.3px;height:25.6px;background:#10a84a;"></div>
<div class="a" style="left:140.8px;top:601.4px;width:4.3px;height:93.1px;background:#16f05a;"></div>
<div class="a" style="left:148.3px;top:500.5px;width:14px;height:10px;line-height:10px;color:#b4b4b4;font-size:8.2px;"><span class="s">6</span></div>
<div class="a" style="left:148.3px;top:515.9px;width:14px;height:10px;line-height:10px;color:#b4b4b4;font-size:8.2px;"><span class="s">0</span></div>
<div class="a" style="left:148.3px;top:535.2px;width:14px;height:10px;line-height:10px;color:#b4b4b4;font-size:8.2px;"><span class="s">6</span></div>
<div class="a" style="left:148.3px;top:554.3px;width:14px;height:10px;line-height:10px;color:#b4b4b4;font-size:8.2px;"><span class="s">12</span></div>
<div class="a" style="left:148.3px;top:573.3px;width:14px;height:10px;line-height:10px;color:#b4b4b4;font-size:8.2px;"><span class="s">18</span></div>
<div class="a" style="left:148.3px;top:592.5px;width:14px;height:10px;line-height:10px;color:#b4b4b4;font-size:8.2px;"><span class="s">24</span></div>
<div class="a" style="left:148.3px;top:612.7px;width:14px;height:10px;line-height:10px;color:#b4b4b4;font-size:8.2px;"><span class="s">30</span></div>
<div class="a" style="left:148.3px;top:629.5px;width:14px;height:10px;line-height:10px;color:#b4b4b4;font-size:8.2px;"><span class="s">36</span></div>
<div class="a" style="left:148.3px;top:644.5px;width:14px;height:10px;line-height:10px;color:#b4b4b4;font-size:8.2px;"><span class="s">42</span></div>
<div class="a" style="left:148.3px;top:656.8px;width:14px;height:10px;line-height:10px;color:#b4b4b4;font-size:8.2px;"><span class="s">48</span></div>
<div class="a" style="left:148.3px;top:668.3px;width:14px;height:10px;line-height:10px;color:#b4b4b4;font-size:8.2px;"><span class="s">54</span></div>
<div class="a" style="left:148.3px;top:679.3px;width:14px;height:10px;line-height:10px;color:#b4b4b4;font-size:8.2px;"><span class="s">60</span></div>
<svg class="a" style="left:124.5px;top:545.2px" width="10" height="11.2" viewBox="0 0 10 11.2"><path d="M0.3 0.5 L9.6 5.6 L0.3 10.7 Z" fill="#c4c4c4"/></svg>
<svg class="a" style="left:95px;top:620px" width="24" height="28" viewBox="0 0 24 28"><path d="M7.3 24.2 A10.3 10.3 0 1 1 16.7 24.2" fill="none" stroke="#131313" stroke-width="1.7"/><path d="M12 15 V4.4" stroke="#131313" stroke-width="1.6"/><path d="M9.1 0.5 H14.9 L12 3.9 Z" fill="#131313"/></svg>
<div class="a" style="left:97.8px;top:648.8px;width:18.3px;height:17.4px;background:#ffad56;line-height:17.4px;text-align:center;color:#111;font-weight:bold;font-size:10.2px;box-shadow:0 0 0 0.6px #1c1c1c;"><span class="s">2</span></div>
<div class="a" style="left:97.8px;top:671.3px;width:18.3px;height:9.4px;background:#1e1e1e;line-height:9.4px;text-align:center;color:#d0d0d0;font-size:8.2px;box-shadow:0 0 0 0.6px #2a2a2a;"><span class="s">S</span></div>
<div class="a" style="left:97.8px;top:685.2px;width:18.3px;height:9.6px;background:#1e1e1e;box-shadow:0 0 0 0.6px #2a2a2a;"></div>
<svg class="a" style="left:103px;top:686px" width="8" height="8" viewBox="-4 -4 8 8"><circle cx="0" cy="0" r="2.7" fill="#747474"/></svg>
<div class="a" style="left:165.9px;top:480.4px;width:77.4px;height:14.5px;background:#8bc5ff;line-height:14.5px;color:#1a1a1a;font-size:8.6px;padding-left:3.4px;box-sizing:border-box;white-space:nowrap;text-shadow:0 0 0.3px #1a1a1a;"><span class="s">Percussion</span></div>
<svg class="a" style="left:230.3px;top:482.2px" width="11" height="11" viewBox="0 0 11 11"><circle cx="5.5" cy="5.5" r="4.6" fill="none" stroke="#1a1a1a" stroke-width="0.85"/><path d="M3.1 3.9H7.9M3.1 5.5H7.9M3.1 7.1H7.9" stroke="#1a1a1a" stroke-width="0.9"/></svg>
<div class="a" style="left:165.9px;top:495.6px;width:77.4px;height:204.2px;background:#3a3a3a;"></div>
<div class="a" style="left:165.9px;top:701.8px;width:77.4px;height:5.2px;background:#8bc5ff;"></div>
<div class="a" style="left:172.2px;top:500.9px;width:28.9px;height:10.2px;background:#1e1e1e;border-radius:5.2px;line-height:9.2px;text-align:center;color:#d4d4d4;font-size:8.8px;box-shadow:0 0 0 0.5px #2a2a2a;"><span class="s">-21.2</span></div>
<div class="a" style="left:172.2px;top:515.8px;width:28.9px;height:10.4px;background:#1e1e1e;line-height:10.4px;text-align:center;color:#c8c8c8;font-size:8.8px;box-shadow:0 0 0 0.6px #2a2a2a;"><span class="s">0</span></div>
<div class="a" style="left:214.8px;top:500.9px;width:10px;height:193.6px;background:#1b1b1b;border-radius:2px 2px 0 0;"></div>
<div class="a" style="left:219.5px;top:501.5px;width:0.8px;height:193px;background:#3c3c3c;"></div>
<div class="a" style="left:210.6px;top:505.1px;width:2.2px;height:0.8px;background:#6a6a6a;"></div>
<div class="a" style="left:210.6px;top:520.5px;width:2.2px;height:0.8px;background:#6a6a6a;"></div>
<div class="a" style="left:210.6px;top:539.8px;width:2.2px;height:0.8px;background:#6a6a6a;"></div>
<div class="a" style="left:210.6px;top:558.9px;width:2.2px;height:0.8px;background:#6a6a6a;"></div>
<div class="a" style="left:210.6px;top:577.9px;width:2.2px;height:0.8px;background:#6a6a6a;"></div>
<div class="a" style="left:210.6px;top:597.1px;width:2.2px;height:0.8px;background:#6a6a6a;"></div>
<div class="a" style="left:210.6px;top:617.3px;width:2.2px;height:0.8px;background:#6a6a6a;"></div>
<div class="a" style="left:210.6px;top:634.1px;width:2.2px;height:0.8px;background:#6a6a6a;"></div>
<div class="a" style="left:210.6px;top:649.1px;width:2.2px;height:0.8px;background:#6a6a6a;"></div>
<div class="a" style="left:210.6px;top:661.4px;width:2.2px;height:0.8px;background:#6a6a6a;"></div>
<div class="a" style="left:210.6px;top:672.9px;width:2.2px;height:0.8px;background:#6a6a6a;"></div>
<div class="a" style="left:210.6px;top:683.9px;width:2.2px;height:0.8px;background:#6a6a6a;"></div>
<div class="a" style="left:210.6px;top:691.1px;width:2.2px;height:0.8px;background:#555;"></div>
<div class="a" style="left:214.8px;top:520.2px;width:10px;height:1.35px;background:#7e7e7e;"></div>
<div class="a" style="left:215.1px;top:649px;width:4.3px;height:12.9px;background:#10a84a;"></div>
<div class="a" style="left:215.1px;top:661.7px;width:4.3px;height:32.8px;background:#16f05a;"></div>
<div class="a" style="left:220.3px;top:655px;width:4.3px;height:13.1px;background:#10a84a;"></div>
<div class="a" style="left:220.3px;top:667.9px;width:4.3px;height:26.6px;background:#16f05a;"></div>
<div class="a" style="left:215.1px;top:589px;width:4.3px;height:1px;background:#18c048;"></div>
<div class="a" style="left:220.3px;top:617.8px;width:4.3px;height:1px;background:#18c048;"></div>
<div class="a" style="left:227.8px;top:500.5px;width:14px;height:10px;line-height:10px;color:#b4b4b4;font-size:8.2px;"><span class="s">6</span></div>
<div class="a" style="left:227.8px;top:515.9px;width:14px;height:10px;line-height:10px;color:#b4b4b4;font-size:8.2px;"><span class="s">0</span></div>
<div class="a" style="left:227.8px;top:535.2px;width:14px;height:10px;line-height:10px;color:#b4b4b4;font-size:8.2px;"><span class="s">6</span></div>
<div class="a" style="left:227.8px;top:554.3px;width:14px;height:10px;line-height:10px;color:#b4b4b4;font-size:8.2px;"><span class="s">12</span></div>
<div class="a" style="left:227.8px;top:573.3px;width:14px;height:10px;line-height:10px;color:#b4b4b4;font-size:8.2px;"><span class="s">18</span></div>
<div class="a" style="left:227.8px;top:592.5px;width:14px;height:10px;line-height:10px;color:#b4b4b4;font-size:8.2px;"><span class="s">24</span></div>
<div class="a" style="left:227.8px;top:612.7px;width:14px;height:10px;line-height:10px;color:#b4b4b4;font-size:8.2px;"><span class="s">30</span></div>
<div class="a" style="left:227.8px;top:629.5px;width:14px;height:10px;line-height:10px;color:#b4b4b4;font-size:8.2px;"><span class="s">36</span></div>
<div class="a" style="left:227.8px;top:644.5px;width:14px;height:10px;line-height:10px;color:#b4b4b4;font-size:8.2px;"><span class="s">42</span></div>
<div class="a" style="left:227.8px;top:656.8px;width:14px;height:10px;line-height:10px;color:#b4b4b4;font-size:8.2px;"><span class="s">48</span></div>
<div class="a" style="left:227.8px;top:668.3px;width:14px;height:10px;line-height:10px;color:#b4b4b4;font-size:8.2px;"><span class="s">54</span></div>
<div class="a" style="left:227.8px;top:679.3px;width:14px;height:10px;line-height:10px;color:#b4b4b4;font-size:8.2px;"><span class="s">60</span></div>
<svg class="a" style="left:204px;top:515.2px" width="10" height="11.2" viewBox="0 0 10 11.2"><path d="M0.3 0.5 L9.6 5.6 L0.3 10.7 Z" fill="#c4c4c4"/></svg>
<svg class="a" style="left:174.5px;top:620px" width="24" height="28" viewBox="0 0 24 28"><path d="M7.3 24.2 A10.3 10.3 0 1 1 16.7 24.2" fill="none" stroke="#131313" stroke-width="1.7"/><path d="M12 15 V4.4" stroke="#131313" stroke-width="1.6"/><path d="M9.1 0.5 H14.9 L12 3.9 Z" fill="#131313"/></svg>
<div class="a" style="left:177.3px;top:648.8px;width:18.3px;height:17.4px;background:#ffad56;line-height:17.4px;text-align:center;color:#111;font-weight:bold;font-size:10.2px;box-shadow:0 0 0 0.6px #1c1c1c;"><span class="s">3</span></div>
<div class="a" style="left:177.3px;top:671.3px;width:18.3px;height:9.4px;background:#1e1e1e;line-height:9.4px;text-align:center;color:#d0d0d0;font-size:8.2px;box-shadow:0 0 0 0.6px #2a2a2a;"><span class="s">S</span></div>
<div class="a" style="left:245px;top:480.4px;width:77.4px;height:14.5px;background:#5cffe8;line-height:14.5px;color:#1a1a1a;font-size:8.6px;padding-left:3.4px;box-sizing:border-box;white-space:nowrap;text-shadow:0 0 0.3px #1a1a1a;"><span class="s">Bass</span></div>
<div class="a" style="left:245px;top:495.6px;width:77.4px;height:204.2px;background:#4b4b4b;"></div>
<div class="a" style="left:245px;top:701.8px;width:77.4px;height:5.2px;background:#5cffe8;"></div>
<div class="a" style="left:251.3px;top:500.9px;width:28.9px;height:10.2px;background:#1e1e1e;border-radius:5.2px;line-height:9.2px;text-align:center;color:#d4d4d4;font-size:8.8px;box-shadow:0 0 0 0.5px #2a2a2a;"><span class="s">-10.8</span></div>
<div class="a" style="left:251.3px;top:515.8px;width:28.9px;height:10.4px;background:#1e1e1e;line-height:10.4px;text-align:center;color:#c8c8c8;font-size:8.8px;box-shadow:0 0 0 0.6px #2a2a2a;"><span class="s">-7.7</span></div>
<div class="a" style="left:293.9px;top:500.9px;width:10px;height:193.6px;background:#1b1b1b;border-radius:2px 2px 0 0;"></div>
<div class="a" style="left:298.6px;top:501.5px;width:0.8px;height:193px;background:#3c3c3c;"></div>
<div class="a" style="left:289.7px;top:505.1px;width:2.2px;height:0.8px;background:#6a6a6a;"></div>
<div class="a" style="left:289.7px;top:520.5px;width:2.2px;height:0.8px;background:#6a6a6a;"></div>
<div class="a" style="left:289.7px;top:539.8px;width:2.2px;height:0.8px;background:#6a6a6a;"></div>
<div class="a" style="left:289.7px;top:558.9px;width:2.2px;height:0.8px;background:#6a6a6a;"></div>
<div class="a" style="left:289.7px;top:577.9px;width:2.2px;height:0.8px;background:#6a6a6a;"></div>
<div class="a" style="left:289.7px;top:597.1px;width:2.2px;height:0.8px;background:#6a6a6a;"></div>
<div class="a" style="left:289.7px;top:617.3px;width:2.2px;height:0.8px;background:#6a6a6a;"></div>
<div class="a" style="left:289.7px;top:634.1px;width:2.2px;height:0.8px;background:#6a6a6a;"></div>
<div class="a" style="left:289.7px;top:649.1px;width:2.2px;height:0.8px;background:#6a6a6a;"></div>
<div class="a" style="left:289.7px;top:661.4px;width:2.2px;height:0.8px;background:#6a6a6a;"></div>
<div class="a" style="left:289.7px;top:672.9px;width:2.2px;height:0.8px;background:#6a6a6a;"></div>
<div class="a" style="left:289.7px;top:683.9px;width:2.2px;height:0.8px;background:#6a6a6a;"></div>
<div class="a" style="left:289.7px;top:691.1px;width:2.2px;height:0.8px;background:#555;"></div>
<div class="a" style="left:293.9px;top:520.2px;width:10px;height:1.35px;background:#7e7e7e;"></div>
<div class="a" style="left:294.2px;top:587.3px;width:4.3px;height:107.2px;background:#16f05a;"></div>
<div class="a" style="left:299.4px;top:587.3px;width:4.3px;height:107.2px;background:#16f05a;"></div>
<div class="a" style="left:294.2px;top:556px;width:4.3px;height:1px;background:#d8b018;"></div>
<div class="a" style="left:299.4px;top:555.4px;width:4.3px;height:1px;background:#d8b018;"></div>
<div class="a" style="left:306.9px;top:500.5px;width:14px;height:10px;line-height:10px;color:#b4b4b4;font-size:8.2px;"><span class="s">6</span></div>
<div class="a" style="left:306.9px;top:515.9px;width:14px;height:10px;line-height:10px;color:#b4b4b4;font-size:8.2px;"><span class="s">0</span></div>
<div class="a" style="left:306.9px;top:535.2px;width:14px;height:10px;line-height:10px;color:#b4b4b4;font-size:8.2px;"><span class="s">6</span></div>
<div class="a" style="left:306.9px;top:554.3px;width:14px;height:10px;line-height:10px;color:#b4b4b4;font-size:8.2px;"><span class="s">12</span></div>
<div class="a" style="left:306.9px;top:573.3px;width:14px;height:10px;line-height:10px;color:#b4b4b4;font-size:8.2px;"><span class="s">18</span></div>
<div class="a" style="left:306.9px;top:592.5px;width:14px;height:10px;line-height:10px;color:#b4b4b4;font-size:8.2px;"><span class="s">24</span></div>
<div class="a" style="left:306.9px;top:612.7px;width:14px;height:10px;line-height:10px;color:#b4b4b4;font-size:8.2px;"><span class="s">30</span></div>
<div class="a" style="left:306.9px;top:629.5px;width:14px;height:10px;line-height:10px;color:#b4b4b4;font-size:8.2px;"><span class="s">36</span></div>
<div class="a" style="left:306.9px;top:644.5px;width:14px;height:10px;line-height:10px;color:#b4b4b4;font-size:8.2px;"><span class="s">42</span></div>
<div class="a" style="left:306.9px;top:656.8px;width:14px;height:10px;line-height:10px;color:#b4b4b4;font-size:8.2px;"><span class="s">48</span></div>
<div class="a" style="left:306.9px;top:668.3px;width:14px;height:10px;line-height:10px;color:#b4b4b4;font-size:8.2px;"><span class="s">54</span></div>
<div class="a" style="left:306.9px;top:679.3px;width:14px;height:10px;line-height:10px;color:#b4b4b4;font-size:8.2px;"><span class="s">60</span></div>
<svg class="a" style="left:283.1px;top:540.4px" width="10" height="11.2" viewBox="0 0 10 11.2"><path d="M0.3 0.5 L9.6 5.6 L0.3 10.7 Z" fill="#c4c4c4"/></svg>
<svg class="a" style="left:253.6px;top:620px" width="24" height="28" viewBox="0 0 24 28"><path d="M7.3 24.2 A10.3 10.3 0 1 1 16.7 24.2" fill="none" stroke="#131313" stroke-width="1.7"/><path d="M12 15 V4.4" stroke="#131313" stroke-width="1.6"/><path d="M9.1 0.5 H14.9 L12 3.9 Z" fill="#131313"/></svg>
<div class="a" style="left:256.4px;top:648.8px;width:18.3px;height:17.4px;background:#ffad56;line-height:17.4px;text-align:center;color:#111;font-weight:bold;font-size:10.2px;box-shadow:0 0 0 0.6px #1c1c1c;"><span class="s">8</span></div>
<div class="a" style="left:256.4px;top:671.3px;width:18.3px;height:9.4px;background:#1e1e1e;line-height:9.4px;text-align:center;color:#d0d0d0;font-size:8.2px;box-shadow:0 0 0 0.6px #2a2a2a;"><span class="s">S</span></div>
<div class="a" style="left:256.4px;top:685.2px;width:18.3px;height:9.6px;background:#1e1e1e;box-shadow:0 0 0 0.6px #2a2a2a;"></div>
<svg class="a" style="left:261.6px;top:686px" width="8" height="8" viewBox="-4 -4 8 8"><circle cx="0" cy="0" r="2.6" fill="#c8c8c8"/><path d="M-0.5 1.3 Q1 0.4 0.9 -2.4" stroke="#1e1e1e" stroke-width="0.8" fill="none"/></svg>
<div class="a" style="left:324.1px;top:480.4px;width:77.4px;height:14.5px;background:#5cffe8;line-height:14.5px;color:#1a1a1a;font-size:8.6px;padding-left:3.4px;box-sizing:border-box;white-space:nowrap;text-shadow:0 0 0.3px #1a1a1a;"><span class="s">Bass Drop</span></div>
<svg class="a" style="left:388.5px;top:482.2px" width="11" height="11" viewBox="0 0 11 11"><circle cx="5.5" cy="5.5" r="4.6" fill="none" stroke="#1a1a1a" stroke-width="0.85"/><path d="M2.9 4.2 L8.1 4.2 L5.5 7.8 Z" fill="#1a1a1a"/></svg>
<div class="a" style="left:324.1px;top:495.6px;width:77.4px;height:204.2px;background:#3a3a3a;"></div>
<div class="a" style="left:324.1px;top:701.8px;width:77.4px;height:5.2px;background:#5cffe8;"></div>
<div class="a" style="left:330.4px;top:500.9px;width:28.9px;height:10.2px;background:#1e1e1e;border-radius:5.2px;line-height:9.2px;text-align:center;color:#d4d4d4;font-size:8.8px;box-shadow:0 0 0 0.5px #2a2a2a;"><span class="s">−<span style="font-size:11.5px;line-height:0;position:relative;top:0.5px">∞</span></span></div>
<div class="a" style="left:330.4px;top:515.8px;width:28.9px;height:10.4px;background:#1e1e1e;line-height:10.4px;text-align:center;color:#c8c8c8;font-size:8.8px;box-shadow:0 0 0 0.6px #2a2a2a;"><span class="s">-0.2</span></div>
<div class="a" style="left:373px;top:500.9px;width:10px;height:193.6px;background:#1b1b1b;border-radius:2px 2px 0 0;"></div>
<div class="a" style="left:377.7px;top:501.5px;width:0.8px;height:193px;background:#3c3c3c;"></div>
<div class="a" style="left:368.8px;top:505.1px;width:2.2px;height:0.8px;background:#6a6a6a;"></div>
<div class="a" style="left:368.8px;top:520.5px;width:2.2px;height:0.8px;background:#6a6a6a;"></div>
<div class="a" style="left:368.8px;top:539.8px;width:2.2px;height:0.8px;background:#6a6a6a;"></div>
<div class="a" style="left:368.8px;top:558.9px;width:2.2px;height:0.8px;background:#6a6a6a;"></div>
<div class="a" style="left:368.8px;top:577.9px;width:2.2px;height:0.8px;background:#6a6a6a;"></div>
<div class="a" style="left:368.8px;top:597.1px;width:2.2px;height:0.8px;background:#6a6a6a;"></div>
<div class="a" style="left:368.8px;top:617.3px;width:2.2px;height:0.8px;background:#6a6a6a;"></div>
<div class="a" style="left:368.8px;top:634.1px;width:2.2px;height:0.8px;background:#6a6a6a;"></div>
<div class="a" style="left:368.8px;top:649.1px;width:2.2px;height:0.8px;background:#6a6a6a;"></div>
<div class="a" style="left:368.8px;top:661.4px;width:2.2px;height:0.8px;background:#6a6a6a;"></div>
<div class="a" style="left:368.8px;top:672.9px;width:2.2px;height:0.8px;background:#6a6a6a;"></div>
<div class="a" style="left:368.8px;top:683.9px;width:2.2px;height:0.8px;background:#6a6a6a;"></div>
<div class="a" style="left:368.8px;top:691.1px;width:2.2px;height:0.8px;background:#555;"></div>
<div class="a" style="left:373px;top:520.2px;width:10px;height:1.35px;background:#7e7e7e;"></div>
<div class="a" style="left:386px;top:500.5px;width:14px;height:10px;line-height:10px;color:#b4b4b4;font-size:8.2px;"><span class="s">6</span></div>
<div class="a" style="left:386px;top:515.9px;width:14px;height:10px;line-height:10px;color:#b4b4b4;font-size:8.2px;"><span class="s">0</span></div>
<div class="a" style="left:386px;top:535.2px;width:14px;height:10px;line-height:10px;color:#b4b4b4;font-size:8.2px;"><span class="s">6</span></div>
<div class="a" style="left:386px;top:554.3px;width:14px;height:10px;line-height:10px;color:#b4b4b4;font-size:8.2px;"><span class="s">12</span></div>
<div class="a" style="left:386px;top:573.3px;width:14px;height:10px;line-height:10px;color:#b4b4b4;font-size:8.2px;"><span class="s">18</span></div>
<div class="a" style="left:386px;top:592.5px;width:14px;height:10px;line-height:10px;color:#b4b4b4;font-size:8.2px;"><span class="s">24</span></div>
<div class="a" style="left:386px;top:612.7px;width:14px;height:10px;line-height:10px;color:#b4b4b4;font-size:8.2px;"><span class="s">30</span></div>
<div class="a" style="left:386px;top:629.5px;width:14px;height:10px;line-height:10px;color:#b4b4b4;font-size:8.2px;"><span class="s">36</span></div>
<div class="a" style="left:386px;top:644.5px;width:14px;height:10px;line-height:10px;color:#b4b4b4;font-size:8.2px;"><span class="s">42</span></div>
<div class="a" style="left:386px;top:656.8px;width:14px;height:10px;line-height:10px;color:#b4b4b4;font-size:8.2px;"><span class="s">48</span></div>
<div class="a" style="left:386px;top:668.3px;width:14px;height:10px;line-height:10px;color:#b4b4b4;font-size:8.2px;"><span class="s">54</span></div>
<div class="a" style="left:386px;top:679.3px;width:14px;height:10px;line-height:10px;color:#b4b4b4;font-size:8.2px;"><span class="s">60</span></div>
<svg class="a" style="left:362.2px;top:516.4px" width="10" height="11.2" viewBox="0 0 10 11.2"><path d="M0.3 0.5 L9.6 5.6 L0.3 10.7 Z" fill="#c4c4c4"/></svg>
<svg class="a" style="left:332.7px;top:620px" width="24" height="28" viewBox="0 0 24 28"><path d="M7.3 24.2 A10.3 10.3 0 1 1 16.7 24.2" fill="none" stroke="#131313" stroke-width="1.7"/><path d="M12 15 V4.4" stroke="#131313" stroke-width="1.6"/><path d="M9.1 0.5 H14.9 L12 3.9 Z" fill="#131313"/></svg>
<div class="a" style="left:335.5px;top:648.8px;width:18.3px;height:17.4px;background:#ffad56;line-height:17.4px;text-align:center;color:#111;font-weight:bold;font-size:10.2px;box-shadow:0 0 0 0.6px #1c1c1c;"><span class="s">9</span></div>
<div class="a" style="left:335.5px;top:671.3px;width:18.3px;height:9.4px;background:#1e1e1e;line-height:9.4px;text-align:center;color:#d0d0d0;font-size:8.2px;box-shadow:0 0 0 0.6px #2a2a2a;"><span class="s">S</span></div>
<div class="a" style="left:335.5px;top:685.2px;width:18.3px;height:9.6px;background:#1e1e1e;box-shadow:0 0 0 0.6px #2a2a2a;"></div>
<svg class="a" style="left:340.7px;top:686px" width="8" height="8" viewBox="-4 -4 8 8"><circle cx="0" cy="0" r="2.6" fill="#c8c8c8"/><path d="M-0.5 1.3 Q1 0.4 0.9 -2.4" stroke="#1e1e1e" stroke-width="0.8" fill="none"/></svg>
<div class="a" style="left:403.2px;top:480.4px;width:77.4px;height:14.5px;background:#edffae;line-height:14.5px;color:#1a1a1a;font-size:8.6px;padding-left:3.4px;box-sizing:border-box;white-space:nowrap;text-shadow:0 0 0.3px #1a1a1a;"><span class="s">Synth Riser</span></div>
<svg class="a" style="left:467.6px;top:482.2px" width="11" height="11" viewBox="0 0 11 11"><circle cx="5.5" cy="5.5" r="4.6" fill="none" stroke="#1a1a1a" stroke-width="0.85"/><path d="M2.9 4.2 L8.1 4.2 L5.5 7.8 Z" fill="#1a1a1a"/></svg>
<div class="a" style="left:403.2px;top:495.6px;width:77.4px;height:204.2px;background:#3a3a3a;"></div>
<div class="a" style="left:403.2px;top:701.8px;width:77.4px;height:5.2px;background:#edffae;"></div>
<div class="a" style="left:409.5px;top:500.9px;width:28.9px;height:10.2px;background:#1e1e1e;border-radius:5.2px;line-height:9.2px;text-align:center;color:#d4d4d4;font-size:8.8px;box-shadow:0 0 0 0.5px #2a2a2a;"><span class="s">-28.2</span></div>
<div class="a" style="left:409.5px;top:515.8px;width:28.9px;height:10.4px;background:#1e1e1e;line-height:10.4px;text-align:center;color:#c8c8c8;font-size:8.8px;box-shadow:0 0 0 0.6px #2a2a2a;"><span class="s">-18.0</span></div>
<div class="a" style="left:452.1px;top:500.9px;width:10px;height:193.6px;background:#1b1b1b;border-radius:2px 2px 0 0;"></div>
<div class="a" style="left:456.8px;top:501.5px;width:0.8px;height:193px;background:#3c3c3c;"></div>
<div class="a" style="left:447.9px;top:505.1px;width:2.2px;height:0.8px;background:#6a6a6a;"></div>
<div class="a" style="left:447.9px;top:520.5px;width:2.2px;height:0.8px;background:#6a6a6a;"></div>
<div class="a" style="left:447.9px;top:539.8px;width:2.2px;height:0.8px;background:#6a6a6a;"></div>
<div class="a" style="left:447.9px;top:558.9px;width:2.2px;height:0.8px;background:#6a6a6a;"></div>
<div class="a" style="left:447.9px;top:577.9px;width:2.2px;height:0.8px;background:#6a6a6a;"></div>
<div class="a" style="left:447.9px;top:597.1px;width:2.2px;height:0.8px;background:#6a6a6a;"></div>
<div class="a" style="left:447.9px;top:617.3px;width:2.2px;height:0.8px;background:#6a6a6a;"></div>
<div class="a" style="left:447.9px;top:634.1px;width:2.2px;height:0.8px;background:#6a6a6a;"></div>
<div class="a" style="left:447.9px;top:649.1px;width:2.2px;height:0.8px;background:#6a6a6a;"></div>
<div class="a" style="left:447.9px;top:661.4px;width:2.2px;height:0.8px;background:#6a6a6a;"></div>
<div class="a" style="left:447.9px;top:672.9px;width:2.2px;height:0.8px;background:#6a6a6a;"></div>
<div class="a" style="left:447.9px;top:683.9px;width:2.2px;height:0.8px;background:#6a6a6a;"></div>
<div class="a" style="left:447.9px;top:691.1px;width:2.2px;height:0.8px;background:#555;"></div>
<div class="a" style="left:452.1px;top:520.2px;width:10px;height:1.35px;background:#7e7e7e;"></div>
<div class="a" style="left:452.4px;top:624.3px;width:4.3px;height:12.9px;background:#10a84a;"></div>
<div class="a" style="left:452.4px;top:637px;width:4.3px;height:57.5px;background:#16f05a;"></div>
<div class="a" style="left:457.6px;top:621.8px;width:4.3px;height:15.4px;background:#10a84a;"></div>
<div class="a" style="left:457.6px;top:637px;width:4.3px;height:57.5px;background:#16f05a;"></div>
<div class="a" style="left:452.4px;top:613.4px;width:4.3px;height:1px;background:#18d050;"></div>
<div class="a" style="left:457.6px;top:610.9px;width:4.3px;height:1px;background:#18d050;"></div>
<div class="a" style="left:465.1px;top:500.5px;width:14px;height:10px;line-height:10px;color:#b4b4b4;font-size:8.2px;"><span class="s">6</span></div>
<div class="a" style="left:465.1px;top:515.9px;width:14px;height:10px;line-height:10px;color:#b4b4b4;font-size:8.2px;"><span class="s">0</span></div>
<div class="a" style="left:465.1px;top:535.2px;width:14px;height:10px;line-height:10px;color:#b4b4b4;font-size:8.2px;"><span class="s">6</span></div>
<div class="a" style="left:465.1px;top:554.3px;width:14px;height:10px;line-height:10px;color:#b4b4b4;font-size:8.2px;"><span class="s">12</span></div>
<div class="a" style="left:465.1px;top:573.3px;width:14px;height:10px;line-height:10px;color:#b4b4b4;font-size:8.2px;"><span class="s">18</span></div>
<div class="a" style="left:465.1px;top:592.5px;width:14px;height:10px;line-height:10px;color:#b4b4b4;font-size:8.2px;"><span class="s">24</span></div>
<div class="a" style="left:465.1px;top:612.7px;width:14px;height:10px;line-height:10px;color:#b4b4b4;font-size:8.2px;"><span class="s">30</span></div>
<div class="a" style="left:465.1px;top:629.5px;width:14px;height:10px;line-height:10px;color:#b4b4b4;font-size:8.2px;"><span class="s">36</span></div>
<div class="a" style="left:465.1px;top:644.5px;width:14px;height:10px;line-height:10px;color:#b4b4b4;font-size:8.2px;"><span class="s">42</span></div>
<div class="a" style="left:465.1px;top:656.8px;width:14px;height:10px;line-height:10px;color:#b4b4b4;font-size:8.2px;"><span class="s">48</span></div>
<div class="a" style="left:465.1px;top:668.3px;width:14px;height:10px;line-height:10px;color:#b4b4b4;font-size:8.2px;"><span class="s">54</span></div>
<div class="a" style="left:465.1px;top:679.3px;width:14px;height:10px;line-height:10px;color:#b4b4b4;font-size:8.2px;"><span class="s">60</span></div>
<svg class="a" style="left:441.3px;top:572.6px" width="10" height="11.2" viewBox="0 0 10 11.2"><path d="M0.3 0.5 L9.6 5.6 L0.3 10.7 Z" fill="#c4c4c4"/></svg>
<svg class="a" style="left:411.8px;top:620px" width="24" height="28" viewBox="0 0 24 28"><path d="M7.3 24.2 A10.3 10.3 0 1 1 16.7 24.2" fill="none" stroke="#131313" stroke-width="1.7"/><path d="M12 15 V4.4" stroke="#131313" stroke-width="1.6"/><path d="M9.1 0.5 H14.9 L12 3.9 Z" fill="#131313"/></svg>
<div class="a" style="left:414.6px;top:648.8px;width:18.3px;height:17.4px;background:#ffad56;line-height:17.4px;text-align:center;color:#111;font-weight:bold;font-size:10.2px;box-shadow:0 0 0 0.6px #1c1c1c;"><span class="s">10</span></div>
<div class="a" style="left:414.6px;top:671.3px;width:18.3px;height:9.4px;background:#1e1e1e;line-height:9.4px;text-align:center;color:#d0d0d0;font-size:8.2px;box-shadow:0 0 0 0.6px #2a2a2a;"><span class="s">S</span></div>
<div class="a" style="left:414.6px;top:685.2px;width:18.3px;height:9.6px;background:#1e1e1e;box-shadow:0 0 0 0.6px #2a2a2a;"></div>
<svg class="a" style="left:419.8px;top:686px" width="8" height="8" viewBox="-4 -4 8 8"><circle cx="0" cy="0" r="2.6" fill="#c8c8c8"/><path d="M-0.5 1.3 Q1 0.4 0.9 -2.4" stroke="#1e1e1e" stroke-width="0.8" fill="none"/></svg>
<div class="a" style="left:482.3px;top:480.4px;width:77.4px;height:14.5px;background:#f7f47c;line-height:14.5px;color:#1a1a1a;font-size:8.6px;padding-left:3.4px;box-sizing:border-box;white-space:nowrap;text-shadow:0 0 0.3px #1a1a1a;"><span class="s">Keys</span></div>
<div class="a" style="left:482.3px;top:495.6px;width:77.4px;height:204.2px;background:#3a3a3a;"></div>
<div class="a" style="left:482.3px;top:701.8px;width:77.4px;height:5.2px;background:#f7f47c;"></div>
<div class="a" style="left:488.6px;top:500.9px;width:28.9px;height:10.2px;background:#1e1e1e;border-radius:5.2px;line-height:9.2px;text-align:center;color:#d4d4d4;font-size:8.8px;box-shadow:0 0 0 0.5px #2a2a2a;"><span class="s">-16.0</span></div>
<div class="a" style="left:488.6px;top:515.8px;width:28.9px;height:10.4px;background:#1e1e1e;line-height:10.4px;text-align:center;color:#c8c8c8;font-size:8.8px;box-shadow:0 0 0 0.6px #2a2a2a;"><span class="s">-6.6</span></div>
<div class="a" style="left:531.2px;top:500.9px;width:10px;height:193.6px;background:#1b1b1b;border-radius:2px 2px 0 0;"></div>
<div class="a" style="left:535.9px;top:501.5px;width:0.8px;height:193px;background:#3c3c3c;"></div>
<div class="a" style="left:527px;top:505.1px;width:2.2px;height:0.8px;background:#6a6a6a;"></div>
<div class="a" style="left:527px;top:520.5px;width:2.2px;height:0.8px;background:#6a6a6a;"></div>
<div class="a" style="left:527px;top:539.8px;width:2.2px;height:0.8px;background:#6a6a6a;"></div>
<div class="a" style="left:527px;top:558.9px;width:2.2px;height:0.8px;background:#6a6a6a;"></div>
<div class="a" style="left:527px;top:577.9px;width:2.2px;height:0.8px;background:#6a6a6a;"></div>
<div class="a" style="left:527px;top:597.1px;width:2.2px;height:0.8px;background:#6a6a6a;"></div>
<div class="a" style="left:527px;top:617.3px;width:2.2px;height:0.8px;background:#6a6a6a;"></div>
<div class="a" style="left:527px;top:634.1px;width:2.2px;height:0.8px;background:#6a6a6a;"></div>
<div class="a" style="left:527px;top:649.1px;width:2.2px;height:0.8px;background:#6a6a6a;"></div>
<div class="a" style="left:527px;top:661.4px;width:2.2px;height:0.8px;background:#6a6a6a;"></div>
<div class="a" style="left:527px;top:672.9px;width:2.2px;height:0.8px;background:#6a6a6a;"></div>
<div class="a" style="left:527px;top:683.9px;width:2.2px;height:0.8px;background:#6a6a6a;"></div>
<div class="a" style="left:527px;top:691.1px;width:2.2px;height:0.8px;background:#555;"></div>
<div class="a" style="left:531.2px;top:520.2px;width:10px;height:1.35px;background:#7e7e7e;"></div>
<div class="a" style="left:531.5px;top:692px;width:4.3px;height:2.5px;background:#16f05a;"></div>
<div class="a" style="left:536.7px;top:692px;width:4.3px;height:2.5px;background:#16f05a;"></div>
<div class="a" style="left:531.5px;top:589.4px;width:4.3px;height:1px;background:#48c030;"></div>
<div class="a" style="left:536.7px;top:572.4px;width:4.3px;height:1px;background:#48c030;"></div>
<div class="a" style="left:544.2px;top:500.5px;width:14px;height:10px;line-height:10px;color:#b4b4b4;font-size:8.2px;"><span class="s">6</span></div>
<div class="a" style="left:544.2px;top:515.9px;width:14px;height:10px;line-height:10px;color:#b4b4b4;font-size:8.2px;"><span class="s">0</span></div>
<div class="a" style="left:544.2px;top:535.2px;width:14px;height:10px;line-height:10px;color:#b4b4b4;font-size:8.2px;"><span class="s">6</span></div>
<div class="a" style="left:544.2px;top:554.3px;width:14px;height:10px;line-height:10px;color:#b4b4b4;font-size:8.2px;"><span class="s">12</span></div>
<div class="a" style="left:544.2px;top:573.3px;width:14px;height:10px;line-height:10px;color:#b4b4b4;font-size:8.2px;"><span class="s">18</span></div>
<div class="a" style="left:544.2px;top:592.5px;width:14px;height:10px;line-height:10px;color:#b4b4b4;font-size:8.2px;"><span class="s">24</span></div>
<div class="a" style="left:544.2px;top:612.7px;width:14px;height:10px;line-height:10px;color:#b4b4b4;font-size:8.2px;"><span class="s">30</span></div>
<div class="a" style="left:544.2px;top:629.5px;width:14px;height:10px;line-height:10px;color:#b4b4b4;font-size:8.2px;"><span class="s">36</span></div>
<div class="a" style="left:544.2px;top:644.5px;width:14px;height:10px;line-height:10px;color:#b4b4b4;font-size:8.2px;"><span class="s">42</span></div>
<div class="a" style="left:544.2px;top:656.8px;width:14px;height:10px;line-height:10px;color:#b4b4b4;font-size:8.2px;"><span class="s">48</span></div>
<div class="a" style="left:544.2px;top:668.3px;width:14px;height:10px;line-height:10px;color:#b4b4b4;font-size:8.2px;"><span class="s">54</span></div>
<div class="a" style="left:544.2px;top:679.3px;width:14px;height:10px;line-height:10px;color:#b4b4b4;font-size:8.2px;"><span class="s">60</span></div>
<svg class="a" style="left:520.4px;top:537px" width="10" height="11.2" viewBox="0 0 10 11.2"><path d="M0.3 0.5 L9.6 5.6 L0.3 10.7 Z" fill="#c4c4c4"/></svg>
<svg class="a" style="left:490.9px;top:620px" width="24" height="28" viewBox="0 0 24 28"><path d="M7.3 24.2 A10.3 10.3 0 1 1 16.7 24.2" fill="none" stroke="#131313" stroke-width="1.7"/><path d="M12 15 V4.4" stroke="#131313" stroke-width="1.6"/><path d="M9.1 0.5 H14.9 L12 3.9 Z" fill="#131313"/></svg>
<div class="a" style="left:493.7px;top:648.8px;width:18.3px;height:17.4px;background:#ffad56;line-height:17.4px;text-align:center;color:#111;font-weight:bold;font-size:10.2px;box-shadow:0 0 0 0.6px #1c1c1c;"><span class="s">11</span></div>
<div class="a" style="left:493.7px;top:671.3px;width:18.3px;height:9.4px;background:#1e1e1e;line-height:9.4px;text-align:center;color:#d0d0d0;font-size:8.2px;box-shadow:0 0 0 0.6px #2a2a2a;"><span class="s">S</span></div>
<div class="a" style="left:493.7px;top:685.2px;width:18.3px;height:9.6px;background:#1e1e1e;box-shadow:0 0 0 0.6px #2a2a2a;"></div>
<svg class="a" style="left:498.9px;top:686px" width="8" height="8" viewBox="-4 -4 8 8"><circle cx="0" cy="0" r="2.6" fill="#c8c8c8"/><path d="M-0.5 1.3 Q1 0.4 0.9 -2.4" stroke="#1e1e1e" stroke-width="0.8" fill="none"/></svg>
<div class="a" style="left:561.4px;top:480.4px;width:77.4px;height:14.5px;background:#ffa374;line-height:14.5px;color:#1a1a1a;font-size:8.6px;padding-left:3.4px;box-sizing:border-box;white-space:nowrap;text-shadow:0 0 0.3px #1a1a1a;"><span class="s">Pads</span></div>
<svg class="a" style="left:625.8px;top:482.2px" width="11" height="11" viewBox="0 0 11 11"><circle cx="5.5" cy="5.5" r="4.6" fill="none" stroke="#1a1a1a" stroke-width="0.85"/><path d="M3.1 3.9H7.9M3.1 5.5H7.9M3.1 7.1H7.9" stroke="#1a1a1a" stroke-width="0.9"/></svg>
<div class="a" style="left:561.4px;top:495.6px;width:77.4px;height:204.2px;background:#3a3a3a;"></div>
<div class="a" style="left:561.4px;top:701.8px;width:77.4px;height:5.2px;background:#ffa374;"></div>
<div class="a" style="left:567.7px;top:500.9px;width:28.9px;height:10.2px;background:#1e1e1e;border-radius:5.2px;line-height:9.2px;text-align:center;color:#d4d4d4;font-size:8.8px;box-shadow:0 0 0 0.5px #2a2a2a;"><span class="s">-14.4</span></div>
<div class="a" style="left:567.7px;top:515.8px;width:28.9px;height:10.4px;background:#1e1e1e;line-height:10.4px;text-align:center;color:#c8c8c8;font-size:8.8px;box-shadow:0 0 0 0.6px #2a2a2a;"><span class="s">0</span></div>
<div class="a" style="left:610.3px;top:500.9px;width:10px;height:193.6px;background:#1b1b1b;border-radius:2px 2px 0 0;"></div>
<div class="a" style="left:615px;top:501.5px;width:0.8px;height:193px;background:#3c3c3c;"></div>
<div class="a" style="left:606.1px;top:505.1px;width:2.2px;height:0.8px;background:#6a6a6a;"></div>
<div class="a" style="left:606.1px;top:520.5px;width:2.2px;height:0.8px;background:#6a6a6a;"></div>
<div class="a" style="left:606.1px;top:539.8px;width:2.2px;height:0.8px;background:#6a6a6a;"></div>
<div class="a" style="left:606.1px;top:558.9px;width:2.2px;height:0.8px;background:#6a6a6a;"></div>
<div class="a" style="left:606.1px;top:577.9px;width:2.2px;height:0.8px;background:#6a6a6a;"></div>
<div class="a" style="left:606.1px;top:597.1px;width:2.2px;height:0.8px;background:#6a6a6a;"></div>
<div class="a" style="left:606.1px;top:617.3px;width:2.2px;height:0.8px;background:#6a6a6a;"></div>
<div class="a" style="left:606.1px;top:634.1px;width:2.2px;height:0.8px;background:#6a6a6a;"></div>
<div class="a" style="left:606.1px;top:649.1px;width:2.2px;height:0.8px;background:#6a6a6a;"></div>
<div class="a" style="left:606.1px;top:661.4px;width:2.2px;height:0.8px;background:#6a6a6a;"></div>
<div class="a" style="left:606.1px;top:672.9px;width:2.2px;height:0.8px;background:#6a6a6a;"></div>
<div class="a" style="left:606.1px;top:683.9px;width:2.2px;height:0.8px;background:#6a6a6a;"></div>
<div class="a" style="left:606.1px;top:691.1px;width:2.2px;height:0.8px;background:#555;"></div>
<div class="a" style="left:610.3px;top:520.2px;width:10px;height:1.35px;background:#7e7e7e;"></div>
<div class="a" style="left:610.6px;top:634.1px;width:4.3px;height:60.4px;background:#16f05a;"></div>
<div class="a" style="left:615.8px;top:630.8px;width:4.3px;height:63.7px;background:#16f05a;"></div>
<div class="a" style="left:610.6px;top:567.3px;width:4.3px;height:1px;background:#88b820;"></div>
<div class="a" style="left:615.8px;top:573.5px;width:4.3px;height:1px;background:#88b820;"></div>
<div class="a" style="left:623.3px;top:500.5px;width:14px;height:10px;line-height:10px;color:#b4b4b4;font-size:8.2px;"><span class="s">6</span></div>
<div class="a" style="left:623.3px;top:515.9px;width:14px;height:10px;line-height:10px;color:#b4b4b4;font-size:8.2px;"><span class="s">0</span></div>
<div class="a" style="left:623.3px;top:535.2px;width:14px;height:10px;line-height:10px;color:#b4b4b4;font-size:8.2px;"><span class="s">6</span></div>
<div class="a" style="left:623.3px;top:554.3px;width:14px;height:10px;line-height:10px;color:#b4b4b4;font-size:8.2px;"><span class="s">12</span></div>
<div class="a" style="left:623.3px;top:573.3px;width:14px;height:10px;line-height:10px;color:#b4b4b4;font-size:8.2px;"><span class="s">18</span></div>
<div class="a" style="left:623.3px;top:592.5px;width:14px;height:10px;line-height:10px;color:#b4b4b4;font-size:8.2px;"><span class="s">24</span></div>
<div class="a" style="left:623.3px;top:612.7px;width:14px;height:10px;line-height:10px;color:#b4b4b4;font-size:8.2px;"><span class="s">30</span></div>
<div class="a" style="left:623.3px;top:629.5px;width:14px;height:10px;line-height:10px;color:#b4b4b4;font-size:8.2px;"><span class="s">36</span></div>
<div class="a" style="left:623.3px;top:644.5px;width:14px;height:10px;line-height:10px;color:#b4b4b4;font-size:8.2px;"><span class="s">42</span></div>
<div class="a" style="left:623.3px;top:656.8px;width:14px;height:10px;line-height:10px;color:#b4b4b4;font-size:8.2px;"><span class="s">48</span></div>
<div class="a" style="left:623.3px;top:668.3px;width:14px;height:10px;line-height:10px;color:#b4b4b4;font-size:8.2px;"><span class="s">54</span></div>
<div class="a" style="left:623.3px;top:679.3px;width:14px;height:10px;line-height:10px;color:#b4b4b4;font-size:8.2px;"><span class="s">60</span></div>
<svg class="a" style="left:599.5px;top:515.2px" width="10" height="11.2" viewBox="0 0 10 11.2"><path d="M0.3 0.5 L9.6 5.6 L0.3 10.7 Z" fill="#c4c4c4"/></svg>
<svg class="a" style="left:570px;top:620px" width="24" height="28" viewBox="0 0 24 28"><path d="M7.3 24.2 A10.3 10.3 0 1 1 16.7 24.2" fill="none" stroke="#131313" stroke-width="1.7"/><path d="M12 15 V4.4" stroke="#131313" stroke-width="1.6"/><path d="M9.1 0.5 H14.9 L12 3.9 Z" fill="#131313"/></svg>
<div class="a" style="left:572.8px;top:648.8px;width:18.3px;height:17.4px;background:#ffad56;line-height:17.4px;text-align:center;color:#111;font-weight:bold;font-size:10.2px;box-shadow:0 0 0 0.6px #1c1c1c;"><span class="s">12</span></div>
<div class="a" style="left:572.8px;top:671.3px;width:18.3px;height:9.4px;background:#1e1e1e;line-height:9.4px;text-align:center;color:#d0d0d0;font-size:8.2px;box-shadow:0 0 0 0.6px #2a2a2a;"><span class="s">S</span></div>
<div class="a" style="left:640.5px;top:480.4px;width:77.4px;height:14.5px;background:#ff94a6;line-height:14.5px;color:#1a1a1a;font-size:8.6px;padding-left:3.4px;box-sizing:border-box;white-space:nowrap;text-shadow:0 0 0.3px #1a1a1a;"><span class="s">Ambience</span></div>
<div class="a" style="left:640.5px;top:495.6px;width:77.4px;height:204.2px;background:#3a3a3a;"></div>
<div class="a" style="left:640.5px;top:701.8px;width:77.4px;height:5.2px;background:#ff94a6;"></div>
<div class="a" style="left:646.8px;top:500.9px;width:28.9px;height:10.2px;background:#1e1e1e;border-radius:5.2px;line-height:9.2px;text-align:center;color:#d4d4d4;font-size:8.8px;box-shadow:0 0 0 0.5px #2a2a2a;"><span class="s">-29.7</span></div>
<div class="a" style="left:646.8px;top:515.8px;width:28.9px;height:10.4px;background:#1e1e1e;line-height:10.4px;text-align:center;color:#c8c8c8;font-size:8.8px;box-shadow:0 0 0 0.6px #2a2a2a;"><span class="s">-8.3</span></div>
<div class="a" style="left:689.4px;top:500.9px;width:10px;height:193.6px;background:#1b1b1b;border-radius:2px 2px 0 0;"></div>
<div class="a" style="left:694.1px;top:501.5px;width:0.8px;height:193px;background:#3c3c3c;"></div>
<div class="a" style="left:685.2px;top:505.1px;width:2.2px;height:0.8px;background:#6a6a6a;"></div>
<div class="a" style="left:685.2px;top:520.5px;width:2.2px;height:0.8px;background:#6a6a6a;"></div>
<div class="a" style="left:685.2px;top:539.8px;width:2.2px;height:0.8px;background:#6a6a6a;"></div>
<div class="a" style="left:685.2px;top:558.9px;width:2.2px;height:0.8px;background:#6a6a6a;"></div>
<div class="a" style="left:685.2px;top:577.9px;width:2.2px;height:0.8px;background:#6a6a6a;"></div>
<div class="a" style="left:685.2px;top:597.1px;width:2.2px;height:0.8px;background:#6a6a6a;"></div>
<div class="a" style="left:685.2px;top:617.3px;width:2.2px;height:0.8px;background:#6a6a6a;"></div>
<div class="a" style="left:685.2px;top:634.1px;width:2.2px;height:0.8px;background:#6a6a6a;"></div>
<div class="a" style="left:685.2px;top:649.1px;width:2.2px;height:0.8px;background:#6a6a6a;"></div>
<div class="a" style="left:685.2px;top:661.4px;width:2.2px;height:0.8px;background:#6a6a6a;"></div>
<div class="a" style="left:685.2px;top:672.9px;width:2.2px;height:0.8px;background:#6a6a6a;"></div>
<div class="a" style="left:685.2px;top:683.9px;width:2.2px;height:0.8px;background:#6a6a6a;"></div>
<div class="a" style="left:685.2px;top:691.1px;width:2.2px;height:0.8px;background:#555;"></div>
<div class="a" style="left:689.4px;top:520.2px;width:10px;height:1.35px;background:#7e7e7e;"></div>
<div class="a" style="left:689.7px;top:626.8px;width:4.3px;height:23.1px;background:#10a84a;"></div>
<div class="a" style="left:689.7px;top:649.7px;width:4.3px;height:44.8px;background:#16f05a;"></div>
<div class="a" style="left:694.9px;top:633.4px;width:4.3px;height:16.5px;background:#10a84a;"></div>
<div class="a" style="left:694.9px;top:649.7px;width:4.3px;height:44.8px;background:#16f05a;"></div>
<div class="a" style="left:689.7px;top:619.6px;width:4.3px;height:1px;background:#18d050;"></div>
<div class="a" style="left:694.9px;top:616.3px;width:4.3px;height:1px;background:#18d050;"></div>
<div class="a" style="left:702.4px;top:500.5px;width:14px;height:10px;line-height:10px;color:#b4b4b4;font-size:8.2px;"><span class="s">6</span></div>
<div class="a" style="left:702.4px;top:515.9px;width:14px;height:10px;line-height:10px;color:#b4b4b4;font-size:8.2px;"><span class="s">0</span></div>
<div class="a" style="left:702.4px;top:535.2px;width:14px;height:10px;line-height:10px;color:#b4b4b4;font-size:8.2px;"><span class="s">6</span></div>
<div class="a" style="left:702.4px;top:554.3px;width:14px;height:10px;line-height:10px;color:#b4b4b4;font-size:8.2px;"><span class="s">12</span></div>
<div class="a" style="left:702.4px;top:573.3px;width:14px;height:10px;line-height:10px;color:#b4b4b4;font-size:8.2px;"><span class="s">18</span></div>
<div class="a" style="left:702.4px;top:592.5px;width:14px;height:10px;line-height:10px;color:#b4b4b4;font-size:8.2px;"><span class="s">24</span></div>
<div class="a" style="left:702.4px;top:612.7px;width:14px;height:10px;line-height:10px;color:#b4b4b4;font-size:8.2px;"><span class="s">30</span></div>
<div class="a" style="left:702.4px;top:629.5px;width:14px;height:10px;line-height:10px;color:#b4b4b4;font-size:8.2px;"><span class="s">36</span></div>
<div class="a" style="left:702.4px;top:644.5px;width:14px;height:10px;line-height:10px;color:#b4b4b4;font-size:8.2px;"><span class="s">42</span></div>
<div class="a" style="left:702.4px;top:656.8px;width:14px;height:10px;line-height:10px;color:#b4b4b4;font-size:8.2px;"><span class="s">48</span></div>
<div class="a" style="left:702.4px;top:668.3px;width:14px;height:10px;line-height:10px;color:#b4b4b4;font-size:8.2px;"><span class="s">54</span></div>
<div class="a" style="left:702.4px;top:679.3px;width:14px;height:10px;line-height:10px;color:#b4b4b4;font-size:8.2px;"><span class="s">60</span></div>
<svg class="a" style="left:678.6px;top:541.7px" width="10" height="11.2" viewBox="0 0 10 11.2"><path d="M0.3 0.5 L9.6 5.6 L0.3 10.7 Z" fill="#c4c4c4"/></svg>
<svg class="a" style="left:649.1px;top:620px" width="24" height="28" viewBox="0 0 24 28"><path d="M7.3 24.2 A10.3 10.3 0 1 1 16.7 24.2" fill="none" stroke="#131313" stroke-width="1.7"/><path d="M12 15 V4.4" stroke="#131313" stroke-width="1.6"/><path d="M9.1 0.5 H14.9 L12 3.9 Z" fill="#131313"/></svg>
<div class="a" style="left:651.9px;top:648.8px;width:18.3px;height:17.4px;background:#ffad56;line-height:17.4px;text-align:center;color:#111;font-weight:bold;font-size:10.2px;box-shadow:0 0 0 0.6px #1c1c1c;"><span class="s">16</span></div>
<div class="a" style="left:651.9px;top:671.3px;width:18.3px;height:9.4px;background:#1e1e1e;line-height:9.4px;text-align:center;color:#d0d0d0;font-size:8.2px;box-shadow:0 0 0 0.6px #2a2a2a;"><span class="s">S</span></div>
<div class="a" style="left:651.9px;top:685.2px;width:18.3px;height:9.6px;background:#1e1e1e;box-shadow:0 0 0 0.6px #2a2a2a;"></div>
<svg class="a" style="left:657.1px;top:686px" width="8" height="8" viewBox="-4 -4 8 8"><circle cx="0" cy="0" r="2.7" fill="#747474"/></svg>
<div class="a" style="left:719.6px;top:480.4px;width:77.4px;height:14.5px;background:#ff94a6;line-height:14.5px;color:#1a1a1a;font-size:8.6px;padding-left:3.4px;box-sizing:border-box;white-space:nowrap;text-shadow:0 0 0.3px #1a1a1a;"><span class="s">Drone</span></div>
<div class="a" style="left:719.6px;top:495.6px;width:77.4px;height:204.2px;background:#3a3a3a;"></div>
<div class="a" style="left:719.6px;top:701.8px;width:77.4px;height:5.2px;background:#ff94a6;"></div>
<div class="a" style="left:725.9px;top:500.9px;width:28.9px;height:10.2px;background:#1e1e1e;border-radius:5.2px;line-height:9.2px;text-align:center;color:#d4d4d4;font-size:8.8px;box-shadow:0 0 0 0.5px #2a2a2a;"><span class="s">-25.0</span></div>
<div class="a" style="left:725.9px;top:515.8px;width:28.9px;height:10.4px;background:#1e1e1e;line-height:10.4px;text-align:center;color:#c8c8c8;font-size:8.8px;box-shadow:0 0 0 0.6px #2a2a2a;"><span class="s">-15.6</span></div>
<div class="a" style="left:768.5px;top:500.9px;width:10px;height:193.6px;background:#1b1b1b;border-radius:2px 2px 0 0;"></div>
<div class="a" style="left:773.2px;top:501.5px;width:0.8px;height:193px;background:#3c3c3c;"></div>
<div class="a" style="left:764.3px;top:505.1px;width:2.2px;height:0.8px;background:#6a6a6a;"></div>
<div class="a" style="left:764.3px;top:520.5px;width:2.2px;height:0.8px;background:#6a6a6a;"></div>
<div class="a" style="left:764.3px;top:539.8px;width:2.2px;height:0.8px;background:#6a6a6a;"></div>
<div class="a" style="left:764.3px;top:558.9px;width:2.2px;height:0.8px;background:#6a6a6a;"></div>
<div class="a" style="left:764.3px;top:577.9px;width:2.2px;height:0.8px;background:#6a6a6a;"></div>
<div class="a" style="left:764.3px;top:597.1px;width:2.2px;height:0.8px;background:#6a6a6a;"></div>
<div class="a" style="left:764.3px;top:617.3px;width:2.2px;height:0.8px;background:#6a6a6a;"></div>
<div class="a" style="left:764.3px;top:634.1px;width:2.2px;height:0.8px;background:#6a6a6a;"></div>
<div class="a" style="left:764.3px;top:649.1px;width:2.2px;height:0.8px;background:#6a6a6a;"></div>
<div class="a" style="left:764.3px;top:661.4px;width:2.2px;height:0.8px;background:#6a6a6a;"></div>
<div class="a" style="left:764.3px;top:672.9px;width:2.2px;height:0.8px;background:#6a6a6a;"></div>
<div class="a" style="left:764.3px;top:683.9px;width:2.2px;height:0.8px;background:#6a6a6a;"></div>
<div class="a" style="left:764.3px;top:691.1px;width:2.2px;height:0.8px;background:#555;"></div>
<div class="a" style="left:768.5px;top:520.2px;width:10px;height:1.35px;background:#7e7e7e;"></div>
<div class="a" style="left:768.8px;top:609px;width:4.3px;height:28.2px;background:#10a84a;"></div>
<div class="a" style="left:768.8px;top:637px;width:4.3px;height:57.5px;background:#16f05a;"></div>
<div class="a" style="left:774px;top:614.5px;width:4.3px;height:15.4px;background:#10a84a;"></div>
<div class="a" style="left:774px;top:629.7px;width:4.3px;height:64.8px;background:#16f05a;"></div>
<div class="a" style="left:774px;top:601.4px;width:4.3px;height:1px;background:#18d050;"></div>
<div class="a" style="left:781.5px;top:500.5px;width:14px;height:10px;line-height:10px;color:#b4b4b4;font-size:8.2px;"><span class="s">6</span></div>
<div class="a" style="left:781.5px;top:515.9px;width:14px;height:10px;line-height:10px;color:#b4b4b4;font-size:8.2px;"><span class="s">0</span></div>
<div class="a" style="left:781.5px;top:535.2px;width:14px;height:10px;line-height:10px;color:#b4b4b4;font-size:8.2px;"><span class="s">6</span></div>
<div class="a" style="left:781.5px;top:554.3px;width:14px;height:10px;line-height:10px;color:#b4b4b4;font-size:8.2px;"><span class="s">12</span></div>
<div class="a" style="left:781.5px;top:573.3px;width:14px;height:10px;line-height:10px;color:#b4b4b4;font-size:8.2px;"><span class="s">18</span></div>
<div class="a" style="left:781.5px;top:592.5px;width:14px;height:10px;line-height:10px;color:#b4b4b4;font-size:8.2px;"><span class="s">24</span></div>
<div class="a" style="left:781.5px;top:612.7px;width:14px;height:10px;line-height:10px;color:#b4b4b4;font-size:8.2px;"><span class="s">30</span></div>
<div class="a" style="left:781.5px;top:629.5px;width:14px;height:10px;line-height:10px;color:#b4b4b4;font-size:8.2px;"><span class="s">36</span></div>
<div class="a" style="left:781.5px;top:644.5px;width:14px;height:10px;line-height:10px;color:#b4b4b4;font-size:8.2px;"><span class="s">42</span></div>
<div class="a" style="left:781.5px;top:656.8px;width:14px;height:10px;line-height:10px;color:#b4b4b4;font-size:8.2px;"><span class="s">48</span></div>
<div class="a" style="left:781.5px;top:668.3px;width:14px;height:10px;line-height:10px;color:#b4b4b4;font-size:8.2px;"><span class="s">54</span></div>
<div class="a" style="left:781.5px;top:679.3px;width:14px;height:10px;line-height:10px;color:#b4b4b4;font-size:8.2px;"><span class="s">60</span></div>
<svg class="a" style="left:757.7px;top:565.4px" width="10" height="11.2" viewBox="0 0 10 11.2"><path d="M0.3 0.5 L9.6 5.6 L0.3 10.7 Z" fill="#c4c4c4"/></svg>
<svg class="a" style="left:728.2px;top:620px" width="24" height="28" viewBox="0 0 24 28"><path d="M7.3 24.2 A10.3 10.3 0 1 1 16.7 24.2" fill="none" stroke="#131313" stroke-width="1.7"/><path d="M12 15 V4.4" stroke="#131313" stroke-width="1.6"/><path d="M9.1 0.5 H14.9 L12 3.9 Z" fill="#131313"/></svg>
<div class="a" style="left:731px;top:648.8px;width:18.3px;height:17.4px;background:#ffad56;line-height:17.4px;text-align:center;color:#111;font-weight:bold;font-size:10.2px;box-shadow:0 0 0 0.6px #1c1c1c;"><span class="s">17</span></div>
<div class="a" style="left:731px;top:671.3px;width:18.3px;height:9.4px;background:#1e1e1e;line-height:9.4px;text-align:center;color:#d0d0d0;font-size:8.2px;box-shadow:0 0 0 0.6px #2a2a2a;"><span class="s">S</span></div>
<div class="a" style="left:731px;top:685.2px;width:18.3px;height:9.6px;background:#1e1e1e;box-shadow:0 0 0 0.6px #2a2a2a;"></div>
<svg class="a" style="left:736.2px;top:686px" width="8" height="8" viewBox="-4 -4 8 8"><circle cx="0" cy="0" r="2.7" fill="#747474"/></svg>
<div class="a" style="left:798.7px;top:480.4px;width:77.4px;height:14.5px;background:#d86ce4;line-height:14.5px;color:#1a1a1a;font-size:8.6px;padding-left:3.4px;box-sizing:border-box;white-space:nowrap;text-shadow:0 0 0.3px #1a1a1a;"><span class="s">FX</span></div>
<div class="a" style="left:798.7px;top:495.6px;width:77.4px;height:204.2px;background:#3a3a3a;"></div>
<div class="a" style="left:798.7px;top:701.8px;width:77.4px;height:5.2px;background:#d86ce4;"></div>
<div class="a" style="left:805px;top:500.9px;width:28.9px;height:10.2px;background:#1e1e1e;border-radius:5.2px;line-height:9.2px;text-align:center;color:#d4d4d4;font-size:8.8px;box-shadow:0 0 0 0.5px #2a2a2a;"><span class="s">-19.6</span></div>
<div class="a" style="left:805px;top:515.8px;width:28.9px;height:10.4px;background:#1e1e1e;line-height:10.4px;text-align:center;color:#c8c8c8;font-size:8.8px;box-shadow:0 0 0 0.6px #2a2a2a;"><span class="s">-4.1</span></div>
<div class="a" style="left:847.6px;top:500.9px;width:10px;height:193.6px;background:#1b1b1b;border-radius:2px 2px 0 0;"></div>
<div class="a" style="left:852.3px;top:501.5px;width:0.8px;height:193px;background:#3c3c3c;"></div>
<div class="a" style="left:843.4px;top:505.1px;width:2.2px;height:0.8px;background:#6a6a6a;"></div>
<div class="a" style="left:843.4px;top:520.5px;width:2.2px;height:0.8px;background:#6a6a6a;"></div>
<div class="a" style="left:843.4px;top:539.8px;width:2.2px;height:0.8px;background:#6a6a6a;"></div>
<div class="a" style="left:843.4px;top:558.9px;width:2.2px;height:0.8px;background:#6a6a6a;"></div>
<div class="a" style="left:843.4px;top:577.9px;width:2.2px;height:0.8px;background:#6a6a6a;"></div>
<div class="a" style="left:843.4px;top:597.1px;width:2.2px;height:0.8px;background:#6a6a6a;"></div>
<div class="a" style="left:843.4px;top:617.3px;width:2.2px;height:0.8px;background:#6a6a6a;"></div>
<div class="a" style="left:843.4px;top:634.1px;width:2.2px;height:0.8px;background:#6a6a6a;"></div>
<div class="a" style="left:843.4px;top:649.1px;width:2.2px;height:0.8px;background:#6a6a6a;"></div>
<div class="a" style="left:843.4px;top:661.4px;width:2.2px;height:0.8px;background:#6a6a6a;"></div>
<div class="a" style="left:843.4px;top:672.9px;width:2.2px;height:0.8px;background:#6a6a6a;"></div>
<div class="a" style="left:843.4px;top:683.9px;width:2.2px;height:0.8px;background:#6a6a6a;"></div>
<div class="a" style="left:843.4px;top:691.1px;width:2.2px;height:0.8px;background:#555;"></div>
<div class="a" style="left:847.6px;top:520.2px;width:10px;height:1.35px;background:#7e7e7e;"></div>
<div class="a" style="left:847.9px;top:593.4px;width:4.3px;height:22px;background:#10a84a;"></div>
<div class="a" style="left:847.9px;top:615.2px;width:4.3px;height:79.3px;background:#16f05a;"></div>
<div class="a" style="left:853.1px;top:588px;width:4.3px;height:20.2px;background:#10a84a;"></div>
<div class="a" style="left:853.1px;top:608px;width:4.3px;height:86.5px;background:#16f05a;"></div>
<div class="a" style="left:847.9px;top:588px;width:4.3px;height:1px;background:#18d050;"></div>
<div class="a" style="left:853.1px;top:584.4px;width:4.3px;height:1px;background:#18d050;"></div>
<div class="a" style="left:860.6px;top:500.5px;width:14px;height:10px;line-height:10px;color:#b4b4b4;font-size:8.2px;"><span class="s">6</span></div>
<div class="a" style="left:860.6px;top:515.9px;width:14px;height:10px;line-height:10px;color:#b4b4b4;font-size:8.2px;"><span class="s">0</span></div>
<div class="a" style="left:860.6px;top:535.2px;width:14px;height:10px;line-height:10px;color:#b4b4b4;font-size:8.2px;"><span class="s">6</span></div>
<div class="a" style="left:860.6px;top:554.3px;width:14px;height:10px;line-height:10px;color:#b4b4b4;font-size:8.2px;"><span class="s">12</span></div>
<div class="a" style="left:860.6px;top:573.3px;width:14px;height:10px;line-height:10px;color:#b4b4b4;font-size:8.2px;"><span class="s">18</span></div>
<div class="a" style="left:860.6px;top:592.5px;width:14px;height:10px;line-height:10px;color:#b4b4b4;font-size:8.2px;"><span class="s">24</span></div>
<div class="a" style="left:860.6px;top:612.7px;width:14px;height:10px;line-height:10px;color:#b4b4b4;font-size:8.2px;"><span class="s">30</span></div>
<div class="a" style="left:860.6px;top:629.5px;width:14px;height:10px;line-height:10px;color:#b4b4b4;font-size:8.2px;"><span class="s">36</span></div>
<div class="a" style="left:860.6px;top:644.5px;width:14px;height:10px;line-height:10px;color:#b4b4b4;font-size:8.2px;"><span class="s">42</span></div>
<div class="a" style="left:860.6px;top:656.8px;width:14px;height:10px;line-height:10px;color:#b4b4b4;font-size:8.2px;"><span class="s">48</span></div>
<div class="a" style="left:860.6px;top:668.3px;width:14px;height:10px;line-height:10px;color:#b4b4b4;font-size:8.2px;"><span class="s">54</span></div>
<div class="a" style="left:860.6px;top:679.3px;width:14px;height:10px;line-height:10px;color:#b4b4b4;font-size:8.2px;"><span class="s">60</span></div>
<svg class="a" style="left:836.8px;top:529px" width="10" height="11.2" viewBox="0 0 10 11.2"><path d="M0.3 0.5 L9.6 5.6 L0.3 10.7 Z" fill="#c4c4c4"/></svg>
<svg class="a" style="left:807.3px;top:620px" width="24" height="28" viewBox="0 0 24 28"><path d="M7.3 24.2 A10.3 10.3 0 1 1 16.7 24.2" fill="none" stroke="#131313" stroke-width="1.7"/><path d="M12 15 V4.4" stroke="#131313" stroke-width="1.6"/><path d="M9.1 0.5 H14.9 L12 3.9 Z" fill="#131313"/></svg>
<div class="a" style="left:810.1px;top:648.8px;width:18.3px;height:17.4px;background:#ffad56;line-height:17.4px;text-align:center;color:#111;font-weight:bold;font-size:10.2px;box-shadow:0 0 0 0.6px #1c1c1c;"><span class="s">18</span></div>
<div class="a" style="left:810.1px;top:671.3px;width:18.3px;height:9.4px;background:#1e1e1e;line-height:9.4px;text-align:center;color:#d0d0d0;font-size:8.2px;box-shadow:0 0 0 0.6px #2a2a2a;"><span class="s">S</span></div>
<div class="a" style="left:810.1px;top:685.2px;width:18.3px;height:9.6px;background:#1e1e1e;box-shadow:0 0 0 0.6px #2a2a2a;"></div>
<svg class="a" style="left:815.3px;top:686px" width="8" height="8" viewBox="-4 -4 8 8"><circle cx="0" cy="0" r="2.7" fill="#747474"/></svg>
<div class="a" style="left:877.9px;top:480.4px;width:70.9px;height:14.5px;background:#d86ce4;line-height:14.5px;color:#1a1a1a;font-size:8.6px;padding-left:3.4px;box-sizing:border-box;white-space:nowrap;text-shadow:0 0 0.3px #1a1a1a;"><span class="s">Zap</span></div>
<div class="a" style="left:877.9px;top:495.6px;width:70.9px;height:204.2px;background:#3a3a3a;"></div>
<div class="a" style="left:877.9px;top:701.8px;width:70.9px;height:5.2px;background:#d86ce4;"></div>
<div class="a" style="left:892.8px;top:500.9px;width:28.9px;height:10.2px;background:#1e1e1e;border-radius:5.2px;line-height:9.2px;text-align:center;color:#d4d4d4;font-size:8.8px;box-shadow:0 0 0 0.5px #2a2a2a;"><span class="s">-24.6</span></div>
<div class="a" style="left:892.8px;top:515.8px;width:28.9px;height:10.4px;background:#1e1e1e;line-height:10.4px;text-align:center;color:#c8c8c8;font-size:8.8px;box-shadow:0 0 0 0.6px #2a2a2a;"><span class="s">-19.4</span></div>
<div class="a" style="left:935.4px;top:500.9px;width:10px;height:193.6px;background:#1b1b1b;border-radius:2px 2px 0 0;"></div>
<div class="a" style="left:940.1px;top:501.5px;width:0.8px;height:193px;background:#3c3c3c;"></div>
<div class="a" style="left:931.2px;top:505.1px;width:2.2px;height:0.8px;background:#6a6a6a;"></div>
<div class="a" style="left:931.2px;top:520.5px;width:2.2px;height:0.8px;background:#6a6a6a;"></div>
<div class="a" style="left:931.2px;top:539.8px;width:2.2px;height:0.8px;background:#6a6a6a;"></div>
<div class="a" style="left:931.2px;top:558.9px;width:2.2px;height:0.8px;background:#6a6a6a;"></div>
<div class="a" style="left:931.2px;top:577.9px;width:2.2px;height:0.8px;background:#6a6a6a;"></div>
<div class="a" style="left:931.2px;top:597.1px;width:2.2px;height:0.8px;background:#6a6a6a;"></div>
<div class="a" style="left:931.2px;top:617.3px;width:2.2px;height:0.8px;background:#6a6a6a;"></div>
<div class="a" style="left:931.2px;top:634.1px;width:2.2px;height:0.8px;background:#6a6a6a;"></div>
<div class="a" style="left:931.2px;top:649.1px;width:2.2px;height:0.8px;background:#6a6a6a;"></div>
<div class="a" style="left:931.2px;top:661.4px;width:2.2px;height:0.8px;background:#6a6a6a;"></div>
<div class="a" style="left:931.2px;top:672.9px;width:2.2px;height:0.8px;background:#6a6a6a;"></div>
<div class="a" style="left:931.2px;top:683.9px;width:2.2px;height:0.8px;background:#6a6a6a;"></div>
<div class="a" style="left:931.2px;top:691.1px;width:2.2px;height:0.8px;background:#555;"></div>
<div class="a" style="left:935.4px;top:520.2px;width:10px;height:1.35px;background:#7e7e7e;"></div>
<div class="a" style="left:935.7px;top:612.7px;width:4.3px;height:24.5px;background:#10a84a;"></div>
<div class="a" style="left:935.7px;top:637px;width:4.3px;height:57.5px;background:#16f05a;"></div>
<div class="a" style="left:940.9px;top:608.7px;width:4.3px;height:26.7px;background:#10a84a;"></div>
<div class="a" style="left:940.9px;top:635.2px;width:4.3px;height:59.3px;background:#16f05a;"></div>
<div class="a" style="left:935.7px;top:599.6px;width:4.3px;height:1px;background:#18d050;"></div>
<div class="a" style="left:940.9px;top:602.5px;width:4.3px;height:1px;background:#18d050;"></div>
<svg class="a" style="left:924.6px;top:578px" width="10" height="11.2" viewBox="0 0 10 11.2"><path d="M0.3 0.5 L9.6 5.6 L0.3 10.7 Z" fill="#c4c4c4"/></svg>
<svg class="a" style="left:895.1px;top:620px" width="24" height="28" viewBox="0 0 24 28"><path d="M7.3 24.2 A10.3 10.3 0 1 1 16.7 24.2" fill="none" stroke="#131313" stroke-width="1.7"/><path d="M12 15 V4.4" stroke="#131313" stroke-width="1.6"/><path d="M9.1 0.5 H14.9 L12 3.9 Z" fill="#131313"/></svg>
<div class="a" style="left:897.9px;top:648.8px;width:18.3px;height:17.4px;background:#ffad56;line-height:17.4px;text-align:center;color:#111;font-weight:bold;font-size:10.2px;box-shadow:0 0 0 0.6px #1c1c1c;"><span class="s">19</span></div>
<div class="a" style="left:897.9px;top:671.3px;width:18.3px;height:9.4px;background:#1e1e1e;line-height:9.4px;text-align:center;color:#d0d0d0;font-size:8.2px;box-shadow:0 0 0 0.6px #2a2a2a;"><span class="s">S</span></div>
<div class="a" style="left:897.9px;top:685.2px;width:18.3px;height:9.6px;background:#1e1e1e;box-shadow:0 0 0 0.6px #2a2a2a;"></div>
<svg class="a" style="left:903.1px;top:686px" width="8" height="8" viewBox="-4 -4 8 8"><circle cx="0" cy="0" r="2.6" fill="#c8c8c8"/><path d="M-0.5 1.3 Q1 0.4 0.9 -2.4" stroke="#1e1e1e" stroke-width="0.8" fill="none"/></svg>
<div class="a" style="left:951.7px;top:480.4px;width:77.4px;height:14.5px;background:#d0d0d0;line-height:14.5px;color:#1a1a1a;font-size:8.6px;padding-left:3.4px;box-sizing:border-box;white-space:nowrap;text-shadow:0 0 0.3px #1a1a1a;"><span class="s">A Reverb</span></div>
<div class="a" style="left:951.7px;top:495.6px;width:77.4px;height:204.2px;background:#3a3a3a;"></div>
<div class="a" style="left:951.7px;top:701.8px;width:77.4px;height:5.2px;background:#d0d0d0;"></div>
<div class="a" style="left:958px;top:500.9px;width:28.9px;height:10.2px;background:#1e1e1e;border-radius:5.2px;line-height:9.2px;text-align:center;color:#d4d4d4;font-size:8.8px;box-shadow:0 0 0 0.5px #2a2a2a;"><span class="s">-50.9</span></div>
<div class="a" style="left:958px;top:515.8px;width:28.9px;height:10.4px;background:#1e1e1e;line-height:10.4px;text-align:center;color:#c8c8c8;font-size:8.8px;box-shadow:0 0 0 0.6px #2a2a2a;"><span class="s">0</span></div>
<div class="a" style="left:1000.6px;top:500.9px;width:10px;height:193.6px;background:#1b1b1b;border-radius:2px 2px 0 0;"></div>
<div class="a" style="left:1005.3px;top:501.5px;width:0.8px;height:193px;background:#3c3c3c;"></div>
<div class="a" style="left:996.4px;top:505.1px;width:2.2px;height:0.8px;background:#6a6a6a;"></div>
<div class="a" style="left:996.4px;top:520.5px;width:2.2px;height:0.8px;background:#6a6a6a;"></div>
<div class="a" style="left:996.4px;top:539.8px;width:2.2px;height:0.8px;background:#6a6a6a;"></div>
<div class="a" style="left:996.4px;top:558.9px;width:2.2px;height:0.8px;background:#6a6a6a;"></div>
<div class="a" style="left:996.4px;top:577.9px;width:2.2px;height:0.8px;background:#6a6a6a;"></div>
<div class="a" style="left:996.4px;top:597.1px;width:2.2px;height:0.8px;background:#6a6a6a;"></div>
<div class="a" style="left:996.4px;top:617.3px;width:2.2px;height:0.8px;background:#6a6a6a;"></div>
<div class="a" style="left:996.4px;top:634.1px;width:2.2px;height:0.8px;background:#6a6a6a;"></div>
<div class="a" style="left:996.4px;top:649.1px;width:2.2px;height:0.8px;background:#6a6a6a;"></div>
<div class="a" style="left:996.4px;top:661.4px;width:2.2px;height:0.8px;background:#6a6a6a;"></div>
<div class="a" style="left:996.4px;top:672.9px;width:2.2px;height:0.8px;background:#6a6a6a;"></div>
<div class="a" style="left:996.4px;top:683.9px;width:2.2px;height:0.8px;background:#6a6a6a;"></div>
<div class="a" style="left:996.4px;top:691.1px;width:2.2px;height:0.8px;background:#555;"></div>
<div class="a" style="left:1000.6px;top:520.2px;width:10px;height:1.35px;background:#7e7e7e;"></div>
<div class="a" style="left:1000.9px;top:673.3px;width:4.3px;height:13.6px;background:#10a84a;"></div>
<div class="a" style="left:1000.9px;top:686.7px;width:4.3px;height:7.8px;background:#16f05a;"></div>
<div class="a" style="left:1006.1px;top:670.8px;width:4.3px;height:15.4px;background:#10a84a;"></div>
<div class="a" style="left:1006.1px;top:686px;width:4.3px;height:8.5px;background:#16f05a;"></div>
<div class="a" style="left:1000.9px;top:667px;width:4.3px;height:1px;background:#18d050;"></div>
<div class="a" style="left:1013.6px;top:500.5px;width:14px;height:10px;line-height:10px;color:#b4b4b4;font-size:8.2px;"><span class="s">6</span></div>
<div class="a" style="left:1013.6px;top:515.9px;width:14px;height:10px;line-height:10px;color:#b4b4b4;font-size:8.2px;"><span class="s">0</span></div>
<div class="a" style="left:1013.6px;top:535.2px;width:14px;height:10px;line-height:10px;color:#b4b4b4;font-size:8.2px;"><span class="s">6</span></div>
<div class="a" style="left:1013.6px;top:554.3px;width:14px;height:10px;line-height:10px;color:#b4b4b4;font-size:8.2px;"><span class="s">12</span></div>
<div class="a" style="left:1013.6px;top:573.3px;width:14px;height:10px;line-height:10px;color:#b4b4b4;font-size:8.2px;"><span class="s">18</span></div>
<div class="a" style="left:1013.6px;top:592.5px;width:14px;height:10px;line-height:10px;color:#b4b4b4;font-size:8.2px;"><span class="s">24</span></div>
<div class="a" style="left:1013.6px;top:612.7px;width:14px;height:10px;line-height:10px;color:#b4b4b4;font-size:8.2px;"><span class="s">30</span></div>
<div class="a" style="left:1013.6px;top:629.5px;width:14px;height:10px;line-height:10px;color:#b4b4b4;font-size:8.2px;"><span class="s">36</span></div>
<div class="a" style="left:1013.6px;top:644.5px;width:14px;height:10px;line-height:10px;color:#b4b4b4;font-size:8.2px;"><span class="s">42</span></div>
<div class="a" style="left:1013.6px;top:656.8px;width:14px;height:10px;line-height:10px;color:#b4b4b4;font-size:8.2px;"><span class="s">48</span></div>
<div class="a" style="left:1013.6px;top:668.3px;width:14px;height:10px;line-height:10px;color:#b4b4b4;font-size:8.2px;"><span class="s">54</span></div>
<div class="a" style="left:1013.6px;top:679.3px;width:14px;height:10px;line-height:10px;color:#b4b4b4;font-size:8.2px;"><span class="s">60</span></div>
<svg class="a" style="left:989.8px;top:515.2px" width="10" height="11.2" viewBox="0 0 10 11.2"><path d="M0.3 0.5 L9.6 5.6 L0.3 10.7 Z" fill="#c4c4c4"/></svg>
<svg class="a" style="left:960.3px;top:620px" width="24" height="28" viewBox="0 0 24 28"><path d="M7.3 24.2 A10.3 10.3 0 1 1 16.7 24.2" fill="none" stroke="#131313" stroke-width="1.7"/><path d="M12 15 V4.4" stroke="#131313" stroke-width="1.6"/><path d="M9.1 0.5 H14.9 L12 3.9 Z" fill="#131313"/></svg>
<div class="a" style="left:963.1px;top:648.8px;width:18.3px;height:17.4px;background:#ffad56;line-height:17.4px;text-align:center;color:#111;font-weight:bold;font-size:10.2px;box-shadow:0 0 0 0.6px #1c1c1c;"><span class="s">A</span></div>
<div class="a" style="left:963.1px;top:671.3px;width:18.3px;height:9.4px;background:#1e1e1e;line-height:9.4px;text-align:center;color:#d0d0d0;font-size:8.2px;box-shadow:0 0 0 0.6px #2a2a2a;"><span class="s">S</span></div>
<div class="a" style="left:1030.8px;top:480.4px;width:77.6px;height:14.5px;background:#d0d0d0;line-height:14.5px;color:#1a1a1a;font-size:8.6px;padding-left:3.4px;box-sizing:border-box;white-space:nowrap;text-shadow:0 0 0.3px #1a1a1a;"><span class="s">B Delay</span></div>
<div class="a" style="left:1030.8px;top:495.6px;width:77.6px;height:204.2px;background:#3a3a3a;"></div>
<div class="a" style="left:1030.8px;top:701.8px;width:77.6px;height:5.2px;background:#d0d0d0;"></div>
<div class="a" style="left:1037.1px;top:500.9px;width:28.9px;height:10.2px;background:#1e1e1e;border-radius:5.2px;line-height:9.2px;text-align:center;color:#d4d4d4;font-size:8.8px;box-shadow:0 0 0 0.5px #2a2a2a;"><span class="s">-55.2</span></div>
<div class="a" style="left:1037.1px;top:515.8px;width:28.9px;height:10.4px;background:#1e1e1e;line-height:10.4px;text-align:center;color:#c8c8c8;font-size:8.8px;box-shadow:0 0 0 0.6px #2a2a2a;"><span class="s">0</span></div>
<div class="a" style="left:1079.7px;top:500.9px;width:10px;height:193.6px;background:#1b1b1b;border-radius:2px 2px 0 0;"></div>
<div class="a" style="left:1084.4px;top:501.5px;width:0.8px;height:193px;background:#3c3c3c;"></div>
<div class="a" style="left:1075.5px;top:505.1px;width:2.2px;height:0.8px;background:#6a6a6a;"></div>
<div class="a" style="left:1075.5px;top:520.5px;width:2.2px;height:0.8px;background:#6a6a6a;"></div>
<div class="a" style="left:1075.5px;top:539.8px;width:2.2px;height:0.8px;background:#6a6a6a;"></div>
<div class="a" style="left:1075.5px;top:558.9px;width:2.2px;height:0.8px;background:#6a6a6a;"></div>
<div class="a" style="left:1075.5px;top:577.9px;width:2.2px;height:0.8px;background:#6a6a6a;"></div>
<div class="a" style="left:1075.5px;top:597.1px;width:2.2px;height:0.8px;background:#6a6a6a;"></div>
<div class="a" style="left:1075.5px;top:617.3px;width:2.2px;height:0.8px;background:#6a6a6a;"></div>
<div class="a" style="left:1075.5px;top:634.1px;width:2.2px;height:0.8px;background:#6a6a6a;"></div>
<div class="a" style="left:1075.5px;top:649.1px;width:2.2px;height:0.8px;background:#6a6a6a;"></div>
<div class="a" style="left:1075.5px;top:661.4px;width:2.2px;height:0.8px;background:#6a6a6a;"></div>
<div class="a" style="left:1075.5px;top:672.9px;width:2.2px;height:0.8px;background:#6a6a6a;"></div>
<div class="a" style="left:1075.5px;top:683.9px;width:2.2px;height:0.8px;background:#6a6a6a;"></div>
<div class="a" style="left:1075.5px;top:691.1px;width:2.2px;height:0.8px;background:#555;"></div>
<div class="a" style="left:1079.7px;top:520.2px;width:10px;height:1.35px;background:#7e7e7e;"></div>
<div class="a" style="left:1080px;top:689.6px;width:4.3px;height:2.1px;background:#10a84a;"></div>
<div class="a" style="left:1080px;top:691.5px;width:4.3px;height:3px;background:#16f05a;"></div>
<div class="a" style="left:1085.2px;top:682.4px;width:4.3px;height:5.6px;background:#10a84a;"></div>
<div class="a" style="left:1085.2px;top:687.8px;width:4.3px;height:6.7px;background:#16f05a;"></div>
<div class="a" style="left:1080px;top:677.7px;width:4.3px;height:1px;background:#18d050;"></div>
<div class="a" style="left:1085.2px;top:675.5px;width:4.3px;height:1px;background:#18d050;"></div>
<div class="a" style="left:1092.7px;top:500.5px;width:14px;height:10px;line-height:10px;color:#b4b4b4;font-size:8.2px;"><span class="s">6</span></div>
<div class="a" style="left:1092.7px;top:515.9px;width:14px;height:10px;line-height:10px;color:#b4b4b4;font-size:8.2px;"><span class="s">0</span></div>
<div class="a" style="left:1092.7px;top:535.2px;width:14px;height:10px;line-height:10px;color:#b4b4b4;font-size:8.2px;"><span class="s">6</span></div>
<div class="a" style="left:1092.7px;top:554.3px;width:14px;height:10px;line-height:10px;color:#b4b4b4;font-size:8.2px;"><span class="s">12</span></div>
<div class="a" style="left:1092.7px;top:573.3px;width:14px;height:10px;line-height:10px;color:#b4b4b4;font-size:8.2px;"><span class="s">18</span></div>
<div class="a" style="left:1092.7px;top:592.5px;width:14px;height:10px;line-height:10px;color:#b4b4b4;font-size:8.2px;"><span class="s">24</span></div>
<div class="a" style="left:1092.7px;top:612.7px;width:14px;height:10px;line-height:10px;color:#b4b4b4;font-size:8.2px;"><span class="s">30</span></div>
<div class="a" style="left:1092.7px;top:629.5px;width:14px;height:10px;line-height:10px;color:#b4b4b4;font-size:8.2px;"><span class="s">36</span></div>
<div class="a" style="left:1092.7px;top:644.5px;width:14px;height:10px;line-height:10px;color:#b4b4b4;font-size:8.2px;"><span class="s">42</span></div>
<div class="a" style="left:1092.7px;top:656.8px;width:14px;height:10px;line-height:10px;color:#b4b4b4;font-size:8.2px;"><span class="s">48</span></div>
<div class="a" style="left:1092.7px;top:668.3px;width:14px;height:10px;line-height:10px;color:#b4b4b4;font-size:8.2px;"><span class="s">54</span></div>
<div class="a" style="left:1092.7px;top:679.3px;width:14px;height:10px;line-height:10px;color:#b4b4b4;font-size:8.2px;"><span class="s">60</span></div>
<svg class="a" style="left:1068.9px;top:515.2px" width="10" height="11.2" viewBox="0 0 10 11.2"><path d="M0.3 0.5 L9.6 5.6 L0.3 10.7 Z" fill="#c4c4c4"/></svg>
<svg class="a" style="left:1039.4px;top:620px" width="24" height="28" viewBox="0 0 24 28"><path d="M7.3 24.2 A10.3 10.3 0 1 1 16.7 24.2" fill="none" stroke="#131313" stroke-width="1.7"/><path d="M12 15 V4.4" stroke="#131313" stroke-width="1.6"/><path d="M9.1 0.5 H14.9 L12 3.9 Z" fill="#131313"/></svg>
<div class="a" style="left:1042.2px;top:648.8px;width:18.3px;height:17.4px;background:#ffad56;line-height:17.4px;text-align:center;color:#111;font-weight:bold;font-size:10.2px;box-shadow:0 0 0 0.6px #1c1c1c;"><span class="s">B</span></div>
<div class="a" style="left:1042.2px;top:671.3px;width:18.3px;height:9.4px;background:#1e1e1e;line-height:9.4px;text-align:center;color:#d0d0d0;font-size:8.2px;box-shadow:0 0 0 0.6px #2a2a2a;"><span class="s">S</span></div>
<div class="a" style="left:1110.2px;top:480.4px;width:82.3px;height:14.5px;background:#ffffff;line-height:14.5px;color:#1a1a1a;font-size:8.6px;padding-left:3.4px;box-sizing:border-box;white-space:nowrap;text-shadow:0 0 0.3px #1a1a1a;"><span class="s">Main</span></div>
<div class="a" style="left:1110.2px;top:495.6px;width:82.3px;height:204.2px;background:#3a3a3a;"></div>
<div class="a" style="left:1110.2px;top:701.8px;width:82.3px;height:5.2px;background:#ffffff;border-radius:0 0 3px 0;"></div>
<div class="a" style="left:1118.8px;top:500.9px;width:28.9px;height:10.2px;background:#1e1e1e;border-radius:5.2px;line-height:9.2px;text-align:center;color:#d4d4d4;font-size:8.8px;box-shadow:0 0 0 0.5px #2a2a2a;"><span class="s">-0.30</span></div>
<div class="a" style="left:1118.8px;top:515.8px;width:28.9px;height:10.4px;background:#1e1e1e;line-height:10.4px;text-align:center;color:#c8c8c8;font-size:8.8px;box-shadow:0 0 0 0.6px #2a2a2a;"><span class="s">0</span></div>
<div class="a" style="left:1161.4px;top:500.9px;width:10px;height:193.6px;background:#1b1b1b;border-radius:2px 2px 0 0;"></div>
<div class="a" style="left:1166.1px;top:501.5px;width:0.8px;height:193px;background:#3c3c3c;"></div>
<div class="a" style="left:1157.2px;top:505.1px;width:2.2px;height:0.8px;background:#6a6a6a;"></div>
<div class="a" style="left:1157.2px;top:520.5px;width:2.2px;height:0.8px;background:#6a6a6a;"></div>
<div class="a" style="left:1157.2px;top:539.8px;width:2.2px;height:0.8px;background:#6a6a6a;"></div>
<div class="a" style="left:1157.2px;top:558.9px;width:2.2px;height:0.8px;background:#6a6a6a;"></div>
<div class="a" style="left:1157.2px;top:577.9px;width:2.2px;height:0.8px;background:#6a6a6a;"></div>
<div class="a" style="left:1157.2px;top:597.1px;width:2.2px;height:0.8px;background:#6a6a6a;"></div>
<div class="a" style="left:1157.2px;top:617.3px;width:2.2px;height:0.8px;background:#6a6a6a;"></div>
<div class="a" style="left:1157.2px;top:634.1px;width:2.2px;height:0.8px;background:#6a6a6a;"></div>
<div class="a" style="left:1157.2px;top:649.1px;width:2.2px;height:0.8px;background:#6a6a6a;"></div>
<div class="a" style="left:1157.2px;top:661.4px;width:2.2px;height:0.8px;background:#6a6a6a;"></div>
<div class="a" style="left:1157.2px;top:672.9px;width:2.2px;height:0.8px;background:#6a6a6a;"></div>
<div class="a" style="left:1157.2px;top:683.9px;width:2.2px;height:0.8px;background:#6a6a6a;"></div>
<div class="a" style="left:1157.2px;top:691.1px;width:2.2px;height:0.8px;background:#555;"></div>
<div class="a" style="left:1161.4px;top:520.2px;width:10px;height:1.35px;background:#c03030;"></div>
<div class="a" style="left:1161.7px;top:568px;width:4.3px;height:8.2px;background:linear-gradient(#b8d020,#40e040);"></div>
<div class="a" style="left:1161.7px;top:576px;width:4.3px;height:118.5px;background:#16f05a;"></div>
<div class="a" style="left:1166.9px;top:568px;width:4.3px;height:8.2px;background:linear-gradient(#b8d020,#40e040);"></div>
<div class="a" style="left:1166.9px;top:576px;width:4.3px;height:118.5px;background:#16f05a;"></div>
<div class="a" style="left:1174.4px;top:500.5px;width:14px;height:10px;line-height:10px;color:#b4b4b4;font-size:8.2px;"><span class="s">6</span></div>
<div class="a" style="left:1174.4px;top:515.9px;width:14px;height:10px;line-height:10px;color:#b4b4b4;font-size:8.2px;"><span class="s">0</span></div>
<div class="a" style="left:1174.4px;top:535.2px;width:14px;height:10px;line-height:10px;color:#b4b4b4;font-size:8.2px;"><span class="s">6</span></div>
<div class="a" style="left:1174.4px;top:554.3px;width:14px;height:10px;line-height:10px;color:#b4b4b4;font-size:8.2px;"><span class="s">12</span></div>
<div class="a" style="left:1174.4px;top:573.3px;width:14px;height:10px;line-height:10px;color:#b4b4b4;font-size:8.2px;"><span class="s">18</span></div>
<div class="a" style="left:1174.4px;top:592.5px;width:14px;height:10px;line-height:10px;color:#b4b4b4;font-size:8.2px;"><span class="s">24</span></div>
<div class="a" style="left:1174.4px;top:612.7px;width:14px;height:10px;line-height:10px;color:#b4b4b4;font-size:8.2px;"><span class="s">30</span></div>
<div class="a" style="left:1174.4px;top:629.5px;width:14px;height:10px;line-height:10px;color:#b4b4b4;font-size:8.2px;"><span class="s">36</span></div>
<div class="a" style="left:1174.4px;top:644.5px;width:14px;height:10px;line-height:10px;color:#b4b4b4;font-size:8.2px;"><span class="s">42</span></div>
<div class="a" style="left:1174.4px;top:656.8px;width:14px;height:10px;line-height:10px;color:#b4b4b4;font-size:8.2px;"><span class="s">48</span></div>
<div class="a" style="left:1174.4px;top:668.3px;width:14px;height:10px;line-height:10px;color:#b4b4b4;font-size:8.2px;"><span class="s">54</span></div>
<div class="a" style="left:1174.4px;top:679.3px;width:14px;height:10px;line-height:10px;color:#b4b4b4;font-size:8.2px;"><span class="s">60</span></div>
<svg class="a" style="left:1150.6px;top:515.2px" width="10" height="11.2" viewBox="0 0 10 11.2"><path d="M0.3 0.5 L9.6 5.6 L0.3 10.7 Z" fill="#c4c4c4"/></svg>
<svg class="a" style="left:1120.6px;top:620px" width="24" height="28" viewBox="0 0 24 28"><path d="M7.3 24.2 A10.3 10.3 0 1 1 16.7 24.2" fill="none" stroke="#131313" stroke-width="1.7"/><path d="M12 15 V4.4" stroke="#131313" stroke-width="1.6"/><path d="M9.1 0.5 H14.9 L12 3.9 Z" fill="#131313"/></svg>
<div class="a" style="left:1123px;top:657px;width:19.6px;height:9.2px;background:#8c8c8c;line-height:9.2px;text-align:center;color:#222;font-size:8.2px;box-shadow:0 0 0 0.6px #1c1c1c;"><span class="s">Solo</span></div>
<svg class="a" style="left:1120.6px;top:670px" width="24" height="26" viewBox="0 0 24 26"><path d="M6.09 20.44 A10.3 10.3 0 1 1 22.14 13.79" fill="none" stroke="#3a6fd0" stroke-width="1.8"/><path d="M22.14 13.79 A10.3 10.3 0 0 1 17.91 20.44" fill="none" stroke="#151515" stroke-width="1.8"/><path d="M12.4 11.8 L21.8 13.7" stroke="#151515" stroke-width="1.7"/><path d="M9.5 21.6 Q9.5 18 12 18 Q14.5 18 14.5 21.6" fill="none" stroke="#b8b8b8" stroke-width="0.9"/><rect x="8.9" y="20.6" width="1.7" height="2.4" fill="#b8b8b8"/><rect x="13.4" y="20.6" width="1.7" height="2.4" fill="#b8b8b8"/></svg>
<svg class="a" style="left:9px;top:716.4px" width="13" height="13" viewBox="0 0 13 13"><circle cx="6.5" cy="6.5" r="6.2" fill="#444"/><rect x="5.7" y="5.4" width="1.6" height="4.6" fill="#2a2a2a"/><circle cx="6.5" cy="3.5" r="1" fill="#2a2a2a"/></svg>
<div class="a" style="left:35px;top:714.6px;width:750px;height:15.2px;background:#363636;border-radius:3px;"></div>
<div class="a" style="left:794px;top:714.6px;width:182.5px;height:15.2px;background:#363636;border-radius:3px;"></div>
<svg class="a" style="left:797px;top:717.4px" width="9" height="10" viewBox="0 0 9 10"><path d="M2 1.4 L7.4 4.8 L2 8.2 Z" fill="#b4b4b4"/></svg>
<div class="a" style="left:809.2px;top:714.6px;width:0.7px;height:15.2px;background:#2e2e2e;"></div>
<svg class="a" style="left:809.9px;top:714.6px" width="166.6" height="15.2" viewBox="0 0 166.6 15.2"><rect x="0.28" y="2.3" width="3.97" height="0.95" fill="#1b1b1b"/><rect x="30.82" y="2.3" width="2.08" height="0.95" fill="#1b1b1b"/><rect x="72.61" y="2.3" width="2.08" height="0.95" fill="#1b1b1b"/><rect x="83.48" y="2.3" width="3.97" height="0.95" fill="#1b1b1b"/><rect x="114.02" y="2.3" width="2.08" height="0.95" fill="#1b1b1b"/><rect x="155.81" y="2.3" width="2.08" height="0.95" fill="#1b1b1b"/><rect x="15.88" y="9.9" width="4.54" height="0.95" fill="#1b1b1b"/><rect x="36.68" y="9.9" width="4.54" height="0.95" fill="#1b1b1b"/><rect x="57.48" y="9.9" width="4.54" height="0.95" fill="#1b1b1b"/><rect x="78.28" y="9.9" width="4.54" height="0.95" fill="#1b1b1b"/><rect x="99.08" y="9.9" width="4.54" height="0.95" fill="#1b1b1b"/><rect x="119.88" y="9.9" width="4.54" height="0.95" fill="#1b1b1b"/><rect x="140.68" y="9.9" width="4.54" height="0.95" fill="#1b1b1b"/><rect x="161.48" y="9.9" width="4.54" height="0.95" fill="#1b1b1b"/><rect x="8.13" y="12.3" width="4.92" height="0.95" fill="#1b1b1b"/><rect x="20.61" y="12.3" width="4.92" height="0.95" fill="#1b1b1b"/><rect x="49.73" y="12.3" width="4.92" height="0.95" fill="#1b1b1b"/><rect x="62.21" y="12.3" width="4.92" height="0.95" fill="#1b1b1b"/><rect x="91.33" y="12.3" width="4.92" height="0.95" fill="#1b1b1b"/><rect x="103.81" y="12.3" width="4.92" height="0.95" fill="#1b1b1b"/><rect x="132.93" y="12.3" width="4.92" height="0.95" fill="#1b1b1b"/><rect x="145.41" y="12.3" width="4.92" height="0.95" fill="#1b1b1b"/><rect x="130.1" y="0.2" width="1.1" height="14.8" fill="#f0f0f0"/></svg>
<div class="a" style="left:984.7px;top:714.6px;width:168.2px;height:15.2px;background:#363636;border-radius:3px;"></div>
<svg class="a" style="left:988px;top:717.4px" width="9" height="10" viewBox="0 0 9 10"><path d="M2 1.4 L7.4 4.8 L2 8.2 Z" fill="#b4b4b4"/></svg>
<div class="a" style="left:1000.5px;top:714.6px;width:0.9px;height:15.2px;background:#2a2a2a;"></div>
<div class="a" style="left:1004px;top:714.6px;width:24px;height:15.2px;line-height:15.2px;color:#d0d0d0;font-size:8.8px;"><span class="s">Bass</span></div>
<svg class="a" style="left:1029.9px;top:714.8px" width="123" height="15.2" viewBox="0 0 123 15.2"><rect x="0" y="0" width="123" height="15.2" fill="#2a2a2a"/><rect x="0" y="0.4" width="10.2" height="14.6" fill="#1c1c1c"/><rect x="0.6" y="0.8" width="9" height="1.6" fill="#1e90ac"/><rect x="1" y="4" width="8" height="3.4" fill="#111"/><rect x="1.2" y="5.6" width="7" height="0.8" fill="#1e90ac"/><rect x="0.8" y="8.6" width="8.6" height="1.6" fill="#d8923a"/><rect x="2" y="11.4" width="5" height="1.2" fill="#4a4a4a"/><rect x="11" y="0.4" width="10.2" height="14.6" fill="#262626"/><circle cx="13.4" cy="4.6" r="1.6" fill="none" stroke="#555" stroke-width="0.7"/><path d="M12 5.2 a1.6 1.6 0 0 1 2.4 -1.8" fill="none" stroke="#1e90ac" stroke-width="0.8"/><circle cx="18.2" cy="4.2" r="1.6" fill="none" stroke="#555" stroke-width="0.7"/><path d="M16.8 4.8 a1.6 1.6 0 0 1 2.4 -1.8" fill="none" stroke="#1e90ac" stroke-width="0.8"/><circle cx="13.6" cy="11" r="1.6" fill="none" stroke="#555" stroke-width="0.7"/><path d="M12.2 11.6 a1.6 1.6 0 0 1 2.4 -1.8" fill="none" stroke="#d8923a" stroke-width="0.8"/><circle cx="18.4" cy="11.2" r="1.6" fill="none" stroke="#555" stroke-width="0.7"/><path d="M17 11.8 a1.6 1.6 0 0 1 2.4 -1.8" fill="none" stroke="#d8923a" stroke-width="0.8"/><rect x="22" y="0.4" width="34.4" height="14.6" fill="#222"/><rect x="22.6" y="3.4" width="15.6" height="9.6" fill="#0e0e0e"/><rect x="39.4" y="3.4" width="16.2" height="9.6" fill="#0e0e0e"/><rect x="27" y="1" width="6.4" height="1.4" fill="#1e90ac"/><path d="M23.4 5.4 H31 L33 8 H37.6 M23.4 10.6 H28 L30 11.8 H37.6 M40 6 L42 10.4 H47 L49 11.6 H55" fill="none" stroke="#1e90ac" stroke-width="0.7"/><rect x="23.4" y="4.4" width="3" height="0.8" fill="#3a6a78"/><rect x="40.4" y="4.2" width="4" height="0.8" fill="#3a6a78"/><rect x="57" y="0.4" width="14.6" height="14.6" fill="#262626"/><circle cx="59.4" cy="4.2" r="1.3" fill="none" stroke="#1e90ac" stroke-width="0.7"/><circle cx="59.4" cy="11" r="1.3" fill="none" stroke="#d8923a" stroke-width="0.7"/><circle cx="63.8" cy="4.2" r="1.3" fill="none" stroke="#1e90ac" stroke-width="0.7"/><circle cx="63.8" cy="11" r="1.3" fill="none" stroke="#666" stroke-width="0.7"/><circle cx="68.4" cy="4.2" r="1.3" fill="none" stroke="#666" stroke-width="0.7"/><circle cx="68.4" cy="11" r="1.3" fill="none" stroke="#1e90ac" stroke-width="0.7"/><rect x="62" y="7.2" width="2.4" height="0.9" fill="#555"/><rect x="66" y="7.2" width="3" height="0.9" fill="#555"/><rect x="72.6" y="0.4" width="5.6" height="14.6" fill="#202020"/><rect x="73.2" y="2.2" width="4.4" height="1.8" fill="#d8923a"/><rect x="73.2" y="5.4" width="4.4" height="1.2" fill="#555"/><rect x="73.2" y="8" width="4.4" height="1.2" fill="#444"/><rect x="73.2" y="10.6" width="4.4" height="2.4" fill="#3a3a3a"/><rect x="79.2" y="0.4" width="22.2" height="14.6" fill="#232323"/><rect x="79.8" y="0.9" width="1.4" height="1.2" fill="#d8923a"/><rect x="80.4" y="8.4" width="9.6" height="5.6" fill="#0e0e0e"/><rect x="80.6" y="3" width="4" height="0.9" fill="#1e90ac"/><rect x="86" y="4.4" width="4.4" height="0.9" fill="#4a4a4a"/><path d="M80.6 8.8 L86 13 H89.6" fill="none" stroke="#3a3a3a" stroke-width="0.8"/><rect x="91.6" y="3" width="3" height="1.2" fill="#1e90ac"/><rect x="95.4" y="2.6" width="5" height="1.2" fill="#555"/><rect x="96.4" y="6.2" width="4.4" height="1.4" fill="#d8923a"/><rect x="91.6" y="7.4" width="3" height="0.9" fill="#555"/><rect x="91.4" y="11.4" width="9.4" height="2.6" fill="#1a7a92"/><rect x="96.6" y="9" width="3.6" height="1" fill="#1e90ac"/><rect x="102.6" y="0.4" width="20.2" height="14.6" fill="#202020"/><rect x="103.2" y="0.9" width="1.4" height="1.2" fill="#d8923a"/><rect x="103.4" y="3.4" width="2.4" height="1" fill="#1e90ac"/><rect x="103.4" y="6.6" width="2.4" height="1" fill="#555"/><rect x="103.4" y="10.4" width="2.6" height="1" fill="#555"/><rect x="107.6" y="2.4" width="2.2" height="11.4" fill="#0e0e0e"/><rect x="110.6" y="2.4" width="2.2" height="11.4" fill="#0e0e0e"/><rect x="113.6" y="2.4" width="2.2" height="11.4" fill="#0e0e0e"/><rect x="118" y="2.2" width="4" height="1.4" fill="#d8923a"/><rect x="118" y="5" width="4" height="1.2" fill="#555"/><rect x="118" y="7.6" width="4" height="1.2" fill="#444"/><rect x="118.4" y="11" width="3.4" height="2.2" fill="#1a7a92"/></svg>
<svg class="a" style="left:1166px;top:715px" width="28" height="15" viewBox="0 0 28 15"><g fill="#ffad56"><rect x="0.9" y="5.5" width="1.6" height="7.4"/><rect x="4.5" y="1.8" width="1.6" height="11.1"/><rect x="8.1" y="6.2" width="1.6" height="6.7"/><rect x="11.7" y="3.6" width="1.6" height="9.3"/></g><path d="M18.6 6.2 H24 L21.3 9.8 Z" fill="#4a4a4a"/></svg>
</body></html>
